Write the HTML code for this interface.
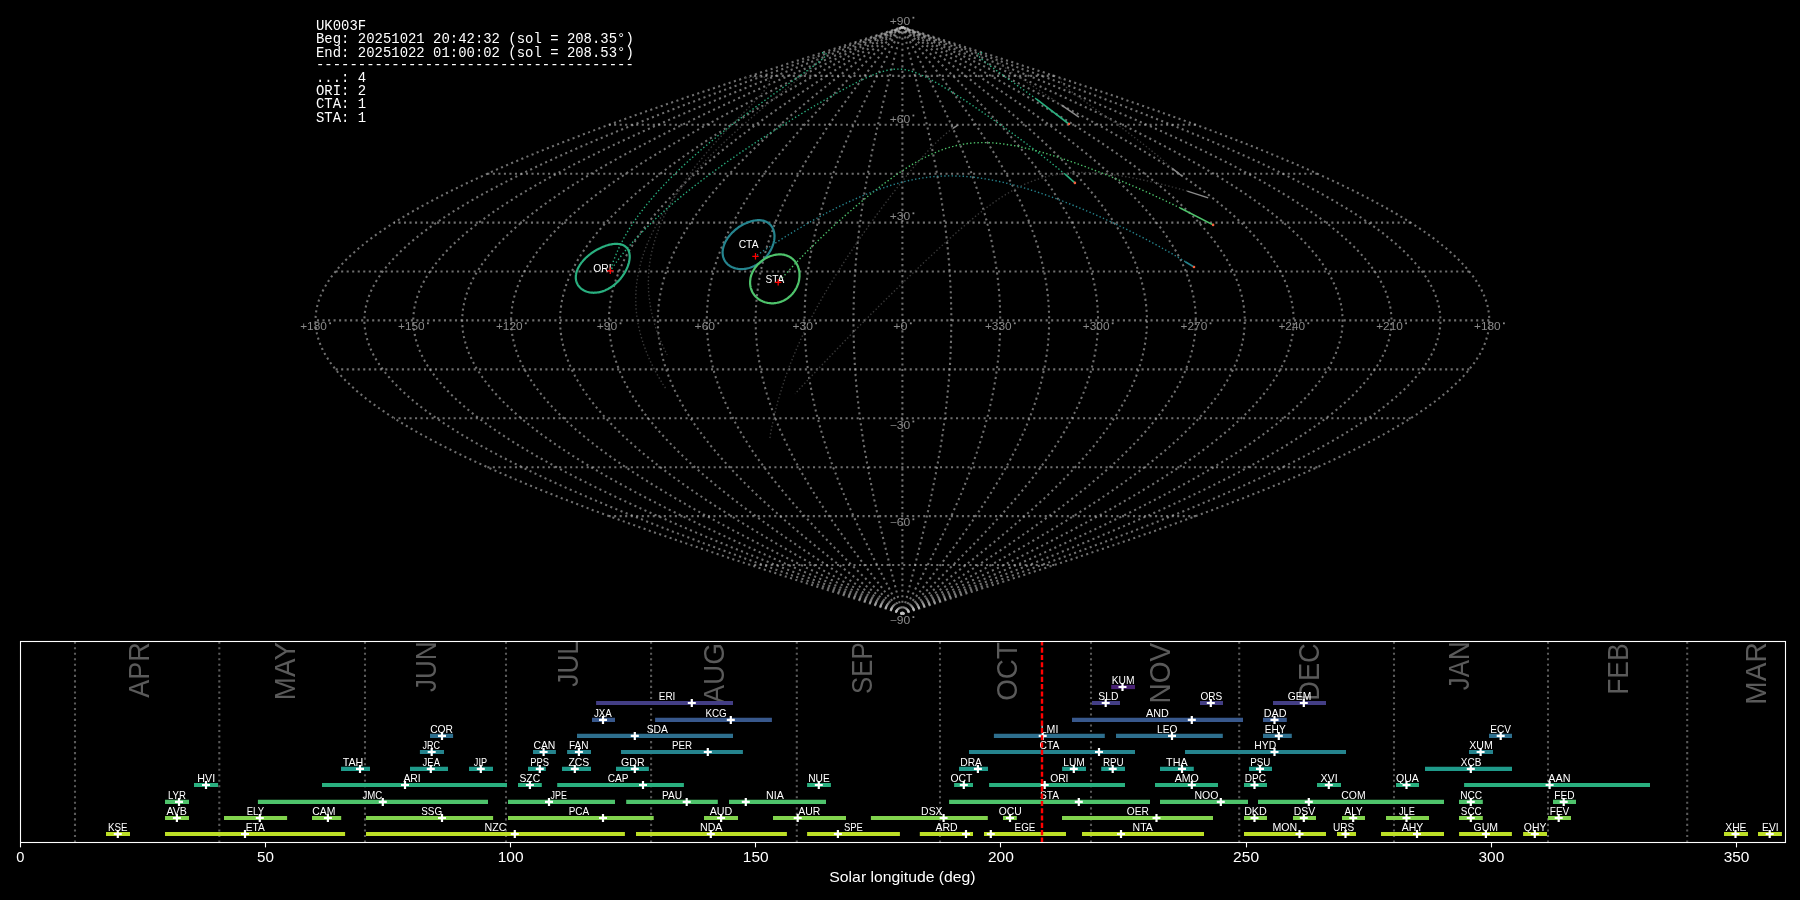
<!DOCTYPE html>
<html><head><meta charset="utf-8"><title>UK003F</title>
<style>html,body{margin:0;padding:0;background:#000;width:1800px;height:900px;overflow:hidden}svg{display:block;will-change:transform}</style>
</head><body>
<svg width="1800" height="900" viewBox="0 0 1800 900">
<rect width="1800" height="900" fill="#000"/>
<g fill="none" stroke="#c0c0c0" stroke-opacity="0.58" stroke-width="2.08" stroke-dasharray="2.08 3.44"><path d="M902.4 613.9 L907.5 612.3 L912.6 610.6 L917.8 609.0 L922.9 607.4 L928.0 605.7 L933.1 604.1 L938.2 602.5 L943.3 600.9 L948.4 599.2 L953.6 597.6 L958.7 596.0 L963.7 594.3 L968.8 592.7 L973.9 591.1 L979.0 589.4 L984.1 587.8 L989.1 586.2 L994.2 584.6 L999.3 582.9 L1004.3 581.3 L1009.4 579.7 L1014.4 578.0 L1019.4 576.4 L1024.4 574.8 L1029.4 573.1 L1034.4 571.5 L1039.4 569.9 L1044.4 568.3 L1049.3 566.6 L1054.3 565.0 L1059.2 563.4 L1064.2 561.7 L1069.1 560.1 L1074.0 558.5 L1078.9 556.8 L1083.8 555.2 L1088.6 553.6 L1093.5 551.9 L1098.3 550.3 L1103.1 548.7 L1107.9 547.1 L1112.7 545.4 L1117.5 543.8 L1122.3 542.2 L1127.0 540.5 L1131.7 538.9 L1136.4 537.3 L1141.1 535.6 L1145.8 534.0 L1150.4 532.4 L1155.1 530.8 L1159.7 529.1 L1164.3 527.5 L1168.8 525.9 L1173.4 524.2 L1177.9 522.6 L1182.4 521.0 L1186.9 519.3 L1191.4 517.7 L1195.8 516.1 L1200.3 514.5 L1204.7 512.8 L1209.1 511.2 L1213.4 509.6 L1217.7 507.9 L1222.0 506.3 L1226.3 504.7 L1230.6 503.0 L1234.8 501.4 L1239.0 499.8 L1243.2 498.2 L1247.4 496.5 L1251.5 494.9 L1255.6 493.3 L1259.7 491.6 L1263.7 490.0 L1267.8 488.4 L1271.7 486.7 L1275.7 485.1 L1279.7 483.5 L1283.6 481.8 L1287.4 480.2 L1291.3 478.6 L1295.1 477.0 L1298.9 475.3 L1302.7 473.7 L1306.4 472.1 L1310.1 470.4 L1313.8 468.8 L1317.4 467.2 L1321.0 465.5 L1324.6 463.9 L1328.1 462.3 L1331.6 460.7 L1335.1 459.0 L1338.6 457.4 L1342.0 455.8 L1345.3 454.1 L1348.7 452.5 L1352.0 450.9 L1355.3 449.2 L1358.5 447.6 L1361.7 446.0 L1364.9 444.4 L1368.0 442.7 L1371.1 441.1 L1374.2 439.5 L1377.2 437.8 L1380.2 436.2 L1383.2 434.6 L1386.1 432.9 L1389.0 431.3 L1391.8 429.7 L1394.6 428.0 L1397.4 426.4 L1400.1 424.8 L1402.8 423.2 L1405.5 421.5 L1408.1 419.9 L1410.7 418.3 L1413.2 416.6 L1415.7 415.0 L1418.2 413.4 L1420.6 411.7 L1423.0 410.1 L1425.3 408.5 L1427.6 406.9 L1429.9 405.2 L1432.1 403.6 L1434.3 402.0 L1436.5 400.3 L1438.6 398.7 L1440.6 397.1 L1442.6 395.4 L1444.6 393.8 L1446.6 392.2 L1448.5 390.6 L1450.3 388.9 L1452.1 387.3 L1453.9 385.7 L1455.6 384.0 L1457.3 382.4 L1459.0 380.8 L1460.6 379.1 L1462.1 377.5 L1463.7 375.9 L1465.1 374.2 L1466.6 372.6 L1468.0 371.0 L1469.3 369.4 L1470.6 367.7 L1471.9 366.1 L1473.1 364.5 L1474.3 362.8 L1475.4 361.2 L1476.5 359.6 L1477.5 357.9 L1478.5 356.3 L1479.5 354.7 L1480.4 353.1 L1481.3 351.4 L1482.1 349.8 L1482.9 348.2 L1483.6 346.5 L1484.3 344.9 L1484.9 343.3 L1485.5 341.6 L1486.1 340.0 L1486.6 338.4 L1487.1 336.8 L1487.5 335.1 L1487.9 333.5 L1488.2 331.9 L1488.5 330.2 L1488.7 328.6 L1488.9 327.0 L1489.1 325.3 L1489.2 323.7 L1489.3 322.1 L1489.3 320.4 L1489.3 318.8 L1489.2 317.2 L1489.1 315.6 L1488.9 313.9 L1488.7 312.3 L1488.5 310.7 L1488.2 309.0 L1487.9 307.4 L1487.5 305.8 L1487.1 304.1 L1486.6 302.5 L1486.1 300.9 L1485.5 299.3 L1484.9 297.6 L1484.3 296.0 L1483.6 294.4 L1482.9 292.7 L1482.1 291.1 L1481.3 289.5 L1480.4 287.8 L1479.5 286.2 L1478.5 284.6 L1477.5 283.0 L1476.5 281.3 L1475.4 279.7 L1474.3 278.1 L1473.1 276.4 L1471.9 274.8 L1470.6 273.2 L1469.3 271.5 L1468.0 269.9 L1466.6 268.3 L1465.1 266.7 L1463.7 265.0 L1462.1 263.4 L1460.6 261.8 L1459.0 260.1 L1457.3 258.5 L1455.6 256.9 L1453.9 255.2 L1452.1 253.6 L1450.3 252.0 L1448.5 250.3 L1446.6 248.7 L1444.6 247.1 L1442.6 245.5 L1440.6 243.8 L1438.6 242.2 L1436.5 240.6 L1434.3 238.9 L1432.1 237.3 L1429.9 235.7 L1427.6 234.0 L1425.3 232.4 L1423.0 230.8 L1420.6 229.2 L1418.2 227.5 L1415.7 225.9 L1413.2 224.3 L1410.7 222.6 L1408.1 221.0 L1405.5 219.4 L1402.8 217.7 L1400.1 216.1 L1397.4 214.5 L1394.6 212.9 L1391.8 211.2 L1389.0 209.6 L1386.1 208.0 L1383.2 206.3 L1380.2 204.7 L1377.2 203.1 L1374.2 201.4 L1371.1 199.8 L1368.0 198.2 L1364.9 196.5 L1361.7 194.9 L1358.5 193.3 L1355.3 191.7 L1352.0 190.0 L1348.7 188.4 L1345.3 186.8 L1342.0 185.1 L1338.6 183.5 L1335.1 181.9 L1331.6 180.2 L1328.1 178.6 L1324.6 177.0 L1321.0 175.4 L1317.4 173.7 L1313.8 172.1 L1310.1 170.5 L1306.4 168.8 L1302.7 167.2 L1298.9 165.6 L1295.1 163.9 L1291.3 162.3 L1287.4 160.7 L1283.6 159.1 L1279.7 157.4 L1275.7 155.8 L1271.7 154.2 L1267.8 152.5 L1263.7 150.9 L1259.7 149.3 L1255.6 147.6 L1251.5 146.0 L1247.4 144.4 L1243.2 142.7 L1239.0 141.1 L1234.8 139.5 L1230.6 137.9 L1226.3 136.2 L1222.0 134.6 L1217.7 133.0 L1213.4 131.3 L1209.1 129.7 L1204.7 128.1 L1200.3 126.4 L1195.8 124.8 L1191.4 123.2 L1186.9 121.6 L1182.4 119.9 L1177.9 118.3 L1173.4 116.7 L1168.8 115.0 L1164.3 113.4 L1159.7 111.8 L1155.1 110.1 L1150.4 108.5 L1145.8 106.9 L1141.1 105.3 L1136.4 103.6 L1131.7 102.0 L1127.0 100.4 L1122.3 98.7 L1117.5 97.1 L1112.7 95.5 L1107.9 93.8 L1103.1 92.2 L1098.3 90.6 L1093.5 89.0 L1088.6 87.3 L1083.8 85.7 L1078.9 84.1 L1074.0 82.4 L1069.1 80.8 L1064.2 79.2 L1059.2 77.5 L1054.3 75.9 L1049.3 74.3 L1044.4 72.6 L1039.4 71.0 L1034.4 69.4 L1029.4 67.8 L1024.4 66.1 L1019.4 64.5 L1014.4 62.9 L1009.4 61.2 L1004.3 59.6 L999.3 58.0 L994.2 56.3 L989.1 54.7 L984.1 53.1 L979.0 51.5 L973.9 49.8 L968.8 48.2 L963.7 46.6 L958.7 44.9 L953.6 43.3 L948.4 41.7 L943.3 40.0 L938.2 38.4 L933.1 36.8 L928.0 35.2 L922.9 33.5 L917.8 31.9 L912.6 30.3 L907.5 28.6 L902.4 27.0"/><path d="M902.4 613.9 L907.1 612.3 L911.8 610.6 L916.5 609.0 L921.2 607.4 L925.9 605.7 L930.6 604.1 L935.2 602.5 L939.9 600.9 L944.6 599.2 L949.3 597.6 L954.0 596.0 L958.6 594.3 L963.3 592.7 L968.0 591.1 L972.6 589.4 L977.3 587.8 L981.9 586.2 L986.6 584.6 L991.2 582.9 L995.8 581.3 L1000.4 579.7 L1005.1 578.0 L1009.7 576.4 L1014.3 574.8 L1018.8 573.1 L1023.4 571.5 L1028.0 569.9 L1032.6 568.3 L1037.1 566.6 L1041.6 565.0 L1046.2 563.4 L1050.7 561.7 L1055.2 560.1 L1059.7 558.5 L1064.2 556.8 L1068.6 555.2 L1073.1 553.6 L1077.6 551.9 L1082.0 550.3 L1086.4 548.7 L1090.8 547.1 L1095.2 545.4 L1099.6 543.8 L1103.9 542.2 L1108.3 540.5 L1112.6 538.9 L1116.9 537.3 L1121.2 535.6 L1125.5 534.0 L1129.8 532.4 L1134.0 530.8 L1138.2 529.1 L1142.5 527.5 L1146.6 525.9 L1150.8 524.2 L1155.0 522.6 L1159.1 521.0 L1163.2 519.3 L1167.3 517.7 L1171.4 516.1 L1175.5 514.5 L1179.5 512.8 L1183.5 511.2 L1187.5 509.6 L1191.5 507.9 L1195.4 506.3 L1199.3 504.7 L1203.2 503.0 L1207.1 501.4 L1211.0 499.8 L1214.8 498.2 L1218.6 496.5 L1222.4 494.9 L1226.2 493.3 L1229.9 491.6 L1233.6 490.0 L1237.3 488.4 L1241.0 486.7 L1244.6 485.1 L1248.2 483.5 L1251.8 481.8 L1255.4 480.2 L1258.9 478.6 L1262.4 477.0 L1265.9 475.3 L1269.3 473.7 L1272.7 472.1 L1276.1 470.4 L1279.5 468.8 L1282.8 467.2 L1286.1 465.5 L1289.4 463.9 L1292.6 462.3 L1295.9 460.7 L1299.0 459.0 L1302.2 457.4 L1305.3 455.8 L1308.4 454.1 L1311.5 452.5 L1314.5 450.9 L1317.5 449.2 L1320.5 447.6 L1323.4 446.0 L1326.3 444.4 L1329.2 442.7 L1332.1 441.1 L1334.9 439.5 L1337.6 437.8 L1340.4 436.2 L1343.1 434.6 L1345.8 432.9 L1348.4 431.3 L1351.0 429.7 L1353.6 428.0 L1356.1 426.4 L1358.6 424.8 L1361.1 423.2 L1363.5 421.5 L1365.9 419.9 L1368.3 418.3 L1370.6 416.6 L1372.9 415.0 L1375.2 413.4 L1377.4 411.7 L1379.6 410.1 L1381.8 408.5 L1383.9 406.9 L1385.9 405.2 L1388.0 403.6 L1390.0 402.0 L1392.0 400.3 L1393.9 398.7 L1395.8 397.1 L1397.6 395.4 L1399.4 393.8 L1401.2 392.2 L1403.0 390.6 L1404.7 388.9 L1406.3 387.3 L1407.9 385.7 L1409.5 384.0 L1411.1 382.4 L1412.6 380.8 L1414.1 379.1 L1415.5 377.5 L1416.9 375.9 L1418.2 374.2 L1419.6 372.6 L1420.8 371.0 L1422.1 369.4 L1423.3 367.7 L1424.4 366.1 L1425.5 364.5 L1426.6 362.8 L1427.6 361.2 L1428.6 359.6 L1429.6 357.9 L1430.5 356.3 L1431.4 354.7 L1432.2 353.1 L1433.0 351.4 L1433.8 349.8 L1434.5 348.2 L1435.2 346.5 L1435.8 344.9 L1436.4 343.3 L1436.9 341.6 L1437.4 340.0 L1437.9 338.4 L1438.3 336.8 L1438.7 335.1 L1439.1 333.5 L1439.4 331.9 L1439.7 330.2 L1439.9 328.6 L1440.1 327.0 L1440.2 325.3 L1440.3 323.7 L1440.4 322.1 L1440.4 320.4 L1440.4 318.8 L1440.3 317.2 L1440.2 315.6 L1440.1 313.9 L1439.9 312.3 L1439.7 310.7 L1439.4 309.0 L1439.1 307.4 L1438.7 305.8 L1438.3 304.1 L1437.9 302.5 L1437.4 300.9 L1436.9 299.3 L1436.4 297.6 L1435.8 296.0 L1435.2 294.4 L1434.5 292.7 L1433.8 291.1 L1433.0 289.5 L1432.2 287.8 L1431.4 286.2 L1430.5 284.6 L1429.6 283.0 L1428.6 281.3 L1427.6 279.7 L1426.6 278.1 L1425.5 276.4 L1424.4 274.8 L1423.3 273.2 L1422.1 271.5 L1420.8 269.9 L1419.6 268.3 L1418.2 266.7 L1416.9 265.0 L1415.5 263.4 L1414.1 261.8 L1412.6 260.1 L1411.1 258.5 L1409.5 256.9 L1407.9 255.2 L1406.3 253.6 L1404.7 252.0 L1403.0 250.3 L1401.2 248.7 L1399.4 247.1 L1397.6 245.5 L1395.8 243.8 L1393.9 242.2 L1392.0 240.6 L1390.0 238.9 L1388.0 237.3 L1385.9 235.7 L1383.9 234.0 L1381.8 232.4 L1379.6 230.8 L1377.4 229.2 L1375.2 227.5 L1372.9 225.9 L1370.6 224.3 L1368.3 222.6 L1365.9 221.0 L1363.5 219.4 L1361.1 217.7 L1358.6 216.1 L1356.1 214.5 L1353.6 212.9 L1351.0 211.2 L1348.4 209.6 L1345.8 208.0 L1343.1 206.3 L1340.4 204.7 L1337.6 203.1 L1334.9 201.4 L1332.1 199.8 L1329.2 198.2 L1326.3 196.5 L1323.4 194.9 L1320.5 193.3 L1317.5 191.7 L1314.5 190.0 L1311.5 188.4 L1308.4 186.8 L1305.3 185.1 L1302.2 183.5 L1299.0 181.9 L1295.9 180.2 L1292.6 178.6 L1289.4 177.0 L1286.1 175.4 L1282.8 173.7 L1279.5 172.1 L1276.1 170.5 L1272.7 168.8 L1269.3 167.2 L1265.9 165.6 L1262.4 163.9 L1258.9 162.3 L1255.4 160.7 L1251.8 159.1 L1248.2 157.4 L1244.6 155.8 L1241.0 154.2 L1237.3 152.5 L1233.6 150.9 L1229.9 149.3 L1226.2 147.6 L1222.4 146.0 L1218.6 144.4 L1214.8 142.7 L1211.0 141.1 L1207.1 139.5 L1203.2 137.9 L1199.3 136.2 L1195.4 134.6 L1191.5 133.0 L1187.5 131.3 L1183.5 129.7 L1179.5 128.1 L1175.5 126.4 L1171.4 124.8 L1167.3 123.2 L1163.2 121.6 L1159.1 119.9 L1155.0 118.3 L1150.8 116.7 L1146.6 115.0 L1142.5 113.4 L1138.2 111.8 L1134.0 110.1 L1129.8 108.5 L1125.5 106.9 L1121.2 105.3 L1116.9 103.6 L1112.6 102.0 L1108.3 100.4 L1103.9 98.7 L1099.6 97.1 L1095.2 95.5 L1090.8 93.8 L1086.4 92.2 L1082.0 90.6 L1077.6 89.0 L1073.1 87.3 L1068.6 85.7 L1064.2 84.1 L1059.7 82.4 L1055.2 80.8 L1050.7 79.2 L1046.2 77.5 L1041.6 75.9 L1037.1 74.3 L1032.6 72.6 L1028.0 71.0 L1023.4 69.4 L1018.8 67.8 L1014.3 66.1 L1009.7 64.5 L1005.1 62.9 L1000.4 61.2 L995.8 59.6 L991.2 58.0 L986.6 56.3 L981.9 54.7 L977.3 53.1 L972.6 51.5 L968.0 49.8 L963.3 48.2 L958.6 46.6 L954.0 44.9 L949.3 43.3 L944.6 41.7 L939.9 40.0 L935.2 38.4 L930.6 36.8 L925.9 35.2 L921.2 33.5 L916.5 31.9 L911.8 30.3 L907.1 28.6 L902.4 27.0"/><path d="M902.4 613.9 L906.7 612.3 L910.9 610.6 L915.2 609.0 L919.5 607.4 L923.7 605.7 L928.0 604.1 L932.3 602.5 L936.5 600.9 L940.8 599.2 L945.0 597.6 L949.3 596.0 L953.5 594.3 L957.8 592.7 L962.0 591.1 L966.2 589.4 L970.5 587.8 L974.7 586.2 L978.9 584.6 L983.1 582.9 L987.3 581.3 L991.5 579.7 L995.7 578.0 L999.9 576.4 L1004.1 574.8 L1008.3 573.1 L1012.4 571.5 L1016.6 569.9 L1020.7 568.3 L1024.9 566.6 L1029.0 565.0 L1033.1 563.4 L1037.2 561.7 L1041.3 560.1 L1045.4 558.5 L1049.5 556.8 L1053.5 555.2 L1057.6 553.6 L1061.6 551.9 L1065.7 550.3 L1069.7 548.7 L1073.7 547.1 L1077.7 545.4 L1081.6 543.8 L1085.6 542.2 L1089.6 540.5 L1093.5 538.9 L1097.4 537.3 L1101.3 535.6 L1105.2 534.0 L1109.1 532.4 L1113.0 530.8 L1116.8 529.1 L1120.6 527.5 L1124.4 525.9 L1128.2 524.2 L1132.0 522.6 L1135.8 521.0 L1139.5 519.3 L1143.2 517.7 L1146.9 516.1 L1150.6 514.5 L1154.3 512.8 L1157.9 511.2 L1161.6 509.6 L1165.2 507.9 L1168.8 506.3 L1172.3 504.7 L1175.9 503.0 L1179.4 501.4 L1182.9 499.8 L1186.4 498.2 L1189.9 496.5 L1193.3 494.9 L1196.7 493.3 L1200.1 491.6 L1203.5 490.0 L1206.9 488.4 L1210.2 486.7 L1213.5 485.1 L1216.8 483.5 L1220.0 481.8 L1223.3 480.2 L1226.5 478.6 L1229.7 477.0 L1232.8 475.3 L1236.0 473.7 L1239.1 472.1 L1242.1 470.4 L1245.2 468.8 L1248.2 467.2 L1251.2 465.5 L1254.2 463.9 L1257.2 462.3 L1260.1 460.7 L1263.0 459.0 L1265.9 457.4 L1268.7 455.8 L1271.5 454.1 L1274.3 452.5 L1277.1 450.9 L1279.8 449.2 L1282.5 447.6 L1285.2 446.0 L1287.8 444.4 L1290.4 442.7 L1293.0 441.1 L1295.6 439.5 L1298.1 437.8 L1300.6 436.2 L1303.0 434.6 L1305.5 432.9 L1307.9 431.3 L1310.2 429.7 L1312.6 428.0 L1314.9 426.4 L1317.2 424.8 L1319.4 423.2 L1321.6 421.5 L1323.8 419.9 L1326.0 418.3 L1328.1 416.6 L1330.2 415.0 L1332.2 413.4 L1334.2 411.7 L1336.2 410.1 L1338.2 408.5 L1340.1 406.9 L1342.0 405.2 L1343.8 403.6 L1345.7 402.0 L1347.4 400.3 L1349.2 398.7 L1350.9 397.1 L1352.6 395.4 L1354.3 393.8 L1355.9 392.2 L1357.5 390.6 L1359.0 388.9 L1360.5 387.3 L1362.0 385.7 L1363.4 384.0 L1364.8 382.4 L1366.2 380.8 L1367.5 379.1 L1368.8 377.5 L1370.1 375.9 L1371.3 374.2 L1372.5 372.6 L1373.7 371.0 L1374.8 369.4 L1375.9 367.7 L1377.0 366.1 L1378.0 364.5 L1378.9 362.8 L1379.9 361.2 L1380.8 359.6 L1381.7 357.9 L1382.5 356.3 L1383.3 354.7 L1384.1 353.1 L1384.8 351.4 L1385.5 349.8 L1386.1 348.2 L1386.7 346.5 L1387.3 344.9 L1387.8 343.3 L1388.3 341.6 L1388.8 340.0 L1389.2 338.4 L1389.6 336.8 L1390.0 335.1 L1390.3 333.5 L1390.6 331.9 L1390.8 330.2 L1391.0 328.6 L1391.2 327.0 L1391.3 325.3 L1391.4 323.7 L1391.5 322.1 L1391.5 320.4 L1391.5 318.8 L1391.4 317.2 L1391.3 315.6 L1391.2 313.9 L1391.0 312.3 L1390.8 310.7 L1390.6 309.0 L1390.3 307.4 L1390.0 305.8 L1389.6 304.1 L1389.2 302.5 L1388.8 300.9 L1388.3 299.3 L1387.8 297.6 L1387.3 296.0 L1386.7 294.4 L1386.1 292.7 L1385.5 291.1 L1384.8 289.5 L1384.1 287.8 L1383.3 286.2 L1382.5 284.6 L1381.7 283.0 L1380.8 281.3 L1379.9 279.7 L1378.9 278.1 L1378.0 276.4 L1377.0 274.8 L1375.9 273.2 L1374.8 271.5 L1373.7 269.9 L1372.5 268.3 L1371.3 266.7 L1370.1 265.0 L1368.8 263.4 L1367.5 261.8 L1366.2 260.1 L1364.8 258.5 L1363.4 256.9 L1362.0 255.2 L1360.5 253.6 L1359.0 252.0 L1357.5 250.3 L1355.9 248.7 L1354.3 247.1 L1352.6 245.5 L1350.9 243.8 L1349.2 242.2 L1347.4 240.6 L1345.7 238.9 L1343.8 237.3 L1342.0 235.7 L1340.1 234.0 L1338.2 232.4 L1336.2 230.8 L1334.2 229.2 L1332.2 227.5 L1330.2 225.9 L1328.1 224.3 L1326.0 222.6 L1323.8 221.0 L1321.6 219.4 L1319.4 217.7 L1317.2 216.1 L1314.9 214.5 L1312.6 212.9 L1310.2 211.2 L1307.9 209.6 L1305.5 208.0 L1303.0 206.3 L1300.6 204.7 L1298.1 203.1 L1295.6 201.4 L1293.0 199.8 L1290.4 198.2 L1287.8 196.5 L1285.2 194.9 L1282.5 193.3 L1279.8 191.7 L1277.1 190.0 L1274.3 188.4 L1271.5 186.8 L1268.7 185.1 L1265.9 183.5 L1263.0 181.9 L1260.1 180.2 L1257.2 178.6 L1254.2 177.0 L1251.2 175.4 L1248.2 173.7 L1245.2 172.1 L1242.1 170.5 L1239.1 168.8 L1236.0 167.2 L1232.8 165.6 L1229.7 163.9 L1226.5 162.3 L1223.3 160.7 L1220.0 159.1 L1216.8 157.4 L1213.5 155.8 L1210.2 154.2 L1206.9 152.5 L1203.5 150.9 L1200.1 149.3 L1196.7 147.6 L1193.3 146.0 L1189.9 144.4 L1186.4 142.7 L1182.9 141.1 L1179.4 139.5 L1175.9 137.9 L1172.3 136.2 L1168.8 134.6 L1165.2 133.0 L1161.6 131.3 L1157.9 129.7 L1154.3 128.1 L1150.6 126.4 L1146.9 124.8 L1143.2 123.2 L1139.5 121.6 L1135.8 119.9 L1132.0 118.3 L1128.2 116.7 L1124.4 115.0 L1120.6 113.4 L1116.8 111.8 L1113.0 110.1 L1109.1 108.5 L1105.2 106.9 L1101.3 105.3 L1097.4 103.6 L1093.5 102.0 L1089.6 100.4 L1085.6 98.7 L1081.6 97.1 L1077.7 95.5 L1073.7 93.8 L1069.7 92.2 L1065.7 90.6 L1061.6 89.0 L1057.6 87.3 L1053.5 85.7 L1049.5 84.1 L1045.4 82.4 L1041.3 80.8 L1037.2 79.2 L1033.1 77.5 L1029.0 75.9 L1024.9 74.3 L1020.7 72.6 L1016.6 71.0 L1012.4 69.4 L1008.3 67.8 L1004.1 66.1 L999.9 64.5 L995.7 62.9 L991.5 61.2 L987.3 59.6 L983.1 58.0 L978.9 56.3 L974.7 54.7 L970.5 53.1 L966.2 51.5 L962.0 49.8 L957.8 48.2 L953.5 46.6 L949.3 44.9 L945.0 43.3 L940.8 41.7 L936.5 40.0 L932.3 38.4 L928.0 36.8 L923.7 35.2 L919.5 33.5 L915.2 31.9 L910.9 30.3 L906.7 28.6 L902.4 27.0"/><path d="M902.4 613.9 L906.2 612.3 L910.1 610.6 L913.9 609.0 L917.8 607.4 L921.6 605.7 L925.4 604.1 L929.3 602.5 L933.1 600.9 L936.9 599.2 L940.8 597.6 L944.6 596.0 L948.4 594.3 L952.2 592.7 L956.0 591.1 L959.9 589.4 L963.7 587.8 L967.5 586.2 L971.3 584.6 L975.0 582.9 L978.8 581.3 L982.6 579.7 L986.4 578.0 L990.2 576.4 L993.9 574.8 L997.7 573.1 L1001.4 571.5 L1005.2 569.9 L1008.9 568.3 L1012.6 566.6 L1016.3 565.0 L1020.0 563.4 L1023.7 561.7 L1027.4 560.1 L1031.1 558.5 L1034.8 556.8 L1038.4 555.2 L1042.1 553.6 L1045.7 551.9 L1049.3 550.3 L1052.9 548.7 L1056.6 547.1 L1060.1 545.4 L1063.7 543.8 L1067.3 542.2 L1070.8 540.5 L1074.4 538.9 L1077.9 537.3 L1081.4 535.6 L1084.9 534.0 L1088.4 532.4 L1091.9 530.8 L1095.4 529.1 L1098.8 527.5 L1102.2 525.9 L1105.7 524.2 L1109.0 522.6 L1112.4 521.0 L1115.8 519.3 L1119.2 517.7 L1122.5 516.1 L1125.8 514.5 L1129.1 512.8 L1132.4 511.2 L1135.7 509.6 L1138.9 507.9 L1142.1 506.3 L1145.3 504.7 L1148.5 503.0 L1151.7 501.4 L1154.9 499.8 L1158.0 498.2 L1161.1 496.5 L1164.2 494.9 L1167.3 493.3 L1170.4 491.6 L1173.4 490.0 L1176.4 488.4 L1179.4 486.7 L1182.4 485.1 L1185.3 483.5 L1188.3 481.8 L1191.2 480.2 L1194.1 478.6 L1196.9 477.0 L1199.8 475.3 L1202.6 473.7 L1205.4 472.1 L1208.2 470.4 L1210.9 468.8 L1213.7 467.2 L1216.4 465.5 L1219.0 463.9 L1221.7 462.3 L1224.3 460.7 L1226.9 459.0 L1229.5 457.4 L1232.1 455.8 L1234.6 454.1 L1237.1 452.5 L1239.6 450.9 L1242.0 449.2 L1244.5 447.6 L1246.9 446.0 L1249.3 444.4 L1251.6 442.7 L1253.9 441.1 L1256.2 439.5 L1258.5 437.8 L1260.8 436.2 L1263.0 434.6 L1265.2 432.9 L1267.3 431.3 L1269.5 429.7 L1271.6 428.0 L1273.6 426.4 L1275.7 424.8 L1277.7 423.2 L1279.7 421.5 L1281.7 419.9 L1283.6 418.3 L1285.5 416.6 L1287.4 415.0 L1289.2 413.4 L1291.1 411.7 L1292.8 410.1 L1294.6 408.5 L1296.3 406.9 L1298.0 405.2 L1299.7 403.6 L1301.3 402.0 L1302.9 400.3 L1304.5 398.7 L1306.1 397.1 L1307.6 395.4 L1309.1 393.8 L1310.5 392.2 L1311.9 390.6 L1313.3 388.9 L1314.7 387.3 L1316.0 385.7 L1317.3 384.0 L1318.6 382.4 L1319.8 380.8 L1321.0 379.1 L1322.2 377.5 L1323.3 375.9 L1324.4 374.2 L1325.5 372.6 L1326.6 371.0 L1327.6 369.4 L1328.6 367.7 L1329.5 366.1 L1330.4 364.5 L1331.3 362.8 L1332.1 361.2 L1333.0 359.6 L1333.7 357.9 L1334.5 356.3 L1335.2 354.7 L1335.9 353.1 L1336.5 351.4 L1337.2 349.8 L1337.7 348.2 L1338.3 346.5 L1338.8 344.9 L1339.3 343.3 L1339.7 341.6 L1340.2 340.0 L1340.5 338.4 L1340.9 336.8 L1341.2 335.1 L1341.5 333.5 L1341.8 331.9 L1342.0 330.2 L1342.2 328.6 L1342.3 327.0 L1342.4 325.3 L1342.5 323.7 L1342.6 322.1 L1342.6 320.4 L1342.6 318.8 L1342.5 317.2 L1342.4 315.6 L1342.3 313.9 L1342.2 312.3 L1342.0 310.7 L1341.8 309.0 L1341.5 307.4 L1341.2 305.8 L1340.9 304.1 L1340.5 302.5 L1340.2 300.9 L1339.7 299.3 L1339.3 297.6 L1338.8 296.0 L1338.3 294.4 L1337.7 292.7 L1337.2 291.1 L1336.5 289.5 L1335.9 287.8 L1335.2 286.2 L1334.5 284.6 L1333.7 283.0 L1333.0 281.3 L1332.1 279.7 L1331.3 278.1 L1330.4 276.4 L1329.5 274.8 L1328.6 273.2 L1327.6 271.5 L1326.6 269.9 L1325.5 268.3 L1324.4 266.7 L1323.3 265.0 L1322.2 263.4 L1321.0 261.8 L1319.8 260.1 L1318.6 258.5 L1317.3 256.9 L1316.0 255.2 L1314.7 253.6 L1313.3 252.0 L1311.9 250.3 L1310.5 248.7 L1309.1 247.1 L1307.6 245.5 L1306.1 243.8 L1304.5 242.2 L1302.9 240.6 L1301.3 238.9 L1299.7 237.3 L1298.0 235.7 L1296.3 234.0 L1294.6 232.4 L1292.8 230.8 L1291.1 229.2 L1289.2 227.5 L1287.4 225.9 L1285.5 224.3 L1283.6 222.6 L1281.7 221.0 L1279.7 219.4 L1277.7 217.7 L1275.7 216.1 L1273.6 214.5 L1271.6 212.9 L1269.5 211.2 L1267.3 209.6 L1265.2 208.0 L1263.0 206.3 L1260.8 204.7 L1258.5 203.1 L1256.2 201.4 L1253.9 199.8 L1251.6 198.2 L1249.3 196.5 L1246.9 194.9 L1244.5 193.3 L1242.0 191.7 L1239.6 190.0 L1237.1 188.4 L1234.6 186.8 L1232.1 185.1 L1229.5 183.5 L1226.9 181.9 L1224.3 180.2 L1221.7 178.6 L1219.0 177.0 L1216.4 175.4 L1213.7 173.7 L1210.9 172.1 L1208.2 170.5 L1205.4 168.8 L1202.6 167.2 L1199.8 165.6 L1196.9 163.9 L1194.1 162.3 L1191.2 160.7 L1188.3 159.1 L1185.3 157.4 L1182.4 155.8 L1179.4 154.2 L1176.4 152.5 L1173.4 150.9 L1170.4 149.3 L1167.3 147.6 L1164.2 146.0 L1161.1 144.4 L1158.0 142.7 L1154.9 141.1 L1151.7 139.5 L1148.5 137.9 L1145.3 136.2 L1142.1 134.6 L1138.9 133.0 L1135.7 131.3 L1132.4 129.7 L1129.1 128.1 L1125.8 126.4 L1122.5 124.8 L1119.2 123.2 L1115.8 121.6 L1112.4 119.9 L1109.0 118.3 L1105.7 116.7 L1102.2 115.0 L1098.8 113.4 L1095.4 111.8 L1091.9 110.1 L1088.4 108.5 L1084.9 106.9 L1081.4 105.3 L1077.9 103.6 L1074.4 102.0 L1070.8 100.4 L1067.3 98.7 L1063.7 97.1 L1060.1 95.5 L1056.6 93.8 L1052.9 92.2 L1049.3 90.6 L1045.7 89.0 L1042.1 87.3 L1038.4 85.7 L1034.8 84.1 L1031.1 82.4 L1027.4 80.8 L1023.7 79.2 L1020.0 77.5 L1016.3 75.9 L1012.6 74.3 L1008.9 72.6 L1005.2 71.0 L1001.4 69.4 L997.7 67.8 L993.9 66.1 L990.2 64.5 L986.4 62.9 L982.6 61.2 L978.8 59.6 L975.0 58.0 L971.3 56.3 L967.5 54.7 L963.7 53.1 L959.9 51.5 L956.0 49.8 L952.2 48.2 L948.4 46.6 L944.6 44.9 L940.8 43.3 L936.9 41.7 L933.1 40.0 L929.3 38.4 L925.4 36.8 L921.6 35.2 L917.8 33.5 L913.9 31.9 L910.1 30.3 L906.2 28.6 L902.4 27.0"/><path d="M902.4 613.9 L905.8 612.3 L909.2 610.6 L912.6 609.0 L916.1 607.4 L919.5 605.7 L922.9 604.1 L926.3 602.5 L929.7 600.9 L933.1 599.2 L936.5 597.6 L939.9 596.0 L943.3 594.3 L946.7 592.7 L950.1 591.1 L953.5 589.4 L956.9 587.8 L960.2 586.2 L963.6 584.6 L967.0 582.9 L970.3 581.3 L973.7 579.7 L977.1 578.0 L980.4 576.4 L983.7 574.8 L987.1 573.1 L990.4 571.5 L993.7 569.9 L997.1 568.3 L1000.4 566.6 L1003.7 565.0 L1007.0 563.4 L1010.2 561.7 L1013.5 560.1 L1016.8 558.5 L1020.1 556.8 L1023.3 555.2 L1026.6 553.6 L1029.8 551.9 L1033.0 550.3 L1036.2 548.7 L1039.4 547.1 L1042.6 545.4 L1045.8 543.8 L1049.0 542.2 L1052.1 540.5 L1055.3 538.9 L1058.4 537.3 L1061.5 535.6 L1064.7 534.0 L1067.8 532.4 L1070.8 530.8 L1073.9 529.1 L1077.0 527.5 L1080.0 525.9 L1083.1 524.2 L1086.1 522.6 L1089.1 521.0 L1092.1 519.3 L1095.1 517.7 L1098.0 516.1 L1101.0 514.5 L1103.9 512.8 L1106.8 511.2 L1109.7 509.6 L1112.6 507.9 L1115.5 506.3 L1118.4 504.7 L1121.2 503.0 L1124.0 501.4 L1126.8 499.8 L1129.6 498.2 L1132.4 496.5 L1135.1 494.9 L1137.9 493.3 L1140.6 491.6 L1143.3 490.0 L1146.0 488.4 L1148.6 486.7 L1151.3 485.1 L1153.9 483.5 L1156.5 481.8 L1159.1 480.2 L1161.7 478.6 L1164.2 477.0 L1166.7 475.3 L1169.2 473.7 L1171.7 472.1 L1174.2 470.4 L1176.6 468.8 L1179.1 467.2 L1181.5 465.5 L1183.9 463.9 L1186.2 462.3 L1188.6 460.7 L1190.9 459.0 L1193.2 457.4 L1195.4 455.8 L1197.7 454.1 L1199.9 452.5 L1202.1 450.9 L1204.3 449.2 L1206.5 447.6 L1208.6 446.0 L1210.7 444.4 L1212.8 442.7 L1214.9 441.1 L1216.9 439.5 L1218.9 437.8 L1220.9 436.2 L1222.9 434.6 L1224.9 432.9 L1226.8 431.3 L1228.7 429.7 L1230.5 428.0 L1232.4 426.4 L1234.2 424.8 L1236.0 423.2 L1237.8 421.5 L1239.5 419.9 L1241.2 418.3 L1242.9 416.6 L1244.6 415.0 L1246.3 413.4 L1247.9 411.7 L1249.5 410.1 L1251.0 408.5 L1252.6 406.9 L1254.1 405.2 L1255.6 403.6 L1257.0 402.0 L1258.4 400.3 L1259.8 398.7 L1261.2 397.1 L1262.6 395.4 L1263.9 393.8 L1265.2 392.2 L1266.4 390.6 L1267.7 388.9 L1268.9 387.3 L1270.1 385.7 L1271.2 384.0 L1272.3 382.4 L1273.4 380.8 L1274.5 379.1 L1275.6 377.5 L1276.6 375.9 L1277.6 374.2 L1278.5 372.6 L1279.4 371.0 L1280.3 369.4 L1281.2 367.7 L1282.0 366.1 L1282.9 364.5 L1283.6 362.8 L1284.4 361.2 L1285.1 359.6 L1285.8 357.9 L1286.5 356.3 L1287.1 354.7 L1287.7 353.1 L1288.3 351.4 L1288.8 349.8 L1289.4 348.2 L1289.9 346.5 L1290.3 344.9 L1290.8 343.3 L1291.2 341.6 L1291.5 340.0 L1291.9 338.4 L1292.2 336.8 L1292.5 335.1 L1292.7 333.5 L1292.9 331.9 L1293.1 330.2 L1293.3 328.6 L1293.4 327.0 L1293.5 325.3 L1293.6 323.7 L1293.7 322.1 L1293.7 320.4 L1293.7 318.8 L1293.6 317.2 L1293.5 315.6 L1293.4 313.9 L1293.3 312.3 L1293.1 310.7 L1292.9 309.0 L1292.7 307.4 L1292.5 305.8 L1292.2 304.1 L1291.9 302.5 L1291.5 300.9 L1291.2 299.3 L1290.8 297.6 L1290.3 296.0 L1289.9 294.4 L1289.4 292.7 L1288.8 291.1 L1288.3 289.5 L1287.7 287.8 L1287.1 286.2 L1286.5 284.6 L1285.8 283.0 L1285.1 281.3 L1284.4 279.7 L1283.6 278.1 L1282.9 276.4 L1282.0 274.8 L1281.2 273.2 L1280.3 271.5 L1279.4 269.9 L1278.5 268.3 L1277.6 266.7 L1276.6 265.0 L1275.6 263.4 L1274.5 261.8 L1273.4 260.1 L1272.3 258.5 L1271.2 256.9 L1270.1 255.2 L1268.9 253.6 L1267.7 252.0 L1266.4 250.3 L1265.2 248.7 L1263.9 247.1 L1262.6 245.5 L1261.2 243.8 L1259.8 242.2 L1258.4 240.6 L1257.0 238.9 L1255.6 237.3 L1254.1 235.7 L1252.6 234.0 L1251.0 232.4 L1249.5 230.8 L1247.9 229.2 L1246.3 227.5 L1244.6 225.9 L1242.9 224.3 L1241.2 222.6 L1239.5 221.0 L1237.8 219.4 L1236.0 217.7 L1234.2 216.1 L1232.4 214.5 L1230.5 212.9 L1228.7 211.2 L1226.8 209.6 L1224.9 208.0 L1222.9 206.3 L1220.9 204.7 L1218.9 203.1 L1216.9 201.4 L1214.9 199.8 L1212.8 198.2 L1210.7 196.5 L1208.6 194.9 L1206.5 193.3 L1204.3 191.7 L1202.1 190.0 L1199.9 188.4 L1197.7 186.8 L1195.4 185.1 L1193.2 183.5 L1190.9 181.9 L1188.6 180.2 L1186.2 178.6 L1183.9 177.0 L1181.5 175.4 L1179.1 173.7 L1176.6 172.1 L1174.2 170.5 L1171.7 168.8 L1169.2 167.2 L1166.7 165.6 L1164.2 163.9 L1161.7 162.3 L1159.1 160.7 L1156.5 159.1 L1153.9 157.4 L1151.3 155.8 L1148.6 154.2 L1146.0 152.5 L1143.3 150.9 L1140.6 149.3 L1137.9 147.6 L1135.1 146.0 L1132.4 144.4 L1129.6 142.7 L1126.8 141.1 L1124.0 139.5 L1121.2 137.9 L1118.4 136.2 L1115.5 134.6 L1112.6 133.0 L1109.7 131.3 L1106.8 129.7 L1103.9 128.1 L1101.0 126.4 L1098.0 124.8 L1095.1 123.2 L1092.1 121.6 L1089.1 119.9 L1086.1 118.3 L1083.1 116.7 L1080.0 115.0 L1077.0 113.4 L1073.9 111.8 L1070.8 110.1 L1067.8 108.5 L1064.7 106.9 L1061.5 105.3 L1058.4 103.6 L1055.3 102.0 L1052.1 100.4 L1049.0 98.7 L1045.8 97.1 L1042.6 95.5 L1039.4 93.8 L1036.2 92.2 L1033.0 90.6 L1029.8 89.0 L1026.6 87.3 L1023.3 85.7 L1020.1 84.1 L1016.8 82.4 L1013.5 80.8 L1010.2 79.2 L1007.0 77.5 L1003.7 75.9 L1000.4 74.3 L997.1 72.6 L993.7 71.0 L990.4 69.4 L987.1 67.8 L983.7 66.1 L980.4 64.5 L977.1 62.9 L973.7 61.2 L970.3 59.6 L967.0 58.0 L963.6 56.3 L960.2 54.7 L956.9 53.1 L953.5 51.5 L950.1 49.8 L946.7 48.2 L943.3 46.6 L939.9 44.9 L936.5 43.3 L933.1 41.7 L929.7 40.0 L926.3 38.4 L922.9 36.8 L919.5 35.2 L916.1 33.5 L912.6 31.9 L909.2 30.3 L905.8 28.6 L902.4 27.0"/><path d="M902.4 613.9 L905.4 612.3 L908.4 610.6 L911.4 609.0 L914.3 607.4 L917.3 605.7 L920.3 604.1 L923.3 602.5 L926.3 600.9 L929.3 599.2 L932.2 597.6 L935.2 596.0 L938.2 594.3 L941.2 592.7 L944.1 591.1 L947.1 589.4 L950.0 587.8 L953.0 586.2 L956.0 584.6 L958.9 582.9 L961.8 581.3 L964.8 579.7 L967.7 578.0 L970.7 576.4 L973.6 574.8 L976.5 573.1 L979.4 571.5 L982.3 569.9 L985.2 568.3 L988.1 566.6 L991.0 565.0 L993.9 563.4 L996.8 561.7 L999.6 560.1 L1002.5 558.5 L1005.3 556.8 L1008.2 555.2 L1011.0 553.6 L1013.9 551.9 L1016.7 550.3 L1019.5 548.7 L1022.3 547.1 L1025.1 545.4 L1027.9 543.8 L1030.6 542.2 L1033.4 540.5 L1036.2 538.9 L1038.9 537.3 L1041.6 535.6 L1044.4 534.0 L1047.1 532.4 L1049.8 530.8 L1052.5 529.1 L1055.2 527.5 L1057.8 525.9 L1060.5 524.2 L1063.1 522.6 L1065.8 521.0 L1068.4 519.3 L1071.0 517.7 L1073.6 516.1 L1076.2 514.5 L1078.7 512.8 L1081.3 511.2 L1083.8 509.6 L1086.3 507.9 L1088.9 506.3 L1091.4 504.7 L1093.8 503.0 L1096.3 501.4 L1098.8 499.8 L1101.2 498.2 L1103.6 496.5 L1106.0 494.9 L1108.4 493.3 L1110.8 491.6 L1113.2 490.0 L1115.5 488.4 L1117.9 486.7 L1120.2 485.1 L1122.5 483.5 L1124.7 481.8 L1127.0 480.2 L1129.3 478.6 L1131.5 477.0 L1133.7 475.3 L1135.9 473.7 L1138.1 472.1 L1140.2 470.4 L1142.4 468.8 L1144.5 467.2 L1146.6 465.5 L1148.7 463.9 L1150.7 462.3 L1152.8 460.7 L1154.8 459.0 L1156.8 457.4 L1158.8 455.8 L1160.8 454.1 L1162.7 452.5 L1164.7 450.9 L1166.6 449.2 L1168.5 447.6 L1170.3 446.0 L1172.2 444.4 L1174.0 442.7 L1175.8 441.1 L1177.6 439.5 L1179.4 437.8 L1181.1 436.2 L1182.8 434.6 L1184.5 432.9 L1186.2 431.3 L1187.9 429.7 L1189.5 428.0 L1191.1 426.4 L1192.7 424.8 L1194.3 423.2 L1195.9 421.5 L1197.4 419.9 L1198.9 418.3 L1200.4 416.6 L1201.8 415.0 L1203.3 413.4 L1204.7 411.7 L1206.1 410.1 L1207.4 408.5 L1208.8 406.9 L1210.1 405.2 L1211.4 403.6 L1212.7 402.0 L1213.9 400.3 L1215.2 398.7 L1216.4 397.1 L1217.5 395.4 L1218.7 393.8 L1219.8 392.2 L1220.9 390.6 L1222.0 388.9 L1223.1 387.3 L1224.1 385.7 L1225.1 384.0 L1226.1 382.4 L1227.1 380.8 L1228.0 379.1 L1228.9 377.5 L1229.8 375.9 L1230.7 374.2 L1231.5 372.6 L1232.3 371.0 L1233.1 369.4 L1233.9 367.7 L1234.6 366.1 L1235.3 364.5 L1236.0 362.8 L1236.6 361.2 L1237.3 359.6 L1237.9 357.9 L1238.5 356.3 L1239.0 354.7 L1239.6 353.1 L1240.1 351.4 L1240.5 349.8 L1241.0 348.2 L1241.4 346.5 L1241.8 344.9 L1242.2 343.3 L1242.6 341.6 L1242.9 340.0 L1243.2 338.4 L1243.5 336.8 L1243.7 335.1 L1243.9 333.5 L1244.1 331.9 L1244.3 330.2 L1244.4 328.6 L1244.5 327.0 L1244.6 325.3 L1244.7 323.7 L1244.7 322.1 L1244.8 320.4 L1244.7 318.8 L1244.7 317.2 L1244.6 315.6 L1244.5 313.9 L1244.4 312.3 L1244.3 310.7 L1244.1 309.0 L1243.9 307.4 L1243.7 305.8 L1243.5 304.1 L1243.2 302.5 L1242.9 300.9 L1242.6 299.3 L1242.2 297.6 L1241.8 296.0 L1241.4 294.4 L1241.0 292.7 L1240.5 291.1 L1240.1 289.5 L1239.6 287.8 L1239.0 286.2 L1238.5 284.6 L1237.9 283.0 L1237.3 281.3 L1236.6 279.7 L1236.0 278.1 L1235.3 276.4 L1234.6 274.8 L1233.9 273.2 L1233.1 271.5 L1232.3 269.9 L1231.5 268.3 L1230.7 266.7 L1229.8 265.0 L1228.9 263.4 L1228.0 261.8 L1227.1 260.1 L1226.1 258.5 L1225.1 256.9 L1224.1 255.2 L1223.1 253.6 L1222.0 252.0 L1220.9 250.3 L1219.8 248.7 L1218.7 247.1 L1217.5 245.5 L1216.4 243.8 L1215.2 242.2 L1213.9 240.6 L1212.7 238.9 L1211.4 237.3 L1210.1 235.7 L1208.8 234.0 L1207.4 232.4 L1206.1 230.8 L1204.7 229.2 L1203.3 227.5 L1201.8 225.9 L1200.4 224.3 L1198.9 222.6 L1197.4 221.0 L1195.9 219.4 L1194.3 217.7 L1192.7 216.1 L1191.1 214.5 L1189.5 212.9 L1187.9 211.2 L1186.2 209.6 L1184.5 208.0 L1182.8 206.3 L1181.1 204.7 L1179.4 203.1 L1177.6 201.4 L1175.8 199.8 L1174.0 198.2 L1172.2 196.5 L1170.3 194.9 L1168.5 193.3 L1166.6 191.7 L1164.7 190.0 L1162.7 188.4 L1160.8 186.8 L1158.8 185.1 L1156.8 183.5 L1154.8 181.9 L1152.8 180.2 L1150.7 178.6 L1148.7 177.0 L1146.6 175.4 L1144.5 173.7 L1142.4 172.1 L1140.2 170.5 L1138.1 168.8 L1135.9 167.2 L1133.7 165.6 L1131.5 163.9 L1129.3 162.3 L1127.0 160.7 L1124.7 159.1 L1122.5 157.4 L1120.2 155.8 L1117.9 154.2 L1115.5 152.5 L1113.2 150.9 L1110.8 149.3 L1108.4 147.6 L1106.0 146.0 L1103.6 144.4 L1101.2 142.7 L1098.8 141.1 L1096.3 139.5 L1093.8 137.9 L1091.4 136.2 L1088.9 134.6 L1086.3 133.0 L1083.8 131.3 L1081.3 129.7 L1078.7 128.1 L1076.2 126.4 L1073.6 124.8 L1071.0 123.2 L1068.4 121.6 L1065.8 119.9 L1063.1 118.3 L1060.5 116.7 L1057.8 115.0 L1055.2 113.4 L1052.5 111.8 L1049.8 110.1 L1047.1 108.5 L1044.4 106.9 L1041.6 105.3 L1038.9 103.6 L1036.2 102.0 L1033.4 100.4 L1030.6 98.7 L1027.9 97.1 L1025.1 95.5 L1022.3 93.8 L1019.5 92.2 L1016.7 90.6 L1013.9 89.0 L1011.0 87.3 L1008.2 85.7 L1005.3 84.1 L1002.5 82.4 L999.6 80.8 L996.8 79.2 L993.9 77.5 L991.0 75.9 L988.1 74.3 L985.2 72.6 L982.3 71.0 L979.4 69.4 L976.5 67.8 L973.6 66.1 L970.7 64.5 L967.7 62.9 L964.8 61.2 L961.8 59.6 L958.9 58.0 L956.0 56.3 L953.0 54.7 L950.0 53.1 L947.1 51.5 L944.1 49.8 L941.2 48.2 L938.2 46.6 L935.2 44.9 L932.2 43.3 L929.3 41.7 L926.3 40.0 L923.3 38.4 L920.3 36.8 L917.3 35.2 L914.3 33.5 L911.4 31.9 L908.4 30.3 L905.4 28.6 L902.4 27.0"/><path d="M902.4 613.9 L905.0 612.3 L907.5 610.6 L910.1 609.0 L912.6 607.4 L915.2 605.7 L917.8 604.1 L920.3 602.5 L922.9 600.9 L925.4 599.2 L928.0 597.6 L930.5 596.0 L933.1 594.3 L935.6 592.7 L938.2 591.1 L940.7 589.4 L943.2 587.8 L945.8 586.2 L948.3 584.6 L950.8 582.9 L953.4 581.3 L955.9 579.7 L958.4 578.0 L960.9 576.4 L963.4 574.8 L965.9 573.1 L968.4 571.5 L970.9 569.9 L973.4 568.3 L975.9 566.6 L978.4 565.0 L980.8 563.4 L983.3 561.7 L985.7 560.1 L988.2 558.5 L990.6 556.8 L993.1 555.2 L995.5 553.6 L997.9 551.9 L1000.4 550.3 L1002.8 548.7 L1005.2 547.1 L1007.6 545.4 L1009.9 543.8 L1012.3 542.2 L1014.7 540.5 L1017.1 538.9 L1019.4 537.3 L1021.8 535.6 L1024.1 534.0 L1026.4 532.4 L1028.7 530.8 L1031.0 529.1 L1033.3 527.5 L1035.6 525.9 L1037.9 524.2 L1040.2 522.6 L1042.4 521.0 L1044.7 519.3 L1046.9 517.7 L1049.1 516.1 L1051.3 514.5 L1053.5 512.8 L1055.7 511.2 L1057.9 509.6 L1060.1 507.9 L1062.2 506.3 L1064.4 504.7 L1066.5 503.0 L1068.6 501.4 L1070.7 499.8 L1072.8 498.2 L1074.9 496.5 L1077.0 494.9 L1079.0 493.3 L1081.0 491.6 L1083.1 490.0 L1085.1 488.4 L1087.1 486.7 L1089.1 485.1 L1091.0 483.5 L1093.0 481.8 L1094.9 480.2 L1096.8 478.6 L1098.8 477.0 L1100.7 475.3 L1102.5 473.7 L1104.4 472.1 L1106.2 470.4 L1108.1 468.8 L1109.9 467.2 L1111.7 465.5 L1113.5 463.9 L1115.3 462.3 L1117.0 460.7 L1118.8 459.0 L1120.5 457.4 L1122.2 455.8 L1123.9 454.1 L1125.5 452.5 L1127.2 450.9 L1128.8 449.2 L1130.5 447.6 L1132.1 446.0 L1133.6 444.4 L1135.2 442.7 L1136.8 441.1 L1138.3 439.5 L1139.8 437.8 L1141.3 436.2 L1142.8 434.6 L1144.2 432.9 L1145.7 431.3 L1147.1 429.7 L1148.5 428.0 L1149.9 426.4 L1151.3 424.8 L1152.6 423.2 L1153.9 421.5 L1155.2 419.9 L1156.5 418.3 L1157.8 416.6 L1159.1 415.0 L1160.3 413.4 L1161.5 411.7 L1162.7 410.1 L1163.9 408.5 L1165.0 406.9 L1166.2 405.2 L1167.3 403.6 L1168.4 402.0 L1169.4 400.3 L1170.5 398.7 L1171.5 397.1 L1172.5 395.4 L1173.5 393.8 L1174.5 392.2 L1175.4 390.6 L1176.4 388.9 L1177.3 387.3 L1178.2 385.7 L1179.0 384.0 L1179.9 382.4 L1180.7 380.8 L1181.5 379.1 L1182.3 377.5 L1183.0 375.9 L1183.8 374.2 L1184.5 372.6 L1185.2 371.0 L1185.9 369.4 L1186.5 367.7 L1187.1 366.1 L1187.7 364.5 L1188.3 362.8 L1188.9 361.2 L1189.4 359.6 L1190.0 357.9 L1190.5 356.3 L1190.9 354.7 L1191.4 353.1 L1191.8 351.4 L1192.2 349.8 L1192.6 348.2 L1193.0 346.5 L1193.3 344.9 L1193.7 343.3 L1194.0 341.6 L1194.2 340.0 L1194.5 338.4 L1194.7 336.8 L1194.9 335.1 L1195.1 333.5 L1195.3 331.9 L1195.4 330.2 L1195.6 328.6 L1195.7 327.0 L1195.7 325.3 L1195.8 323.7 L1195.8 322.1 L1195.8 320.4 L1195.8 318.8 L1195.8 317.2 L1195.7 315.6 L1195.7 313.9 L1195.6 312.3 L1195.4 310.7 L1195.3 309.0 L1195.1 307.4 L1194.9 305.8 L1194.7 304.1 L1194.5 302.5 L1194.2 300.9 L1194.0 299.3 L1193.7 297.6 L1193.3 296.0 L1193.0 294.4 L1192.6 292.7 L1192.2 291.1 L1191.8 289.5 L1191.4 287.8 L1190.9 286.2 L1190.5 284.6 L1190.0 283.0 L1189.4 281.3 L1188.9 279.7 L1188.3 278.1 L1187.7 276.4 L1187.1 274.8 L1186.5 273.2 L1185.9 271.5 L1185.2 269.9 L1184.5 268.3 L1183.8 266.7 L1183.0 265.0 L1182.3 263.4 L1181.5 261.8 L1180.7 260.1 L1179.9 258.5 L1179.0 256.9 L1178.2 255.2 L1177.3 253.6 L1176.4 252.0 L1175.4 250.3 L1174.5 248.7 L1173.5 247.1 L1172.5 245.5 L1171.5 243.8 L1170.5 242.2 L1169.4 240.6 L1168.4 238.9 L1167.3 237.3 L1166.2 235.7 L1165.0 234.0 L1163.9 232.4 L1162.7 230.8 L1161.5 229.2 L1160.3 227.5 L1159.1 225.9 L1157.8 224.3 L1156.5 222.6 L1155.2 221.0 L1153.9 219.4 L1152.6 217.7 L1151.3 216.1 L1149.9 214.5 L1148.5 212.9 L1147.1 211.2 L1145.7 209.6 L1144.2 208.0 L1142.8 206.3 L1141.3 204.7 L1139.8 203.1 L1138.3 201.4 L1136.8 199.8 L1135.2 198.2 L1133.6 196.5 L1132.1 194.9 L1130.5 193.3 L1128.8 191.7 L1127.2 190.0 L1125.5 188.4 L1123.9 186.8 L1122.2 185.1 L1120.5 183.5 L1118.8 181.9 L1117.0 180.2 L1115.3 178.6 L1113.5 177.0 L1111.7 175.4 L1109.9 173.7 L1108.1 172.1 L1106.2 170.5 L1104.4 168.8 L1102.5 167.2 L1100.7 165.6 L1098.8 163.9 L1096.8 162.3 L1094.9 160.7 L1093.0 159.1 L1091.0 157.4 L1089.1 155.8 L1087.1 154.2 L1085.1 152.5 L1083.1 150.9 L1081.0 149.3 L1079.0 147.6 L1077.0 146.0 L1074.9 144.4 L1072.8 142.7 L1070.7 141.1 L1068.6 139.5 L1066.5 137.9 L1064.4 136.2 L1062.2 134.6 L1060.1 133.0 L1057.9 131.3 L1055.7 129.7 L1053.5 128.1 L1051.3 126.4 L1049.1 124.8 L1046.9 123.2 L1044.7 121.6 L1042.4 119.9 L1040.2 118.3 L1037.9 116.7 L1035.6 115.0 L1033.3 113.4 L1031.0 111.8 L1028.7 110.1 L1026.4 108.5 L1024.1 106.9 L1021.8 105.3 L1019.4 103.6 L1017.1 102.0 L1014.7 100.4 L1012.3 98.7 L1009.9 97.1 L1007.6 95.5 L1005.2 93.8 L1002.8 92.2 L1000.4 90.6 L997.9 89.0 L995.5 87.3 L993.1 85.7 L990.6 84.1 L988.2 82.4 L985.7 80.8 L983.3 79.2 L980.8 77.5 L978.4 75.9 L975.9 74.3 L973.4 72.6 L970.9 71.0 L968.4 69.4 L965.9 67.8 L963.4 66.1 L960.9 64.5 L958.4 62.9 L955.9 61.2 L953.4 59.6 L950.8 58.0 L948.3 56.3 L945.8 54.7 L943.2 53.1 L940.7 51.5 L938.2 49.8 L935.6 48.2 L933.1 46.6 L930.5 44.9 L928.0 43.3 L925.4 41.7 L922.9 40.0 L920.3 38.4 L917.8 36.8 L915.2 35.2 L912.6 33.5 L910.1 31.9 L907.5 30.3 L905.0 28.6 L902.4 27.0"/><path d="M902.4 613.9 L904.5 612.3 L906.7 610.6 L908.8 609.0 L910.9 607.4 L913.1 605.7 L915.2 604.1 L917.3 602.5 L919.5 600.9 L921.6 599.2 L923.7 597.6 L925.8 596.0 L928.0 594.3 L930.1 592.7 L932.2 591.1 L934.3 589.4 L936.4 587.8 L938.5 586.2 L940.7 584.6 L942.8 582.9 L944.9 581.3 L947.0 579.7 L949.1 578.0 L951.2 576.4 L953.2 574.8 L955.3 573.1 L957.4 571.5 L959.5 569.9 L961.6 568.3 L963.6 566.6 L965.7 565.0 L967.8 563.4 L969.8 561.7 L971.9 560.1 L973.9 558.5 L975.9 556.8 L978.0 555.2 L980.0 553.6 L982.0 551.9 L984.0 550.3 L986.0 548.7 L988.0 547.1 L990.0 545.4 L992.0 543.8 L994.0 542.2 L996.0 540.5 L998.0 538.9 L999.9 537.3 L1001.9 535.6 L1003.8 534.0 L1005.7 532.4 L1007.7 530.8 L1009.6 529.1 L1011.5 527.5 L1013.4 525.9 L1015.3 524.2 L1017.2 522.6 L1019.1 521.0 L1021.0 519.3 L1022.8 517.7 L1024.7 516.1 L1026.5 514.5 L1028.3 512.8 L1030.2 511.2 L1032.0 509.6 L1033.8 507.9 L1035.6 506.3 L1037.4 504.7 L1039.1 503.0 L1040.9 501.4 L1042.7 499.8 L1044.4 498.2 L1046.1 496.5 L1047.9 494.9 L1049.6 493.3 L1051.3 491.6 L1053.0 490.0 L1054.6 488.4 L1056.3 486.7 L1057.9 485.1 L1059.6 483.5 L1061.2 481.8 L1062.8 480.2 L1064.4 478.6 L1066.0 477.0 L1067.6 475.3 L1069.2 473.7 L1070.7 472.1 L1072.3 470.4 L1073.8 468.8 L1075.3 467.2 L1076.8 465.5 L1078.3 463.9 L1079.8 462.3 L1081.2 460.7 L1082.7 459.0 L1084.1 457.4 L1085.6 455.8 L1087.0 454.1 L1088.4 452.5 L1089.7 450.9 L1091.1 449.2 L1092.4 447.6 L1093.8 446.0 L1095.1 444.4 L1096.4 442.7 L1097.7 441.1 L1099.0 439.5 L1100.2 437.8 L1101.5 436.2 L1102.7 434.6 L1103.9 432.9 L1105.1 431.3 L1106.3 429.7 L1107.5 428.0 L1108.6 426.4 L1109.8 424.8 L1110.9 423.2 L1112.0 421.5 L1113.1 419.9 L1114.2 418.3 L1115.2 416.6 L1116.3 415.0 L1117.3 413.4 L1118.3 411.7 L1119.3 410.1 L1120.3 408.5 L1121.2 406.9 L1122.2 405.2 L1123.1 403.6 L1124.0 402.0 L1124.9 400.3 L1125.8 398.7 L1126.7 397.1 L1127.5 395.4 L1128.3 393.8 L1129.1 392.2 L1129.9 390.6 L1130.7 388.9 L1131.5 387.3 L1132.2 385.7 L1132.9 384.0 L1133.6 382.4 L1134.3 380.8 L1135.0 379.1 L1135.6 377.5 L1136.3 375.9 L1136.9 374.2 L1137.5 372.6 L1138.0 371.0 L1138.6 369.4 L1139.2 367.7 L1139.7 366.1 L1140.2 364.5 L1140.7 362.8 L1141.1 361.2 L1141.6 359.6 L1142.0 357.9 L1142.4 356.3 L1142.8 354.7 L1143.2 353.1 L1143.6 351.4 L1143.9 349.8 L1144.3 348.2 L1144.6 346.5 L1144.8 344.9 L1145.1 343.3 L1145.4 341.6 L1145.6 340.0 L1145.8 338.4 L1146.0 336.8 L1146.2 335.1 L1146.3 333.5 L1146.5 331.9 L1146.6 330.2 L1146.7 328.6 L1146.8 327.0 L1146.9 325.3 L1146.9 323.7 L1146.9 322.1 L1146.9 320.4 L1146.9 318.8 L1146.9 317.2 L1146.9 315.6 L1146.8 313.9 L1146.7 312.3 L1146.6 310.7 L1146.5 309.0 L1146.3 307.4 L1146.2 305.8 L1146.0 304.1 L1145.8 302.5 L1145.6 300.9 L1145.4 299.3 L1145.1 297.6 L1144.8 296.0 L1144.6 294.4 L1144.3 292.7 L1143.9 291.1 L1143.6 289.5 L1143.2 287.8 L1142.8 286.2 L1142.4 284.6 L1142.0 283.0 L1141.6 281.3 L1141.1 279.7 L1140.7 278.1 L1140.2 276.4 L1139.7 274.8 L1139.2 273.2 L1138.6 271.5 L1138.0 269.9 L1137.5 268.3 L1136.9 266.7 L1136.3 265.0 L1135.6 263.4 L1135.0 261.8 L1134.3 260.1 L1133.6 258.5 L1132.9 256.9 L1132.2 255.2 L1131.5 253.6 L1130.7 252.0 L1129.9 250.3 L1129.1 248.7 L1128.3 247.1 L1127.5 245.5 L1126.7 243.8 L1125.8 242.2 L1124.9 240.6 L1124.0 238.9 L1123.1 237.3 L1122.2 235.7 L1121.2 234.0 L1120.3 232.4 L1119.3 230.8 L1118.3 229.2 L1117.3 227.5 L1116.3 225.9 L1115.2 224.3 L1114.2 222.6 L1113.1 221.0 L1112.0 219.4 L1110.9 217.7 L1109.8 216.1 L1108.6 214.5 L1107.5 212.9 L1106.3 211.2 L1105.1 209.6 L1103.9 208.0 L1102.7 206.3 L1101.5 204.7 L1100.2 203.1 L1099.0 201.4 L1097.7 199.8 L1096.4 198.2 L1095.1 196.5 L1093.8 194.9 L1092.4 193.3 L1091.1 191.7 L1089.7 190.0 L1088.4 188.4 L1087.0 186.8 L1085.6 185.1 L1084.1 183.5 L1082.7 181.9 L1081.2 180.2 L1079.8 178.6 L1078.3 177.0 L1076.8 175.4 L1075.3 173.7 L1073.8 172.1 L1072.3 170.5 L1070.7 168.8 L1069.2 167.2 L1067.6 165.6 L1066.0 163.9 L1064.4 162.3 L1062.8 160.7 L1061.2 159.1 L1059.6 157.4 L1057.9 155.8 L1056.3 154.2 L1054.6 152.5 L1053.0 150.9 L1051.3 149.3 L1049.6 147.6 L1047.9 146.0 L1046.1 144.4 L1044.4 142.7 L1042.7 141.1 L1040.9 139.5 L1039.1 137.9 L1037.4 136.2 L1035.6 134.6 L1033.8 133.0 L1032.0 131.3 L1030.2 129.7 L1028.3 128.1 L1026.5 126.4 L1024.7 124.8 L1022.8 123.2 L1021.0 121.6 L1019.1 119.9 L1017.2 118.3 L1015.3 116.7 L1013.4 115.0 L1011.5 113.4 L1009.6 111.8 L1007.7 110.1 L1005.7 108.5 L1003.8 106.9 L1001.9 105.3 L999.9 103.6 L998.0 102.0 L996.0 100.4 L994.0 98.7 L992.0 97.1 L990.0 95.5 L988.0 93.8 L986.0 92.2 L984.0 90.6 L982.0 89.0 L980.0 87.3 L978.0 85.7 L975.9 84.1 L973.9 82.4 L971.9 80.8 L969.8 79.2 L967.8 77.5 L965.7 75.9 L963.6 74.3 L961.6 72.6 L959.5 71.0 L957.4 69.4 L955.3 67.8 L953.2 66.1 L951.2 64.5 L949.1 62.9 L947.0 61.2 L944.9 59.6 L942.8 58.0 L940.7 56.3 L938.5 54.7 L936.4 53.1 L934.3 51.5 L932.2 49.8 L930.1 48.2 L928.0 46.6 L925.8 44.9 L923.7 43.3 L921.6 41.7 L919.5 40.0 L917.3 38.4 L915.2 36.8 L913.1 35.2 L910.9 33.5 L908.8 31.9 L906.7 30.3 L904.5 28.6 L902.4 27.0"/><path d="M902.4 613.9 L904.1 612.3 L905.8 610.6 L907.5 609.0 L909.2 607.4 L910.9 605.7 L912.6 604.1 L914.3 602.5 L916.0 600.9 L917.7 599.2 L919.5 597.6 L921.2 596.0 L922.8 594.3 L924.5 592.7 L926.2 591.1 L927.9 589.4 L929.6 587.8 L931.3 586.2 L933.0 584.6 L934.7 582.9 L936.4 581.3 L938.1 579.7 L939.7 578.0 L941.4 576.4 L943.1 574.8 L944.7 573.1 L946.4 571.5 L948.1 569.9 L949.7 568.3 L951.4 566.6 L953.0 565.0 L954.7 563.4 L956.3 561.7 L958.0 560.1 L959.6 558.5 L961.2 556.8 L962.9 555.2 L964.5 553.6 L966.1 551.9 L967.7 550.3 L969.3 548.7 L970.9 547.1 L972.5 545.4 L974.1 543.8 L975.7 542.2 L977.3 540.5 L978.8 538.9 L980.4 537.3 L982.0 535.6 L983.5 534.0 L985.1 532.4 L986.6 530.8 L988.2 529.1 L989.7 527.5 L991.2 525.9 L992.7 524.2 L994.2 522.6 L995.7 521.0 L997.2 519.3 L998.7 517.7 L1000.2 516.1 L1001.7 514.5 L1003.2 512.8 L1004.6 511.2 L1006.1 509.6 L1007.5 507.9 L1008.9 506.3 L1010.4 504.7 L1011.8 503.0 L1013.2 501.4 L1014.6 499.8 L1016.0 498.2 L1017.4 496.5 L1018.8 494.9 L1020.1 493.3 L1021.5 491.6 L1022.8 490.0 L1024.2 488.4 L1025.5 486.7 L1026.8 485.1 L1028.2 483.5 L1029.5 481.8 L1030.7 480.2 L1032.0 478.6 L1033.3 477.0 L1034.6 475.3 L1035.8 473.7 L1037.1 472.1 L1038.3 470.4 L1039.5 468.8 L1040.7 467.2 L1041.9 465.5 L1043.1 463.9 L1044.3 462.3 L1045.5 460.7 L1046.6 459.0 L1047.8 457.4 L1048.9 455.8 L1050.0 454.1 L1051.2 452.5 L1052.3 450.9 L1053.4 449.2 L1054.4 447.6 L1055.5 446.0 L1056.6 444.4 L1057.6 442.7 L1058.6 441.1 L1059.7 439.5 L1060.7 437.8 L1061.7 436.2 L1062.7 434.6 L1063.6 432.9 L1064.6 431.3 L1065.5 429.7 L1066.5 428.0 L1067.4 426.4 L1068.3 424.8 L1069.2 423.2 L1070.1 421.5 L1071.0 419.9 L1071.8 418.3 L1072.7 416.6 L1073.5 415.0 L1074.3 413.4 L1075.1 411.7 L1075.9 410.1 L1076.7 408.5 L1077.5 406.9 L1078.2 405.2 L1079.0 403.6 L1079.7 402.0 L1080.4 400.3 L1081.1 398.7 L1081.8 397.1 L1082.5 395.4 L1083.1 393.8 L1083.8 392.2 L1084.4 390.6 L1085.0 388.9 L1085.6 387.3 L1086.2 385.7 L1086.8 384.0 L1087.4 382.4 L1087.9 380.8 L1088.5 379.1 L1089.0 377.5 L1089.5 375.9 L1090.0 374.2 L1090.5 372.6 L1090.9 371.0 L1091.4 369.4 L1091.8 367.7 L1092.2 366.1 L1092.6 364.5 L1093.0 362.8 L1093.4 361.2 L1093.8 359.6 L1094.1 357.9 L1094.4 356.3 L1094.8 354.7 L1095.1 353.1 L1095.4 351.4 L1095.6 349.8 L1095.9 348.2 L1096.1 346.5 L1096.4 344.9 L1096.6 343.3 L1096.8 341.6 L1097.0 340.0 L1097.1 338.4 L1097.3 336.8 L1097.4 335.1 L1097.6 333.5 L1097.7 331.9 L1097.8 330.2 L1097.8 328.6 L1097.9 327.0 L1098.0 325.3 L1098.0 323.7 L1098.0 322.1 L1098.0 320.4 L1098.0 318.8 L1098.0 317.2 L1098.0 315.6 L1097.9 313.9 L1097.8 312.3 L1097.8 310.7 L1097.7 309.0 L1097.6 307.4 L1097.4 305.8 L1097.3 304.1 L1097.1 302.5 L1097.0 300.9 L1096.8 299.3 L1096.6 297.6 L1096.4 296.0 L1096.1 294.4 L1095.9 292.7 L1095.6 291.1 L1095.4 289.5 L1095.1 287.8 L1094.8 286.2 L1094.4 284.6 L1094.1 283.0 L1093.8 281.3 L1093.4 279.7 L1093.0 278.1 L1092.6 276.4 L1092.2 274.8 L1091.8 273.2 L1091.4 271.5 L1090.9 269.9 L1090.5 268.3 L1090.0 266.7 L1089.5 265.0 L1089.0 263.4 L1088.5 261.8 L1087.9 260.1 L1087.4 258.5 L1086.8 256.9 L1086.2 255.2 L1085.6 253.6 L1085.0 252.0 L1084.4 250.3 L1083.8 248.7 L1083.1 247.1 L1082.5 245.5 L1081.8 243.8 L1081.1 242.2 L1080.4 240.6 L1079.7 238.9 L1079.0 237.3 L1078.2 235.7 L1077.5 234.0 L1076.7 232.4 L1075.9 230.8 L1075.1 229.2 L1074.3 227.5 L1073.5 225.9 L1072.7 224.3 L1071.8 222.6 L1071.0 221.0 L1070.1 219.4 L1069.2 217.7 L1068.3 216.1 L1067.4 214.5 L1066.5 212.9 L1065.5 211.2 L1064.6 209.6 L1063.6 208.0 L1062.7 206.3 L1061.7 204.7 L1060.7 203.1 L1059.7 201.4 L1058.6 199.8 L1057.6 198.2 L1056.6 196.5 L1055.5 194.9 L1054.4 193.3 L1053.4 191.7 L1052.3 190.0 L1051.2 188.4 L1050.0 186.8 L1048.9 185.1 L1047.8 183.5 L1046.6 181.9 L1045.5 180.2 L1044.3 178.6 L1043.1 177.0 L1041.9 175.4 L1040.7 173.7 L1039.5 172.1 L1038.3 170.5 L1037.1 168.8 L1035.8 167.2 L1034.6 165.6 L1033.3 163.9 L1032.0 162.3 L1030.7 160.7 L1029.5 159.1 L1028.2 157.4 L1026.8 155.8 L1025.5 154.2 L1024.2 152.5 L1022.8 150.9 L1021.5 149.3 L1020.1 147.6 L1018.8 146.0 L1017.4 144.4 L1016.0 142.7 L1014.6 141.1 L1013.2 139.5 L1011.8 137.9 L1010.4 136.2 L1008.9 134.6 L1007.5 133.0 L1006.1 131.3 L1004.6 129.7 L1003.2 128.1 L1001.7 126.4 L1000.2 124.8 L998.7 123.2 L997.2 121.6 L995.7 119.9 L994.2 118.3 L992.7 116.7 L991.2 115.0 L989.7 113.4 L988.2 111.8 L986.6 110.1 L985.1 108.5 L983.5 106.9 L982.0 105.3 L980.4 103.6 L978.8 102.0 L977.3 100.4 L975.7 98.7 L974.1 97.1 L972.5 95.5 L970.9 93.8 L969.3 92.2 L967.7 90.6 L966.1 89.0 L964.5 87.3 L962.9 85.7 L961.2 84.1 L959.6 82.4 L958.0 80.8 L956.3 79.2 L954.7 77.5 L953.0 75.9 L951.4 74.3 L949.7 72.6 L948.1 71.0 L946.4 69.4 L944.7 67.8 L943.1 66.1 L941.4 64.5 L939.7 62.9 L938.1 61.2 L936.4 59.6 L934.7 58.0 L933.0 56.3 L931.3 54.7 L929.6 53.1 L927.9 51.5 L926.2 49.8 L924.5 48.2 L922.8 46.6 L921.2 44.9 L919.5 43.3 L917.7 41.7 L916.0 40.0 L914.3 38.4 L912.6 36.8 L910.9 35.2 L909.2 33.5 L907.5 31.9 L905.8 30.3 L904.1 28.6 L902.4 27.0"/><path d="M902.4 613.9 L903.7 612.3 L905.0 610.6 L906.2 609.0 L907.5 607.4 L908.8 605.7 L910.1 604.1 L911.4 602.5 L912.6 600.9 L913.9 599.2 L915.2 597.6 L916.5 596.0 L917.7 594.3 L919.0 592.7 L920.3 591.1 L921.6 589.4 L922.8 587.8 L924.1 586.2 L925.4 584.6 L926.6 582.9 L927.9 581.3 L929.1 579.7 L930.4 578.0 L931.7 576.4 L932.9 574.8 L934.2 573.1 L935.4 571.5 L936.7 569.9 L937.9 568.3 L939.1 566.6 L940.4 565.0 L941.6 563.4 L942.8 561.7 L944.1 560.1 L945.3 558.5 L946.5 556.8 L947.7 555.2 L949.0 553.6 L950.2 551.9 L951.4 550.3 L952.6 548.7 L953.8 547.1 L955.0 545.4 L956.2 543.8 L957.4 542.2 L958.5 540.5 L959.7 538.9 L960.9 537.3 L962.1 535.6 L963.2 534.0 L964.4 532.4 L965.6 530.8 L966.7 529.1 L967.9 527.5 L969.0 525.9 L970.2 524.2 L971.3 522.6 L972.4 521.0 L973.5 519.3 L974.7 517.7 L975.8 516.1 L976.9 514.5 L978.0 512.8 L979.1 511.2 L980.2 509.6 L981.2 507.9 L982.3 506.3 L983.4 504.7 L984.4 503.0 L985.5 501.4 L986.6 499.8 L987.6 498.2 L988.6 496.5 L989.7 494.9 L990.7 493.3 L991.7 491.6 L992.7 490.0 L993.7 488.4 L994.7 486.7 L995.7 485.1 L996.7 483.5 L997.7 481.8 L998.7 480.2 L999.6 478.6 L1000.6 477.0 L1001.5 475.3 L1002.5 473.7 L1003.4 472.1 L1004.3 470.4 L1005.2 468.8 L1006.2 467.2 L1007.1 465.5 L1007.9 463.9 L1008.8 462.3 L1009.7 460.7 L1010.6 459.0 L1011.4 457.4 L1012.3 455.8 L1013.1 454.1 L1014.0 452.5 L1014.8 450.9 L1015.6 449.2 L1016.4 447.6 L1017.2 446.0 L1018.0 444.4 L1018.8 442.7 L1019.6 441.1 L1020.3 439.5 L1021.1 437.8 L1021.9 436.2 L1022.6 434.6 L1023.3 432.9 L1024.0 431.3 L1024.8 429.7 L1025.5 428.0 L1026.1 426.4 L1026.8 424.8 L1027.5 423.2 L1028.2 421.5 L1028.8 419.9 L1029.5 418.3 L1030.1 416.6 L1030.7 415.0 L1031.3 413.4 L1032.0 411.7 L1032.5 410.1 L1033.1 408.5 L1033.7 406.9 L1034.3 405.2 L1034.8 403.6 L1035.4 402.0 L1035.9 400.3 L1036.4 398.7 L1037.0 397.1 L1037.5 395.4 L1038.0 393.8 L1038.4 392.2 L1038.9 390.6 L1039.4 388.9 L1039.8 387.3 L1040.3 385.7 L1040.7 384.0 L1041.1 382.4 L1041.5 380.8 L1041.9 379.1 L1042.3 377.5 L1042.7 375.9 L1043.1 374.2 L1043.4 372.6 L1043.8 371.0 L1044.1 369.4 L1044.5 367.7 L1044.8 366.1 L1045.1 364.5 L1045.4 362.8 L1045.6 361.2 L1045.9 359.6 L1046.2 357.9 L1046.4 356.3 L1046.7 354.7 L1046.9 353.1 L1047.1 351.4 L1047.3 349.8 L1047.5 348.2 L1047.7 346.5 L1047.9 344.9 L1048.0 343.3 L1048.2 341.6 L1048.3 340.0 L1048.4 338.4 L1048.6 336.8 L1048.7 335.1 L1048.8 333.5 L1048.9 331.9 L1048.9 330.2 L1049.0 328.6 L1049.0 327.0 L1049.1 325.3 L1049.1 323.7 L1049.1 322.1 L1049.1 320.4 L1049.1 318.8 L1049.1 317.2 L1049.1 315.6 L1049.0 313.9 L1049.0 312.3 L1048.9 310.7 L1048.9 309.0 L1048.8 307.4 L1048.7 305.8 L1048.6 304.1 L1048.4 302.5 L1048.3 300.9 L1048.2 299.3 L1048.0 297.6 L1047.9 296.0 L1047.7 294.4 L1047.5 292.7 L1047.3 291.1 L1047.1 289.5 L1046.9 287.8 L1046.7 286.2 L1046.4 284.6 L1046.2 283.0 L1045.9 281.3 L1045.6 279.7 L1045.4 278.1 L1045.1 276.4 L1044.8 274.8 L1044.5 273.2 L1044.1 271.5 L1043.8 269.9 L1043.4 268.3 L1043.1 266.7 L1042.7 265.0 L1042.3 263.4 L1041.9 261.8 L1041.5 260.1 L1041.1 258.5 L1040.7 256.9 L1040.3 255.2 L1039.8 253.6 L1039.4 252.0 L1038.9 250.3 L1038.4 248.7 L1038.0 247.1 L1037.5 245.5 L1037.0 243.8 L1036.4 242.2 L1035.9 240.6 L1035.4 238.9 L1034.8 237.3 L1034.3 235.7 L1033.7 234.0 L1033.1 232.4 L1032.5 230.8 L1032.0 229.2 L1031.3 227.5 L1030.7 225.9 L1030.1 224.3 L1029.5 222.6 L1028.8 221.0 L1028.2 219.4 L1027.5 217.7 L1026.8 216.1 L1026.1 214.5 L1025.5 212.9 L1024.8 211.2 L1024.0 209.6 L1023.3 208.0 L1022.6 206.3 L1021.9 204.7 L1021.1 203.1 L1020.3 201.4 L1019.6 199.8 L1018.8 198.2 L1018.0 196.5 L1017.2 194.9 L1016.4 193.3 L1015.6 191.7 L1014.8 190.0 L1014.0 188.4 L1013.1 186.8 L1012.3 185.1 L1011.4 183.5 L1010.6 181.9 L1009.7 180.2 L1008.8 178.6 L1007.9 177.0 L1007.1 175.4 L1006.2 173.7 L1005.2 172.1 L1004.3 170.5 L1003.4 168.8 L1002.5 167.2 L1001.5 165.6 L1000.6 163.9 L999.6 162.3 L998.7 160.7 L997.7 159.1 L996.7 157.4 L995.7 155.8 L994.7 154.2 L993.7 152.5 L992.7 150.9 L991.7 149.3 L990.7 147.6 L989.7 146.0 L988.6 144.4 L987.6 142.7 L986.6 141.1 L985.5 139.5 L984.4 137.9 L983.4 136.2 L982.3 134.6 L981.2 133.0 L980.2 131.3 L979.1 129.7 L978.0 128.1 L976.9 126.4 L975.8 124.8 L974.7 123.2 L973.5 121.6 L972.4 119.9 L971.3 118.3 L970.2 116.7 L969.0 115.0 L967.9 113.4 L966.7 111.8 L965.6 110.1 L964.4 108.5 L963.2 106.9 L962.1 105.3 L960.9 103.6 L959.7 102.0 L958.5 100.4 L957.4 98.7 L956.2 97.1 L955.0 95.5 L953.8 93.8 L952.6 92.2 L951.4 90.6 L950.2 89.0 L949.0 87.3 L947.7 85.7 L946.5 84.1 L945.3 82.4 L944.1 80.8 L942.8 79.2 L941.6 77.5 L940.4 75.9 L939.1 74.3 L937.9 72.6 L936.7 71.0 L935.4 69.4 L934.2 67.8 L932.9 66.1 L931.7 64.5 L930.4 62.9 L929.1 61.2 L927.9 59.6 L926.6 58.0 L925.4 56.3 L924.1 54.7 L922.8 53.1 L921.6 51.5 L920.3 49.8 L919.0 48.2 L917.7 46.6 L916.5 44.9 L915.2 43.3 L913.9 41.7 L912.6 40.0 L911.4 38.4 L910.1 36.8 L908.8 35.2 L907.5 33.5 L906.2 31.9 L905.0 30.3 L903.7 28.6 L902.4 27.0"/><path d="M902.4 613.9 L903.3 612.3 L904.1 610.6 L905.0 609.0 L905.8 607.4 L906.7 605.7 L907.5 604.1 L908.4 602.5 L909.2 600.9 L910.1 599.2 L910.9 597.6 L911.8 596.0 L912.6 594.3 L913.5 592.7 L914.3 591.1 L915.2 589.4 L916.0 587.8 L916.9 586.2 L917.7 584.6 L918.5 582.9 L919.4 581.3 L920.2 579.7 L921.1 578.0 L921.9 576.4 L922.7 574.8 L923.6 573.1 L924.4 571.5 L925.2 569.9 L926.1 568.3 L926.9 566.6 L927.7 565.0 L928.5 563.4 L929.4 561.7 L930.2 560.1 L931.0 558.5 L931.8 556.8 L932.6 555.2 L933.4 553.6 L934.2 551.9 L935.1 550.3 L935.9 548.7 L936.7 547.1 L937.5 545.4 L938.2 543.8 L939.0 542.2 L939.8 540.5 L940.6 538.9 L941.4 537.3 L942.2 535.6 L943.0 534.0 L943.7 532.4 L944.5 530.8 L945.3 529.1 L946.0 527.5 L946.8 525.9 L947.6 524.2 L948.3 522.6 L949.1 521.0 L949.8 519.3 L950.6 517.7 L951.3 516.1 L952.0 514.5 L952.8 512.8 L953.5 511.2 L954.2 509.6 L955.0 507.9 L955.7 506.3 L956.4 504.7 L957.1 503.0 L957.8 501.4 L958.5 499.8 L959.2 498.2 L959.9 496.5 L960.6 494.9 L961.3 493.3 L961.9 491.6 L962.6 490.0 L963.3 488.4 L964.0 486.7 L964.6 485.1 L965.3 483.5 L965.9 481.8 L966.6 480.2 L967.2 478.6 L967.9 477.0 L968.5 475.3 L969.1 473.7 L969.7 472.1 L970.3 470.4 L971.0 468.8 L971.6 467.2 L972.2 465.5 L972.8 463.9 L973.4 462.3 L973.9 460.7 L974.5 459.0 L975.1 457.4 L975.7 455.8 L976.2 454.1 L976.8 452.5 L977.3 450.9 L977.9 449.2 L978.4 447.6 L979.0 446.0 L979.5 444.4 L980.0 442.7 L980.5 441.1 L981.0 439.5 L981.5 437.8 L982.0 436.2 L982.5 434.6 L983.0 432.9 L983.5 431.3 L984.0 429.7 L984.4 428.0 L984.9 426.4 L985.4 424.8 L985.8 423.2 L986.2 421.5 L986.7 419.9 L987.1 418.3 L987.5 416.6 L988.0 415.0 L988.4 413.4 L988.8 411.7 L989.2 410.1 L989.6 408.5 L989.9 406.9 L990.3 405.2 L990.7 403.6 L991.1 402.0 L991.4 400.3 L991.8 398.7 L992.1 397.1 L992.4 395.4 L992.8 393.8 L993.1 392.2 L993.4 390.6 L993.7 388.9 L994.0 387.3 L994.3 385.7 L994.6 384.0 L994.9 382.4 L995.2 380.8 L995.4 379.1 L995.7 377.5 L995.9 375.9 L996.2 374.2 L996.4 372.6 L996.7 371.0 L996.9 369.4 L997.1 367.7 L997.3 366.1 L997.5 364.5 L997.7 362.8 L997.9 361.2 L998.1 359.6 L998.3 357.9 L998.4 356.3 L998.6 354.7 L998.7 353.1 L998.9 351.4 L999.0 349.8 L999.1 348.2 L999.3 346.5 L999.4 344.9 L999.5 343.3 L999.6 341.6 L999.7 340.0 L999.8 338.4 L999.8 336.8 L999.9 335.1 L1000.0 333.5 L1000.0 331.9 L1000.1 330.2 L1000.1 328.6 L1000.2 327.0 L1000.2 325.3 L1000.2 323.7 L1000.2 322.1 L1000.2 320.4 L1000.2 318.8 L1000.2 317.2 L1000.2 315.6 L1000.2 313.9 L1000.1 312.3 L1000.1 310.7 L1000.0 309.0 L1000.0 307.4 L999.9 305.8 L999.8 304.1 L999.8 302.5 L999.7 300.9 L999.6 299.3 L999.5 297.6 L999.4 296.0 L999.3 294.4 L999.1 292.7 L999.0 291.1 L998.9 289.5 L998.7 287.8 L998.6 286.2 L998.4 284.6 L998.3 283.0 L998.1 281.3 L997.9 279.7 L997.7 278.1 L997.5 276.4 L997.3 274.8 L997.1 273.2 L996.9 271.5 L996.7 269.9 L996.4 268.3 L996.2 266.7 L995.9 265.0 L995.7 263.4 L995.4 261.8 L995.2 260.1 L994.9 258.5 L994.6 256.9 L994.3 255.2 L994.0 253.6 L993.7 252.0 L993.4 250.3 L993.1 248.7 L992.8 247.1 L992.4 245.5 L992.1 243.8 L991.8 242.2 L991.4 240.6 L991.1 238.9 L990.7 237.3 L990.3 235.7 L989.9 234.0 L989.6 232.4 L989.2 230.8 L988.8 229.2 L988.4 227.5 L988.0 225.9 L987.5 224.3 L987.1 222.6 L986.7 221.0 L986.2 219.4 L985.8 217.7 L985.4 216.1 L984.9 214.5 L984.4 212.9 L984.0 211.2 L983.5 209.6 L983.0 208.0 L982.5 206.3 L982.0 204.7 L981.5 203.1 L981.0 201.4 L980.5 199.8 L980.0 198.2 L979.5 196.5 L979.0 194.9 L978.4 193.3 L977.9 191.7 L977.3 190.0 L976.8 188.4 L976.2 186.8 L975.7 185.1 L975.1 183.5 L974.5 181.9 L973.9 180.2 L973.4 178.6 L972.8 177.0 L972.2 175.4 L971.6 173.7 L971.0 172.1 L970.3 170.5 L969.7 168.8 L969.1 167.2 L968.5 165.6 L967.9 163.9 L967.2 162.3 L966.6 160.7 L965.9 159.1 L965.3 157.4 L964.6 155.8 L964.0 154.2 L963.3 152.5 L962.6 150.9 L961.9 149.3 L961.3 147.6 L960.6 146.0 L959.9 144.4 L959.2 142.7 L958.5 141.1 L957.8 139.5 L957.1 137.9 L956.4 136.2 L955.7 134.6 L955.0 133.0 L954.2 131.3 L953.5 129.7 L952.8 128.1 L952.0 126.4 L951.3 124.8 L950.6 123.2 L949.8 121.6 L949.1 119.9 L948.3 118.3 L947.6 116.7 L946.8 115.0 L946.0 113.4 L945.3 111.8 L944.5 110.1 L943.7 108.5 L943.0 106.9 L942.2 105.3 L941.4 103.6 L940.6 102.0 L939.8 100.4 L939.0 98.7 L938.2 97.1 L937.5 95.5 L936.7 93.8 L935.9 92.2 L935.1 90.6 L934.2 89.0 L933.4 87.3 L932.6 85.7 L931.8 84.1 L931.0 82.4 L930.2 80.8 L929.4 79.2 L928.5 77.5 L927.7 75.9 L926.9 74.3 L926.1 72.6 L925.2 71.0 L924.4 69.4 L923.6 67.8 L922.7 66.1 L921.9 64.5 L921.1 62.9 L920.2 61.2 L919.4 59.6 L918.5 58.0 L917.7 56.3 L916.9 54.7 L916.0 53.1 L915.2 51.5 L914.3 49.8 L913.5 48.2 L912.6 46.6 L911.8 44.9 L910.9 43.3 L910.1 41.7 L909.2 40.0 L908.4 38.4 L907.5 36.8 L906.7 35.2 L905.8 33.5 L905.0 31.9 L904.1 30.3 L903.3 28.6 L902.4 27.0"/><path d="M902.4 613.9 L902.8 612.3 L903.3 610.6 L903.7 609.0 L904.1 607.4 L904.5 605.7 L905.0 604.1 L905.4 602.5 L905.8 600.9 L906.2 599.2 L906.7 597.6 L907.1 596.0 L907.5 594.3 L907.9 592.7 L908.4 591.1 L908.8 589.4 L909.2 587.8 L909.6 586.2 L910.1 584.6 L910.5 582.9 L910.9 581.3 L911.3 579.7 L911.7 578.0 L912.2 576.4 L912.6 574.8 L913.0 573.1 L913.4 571.5 L913.8 569.9 L914.2 568.3 L914.6 566.6 L915.1 565.0 L915.5 563.4 L915.9 561.7 L916.3 560.1 L916.7 558.5 L917.1 556.8 L917.5 555.2 L917.9 553.6 L918.3 551.9 L918.7 550.3 L919.1 548.7 L919.5 547.1 L919.9 545.4 L920.3 543.8 L920.7 542.2 L921.1 540.5 L921.5 538.9 L921.9 537.3 L922.3 535.6 L922.7 534.0 L923.1 532.4 L923.5 530.8 L923.8 529.1 L924.2 527.5 L924.6 525.9 L925.0 524.2 L925.4 522.6 L925.7 521.0 L926.1 519.3 L926.5 517.7 L926.9 516.1 L927.2 514.5 L927.6 512.8 L928.0 511.2 L928.3 509.6 L928.7 507.9 L929.0 506.3 L929.4 504.7 L929.7 503.0 L930.1 501.4 L930.5 499.8 L930.8 498.2 L931.1 496.5 L931.5 494.9 L931.8 493.3 L932.2 491.6 L932.5 490.0 L932.8 488.4 L933.2 486.7 L933.5 485.1 L933.8 483.5 L934.2 481.8 L934.5 480.2 L934.8 478.6 L935.1 477.0 L935.4 475.3 L935.8 473.7 L936.1 472.1 L936.4 470.4 L936.7 468.8 L937.0 467.2 L937.3 465.5 L937.6 463.9 L937.9 462.3 L938.2 460.7 L938.5 459.0 L938.7 457.4 L939.0 455.8 L939.3 454.1 L939.6 452.5 L939.9 450.9 L940.1 449.2 L940.4 447.6 L940.7 446.0 L940.9 444.4 L941.2 442.7 L941.5 441.1 L941.7 439.5 L942.0 437.8 L942.2 436.2 L942.5 434.6 L942.7 432.9 L942.9 431.3 L943.2 429.7 L943.4 428.0 L943.6 426.4 L943.9 424.8 L944.1 423.2 L944.3 421.5 L944.5 419.9 L944.8 418.3 L945.0 416.6 L945.2 415.0 L945.4 413.4 L945.6 411.7 L945.8 410.1 L946.0 408.5 L946.2 406.9 L946.4 405.2 L946.5 403.6 L946.7 402.0 L946.9 400.3 L947.1 398.7 L947.3 397.1 L947.4 395.4 L947.6 393.8 L947.7 392.2 L947.9 390.6 L948.1 388.9 L948.2 387.3 L948.4 385.7 L948.5 384.0 L948.6 382.4 L948.8 380.8 L948.9 379.1 L949.0 377.5 L949.2 375.9 L949.3 374.2 L949.4 372.6 L949.5 371.0 L949.6 369.4 L949.8 367.7 L949.9 366.1 L950.0 364.5 L950.1 362.8 L950.1 361.2 L950.2 359.6 L950.3 357.9 L950.4 356.3 L950.5 354.7 L950.6 353.1 L950.6 351.4 L950.7 349.8 L950.8 348.2 L950.8 346.5 L950.9 344.9 L950.9 343.3 L951.0 341.6 L951.0 340.0 L951.1 338.4 L951.1 336.8 L951.2 335.1 L951.2 333.5 L951.2 331.9 L951.2 330.2 L951.3 328.6 L951.3 327.0 L951.3 325.3 L951.3 323.7 L951.3 322.1 L951.3 320.4 L951.3 318.8 L951.3 317.2 L951.3 315.6 L951.3 313.9 L951.3 312.3 L951.2 310.7 L951.2 309.0 L951.2 307.4 L951.2 305.8 L951.1 304.1 L951.1 302.5 L951.0 300.9 L951.0 299.3 L950.9 297.6 L950.9 296.0 L950.8 294.4 L950.8 292.7 L950.7 291.1 L950.6 289.5 L950.6 287.8 L950.5 286.2 L950.4 284.6 L950.3 283.0 L950.2 281.3 L950.1 279.7 L950.1 278.1 L950.0 276.4 L949.9 274.8 L949.8 273.2 L949.6 271.5 L949.5 269.9 L949.4 268.3 L949.3 266.7 L949.2 265.0 L949.0 263.4 L948.9 261.8 L948.8 260.1 L948.6 258.5 L948.5 256.9 L948.4 255.2 L948.2 253.6 L948.1 252.0 L947.9 250.3 L947.7 248.7 L947.6 247.1 L947.4 245.5 L947.3 243.8 L947.1 242.2 L946.9 240.6 L946.7 238.9 L946.5 237.3 L946.4 235.7 L946.2 234.0 L946.0 232.4 L945.8 230.8 L945.6 229.2 L945.4 227.5 L945.2 225.9 L945.0 224.3 L944.8 222.6 L944.5 221.0 L944.3 219.4 L944.1 217.7 L943.9 216.1 L943.6 214.5 L943.4 212.9 L943.2 211.2 L942.9 209.6 L942.7 208.0 L942.5 206.3 L942.2 204.7 L942.0 203.1 L941.7 201.4 L941.5 199.8 L941.2 198.2 L940.9 196.5 L940.7 194.9 L940.4 193.3 L940.1 191.7 L939.9 190.0 L939.6 188.4 L939.3 186.8 L939.0 185.1 L938.7 183.5 L938.5 181.9 L938.2 180.2 L937.9 178.6 L937.6 177.0 L937.3 175.4 L937.0 173.7 L936.7 172.1 L936.4 170.5 L936.1 168.8 L935.8 167.2 L935.4 165.6 L935.1 163.9 L934.8 162.3 L934.5 160.7 L934.2 159.1 L933.8 157.4 L933.5 155.8 L933.2 154.2 L932.8 152.5 L932.5 150.9 L932.2 149.3 L931.8 147.6 L931.5 146.0 L931.1 144.4 L930.8 142.7 L930.5 141.1 L930.1 139.5 L929.7 137.9 L929.4 136.2 L929.0 134.6 L928.7 133.0 L928.3 131.3 L928.0 129.7 L927.6 128.1 L927.2 126.4 L926.9 124.8 L926.5 123.2 L926.1 121.6 L925.7 119.9 L925.4 118.3 L925.0 116.7 L924.6 115.0 L924.2 113.4 L923.8 111.8 L923.5 110.1 L923.1 108.5 L922.7 106.9 L922.3 105.3 L921.9 103.6 L921.5 102.0 L921.1 100.4 L920.7 98.7 L920.3 97.1 L919.9 95.5 L919.5 93.8 L919.1 92.2 L918.7 90.6 L918.3 89.0 L917.9 87.3 L917.5 85.7 L917.1 84.1 L916.7 82.4 L916.3 80.8 L915.9 79.2 L915.5 77.5 L915.1 75.9 L914.6 74.3 L914.2 72.6 L913.8 71.0 L913.4 69.4 L913.0 67.8 L912.6 66.1 L912.2 64.5 L911.7 62.9 L911.3 61.2 L910.9 59.6 L910.5 58.0 L910.1 56.3 L909.6 54.7 L909.2 53.1 L908.8 51.5 L908.4 49.8 L907.9 48.2 L907.5 46.6 L907.1 44.9 L906.7 43.3 L906.2 41.7 L905.8 40.0 L905.4 38.4 L905.0 36.8 L904.5 35.2 L904.1 33.5 L903.7 31.9 L903.3 30.3 L902.8 28.6 L902.4 27.0"/><path d="M902.4 613.9 L902.4 612.3 L902.4 610.6 L902.4 609.0 L902.4 607.4 L902.4 605.7 L902.4 604.1 L902.4 602.5 L902.4 600.9 L902.4 599.2 L902.4 597.6 L902.4 596.0 L902.4 594.3 L902.4 592.7 L902.4 591.1 L902.4 589.4 L902.4 587.8 L902.4 586.2 L902.4 584.6 L902.4 582.9 L902.4 581.3 L902.4 579.7 L902.4 578.0 L902.4 576.4 L902.4 574.8 L902.4 573.1 L902.4 571.5 L902.4 569.9 L902.4 568.3 L902.4 566.6 L902.4 565.0 L902.4 563.4 L902.4 561.7 L902.4 560.1 L902.4 558.5 L902.4 556.8 L902.4 555.2 L902.4 553.6 L902.4 551.9 L902.4 550.3 L902.4 548.7 L902.4 547.1 L902.4 545.4 L902.4 543.8 L902.4 542.2 L902.4 540.5 L902.4 538.9 L902.4 537.3 L902.4 535.6 L902.4 534.0 L902.4 532.4 L902.4 530.8 L902.4 529.1 L902.4 527.5 L902.4 525.9 L902.4 524.2 L902.4 522.6 L902.4 521.0 L902.4 519.3 L902.4 517.7 L902.4 516.1 L902.4 514.5 L902.4 512.8 L902.4 511.2 L902.4 509.6 L902.4 507.9 L902.4 506.3 L902.4 504.7 L902.4 503.0 L902.4 501.4 L902.4 499.8 L902.4 498.2 L902.4 496.5 L902.4 494.9 L902.4 493.3 L902.4 491.6 L902.4 490.0 L902.4 488.4 L902.4 486.7 L902.4 485.1 L902.4 483.5 L902.4 481.8 L902.4 480.2 L902.4 478.6 L902.4 477.0 L902.4 475.3 L902.4 473.7 L902.4 472.1 L902.4 470.4 L902.4 468.8 L902.4 467.2 L902.4 465.5 L902.4 463.9 L902.4 462.3 L902.4 460.7 L902.4 459.0 L902.4 457.4 L902.4 455.8 L902.4 454.1 L902.4 452.5 L902.4 450.9 L902.4 449.2 L902.4 447.6 L902.4 446.0 L902.4 444.4 L902.4 442.7 L902.4 441.1 L902.4 439.5 L902.4 437.8 L902.4 436.2 L902.4 434.6 L902.4 432.9 L902.4 431.3 L902.4 429.7 L902.4 428.0 L902.4 426.4 L902.4 424.8 L902.4 423.2 L902.4 421.5 L902.4 419.9 L902.4 418.3 L902.4 416.6 L902.4 415.0 L902.4 413.4 L902.4 411.7 L902.4 410.1 L902.4 408.5 L902.4 406.9 L902.4 405.2 L902.4 403.6 L902.4 402.0 L902.4 400.3 L902.4 398.7 L902.4 397.1 L902.4 395.4 L902.4 393.8 L902.4 392.2 L902.4 390.6 L902.4 388.9 L902.4 387.3 L902.4 385.7 L902.4 384.0 L902.4 382.4 L902.4 380.8 L902.4 379.1 L902.4 377.5 L902.4 375.9 L902.4 374.2 L902.4 372.6 L902.4 371.0 L902.4 369.4 L902.4 367.7 L902.4 366.1 L902.4 364.5 L902.4 362.8 L902.4 361.2 L902.4 359.6 L902.4 357.9 L902.4 356.3 L902.4 354.7 L902.4 353.1 L902.4 351.4 L902.4 349.8 L902.4 348.2 L902.4 346.5 L902.4 344.9 L902.4 343.3 L902.4 341.6 L902.4 340.0 L902.4 338.4 L902.4 336.8 L902.4 335.1 L902.4 333.5 L902.4 331.9 L902.4 330.2 L902.4 328.6 L902.4 327.0 L902.4 325.3 L902.4 323.7 L902.4 322.1 L902.4 320.4 L902.4 318.8 L902.4 317.2 L902.4 315.6 L902.4 313.9 L902.4 312.3 L902.4 310.7 L902.4 309.0 L902.4 307.4 L902.4 305.8 L902.4 304.1 L902.4 302.5 L902.4 300.9 L902.4 299.3 L902.4 297.6 L902.4 296.0 L902.4 294.4 L902.4 292.7 L902.4 291.1 L902.4 289.5 L902.4 287.8 L902.4 286.2 L902.4 284.6 L902.4 283.0 L902.4 281.3 L902.4 279.7 L902.4 278.1 L902.4 276.4 L902.4 274.8 L902.4 273.2 L902.4 271.5 L902.4 269.9 L902.4 268.3 L902.4 266.7 L902.4 265.0 L902.4 263.4 L902.4 261.8 L902.4 260.1 L902.4 258.5 L902.4 256.9 L902.4 255.2 L902.4 253.6 L902.4 252.0 L902.4 250.3 L902.4 248.7 L902.4 247.1 L902.4 245.5 L902.4 243.8 L902.4 242.2 L902.4 240.6 L902.4 238.9 L902.4 237.3 L902.4 235.7 L902.4 234.0 L902.4 232.4 L902.4 230.8 L902.4 229.2 L902.4 227.5 L902.4 225.9 L902.4 224.3 L902.4 222.6 L902.4 221.0 L902.4 219.4 L902.4 217.7 L902.4 216.1 L902.4 214.5 L902.4 212.9 L902.4 211.2 L902.4 209.6 L902.4 208.0 L902.4 206.3 L902.4 204.7 L902.4 203.1 L902.4 201.4 L902.4 199.8 L902.4 198.2 L902.4 196.5 L902.4 194.9 L902.4 193.3 L902.4 191.7 L902.4 190.0 L902.4 188.4 L902.4 186.8 L902.4 185.1 L902.4 183.5 L902.4 181.9 L902.4 180.2 L902.4 178.6 L902.4 177.0 L902.4 175.4 L902.4 173.7 L902.4 172.1 L902.4 170.5 L902.4 168.8 L902.4 167.2 L902.4 165.6 L902.4 163.9 L902.4 162.3 L902.4 160.7 L902.4 159.1 L902.4 157.4 L902.4 155.8 L902.4 154.2 L902.4 152.5 L902.4 150.9 L902.4 149.3 L902.4 147.6 L902.4 146.0 L902.4 144.4 L902.4 142.7 L902.4 141.1 L902.4 139.5 L902.4 137.9 L902.4 136.2 L902.4 134.6 L902.4 133.0 L902.4 131.3 L902.4 129.7 L902.4 128.1 L902.4 126.4 L902.4 124.8 L902.4 123.2 L902.4 121.6 L902.4 119.9 L902.4 118.3 L902.4 116.7 L902.4 115.0 L902.4 113.4 L902.4 111.8 L902.4 110.1 L902.4 108.5 L902.4 106.9 L902.4 105.3 L902.4 103.6 L902.4 102.0 L902.4 100.4 L902.4 98.7 L902.4 97.1 L902.4 95.5 L902.4 93.8 L902.4 92.2 L902.4 90.6 L902.4 89.0 L902.4 87.3 L902.4 85.7 L902.4 84.1 L902.4 82.4 L902.4 80.8 L902.4 79.2 L902.4 77.5 L902.4 75.9 L902.4 74.3 L902.4 72.6 L902.4 71.0 L902.4 69.4 L902.4 67.8 L902.4 66.1 L902.4 64.5 L902.4 62.9 L902.4 61.2 L902.4 59.6 L902.4 58.0 L902.4 56.3 L902.4 54.7 L902.4 53.1 L902.4 51.5 L902.4 49.8 L902.4 48.2 L902.4 46.6 L902.4 44.9 L902.4 43.3 L902.4 41.7 L902.4 40.0 L902.4 38.4 L902.4 36.8 L902.4 35.2 L902.4 33.5 L902.4 31.9 L902.4 30.3 L902.4 28.6 L902.4 27.0"/><path d="M902.4 613.9 L902.0 612.3 L901.5 610.6 L901.1 609.0 L900.7 607.4 L900.3 605.7 L899.8 604.1 L899.4 602.5 L899.0 600.9 L898.6 599.2 L898.1 597.6 L897.7 596.0 L897.3 594.3 L896.9 592.7 L896.4 591.1 L896.0 589.4 L895.6 587.8 L895.2 586.2 L894.7 584.6 L894.3 582.9 L893.9 581.3 L893.5 579.7 L893.1 578.0 L892.6 576.4 L892.2 574.8 L891.8 573.1 L891.4 571.5 L891.0 569.9 L890.6 568.3 L890.2 566.6 L889.7 565.0 L889.3 563.4 L888.9 561.7 L888.5 560.1 L888.1 558.5 L887.7 556.8 L887.3 555.2 L886.9 553.6 L886.5 551.9 L886.1 550.3 L885.7 548.7 L885.3 547.1 L884.9 545.4 L884.5 543.8 L884.1 542.2 L883.7 540.5 L883.3 538.9 L882.9 537.3 L882.5 535.6 L882.1 534.0 L881.7 532.4 L881.3 530.8 L881.0 529.1 L880.6 527.5 L880.2 525.9 L879.8 524.2 L879.4 522.6 L879.1 521.0 L878.7 519.3 L878.3 517.7 L877.9 516.1 L877.6 514.5 L877.2 512.8 L876.8 511.2 L876.5 509.6 L876.1 507.9 L875.8 506.3 L875.4 504.7 L875.1 503.0 L874.7 501.4 L874.3 499.8 L874.0 498.2 L873.7 496.5 L873.3 494.9 L873.0 493.3 L872.6 491.6 L872.3 490.0 L872.0 488.4 L871.6 486.7 L871.3 485.1 L871.0 483.5 L870.6 481.8 L870.3 480.2 L870.0 478.6 L869.7 477.0 L869.4 475.3 L869.0 473.7 L868.7 472.1 L868.4 470.4 L868.1 468.8 L867.8 467.2 L867.5 465.5 L867.2 463.9 L866.9 462.3 L866.6 460.7 L866.3 459.0 L866.1 457.4 L865.8 455.8 L865.5 454.1 L865.2 452.5 L864.9 450.9 L864.7 449.2 L864.4 447.6 L864.1 446.0 L863.9 444.4 L863.6 442.7 L863.3 441.1 L863.1 439.5 L862.8 437.8 L862.6 436.2 L862.3 434.6 L862.1 432.9 L861.9 431.3 L861.6 429.7 L861.4 428.0 L861.2 426.4 L860.9 424.8 L860.7 423.2 L860.5 421.5 L860.3 419.9 L860.0 418.3 L859.8 416.6 L859.6 415.0 L859.4 413.4 L859.2 411.7 L859.0 410.1 L858.8 408.5 L858.6 406.9 L858.4 405.2 L858.3 403.6 L858.1 402.0 L857.9 400.3 L857.7 398.7 L857.5 397.1 L857.4 395.4 L857.2 393.8 L857.1 392.2 L856.9 390.6 L856.7 388.9 L856.6 387.3 L856.4 385.7 L856.3 384.0 L856.2 382.4 L856.0 380.8 L855.9 379.1 L855.8 377.5 L855.6 375.9 L855.5 374.2 L855.4 372.6 L855.3 371.0 L855.2 369.4 L855.0 367.7 L854.9 366.1 L854.8 364.5 L854.7 362.8 L854.7 361.2 L854.6 359.6 L854.5 357.9 L854.4 356.3 L854.3 354.7 L854.2 353.1 L854.2 351.4 L854.1 349.8 L854.0 348.2 L854.0 346.5 L853.9 344.9 L853.9 343.3 L853.8 341.6 L853.8 340.0 L853.7 338.4 L853.7 336.8 L853.6 335.1 L853.6 333.5 L853.6 331.9 L853.6 330.2 L853.5 328.6 L853.5 327.0 L853.5 325.3 L853.5 323.7 L853.5 322.1 L853.5 320.4 L853.5 318.8 L853.5 317.2 L853.5 315.6 L853.5 313.9 L853.5 312.3 L853.6 310.7 L853.6 309.0 L853.6 307.4 L853.6 305.8 L853.7 304.1 L853.7 302.5 L853.8 300.9 L853.8 299.3 L853.9 297.6 L853.9 296.0 L854.0 294.4 L854.0 292.7 L854.1 291.1 L854.2 289.5 L854.2 287.8 L854.3 286.2 L854.4 284.6 L854.5 283.0 L854.6 281.3 L854.7 279.7 L854.7 278.1 L854.8 276.4 L854.9 274.8 L855.0 273.2 L855.2 271.5 L855.3 269.9 L855.4 268.3 L855.5 266.7 L855.6 265.0 L855.8 263.4 L855.9 261.8 L856.0 260.1 L856.2 258.5 L856.3 256.9 L856.4 255.2 L856.6 253.6 L856.7 252.0 L856.9 250.3 L857.1 248.7 L857.2 247.1 L857.4 245.5 L857.5 243.8 L857.7 242.2 L857.9 240.6 L858.1 238.9 L858.3 237.3 L858.4 235.7 L858.6 234.0 L858.8 232.4 L859.0 230.8 L859.2 229.2 L859.4 227.5 L859.6 225.9 L859.8 224.3 L860.0 222.6 L860.3 221.0 L860.5 219.4 L860.7 217.7 L860.9 216.1 L861.2 214.5 L861.4 212.9 L861.6 211.2 L861.9 209.6 L862.1 208.0 L862.3 206.3 L862.6 204.7 L862.8 203.1 L863.1 201.4 L863.3 199.8 L863.6 198.2 L863.9 196.5 L864.1 194.9 L864.4 193.3 L864.7 191.7 L864.9 190.0 L865.2 188.4 L865.5 186.8 L865.8 185.1 L866.1 183.5 L866.3 181.9 L866.6 180.2 L866.9 178.6 L867.2 177.0 L867.5 175.4 L867.8 173.7 L868.1 172.1 L868.4 170.5 L868.7 168.8 L869.0 167.2 L869.4 165.6 L869.7 163.9 L870.0 162.3 L870.3 160.7 L870.6 159.1 L871.0 157.4 L871.3 155.8 L871.6 154.2 L872.0 152.5 L872.3 150.9 L872.6 149.3 L873.0 147.6 L873.3 146.0 L873.7 144.4 L874.0 142.7 L874.3 141.1 L874.7 139.5 L875.1 137.9 L875.4 136.2 L875.8 134.6 L876.1 133.0 L876.5 131.3 L876.8 129.7 L877.2 128.1 L877.6 126.4 L877.9 124.8 L878.3 123.2 L878.7 121.6 L879.1 119.9 L879.4 118.3 L879.8 116.7 L880.2 115.0 L880.6 113.4 L881.0 111.8 L881.3 110.1 L881.7 108.5 L882.1 106.9 L882.5 105.3 L882.9 103.6 L883.3 102.0 L883.7 100.4 L884.1 98.7 L884.5 97.1 L884.9 95.5 L885.3 93.8 L885.7 92.2 L886.1 90.6 L886.5 89.0 L886.9 87.3 L887.3 85.7 L887.7 84.1 L888.1 82.4 L888.5 80.8 L888.9 79.2 L889.3 77.5 L889.7 75.9 L890.2 74.3 L890.6 72.6 L891.0 71.0 L891.4 69.4 L891.8 67.8 L892.2 66.1 L892.6 64.5 L893.1 62.9 L893.5 61.2 L893.9 59.6 L894.3 58.0 L894.7 56.3 L895.2 54.7 L895.6 53.1 L896.0 51.5 L896.4 49.8 L896.9 48.2 L897.3 46.6 L897.7 44.9 L898.1 43.3 L898.6 41.7 L899.0 40.0 L899.4 38.4 L899.8 36.8 L900.3 35.2 L900.7 33.5 L901.1 31.9 L901.5 30.3 L902.0 28.6 L902.4 27.0"/><path d="M902.4 613.9 L901.5 612.3 L900.7 610.6 L899.8 609.0 L899.0 607.4 L898.1 605.7 L897.3 604.1 L896.4 602.5 L895.6 600.9 L894.7 599.2 L893.9 597.6 L893.0 596.0 L892.2 594.3 L891.3 592.7 L890.5 591.1 L889.6 589.4 L888.8 587.8 L887.9 586.2 L887.1 584.6 L886.3 582.9 L885.4 581.3 L884.6 579.7 L883.7 578.0 L882.9 576.4 L882.1 574.8 L881.2 573.1 L880.4 571.5 L879.6 569.9 L878.7 568.3 L877.9 566.6 L877.1 565.0 L876.3 563.4 L875.4 561.7 L874.6 560.1 L873.8 558.5 L873.0 556.8 L872.2 555.2 L871.4 553.6 L870.6 551.9 L869.7 550.3 L868.9 548.7 L868.1 547.1 L867.3 545.4 L866.6 543.8 L865.8 542.2 L865.0 540.5 L864.2 538.9 L863.4 537.3 L862.6 535.6 L861.8 534.0 L861.1 532.4 L860.3 530.8 L859.5 529.1 L858.8 527.5 L858.0 525.9 L857.2 524.2 L856.5 522.6 L855.7 521.0 L855.0 519.3 L854.2 517.7 L853.5 516.1 L852.8 514.5 L852.0 512.8 L851.3 511.2 L850.6 509.6 L849.8 507.9 L849.1 506.3 L848.4 504.7 L847.7 503.0 L847.0 501.4 L846.3 499.8 L845.6 498.2 L844.9 496.5 L844.2 494.9 L843.5 493.3 L842.9 491.6 L842.2 490.0 L841.5 488.4 L840.8 486.7 L840.2 485.1 L839.5 483.5 L838.9 481.8 L838.2 480.2 L837.6 478.6 L836.9 477.0 L836.3 475.3 L835.7 473.7 L835.1 472.1 L834.5 470.4 L833.8 468.8 L833.2 467.2 L832.6 465.5 L832.0 463.9 L831.4 462.3 L830.9 460.7 L830.3 459.0 L829.7 457.4 L829.1 455.8 L828.6 454.1 L828.0 452.5 L827.5 450.9 L826.9 449.2 L826.4 447.6 L825.8 446.0 L825.3 444.4 L824.8 442.7 L824.3 441.1 L823.8 439.5 L823.3 437.8 L822.8 436.2 L822.3 434.6 L821.8 432.9 L821.3 431.3 L820.8 429.7 L820.4 428.0 L819.9 426.4 L819.4 424.8 L819.0 423.2 L818.6 421.5 L818.1 419.9 L817.7 418.3 L817.3 416.6 L816.8 415.0 L816.4 413.4 L816.0 411.7 L815.6 410.1 L815.2 408.5 L814.9 406.9 L814.5 405.2 L814.1 403.6 L813.7 402.0 L813.4 400.3 L813.0 398.7 L812.7 397.1 L812.4 395.4 L812.0 393.8 L811.7 392.2 L811.4 390.6 L811.1 388.9 L810.8 387.3 L810.5 385.7 L810.2 384.0 L809.9 382.4 L809.6 380.8 L809.4 379.1 L809.1 377.5 L808.9 375.9 L808.6 374.2 L808.4 372.6 L808.1 371.0 L807.9 369.4 L807.7 367.7 L807.5 366.1 L807.3 364.5 L807.1 362.8 L806.9 361.2 L806.7 359.6 L806.5 357.9 L806.4 356.3 L806.2 354.7 L806.1 353.1 L805.9 351.4 L805.8 349.8 L805.7 348.2 L805.5 346.5 L805.4 344.9 L805.3 343.3 L805.2 341.6 L805.1 340.0 L805.0 338.4 L805.0 336.8 L804.9 335.1 L804.8 333.5 L804.8 331.9 L804.7 330.2 L804.7 328.6 L804.6 327.0 L804.6 325.3 L804.6 323.7 L804.6 322.1 L804.6 320.4 L804.6 318.8 L804.6 317.2 L804.6 315.6 L804.6 313.9 L804.7 312.3 L804.7 310.7 L804.8 309.0 L804.8 307.4 L804.9 305.8 L805.0 304.1 L805.0 302.5 L805.1 300.9 L805.2 299.3 L805.3 297.6 L805.4 296.0 L805.5 294.4 L805.7 292.7 L805.8 291.1 L805.9 289.5 L806.1 287.8 L806.2 286.2 L806.4 284.6 L806.5 283.0 L806.7 281.3 L806.9 279.7 L807.1 278.1 L807.3 276.4 L807.5 274.8 L807.7 273.2 L807.9 271.5 L808.1 269.9 L808.4 268.3 L808.6 266.7 L808.9 265.0 L809.1 263.4 L809.4 261.8 L809.6 260.1 L809.9 258.5 L810.2 256.9 L810.5 255.2 L810.8 253.6 L811.1 252.0 L811.4 250.3 L811.7 248.7 L812.0 247.1 L812.4 245.5 L812.7 243.8 L813.0 242.2 L813.4 240.6 L813.7 238.9 L814.1 237.3 L814.5 235.7 L814.9 234.0 L815.2 232.4 L815.6 230.8 L816.0 229.2 L816.4 227.5 L816.8 225.9 L817.3 224.3 L817.7 222.6 L818.1 221.0 L818.6 219.4 L819.0 217.7 L819.4 216.1 L819.9 214.5 L820.4 212.9 L820.8 211.2 L821.3 209.6 L821.8 208.0 L822.3 206.3 L822.8 204.7 L823.3 203.1 L823.8 201.4 L824.3 199.8 L824.8 198.2 L825.3 196.5 L825.8 194.9 L826.4 193.3 L826.9 191.7 L827.5 190.0 L828.0 188.4 L828.6 186.8 L829.1 185.1 L829.7 183.5 L830.3 181.9 L830.9 180.2 L831.4 178.6 L832.0 177.0 L832.6 175.4 L833.2 173.7 L833.8 172.1 L834.5 170.5 L835.1 168.8 L835.7 167.2 L836.3 165.6 L836.9 163.9 L837.6 162.3 L838.2 160.7 L838.9 159.1 L839.5 157.4 L840.2 155.8 L840.8 154.2 L841.5 152.5 L842.2 150.9 L842.9 149.3 L843.5 147.6 L844.2 146.0 L844.9 144.4 L845.6 142.7 L846.3 141.1 L847.0 139.5 L847.7 137.9 L848.4 136.2 L849.1 134.6 L849.8 133.0 L850.6 131.3 L851.3 129.7 L852.0 128.1 L852.8 126.4 L853.5 124.8 L854.2 123.2 L855.0 121.6 L855.7 119.9 L856.5 118.3 L857.2 116.7 L858.0 115.0 L858.8 113.4 L859.5 111.8 L860.3 110.1 L861.1 108.5 L861.8 106.9 L862.6 105.3 L863.4 103.6 L864.2 102.0 L865.0 100.4 L865.8 98.7 L866.6 97.1 L867.3 95.5 L868.1 93.8 L868.9 92.2 L869.7 90.6 L870.6 89.0 L871.4 87.3 L872.2 85.7 L873.0 84.1 L873.8 82.4 L874.6 80.8 L875.4 79.2 L876.3 77.5 L877.1 75.9 L877.9 74.3 L878.7 72.6 L879.6 71.0 L880.4 69.4 L881.2 67.8 L882.1 66.1 L882.9 64.5 L883.7 62.9 L884.6 61.2 L885.4 59.6 L886.3 58.0 L887.1 56.3 L887.9 54.7 L888.8 53.1 L889.6 51.5 L890.5 49.8 L891.3 48.2 L892.2 46.6 L893.0 44.9 L893.9 43.3 L894.7 41.7 L895.6 40.0 L896.4 38.4 L897.3 36.8 L898.1 35.2 L899.0 33.5 L899.8 31.9 L900.7 30.3 L901.5 28.6 L902.4 27.0"/><path d="M902.4 613.9 L901.1 612.3 L899.8 610.6 L898.6 609.0 L897.3 607.4 L896.0 605.7 L894.7 604.1 L893.4 602.5 L892.2 600.9 L890.9 599.2 L889.6 597.6 L888.3 596.0 L887.1 594.3 L885.8 592.7 L884.5 591.1 L883.2 589.4 L882.0 587.8 L880.7 586.2 L879.4 584.6 L878.2 582.9 L876.9 581.3 L875.7 579.7 L874.4 578.0 L873.1 576.4 L871.9 574.8 L870.6 573.1 L869.4 571.5 L868.1 569.9 L866.9 568.3 L865.7 566.6 L864.4 565.0 L863.2 563.4 L862.0 561.7 L860.7 560.1 L859.5 558.5 L858.3 556.8 L857.1 555.2 L855.8 553.6 L854.6 551.9 L853.4 550.3 L852.2 548.7 L851.0 547.1 L849.8 545.4 L848.6 543.8 L847.4 542.2 L846.3 540.5 L845.1 538.9 L843.9 537.3 L842.7 535.6 L841.6 534.0 L840.4 532.4 L839.2 530.8 L838.1 529.1 L836.9 527.5 L835.8 525.9 L834.6 524.2 L833.5 522.6 L832.4 521.0 L831.3 519.3 L830.1 517.7 L829.0 516.1 L827.9 514.5 L826.8 512.8 L825.7 511.2 L824.6 509.6 L823.6 507.9 L822.5 506.3 L821.4 504.7 L820.4 503.0 L819.3 501.4 L818.2 499.8 L817.2 498.2 L816.2 496.5 L815.1 494.9 L814.1 493.3 L813.1 491.6 L812.1 490.0 L811.1 488.4 L810.1 486.7 L809.1 485.1 L808.1 483.5 L807.1 481.8 L806.1 480.2 L805.2 478.6 L804.2 477.0 L803.3 475.3 L802.3 473.7 L801.4 472.1 L800.5 470.4 L799.6 468.8 L798.6 467.2 L797.7 465.5 L796.9 463.9 L796.0 462.3 L795.1 460.7 L794.2 459.0 L793.4 457.4 L792.5 455.8 L791.7 454.1 L790.8 452.5 L790.0 450.9 L789.2 449.2 L788.4 447.6 L787.6 446.0 L786.8 444.4 L786.0 442.7 L785.2 441.1 L784.5 439.5 L783.7 437.8 L782.9 436.2 L782.2 434.6 L781.5 432.9 L780.8 431.3 L780.0 429.7 L779.3 428.0 L778.7 426.4 L778.0 424.8 L777.3 423.2 L776.6 421.5 L776.0 419.9 L775.3 418.3 L774.7 416.6 L774.1 415.0 L773.5 413.4 L772.8 411.7 L772.3 410.1 L771.7 408.5 L771.1 406.9 L770.5 405.2 L770.0 403.6 L769.4 402.0 L768.9 400.3 L768.4 398.7 L767.8 397.1 L767.3 395.4 L766.8 393.8 L766.4 392.2 L765.9 390.6 L765.4 388.9 L765.0 387.3 L764.5 385.7 L764.1 384.0 L763.7 382.4 L763.3 380.8 L762.9 379.1 L762.5 377.5 L762.1 375.9 L761.7 374.2 L761.4 372.6 L761.0 371.0 L760.7 369.4 L760.3 367.7 L760.0 366.1 L759.7 364.5 L759.4 362.8 L759.2 361.2 L758.9 359.6 L758.6 357.9 L758.4 356.3 L758.1 354.7 L757.9 353.1 L757.7 351.4 L757.5 349.8 L757.3 348.2 L757.1 346.5 L756.9 344.9 L756.8 343.3 L756.6 341.6 L756.5 340.0 L756.4 338.4 L756.2 336.8 L756.1 335.1 L756.0 333.5 L755.9 331.9 L755.9 330.2 L755.8 328.6 L755.8 327.0 L755.7 325.3 L755.7 323.7 L755.7 322.1 L755.7 320.4 L755.7 318.8 L755.7 317.2 L755.7 315.6 L755.8 313.9 L755.8 312.3 L755.9 310.7 L755.9 309.0 L756.0 307.4 L756.1 305.8 L756.2 304.1 L756.4 302.5 L756.5 300.9 L756.6 299.3 L756.8 297.6 L756.9 296.0 L757.1 294.4 L757.3 292.7 L757.5 291.1 L757.7 289.5 L757.9 287.8 L758.1 286.2 L758.4 284.6 L758.6 283.0 L758.9 281.3 L759.2 279.7 L759.4 278.1 L759.7 276.4 L760.0 274.8 L760.3 273.2 L760.7 271.5 L761.0 269.9 L761.4 268.3 L761.7 266.7 L762.1 265.0 L762.5 263.4 L762.9 261.8 L763.3 260.1 L763.7 258.5 L764.1 256.9 L764.5 255.2 L765.0 253.6 L765.4 252.0 L765.9 250.3 L766.4 248.7 L766.8 247.1 L767.3 245.5 L767.8 243.8 L768.4 242.2 L768.9 240.6 L769.4 238.9 L770.0 237.3 L770.5 235.7 L771.1 234.0 L771.7 232.4 L772.3 230.8 L772.8 229.2 L773.5 227.5 L774.1 225.9 L774.7 224.3 L775.3 222.6 L776.0 221.0 L776.6 219.4 L777.3 217.7 L778.0 216.1 L778.7 214.5 L779.3 212.9 L780.0 211.2 L780.8 209.6 L781.5 208.0 L782.2 206.3 L782.9 204.7 L783.7 203.1 L784.5 201.4 L785.2 199.8 L786.0 198.2 L786.8 196.5 L787.6 194.9 L788.4 193.3 L789.2 191.7 L790.0 190.0 L790.8 188.4 L791.7 186.8 L792.5 185.1 L793.4 183.5 L794.2 181.9 L795.1 180.2 L796.0 178.6 L796.9 177.0 L797.7 175.4 L798.6 173.7 L799.6 172.1 L800.5 170.5 L801.4 168.8 L802.3 167.2 L803.3 165.6 L804.2 163.9 L805.2 162.3 L806.1 160.7 L807.1 159.1 L808.1 157.4 L809.1 155.8 L810.1 154.2 L811.1 152.5 L812.1 150.9 L813.1 149.3 L814.1 147.6 L815.1 146.0 L816.2 144.4 L817.2 142.7 L818.2 141.1 L819.3 139.5 L820.4 137.9 L821.4 136.2 L822.5 134.6 L823.6 133.0 L824.6 131.3 L825.7 129.7 L826.8 128.1 L827.9 126.4 L829.0 124.8 L830.1 123.2 L831.3 121.6 L832.4 119.9 L833.5 118.3 L834.6 116.7 L835.8 115.0 L836.9 113.4 L838.1 111.8 L839.2 110.1 L840.4 108.5 L841.6 106.9 L842.7 105.3 L843.9 103.6 L845.1 102.0 L846.3 100.4 L847.4 98.7 L848.6 97.1 L849.8 95.5 L851.0 93.8 L852.2 92.2 L853.4 90.6 L854.6 89.0 L855.8 87.3 L857.1 85.7 L858.3 84.1 L859.5 82.4 L860.7 80.8 L862.0 79.2 L863.2 77.5 L864.4 75.9 L865.7 74.3 L866.9 72.6 L868.1 71.0 L869.4 69.4 L870.6 67.8 L871.9 66.1 L873.1 64.5 L874.4 62.9 L875.7 61.2 L876.9 59.6 L878.2 58.0 L879.4 56.3 L880.7 54.7 L882.0 53.1 L883.2 51.5 L884.5 49.8 L885.8 48.2 L887.1 46.6 L888.3 44.9 L889.6 43.3 L890.9 41.7 L892.2 40.0 L893.4 38.4 L894.7 36.8 L896.0 35.2 L897.3 33.5 L898.6 31.9 L899.8 30.3 L901.1 28.6 L902.4 27.0"/><path d="M902.4 613.9 L900.7 612.3 L899.0 610.6 L897.3 609.0 L895.6 607.4 L893.9 605.7 L892.2 604.1 L890.5 602.5 L888.8 600.9 L887.1 599.2 L885.3 597.6 L883.6 596.0 L882.0 594.3 L880.3 592.7 L878.6 591.1 L876.9 589.4 L875.2 587.8 L873.5 586.2 L871.8 584.6 L870.1 582.9 L868.4 581.3 L866.7 579.7 L865.1 578.0 L863.4 576.4 L861.7 574.8 L860.1 573.1 L858.4 571.5 L856.7 569.9 L855.1 568.3 L853.4 566.6 L851.8 565.0 L850.1 563.4 L848.5 561.7 L846.8 560.1 L845.2 558.5 L843.6 556.8 L841.9 555.2 L840.3 553.6 L838.7 551.9 L837.1 550.3 L835.5 548.7 L833.9 547.1 L832.3 545.4 L830.7 543.8 L829.1 542.2 L827.5 540.5 L826.0 538.9 L824.4 537.3 L822.8 535.6 L821.3 534.0 L819.7 532.4 L818.2 530.8 L816.6 529.1 L815.1 527.5 L813.6 525.9 L812.1 524.2 L810.6 522.6 L809.1 521.0 L807.6 519.3 L806.1 517.7 L804.6 516.1 L803.1 514.5 L801.6 512.8 L800.2 511.2 L798.7 509.6 L797.3 507.9 L795.9 506.3 L794.4 504.7 L793.0 503.0 L791.6 501.4 L790.2 499.8 L788.8 498.2 L787.4 496.5 L786.0 494.9 L784.7 493.3 L783.3 491.6 L782.0 490.0 L780.6 488.4 L779.3 486.7 L778.0 485.1 L776.6 483.5 L775.3 481.8 L774.1 480.2 L772.8 478.6 L771.5 477.0 L770.2 475.3 L769.0 473.7 L767.7 472.1 L766.5 470.4 L765.3 468.8 L764.1 467.2 L762.9 465.5 L761.7 463.9 L760.5 462.3 L759.3 460.7 L758.2 459.0 L757.0 457.4 L755.9 455.8 L754.8 454.1 L753.6 452.5 L752.5 450.9 L751.4 449.2 L750.4 447.6 L749.3 446.0 L748.2 444.4 L747.2 442.7 L746.2 441.1 L745.1 439.5 L744.1 437.8 L743.1 436.2 L742.1 434.6 L741.2 432.9 L740.2 431.3 L739.3 429.7 L738.3 428.0 L737.4 426.4 L736.5 424.8 L735.6 423.2 L734.7 421.5 L733.8 419.9 L733.0 418.3 L732.1 416.6 L731.3 415.0 L730.5 413.4 L729.7 411.7 L728.9 410.1 L728.1 408.5 L727.3 406.9 L726.6 405.2 L725.8 403.6 L725.1 402.0 L724.4 400.3 L723.7 398.7 L723.0 397.1 L722.3 395.4 L721.7 393.8 L721.0 392.2 L720.4 390.6 L719.8 388.9 L719.2 387.3 L718.6 385.7 L718.0 384.0 L717.4 382.4 L716.9 380.8 L716.3 379.1 L715.8 377.5 L715.3 375.9 L714.8 374.2 L714.3 372.6 L713.9 371.0 L713.4 369.4 L713.0 367.7 L712.6 366.1 L712.2 364.5 L711.8 362.8 L711.4 361.2 L711.0 359.6 L710.7 357.9 L710.4 356.3 L710.0 354.7 L709.7 353.1 L709.4 351.4 L709.2 349.8 L708.9 348.2 L708.7 346.5 L708.4 344.9 L708.2 343.3 L708.0 341.6 L707.8 340.0 L707.7 338.4 L707.5 336.8 L707.4 335.1 L707.2 333.5 L707.1 331.9 L707.0 330.2 L707.0 328.6 L706.9 327.0 L706.8 325.3 L706.8 323.7 L706.8 322.1 L706.8 320.4 L706.8 318.8 L706.8 317.2 L706.8 315.6 L706.9 313.9 L707.0 312.3 L707.0 310.7 L707.1 309.0 L707.2 307.4 L707.4 305.8 L707.5 304.1 L707.7 302.5 L707.8 300.9 L708.0 299.3 L708.2 297.6 L708.4 296.0 L708.7 294.4 L708.9 292.7 L709.2 291.1 L709.4 289.5 L709.7 287.8 L710.0 286.2 L710.4 284.6 L710.7 283.0 L711.0 281.3 L711.4 279.7 L711.8 278.1 L712.2 276.4 L712.6 274.8 L713.0 273.2 L713.4 271.5 L713.9 269.9 L714.3 268.3 L714.8 266.7 L715.3 265.0 L715.8 263.4 L716.3 261.8 L716.9 260.1 L717.4 258.5 L718.0 256.9 L718.6 255.2 L719.2 253.6 L719.8 252.0 L720.4 250.3 L721.0 248.7 L721.7 247.1 L722.3 245.5 L723.0 243.8 L723.7 242.2 L724.4 240.6 L725.1 238.9 L725.8 237.3 L726.6 235.7 L727.3 234.0 L728.1 232.4 L728.9 230.8 L729.7 229.2 L730.5 227.5 L731.3 225.9 L732.1 224.3 L733.0 222.6 L733.8 221.0 L734.7 219.4 L735.6 217.7 L736.5 216.1 L737.4 214.5 L738.3 212.9 L739.3 211.2 L740.2 209.6 L741.2 208.0 L742.1 206.3 L743.1 204.7 L744.1 203.1 L745.1 201.4 L746.2 199.8 L747.2 198.2 L748.2 196.5 L749.3 194.9 L750.4 193.3 L751.4 191.7 L752.5 190.0 L753.6 188.4 L754.8 186.8 L755.9 185.1 L757.0 183.5 L758.2 181.9 L759.3 180.2 L760.5 178.6 L761.7 177.0 L762.9 175.4 L764.1 173.7 L765.3 172.1 L766.5 170.5 L767.7 168.8 L769.0 167.2 L770.2 165.6 L771.5 163.9 L772.8 162.3 L774.1 160.7 L775.3 159.1 L776.6 157.4 L778.0 155.8 L779.3 154.2 L780.6 152.5 L782.0 150.9 L783.3 149.3 L784.7 147.6 L786.0 146.0 L787.4 144.4 L788.8 142.7 L790.2 141.1 L791.6 139.5 L793.0 137.9 L794.4 136.2 L795.9 134.6 L797.3 133.0 L798.7 131.3 L800.2 129.7 L801.6 128.1 L803.1 126.4 L804.6 124.8 L806.1 123.2 L807.6 121.6 L809.1 119.9 L810.6 118.3 L812.1 116.7 L813.6 115.0 L815.1 113.4 L816.6 111.8 L818.2 110.1 L819.7 108.5 L821.3 106.9 L822.8 105.3 L824.4 103.6 L826.0 102.0 L827.5 100.4 L829.1 98.7 L830.7 97.1 L832.3 95.5 L833.9 93.8 L835.5 92.2 L837.1 90.6 L838.7 89.0 L840.3 87.3 L841.9 85.7 L843.6 84.1 L845.2 82.4 L846.8 80.8 L848.5 79.2 L850.1 77.5 L851.8 75.9 L853.4 74.3 L855.1 72.6 L856.7 71.0 L858.4 69.4 L860.1 67.8 L861.7 66.1 L863.4 64.5 L865.1 62.9 L866.7 61.2 L868.4 59.6 L870.1 58.0 L871.8 56.3 L873.5 54.7 L875.2 53.1 L876.9 51.5 L878.6 49.8 L880.3 48.2 L882.0 46.6 L883.6 44.9 L885.3 43.3 L887.1 41.7 L888.8 40.0 L890.5 38.4 L892.2 36.8 L893.9 35.2 L895.6 33.5 L897.3 31.9 L899.0 30.3 L900.7 28.6 L902.4 27.0"/><path d="M902.4 613.9 L900.3 612.3 L898.1 610.6 L896.0 609.0 L893.9 607.4 L891.7 605.7 L889.6 604.1 L887.5 602.5 L885.3 600.9 L883.2 599.2 L881.1 597.6 L879.0 596.0 L876.8 594.3 L874.7 592.7 L872.6 591.1 L870.5 589.4 L868.4 587.8 L866.3 586.2 L864.1 584.6 L862.0 582.9 L859.9 581.3 L857.8 579.7 L855.7 578.0 L853.6 576.4 L851.6 574.8 L849.5 573.1 L847.4 571.5 L845.3 569.9 L843.2 568.3 L841.2 566.6 L839.1 565.0 L837.0 563.4 L835.0 561.7 L832.9 560.1 L830.9 558.5 L828.9 556.8 L826.8 555.2 L824.8 553.6 L822.8 551.9 L820.8 550.3 L818.8 548.7 L816.8 547.1 L814.8 545.4 L812.8 543.8 L810.8 542.2 L808.8 540.5 L806.8 538.9 L804.9 537.3 L802.9 535.6 L801.0 534.0 L799.1 532.4 L797.1 530.8 L795.2 529.1 L793.3 527.5 L791.4 525.9 L789.5 524.2 L787.6 522.6 L785.7 521.0 L783.8 519.3 L782.0 517.7 L780.1 516.1 L778.3 514.5 L776.5 512.8 L774.6 511.2 L772.8 509.6 L771.0 507.9 L769.2 506.3 L767.4 504.7 L765.7 503.0 L763.9 501.4 L762.1 499.8 L760.4 498.2 L758.7 496.5 L756.9 494.9 L755.2 493.3 L753.5 491.6 L751.8 490.0 L750.2 488.4 L748.5 486.7 L746.9 485.1 L745.2 483.5 L743.6 481.8 L742.0 480.2 L740.4 478.6 L738.8 477.0 L737.2 475.3 L735.6 473.7 L734.1 472.1 L732.5 470.4 L731.0 468.8 L729.5 467.2 L728.0 465.5 L726.5 463.9 L725.0 462.3 L723.6 460.7 L722.1 459.0 L720.7 457.4 L719.2 455.8 L717.8 454.1 L716.4 452.5 L715.1 450.9 L713.7 449.2 L712.4 447.6 L711.0 446.0 L709.7 444.4 L708.4 442.7 L707.1 441.1 L705.8 439.5 L704.6 437.8 L703.3 436.2 L702.1 434.6 L700.9 432.9 L699.7 431.3 L698.5 429.7 L697.3 428.0 L696.2 426.4 L695.0 424.8 L693.9 423.2 L692.8 421.5 L691.7 419.9 L690.6 418.3 L689.6 416.6 L688.5 415.0 L687.5 413.4 L686.5 411.7 L685.5 410.1 L684.5 408.5 L683.6 406.9 L682.6 405.2 L681.7 403.6 L680.8 402.0 L679.9 400.3 L679.0 398.7 L678.1 397.1 L677.3 395.4 L676.5 393.8 L675.7 392.2 L674.9 390.6 L674.1 388.9 L673.3 387.3 L672.6 385.7 L671.9 384.0 L671.2 382.4 L670.5 380.8 L669.8 379.1 L669.2 377.5 L668.5 375.9 L667.9 374.2 L667.3 372.6 L666.8 371.0 L666.2 369.4 L665.6 367.7 L665.1 366.1 L664.6 364.5 L664.1 362.8 L663.7 361.2 L663.2 359.6 L662.8 357.9 L662.4 356.3 L662.0 354.7 L661.6 353.1 L661.2 351.4 L660.9 349.8 L660.5 348.2 L660.2 346.5 L660.0 344.9 L659.7 343.3 L659.4 341.6 L659.2 340.0 L659.0 338.4 L658.8 336.8 L658.6 335.1 L658.5 333.5 L658.3 331.9 L658.2 330.2 L658.1 328.6 L658.0 327.0 L657.9 325.3 L657.9 323.7 L657.9 322.1 L657.9 320.4 L657.9 318.8 L657.9 317.2 L657.9 315.6 L658.0 313.9 L658.1 312.3 L658.2 310.7 L658.3 309.0 L658.5 307.4 L658.6 305.8 L658.8 304.1 L659.0 302.5 L659.2 300.9 L659.4 299.3 L659.7 297.6 L660.0 296.0 L660.2 294.4 L660.5 292.7 L660.9 291.1 L661.2 289.5 L661.6 287.8 L662.0 286.2 L662.4 284.6 L662.8 283.0 L663.2 281.3 L663.7 279.7 L664.1 278.1 L664.6 276.4 L665.1 274.8 L665.6 273.2 L666.2 271.5 L666.8 269.9 L667.3 268.3 L667.9 266.7 L668.5 265.0 L669.2 263.4 L669.8 261.8 L670.5 260.1 L671.2 258.5 L671.9 256.9 L672.6 255.2 L673.3 253.6 L674.1 252.0 L674.9 250.3 L675.7 248.7 L676.5 247.1 L677.3 245.5 L678.1 243.8 L679.0 242.2 L679.9 240.6 L680.8 238.9 L681.7 237.3 L682.6 235.7 L683.6 234.0 L684.5 232.4 L685.5 230.8 L686.5 229.2 L687.5 227.5 L688.5 225.9 L689.6 224.3 L690.6 222.6 L691.7 221.0 L692.8 219.4 L693.9 217.7 L695.0 216.1 L696.2 214.5 L697.3 212.9 L698.5 211.2 L699.7 209.6 L700.9 208.0 L702.1 206.3 L703.3 204.7 L704.6 203.1 L705.8 201.4 L707.1 199.8 L708.4 198.2 L709.7 196.5 L711.0 194.9 L712.4 193.3 L713.7 191.7 L715.1 190.0 L716.4 188.4 L717.8 186.8 L719.2 185.1 L720.7 183.5 L722.1 181.9 L723.6 180.2 L725.0 178.6 L726.5 177.0 L728.0 175.4 L729.5 173.7 L731.0 172.1 L732.5 170.5 L734.1 168.8 L735.6 167.2 L737.2 165.6 L738.8 163.9 L740.4 162.3 L742.0 160.7 L743.6 159.1 L745.2 157.4 L746.9 155.8 L748.5 154.2 L750.2 152.5 L751.8 150.9 L753.5 149.3 L755.2 147.6 L756.9 146.0 L758.7 144.4 L760.4 142.7 L762.1 141.1 L763.9 139.5 L765.7 137.9 L767.4 136.2 L769.2 134.6 L771.0 133.0 L772.8 131.3 L774.6 129.7 L776.5 128.1 L778.3 126.4 L780.1 124.8 L782.0 123.2 L783.8 121.6 L785.7 119.9 L787.6 118.3 L789.5 116.7 L791.4 115.0 L793.3 113.4 L795.2 111.8 L797.1 110.1 L799.1 108.5 L801.0 106.9 L802.9 105.3 L804.9 103.6 L806.8 102.0 L808.8 100.4 L810.8 98.7 L812.8 97.1 L814.8 95.5 L816.8 93.8 L818.8 92.2 L820.8 90.6 L822.8 89.0 L824.8 87.3 L826.8 85.7 L828.9 84.1 L830.9 82.4 L832.9 80.8 L835.0 79.2 L837.0 77.5 L839.1 75.9 L841.2 74.3 L843.2 72.6 L845.3 71.0 L847.4 69.4 L849.5 67.8 L851.6 66.1 L853.6 64.5 L855.7 62.9 L857.8 61.2 L859.9 59.6 L862.0 58.0 L864.1 56.3 L866.3 54.7 L868.4 53.1 L870.5 51.5 L872.6 49.8 L874.7 48.2 L876.8 46.6 L879.0 44.9 L881.1 43.3 L883.2 41.7 L885.3 40.0 L887.5 38.4 L889.6 36.8 L891.7 35.2 L893.9 33.5 L896.0 31.9 L898.1 30.3 L900.3 28.6 L902.4 27.0"/><path d="M902.4 613.9 L899.8 612.3 L897.3 610.6 L894.7 609.0 L892.2 607.4 L889.6 605.7 L887.0 604.1 L884.5 602.5 L881.9 600.9 L879.4 599.2 L876.8 597.6 L874.3 596.0 L871.7 594.3 L869.2 592.7 L866.6 591.1 L864.1 589.4 L861.6 587.8 L859.0 586.2 L856.5 584.6 L854.0 582.9 L851.4 581.3 L848.9 579.7 L846.4 578.0 L843.9 576.4 L841.4 574.8 L838.9 573.1 L836.4 571.5 L833.9 569.9 L831.4 568.3 L828.9 566.6 L826.4 565.0 L824.0 563.4 L821.5 561.7 L819.1 560.1 L816.6 558.5 L814.2 556.8 L811.7 555.2 L809.3 553.6 L806.9 551.9 L804.4 550.3 L802.0 548.7 L799.6 547.1 L797.2 545.4 L794.9 543.8 L792.5 542.2 L790.1 540.5 L787.7 538.9 L785.4 537.3 L783.0 535.6 L780.7 534.0 L778.4 532.4 L776.1 530.8 L773.8 529.1 L771.5 527.5 L769.2 525.9 L766.9 524.2 L764.6 522.6 L762.4 521.0 L760.1 519.3 L757.9 517.7 L755.7 516.1 L753.5 514.5 L751.3 512.8 L749.1 511.2 L746.9 509.6 L744.7 507.9 L742.6 506.3 L740.4 504.7 L738.3 503.0 L736.2 501.4 L734.1 499.8 L732.0 498.2 L729.9 496.5 L727.8 494.9 L725.8 493.3 L723.8 491.6 L721.7 490.0 L719.7 488.4 L717.7 486.7 L715.7 485.1 L713.8 483.5 L711.8 481.8 L709.9 480.2 L708.0 478.6 L706.0 477.0 L704.1 475.3 L702.3 473.7 L700.4 472.1 L698.6 470.4 L696.7 468.8 L694.9 467.2 L693.1 465.5 L691.3 463.9 L689.5 462.3 L687.8 460.7 L686.0 459.0 L684.3 457.4 L682.6 455.8 L680.9 454.1 L679.3 452.5 L677.6 450.9 L676.0 449.2 L674.3 447.6 L672.7 446.0 L671.2 444.4 L669.6 442.7 L668.0 441.1 L666.5 439.5 L665.0 437.8 L663.5 436.2 L662.0 434.6 L660.6 432.9 L659.1 431.3 L657.7 429.7 L656.3 428.0 L654.9 426.4 L653.5 424.8 L652.2 423.2 L650.9 421.5 L649.6 419.9 L648.3 418.3 L647.0 416.6 L645.7 415.0 L644.5 413.4 L643.3 411.7 L642.1 410.1 L640.9 408.5 L639.8 406.9 L638.6 405.2 L637.5 403.6 L636.4 402.0 L635.4 400.3 L634.3 398.7 L633.3 397.1 L632.3 395.4 L631.3 393.8 L630.3 392.2 L629.4 390.6 L628.4 388.9 L627.5 387.3 L626.6 385.7 L625.8 384.0 L624.9 382.4 L624.1 380.8 L623.3 379.1 L622.5 377.5 L621.8 375.9 L621.0 374.2 L620.3 372.6 L619.6 371.0 L618.9 369.4 L618.3 367.7 L617.7 366.1 L617.1 364.5 L616.5 362.8 L615.9 361.2 L615.4 359.6 L614.8 357.9 L614.3 356.3 L613.9 354.7 L613.4 353.1 L613.0 351.4 L612.6 349.8 L612.2 348.2 L611.8 346.5 L611.5 344.9 L611.1 343.3 L610.8 341.6 L610.6 340.0 L610.3 338.4 L610.1 336.8 L609.9 335.1 L609.7 333.5 L609.5 331.9 L609.4 330.2 L609.2 328.6 L609.1 327.0 L609.1 325.3 L609.0 323.7 L609.0 322.1 L609.0 320.4 L609.0 318.8 L609.0 317.2 L609.1 315.6 L609.1 313.9 L609.2 312.3 L609.4 310.7 L609.5 309.0 L609.7 307.4 L609.9 305.8 L610.1 304.1 L610.3 302.5 L610.6 300.9 L610.8 299.3 L611.1 297.6 L611.5 296.0 L611.8 294.4 L612.2 292.7 L612.6 291.1 L613.0 289.5 L613.4 287.8 L613.9 286.2 L614.3 284.6 L614.8 283.0 L615.4 281.3 L615.9 279.7 L616.5 278.1 L617.1 276.4 L617.7 274.8 L618.3 273.2 L618.9 271.5 L619.6 269.9 L620.3 268.3 L621.0 266.7 L621.8 265.0 L622.5 263.4 L623.3 261.8 L624.1 260.1 L624.9 258.5 L625.8 256.9 L626.6 255.2 L627.5 253.6 L628.4 252.0 L629.4 250.3 L630.3 248.7 L631.3 247.1 L632.3 245.5 L633.3 243.8 L634.3 242.2 L635.4 240.6 L636.4 238.9 L637.5 237.3 L638.6 235.7 L639.8 234.0 L640.9 232.4 L642.1 230.8 L643.3 229.2 L644.5 227.5 L645.7 225.9 L647.0 224.3 L648.3 222.6 L649.6 221.0 L650.9 219.4 L652.2 217.7 L653.5 216.1 L654.9 214.5 L656.3 212.9 L657.7 211.2 L659.1 209.6 L660.6 208.0 L662.0 206.3 L663.5 204.7 L665.0 203.1 L666.5 201.4 L668.0 199.8 L669.6 198.2 L671.2 196.5 L672.7 194.9 L674.3 193.3 L676.0 191.7 L677.6 190.0 L679.3 188.4 L680.9 186.8 L682.6 185.1 L684.3 183.5 L686.0 181.9 L687.8 180.2 L689.5 178.6 L691.3 177.0 L693.1 175.4 L694.9 173.7 L696.7 172.1 L698.6 170.5 L700.4 168.8 L702.3 167.2 L704.1 165.6 L706.0 163.9 L708.0 162.3 L709.9 160.7 L711.8 159.1 L713.8 157.4 L715.7 155.8 L717.7 154.2 L719.7 152.5 L721.7 150.9 L723.8 149.3 L725.8 147.6 L727.8 146.0 L729.9 144.4 L732.0 142.7 L734.1 141.1 L736.2 139.5 L738.3 137.9 L740.4 136.2 L742.6 134.6 L744.7 133.0 L746.9 131.3 L749.1 129.7 L751.3 128.1 L753.5 126.4 L755.7 124.8 L757.9 123.2 L760.1 121.6 L762.4 119.9 L764.6 118.3 L766.9 116.7 L769.2 115.0 L771.5 113.4 L773.8 111.8 L776.1 110.1 L778.4 108.5 L780.7 106.9 L783.0 105.3 L785.4 103.6 L787.7 102.0 L790.1 100.4 L792.5 98.7 L794.9 97.1 L797.2 95.5 L799.6 93.8 L802.0 92.2 L804.4 90.6 L806.9 89.0 L809.3 87.3 L811.7 85.7 L814.2 84.1 L816.6 82.4 L819.1 80.8 L821.5 79.2 L824.0 77.5 L826.4 75.9 L828.9 74.3 L831.4 72.6 L833.9 71.0 L836.4 69.4 L838.9 67.8 L841.4 66.1 L843.9 64.5 L846.4 62.9 L848.9 61.2 L851.4 59.6 L854.0 58.0 L856.5 56.3 L859.0 54.7 L861.6 53.1 L864.1 51.5 L866.6 49.8 L869.2 48.2 L871.7 46.6 L874.3 44.9 L876.8 43.3 L879.4 41.7 L881.9 40.0 L884.5 38.4 L887.0 36.8 L889.6 35.2 L892.2 33.5 L894.7 31.9 L897.3 30.3 L899.8 28.6 L902.4 27.0"/><path d="M902.4 613.9 L899.4 612.3 L896.4 610.6 L893.4 609.0 L890.5 607.4 L887.5 605.7 L884.5 604.1 L881.5 602.5 L878.5 600.9 L875.5 599.2 L872.6 597.6 L869.6 596.0 L866.6 594.3 L863.6 592.7 L860.7 591.1 L857.7 589.4 L854.8 587.8 L851.8 586.2 L848.8 584.6 L845.9 582.9 L843.0 581.3 L840.0 579.7 L837.1 578.0 L834.1 576.4 L831.2 574.8 L828.3 573.1 L825.4 571.5 L822.5 569.9 L819.6 568.3 L816.7 566.6 L813.8 565.0 L810.9 563.4 L808.0 561.7 L805.2 560.1 L802.3 558.5 L799.5 556.8 L796.6 555.2 L793.8 553.6 L790.9 551.9 L788.1 550.3 L785.3 548.7 L782.5 547.1 L779.7 545.4 L776.9 543.8 L774.2 542.2 L771.4 540.5 L768.6 538.9 L765.9 537.3 L763.2 535.6 L760.4 534.0 L757.7 532.4 L755.0 530.8 L752.3 529.1 L749.6 527.5 L747.0 525.9 L744.3 524.2 L741.7 522.6 L739.0 521.0 L736.4 519.3 L733.8 517.7 L731.2 516.1 L728.6 514.5 L726.1 512.8 L723.5 511.2 L721.0 509.6 L718.5 507.9 L715.9 506.3 L713.4 504.7 L711.0 503.0 L708.5 501.4 L706.0 499.8 L703.6 498.2 L701.2 496.5 L698.8 494.9 L696.4 493.3 L694.0 491.6 L691.6 490.0 L689.3 488.4 L686.9 486.7 L684.6 485.1 L682.3 483.5 L680.1 481.8 L677.8 480.2 L675.5 478.6 L673.3 477.0 L671.1 475.3 L668.9 473.7 L666.7 472.1 L664.6 470.4 L662.4 468.8 L660.3 467.2 L658.2 465.5 L656.1 463.9 L654.1 462.3 L652.0 460.7 L650.0 459.0 L648.0 457.4 L646.0 455.8 L644.0 454.1 L642.1 452.5 L640.1 450.9 L638.2 449.2 L636.3 447.6 L634.5 446.0 L632.6 444.4 L630.8 442.7 L629.0 441.1 L627.2 439.5 L625.4 437.8 L623.7 436.2 L622.0 434.6 L620.3 432.9 L618.6 431.3 L616.9 429.7 L615.3 428.0 L613.7 426.4 L612.1 424.8 L610.5 423.2 L608.9 421.5 L607.4 419.9 L605.9 418.3 L604.4 416.6 L603.0 415.0 L601.5 413.4 L600.1 411.7 L598.7 410.1 L597.4 408.5 L596.0 406.9 L594.7 405.2 L593.4 403.6 L592.1 402.0 L590.9 400.3 L589.6 398.7 L588.4 397.1 L587.3 395.4 L586.1 393.8 L585.0 392.2 L583.9 390.6 L582.8 388.9 L581.7 387.3 L580.7 385.7 L579.7 384.0 L578.7 382.4 L577.7 380.8 L576.8 379.1 L575.9 377.5 L575.0 375.9 L574.1 374.2 L573.3 372.6 L572.5 371.0 L571.7 369.4 L570.9 367.7 L570.2 366.1 L569.5 364.5 L568.8 362.8 L568.2 361.2 L567.5 359.6 L566.9 357.9 L566.3 356.3 L565.8 354.7 L565.2 353.1 L564.7 351.4 L564.3 349.8 L563.8 348.2 L563.4 346.5 L563.0 344.9 L562.6 343.3 L562.2 341.6 L561.9 340.0 L561.6 338.4 L561.3 336.8 L561.1 335.1 L560.9 333.5 L560.7 331.9 L560.5 330.2 L560.4 328.6 L560.3 327.0 L560.2 325.3 L560.1 323.7 L560.1 322.1 L560.0 320.4 L560.1 318.8 L560.1 317.2 L560.2 315.6 L560.3 313.9 L560.4 312.3 L560.5 310.7 L560.7 309.0 L560.9 307.4 L561.1 305.8 L561.3 304.1 L561.6 302.5 L561.9 300.9 L562.2 299.3 L562.6 297.6 L563.0 296.0 L563.4 294.4 L563.8 292.7 L564.3 291.1 L564.7 289.5 L565.2 287.8 L565.8 286.2 L566.3 284.6 L566.9 283.0 L567.5 281.3 L568.2 279.7 L568.8 278.1 L569.5 276.4 L570.2 274.8 L570.9 273.2 L571.7 271.5 L572.5 269.9 L573.3 268.3 L574.1 266.7 L575.0 265.0 L575.9 263.4 L576.8 261.8 L577.7 260.1 L578.7 258.5 L579.7 256.9 L580.7 255.2 L581.7 253.6 L582.8 252.0 L583.9 250.3 L585.0 248.7 L586.1 247.1 L587.3 245.5 L588.4 243.8 L589.6 242.2 L590.9 240.6 L592.1 238.9 L593.4 237.3 L594.7 235.7 L596.0 234.0 L597.4 232.4 L598.7 230.8 L600.1 229.2 L601.5 227.5 L603.0 225.9 L604.4 224.3 L605.9 222.6 L607.4 221.0 L608.9 219.4 L610.5 217.7 L612.1 216.1 L613.7 214.5 L615.3 212.9 L616.9 211.2 L618.6 209.6 L620.3 208.0 L622.0 206.3 L623.7 204.7 L625.4 203.1 L627.2 201.4 L629.0 199.8 L630.8 198.2 L632.6 196.5 L634.5 194.9 L636.3 193.3 L638.2 191.7 L640.1 190.0 L642.1 188.4 L644.0 186.8 L646.0 185.1 L648.0 183.5 L650.0 181.9 L652.0 180.2 L654.1 178.6 L656.1 177.0 L658.2 175.4 L660.3 173.7 L662.4 172.1 L664.6 170.5 L666.7 168.8 L668.9 167.2 L671.1 165.6 L673.3 163.9 L675.5 162.3 L677.8 160.7 L680.1 159.1 L682.3 157.4 L684.6 155.8 L686.9 154.2 L689.3 152.5 L691.6 150.9 L694.0 149.3 L696.4 147.6 L698.8 146.0 L701.2 144.4 L703.6 142.7 L706.0 141.1 L708.5 139.5 L711.0 137.9 L713.4 136.2 L715.9 134.6 L718.5 133.0 L721.0 131.3 L723.5 129.7 L726.1 128.1 L728.6 126.4 L731.2 124.8 L733.8 123.2 L736.4 121.6 L739.0 119.9 L741.7 118.3 L744.3 116.7 L747.0 115.0 L749.6 113.4 L752.3 111.8 L755.0 110.1 L757.7 108.5 L760.4 106.9 L763.2 105.3 L765.9 103.6 L768.6 102.0 L771.4 100.4 L774.2 98.7 L776.9 97.1 L779.7 95.5 L782.5 93.8 L785.3 92.2 L788.1 90.6 L790.9 89.0 L793.8 87.3 L796.6 85.7 L799.5 84.1 L802.3 82.4 L805.2 80.8 L808.0 79.2 L810.9 77.5 L813.8 75.9 L816.7 74.3 L819.6 72.6 L822.5 71.0 L825.4 69.4 L828.3 67.8 L831.2 66.1 L834.1 64.5 L837.1 62.9 L840.0 61.2 L843.0 59.6 L845.9 58.0 L848.8 56.3 L851.8 54.7 L854.8 53.1 L857.7 51.5 L860.7 49.8 L863.6 48.2 L866.6 46.6 L869.6 44.9 L872.6 43.3 L875.5 41.7 L878.5 40.0 L881.5 38.4 L884.5 36.8 L887.5 35.2 L890.5 33.5 L893.4 31.9 L896.4 30.3 L899.4 28.6 L902.4 27.0"/><path d="M902.4 613.9 L899.0 612.3 L895.6 610.6 L892.2 609.0 L888.7 607.4 L885.3 605.7 L881.9 604.1 L878.5 602.5 L875.1 600.9 L871.7 599.2 L868.3 597.6 L864.9 596.0 L861.5 594.3 L858.1 592.7 L854.7 591.1 L851.3 589.4 L847.9 587.8 L844.6 586.2 L841.2 584.6 L837.8 582.9 L834.5 581.3 L831.1 579.7 L827.7 578.0 L824.4 576.4 L821.1 574.8 L817.7 573.1 L814.4 571.5 L811.1 569.9 L807.7 568.3 L804.4 566.6 L801.1 565.0 L797.8 563.4 L794.6 561.7 L791.3 560.1 L788.0 558.5 L784.7 556.8 L781.5 555.2 L778.2 553.6 L775.0 551.9 L771.8 550.3 L768.6 548.7 L765.4 547.1 L762.2 545.4 L759.0 543.8 L755.8 542.2 L752.7 540.5 L749.5 538.9 L746.4 537.3 L743.3 535.6 L740.1 534.0 L737.0 532.4 L734.0 530.8 L730.9 529.1 L727.8 527.5 L724.8 525.9 L721.7 524.2 L718.7 522.6 L715.7 521.0 L712.7 519.3 L709.7 517.7 L706.8 516.1 L703.8 514.5 L700.9 512.8 L698.0 511.2 L695.1 509.6 L692.2 507.9 L689.3 506.3 L686.4 504.7 L683.6 503.0 L680.8 501.4 L678.0 499.8 L675.2 498.2 L672.4 496.5 L669.7 494.9 L666.9 493.3 L664.2 491.6 L661.5 490.0 L658.8 488.4 L656.2 486.7 L653.5 485.1 L650.9 483.5 L648.3 481.8 L645.7 480.2 L643.1 478.6 L640.6 477.0 L638.1 475.3 L635.6 473.7 L633.1 472.1 L630.6 470.4 L628.2 468.8 L625.7 467.2 L623.3 465.5 L620.9 463.9 L618.6 462.3 L616.2 460.7 L613.9 459.0 L611.6 457.4 L609.4 455.8 L607.1 454.1 L604.9 452.5 L602.7 450.9 L600.5 449.2 L598.3 447.6 L596.2 446.0 L594.1 444.4 L592.0 442.7 L589.9 441.1 L587.9 439.5 L585.9 437.8 L583.9 436.2 L581.9 434.6 L579.9 432.9 L578.0 431.3 L576.1 429.7 L574.3 428.0 L572.4 426.4 L570.6 424.8 L568.8 423.2 L567.0 421.5 L565.3 419.9 L563.6 418.3 L561.9 416.6 L560.2 415.0 L558.5 413.4 L556.9 411.7 L555.3 410.1 L553.8 408.5 L552.2 406.9 L550.7 405.2 L549.2 403.6 L547.8 402.0 L546.4 400.3 L545.0 398.7 L543.6 397.1 L542.2 395.4 L540.9 393.8 L539.6 392.2 L538.4 390.6 L537.1 388.9 L535.9 387.3 L534.7 385.7 L533.6 384.0 L532.5 382.4 L531.4 380.8 L530.3 379.1 L529.2 377.5 L528.2 375.9 L527.2 374.2 L526.3 372.6 L525.4 371.0 L524.5 369.4 L523.6 367.7 L522.8 366.1 L521.9 364.5 L521.2 362.8 L520.4 361.2 L519.7 359.6 L519.0 357.9 L518.3 356.3 L517.7 354.7 L517.1 353.1 L516.5 351.4 L516.0 349.8 L515.4 348.2 L514.9 346.5 L514.5 344.9 L514.0 343.3 L513.6 341.6 L513.3 340.0 L512.9 338.4 L512.6 336.8 L512.3 335.1 L512.1 333.5 L511.9 331.9 L511.7 330.2 L511.5 328.6 L511.4 327.0 L511.3 325.3 L511.2 323.7 L511.1 322.1 L511.1 320.4 L511.1 318.8 L511.2 317.2 L511.3 315.6 L511.4 313.9 L511.5 312.3 L511.7 310.7 L511.9 309.0 L512.1 307.4 L512.3 305.8 L512.6 304.1 L512.9 302.5 L513.3 300.9 L513.6 299.3 L514.0 297.6 L514.5 296.0 L514.9 294.4 L515.4 292.7 L516.0 291.1 L516.5 289.5 L517.1 287.8 L517.7 286.2 L518.3 284.6 L519.0 283.0 L519.7 281.3 L520.4 279.7 L521.2 278.1 L521.9 276.4 L522.8 274.8 L523.6 273.2 L524.5 271.5 L525.4 269.9 L526.3 268.3 L527.2 266.7 L528.2 265.0 L529.2 263.4 L530.3 261.8 L531.4 260.1 L532.5 258.5 L533.6 256.9 L534.7 255.2 L535.9 253.6 L537.1 252.0 L538.4 250.3 L539.6 248.7 L540.9 247.1 L542.2 245.5 L543.6 243.8 L545.0 242.2 L546.4 240.6 L547.8 238.9 L549.2 237.3 L550.7 235.7 L552.2 234.0 L553.8 232.4 L555.3 230.8 L556.9 229.2 L558.5 227.5 L560.2 225.9 L561.9 224.3 L563.6 222.6 L565.3 221.0 L567.0 219.4 L568.8 217.7 L570.6 216.1 L572.4 214.5 L574.3 212.9 L576.1 211.2 L578.0 209.6 L579.9 208.0 L581.9 206.3 L583.9 204.7 L585.9 203.1 L587.9 201.4 L589.9 199.8 L592.0 198.2 L594.1 196.5 L596.2 194.9 L598.3 193.3 L600.5 191.7 L602.7 190.0 L604.9 188.4 L607.1 186.8 L609.4 185.1 L611.6 183.5 L613.9 181.9 L616.2 180.2 L618.6 178.6 L620.9 177.0 L623.3 175.4 L625.7 173.7 L628.2 172.1 L630.6 170.5 L633.1 168.8 L635.6 167.2 L638.1 165.6 L640.6 163.9 L643.1 162.3 L645.7 160.7 L648.3 159.1 L650.9 157.4 L653.5 155.8 L656.2 154.2 L658.8 152.5 L661.5 150.9 L664.2 149.3 L666.9 147.6 L669.7 146.0 L672.4 144.4 L675.2 142.7 L678.0 141.1 L680.8 139.5 L683.6 137.9 L686.4 136.2 L689.3 134.6 L692.2 133.0 L695.1 131.3 L698.0 129.7 L700.9 128.1 L703.8 126.4 L706.8 124.8 L709.7 123.2 L712.7 121.6 L715.7 119.9 L718.7 118.3 L721.7 116.7 L724.8 115.0 L727.8 113.4 L730.9 111.8 L734.0 110.1 L737.0 108.5 L740.1 106.9 L743.3 105.3 L746.4 103.6 L749.5 102.0 L752.7 100.4 L755.8 98.7 L759.0 97.1 L762.2 95.5 L765.4 93.8 L768.6 92.2 L771.8 90.6 L775.0 89.0 L778.2 87.3 L781.5 85.7 L784.7 84.1 L788.0 82.4 L791.3 80.8 L794.6 79.2 L797.8 77.5 L801.1 75.9 L804.4 74.3 L807.7 72.6 L811.1 71.0 L814.4 69.4 L817.7 67.8 L821.1 66.1 L824.4 64.5 L827.7 62.9 L831.1 61.2 L834.5 59.6 L837.8 58.0 L841.2 56.3 L844.6 54.7 L847.9 53.1 L851.3 51.5 L854.7 49.8 L858.1 48.2 L861.5 46.6 L864.9 44.9 L868.3 43.3 L871.7 41.7 L875.1 40.0 L878.5 38.4 L881.9 36.8 L885.3 35.2 L888.7 33.5 L892.2 31.9 L895.6 30.3 L899.0 28.6 L902.4 27.0"/><path d="M902.4 613.9 L898.6 612.3 L894.7 610.6 L890.9 609.0 L887.0 607.4 L883.2 605.7 L879.4 604.1 L875.5 602.5 L871.7 600.9 L867.9 599.2 L864.0 597.6 L860.2 596.0 L856.4 594.3 L852.6 592.7 L848.8 591.1 L844.9 589.4 L841.1 587.8 L837.3 586.2 L833.5 584.6 L829.8 582.9 L826.0 581.3 L822.2 579.7 L818.4 578.0 L814.6 576.4 L810.9 574.8 L807.1 573.1 L803.4 571.5 L799.6 569.9 L795.9 568.3 L792.2 566.6 L788.5 565.0 L784.8 563.4 L781.1 561.7 L777.4 560.1 L773.7 558.5 L770.0 556.8 L766.4 555.2 L762.7 553.6 L759.1 551.9 L755.5 550.3 L751.9 548.7 L748.2 547.1 L744.7 545.4 L741.1 543.8 L737.5 542.2 L734.0 540.5 L730.4 538.9 L726.9 537.3 L723.4 535.6 L719.9 534.0 L716.4 532.4 L712.9 530.8 L709.4 529.1 L706.0 527.5 L702.6 525.9 L699.1 524.2 L695.8 522.6 L692.4 521.0 L689.0 519.3 L685.6 517.7 L682.3 516.1 L679.0 514.5 L675.7 512.8 L672.4 511.2 L669.1 509.6 L665.9 507.9 L662.7 506.3 L659.5 504.7 L656.3 503.0 L653.1 501.4 L649.9 499.8 L646.8 498.2 L643.7 496.5 L640.6 494.9 L637.5 493.3 L634.4 491.6 L631.4 490.0 L628.4 488.4 L625.4 486.7 L622.4 485.1 L619.5 483.5 L616.5 481.8 L613.6 480.2 L610.7 478.6 L607.9 477.0 L605.0 475.3 L602.2 473.7 L599.4 472.1 L596.6 470.4 L593.9 468.8 L591.1 467.2 L588.4 465.5 L585.8 463.9 L583.1 462.3 L580.5 460.7 L577.9 459.0 L575.3 457.4 L572.7 455.8 L570.2 454.1 L567.7 452.5 L565.2 450.9 L562.8 449.2 L560.3 447.6 L557.9 446.0 L555.5 444.4 L553.2 442.7 L550.9 441.1 L548.6 439.5 L546.3 437.8 L544.0 436.2 L541.8 434.6 L539.6 432.9 L537.5 431.3 L535.3 429.7 L533.2 428.0 L531.2 426.4 L529.1 424.8 L527.1 423.2 L525.1 421.5 L523.1 419.9 L521.2 418.3 L519.3 416.6 L517.4 415.0 L515.6 413.4 L513.7 411.7 L512.0 410.1 L510.2 408.5 L508.5 406.9 L506.8 405.2 L505.1 403.6 L503.5 402.0 L501.9 400.3 L500.3 398.7 L498.7 397.1 L497.2 395.4 L495.7 393.8 L494.3 392.2 L492.9 390.6 L491.5 388.9 L490.1 387.3 L488.8 385.7 L487.5 384.0 L486.2 382.4 L485.0 380.8 L483.8 379.1 L482.6 377.5 L481.5 375.9 L480.4 374.2 L479.3 372.6 L478.2 371.0 L477.2 369.4 L476.2 367.7 L475.3 366.1 L474.4 364.5 L473.5 362.8 L472.7 361.2 L471.8 359.6 L471.1 357.9 L470.3 356.3 L469.6 354.7 L468.9 353.1 L468.3 351.4 L467.6 349.8 L467.1 348.2 L466.5 346.5 L466.0 344.9 L465.5 343.3 L465.1 341.6 L464.6 340.0 L464.3 338.4 L463.9 336.8 L463.6 335.1 L463.3 333.5 L463.0 331.9 L462.8 330.2 L462.6 328.6 L462.5 327.0 L462.4 325.3 L462.3 323.7 L462.2 322.1 L462.2 320.4 L462.2 318.8 L462.3 317.2 L462.4 315.6 L462.5 313.9 L462.6 312.3 L462.8 310.7 L463.0 309.0 L463.3 307.4 L463.6 305.8 L463.9 304.1 L464.3 302.5 L464.6 300.9 L465.1 299.3 L465.5 297.6 L466.0 296.0 L466.5 294.4 L467.1 292.7 L467.6 291.1 L468.3 289.5 L468.9 287.8 L469.6 286.2 L470.3 284.6 L471.1 283.0 L471.8 281.3 L472.7 279.7 L473.5 278.1 L474.4 276.4 L475.3 274.8 L476.2 273.2 L477.2 271.5 L478.2 269.9 L479.3 268.3 L480.4 266.7 L481.5 265.0 L482.6 263.4 L483.8 261.8 L485.0 260.1 L486.2 258.5 L487.5 256.9 L488.8 255.2 L490.1 253.6 L491.5 252.0 L492.9 250.3 L494.3 248.7 L495.7 247.1 L497.2 245.5 L498.7 243.8 L500.3 242.2 L501.9 240.6 L503.5 238.9 L505.1 237.3 L506.8 235.7 L508.5 234.0 L510.2 232.4 L512.0 230.8 L513.7 229.2 L515.6 227.5 L517.4 225.9 L519.3 224.3 L521.2 222.6 L523.1 221.0 L525.1 219.4 L527.1 217.7 L529.1 216.1 L531.2 214.5 L533.2 212.9 L535.3 211.2 L537.5 209.6 L539.6 208.0 L541.8 206.3 L544.0 204.7 L546.3 203.1 L548.6 201.4 L550.9 199.8 L553.2 198.2 L555.5 196.5 L557.9 194.9 L560.3 193.3 L562.8 191.7 L565.2 190.0 L567.7 188.4 L570.2 186.8 L572.7 185.1 L575.3 183.5 L577.9 181.9 L580.5 180.2 L583.1 178.6 L585.8 177.0 L588.4 175.4 L591.1 173.7 L593.9 172.1 L596.6 170.5 L599.4 168.8 L602.2 167.2 L605.0 165.6 L607.9 163.9 L610.7 162.3 L613.6 160.7 L616.5 159.1 L619.5 157.4 L622.4 155.8 L625.4 154.2 L628.4 152.5 L631.4 150.9 L634.4 149.3 L637.5 147.6 L640.6 146.0 L643.7 144.4 L646.8 142.7 L649.9 141.1 L653.1 139.5 L656.3 137.9 L659.5 136.2 L662.7 134.6 L665.9 133.0 L669.1 131.3 L672.4 129.7 L675.7 128.1 L679.0 126.4 L682.3 124.8 L685.6 123.2 L689.0 121.6 L692.4 119.9 L695.8 118.3 L699.1 116.7 L702.6 115.0 L706.0 113.4 L709.4 111.8 L712.9 110.1 L716.4 108.5 L719.9 106.9 L723.4 105.3 L726.9 103.6 L730.4 102.0 L734.0 100.4 L737.5 98.7 L741.1 97.1 L744.7 95.5 L748.2 93.8 L751.9 92.2 L755.5 90.6 L759.1 89.0 L762.7 87.3 L766.4 85.7 L770.0 84.1 L773.7 82.4 L777.4 80.8 L781.1 79.2 L784.8 77.5 L788.5 75.9 L792.2 74.3 L795.9 72.6 L799.6 71.0 L803.4 69.4 L807.1 67.8 L810.9 66.1 L814.6 64.5 L818.4 62.9 L822.2 61.2 L826.0 59.6 L829.8 58.0 L833.5 56.3 L837.3 54.7 L841.1 53.1 L844.9 51.5 L848.8 49.8 L852.6 48.2 L856.4 46.6 L860.2 44.9 L864.0 43.3 L867.9 41.7 L871.7 40.0 L875.5 38.4 L879.4 36.8 L883.2 35.2 L887.0 33.5 L890.9 31.9 L894.7 30.3 L898.6 28.6 L902.4 27.0"/><path d="M902.4 613.9 L898.1 612.3 L893.9 610.6 L889.6 609.0 L885.3 607.4 L881.1 605.7 L876.8 604.1 L872.5 602.5 L868.3 600.9 L864.0 599.2 L859.8 597.6 L855.5 596.0 L851.3 594.3 L847.0 592.7 L842.8 591.1 L838.6 589.4 L834.3 587.8 L830.1 586.2 L825.9 584.6 L821.7 582.9 L817.5 581.3 L813.3 579.7 L809.1 578.0 L804.9 576.4 L800.7 574.8 L796.5 573.1 L792.4 571.5 L788.2 569.9 L784.1 568.3 L779.9 566.6 L775.8 565.0 L771.7 563.4 L767.6 561.7 L763.5 560.1 L759.4 558.5 L755.3 556.8 L751.3 555.2 L747.2 553.6 L743.2 551.9 L739.1 550.3 L735.1 548.7 L731.1 547.1 L727.1 545.4 L723.2 543.8 L719.2 542.2 L715.2 540.5 L711.3 538.9 L707.4 537.3 L703.5 535.6 L699.6 534.0 L695.7 532.4 L691.8 530.8 L688.0 529.1 L684.2 527.5 L680.4 525.9 L676.6 524.2 L672.8 522.6 L669.0 521.0 L665.3 519.3 L661.6 517.7 L657.9 516.1 L654.2 514.5 L650.5 512.8 L646.9 511.2 L643.2 509.6 L639.6 507.9 L636.0 506.3 L632.5 504.7 L628.9 503.0 L625.4 501.4 L621.9 499.8 L618.4 498.2 L614.9 496.5 L611.5 494.9 L608.1 493.3 L604.7 491.6 L601.3 490.0 L597.9 488.4 L594.6 486.7 L591.3 485.1 L588.0 483.5 L584.8 481.8 L581.5 480.2 L578.3 478.6 L575.1 477.0 L572.0 475.3 L568.8 473.7 L565.7 472.1 L562.7 470.4 L559.6 468.8 L556.6 467.2 L553.6 465.5 L550.6 463.9 L547.6 462.3 L544.7 460.7 L541.8 459.0 L538.9 457.4 L536.1 455.8 L533.3 454.1 L530.5 452.5 L527.7 450.9 L525.0 449.2 L522.3 447.6 L519.6 446.0 L517.0 444.4 L514.4 442.7 L511.8 441.1 L509.2 439.5 L506.7 437.8 L504.2 436.2 L501.8 434.6 L499.3 432.9 L496.9 431.3 L494.6 429.7 L492.2 428.0 L489.9 426.4 L487.6 424.8 L485.4 423.2 L483.2 421.5 L481.0 419.9 L478.8 418.3 L476.7 416.6 L474.6 415.0 L472.6 413.4 L470.6 411.7 L468.6 410.1 L466.6 408.5 L464.7 406.9 L462.8 405.2 L461.0 403.6 L459.1 402.0 L457.4 400.3 L455.6 398.7 L453.9 397.1 L452.2 395.4 L450.5 393.8 L448.9 392.2 L447.3 390.6 L445.8 388.9 L444.3 387.3 L442.8 385.7 L441.4 384.0 L440.0 382.4 L438.6 380.8 L437.3 379.1 L436.0 377.5 L434.7 375.9 L433.5 374.2 L432.3 372.6 L431.1 371.0 L430.0 369.4 L428.9 367.7 L427.8 366.1 L426.8 364.5 L425.9 362.8 L424.9 361.2 L424.0 359.6 L423.1 357.9 L422.3 356.3 L421.5 354.7 L420.7 353.1 L420.0 351.4 L419.3 349.8 L418.7 348.2 L418.1 346.5 L417.5 344.9 L417.0 343.3 L416.5 341.6 L416.0 340.0 L415.6 338.4 L415.2 336.8 L414.8 335.1 L414.5 333.5 L414.2 331.9 L414.0 330.2 L413.8 328.6 L413.6 327.0 L413.5 325.3 L413.4 323.7 L413.3 322.1 L413.3 320.4 L413.3 318.8 L413.4 317.2 L413.5 315.6 L413.6 313.9 L413.8 312.3 L414.0 310.7 L414.2 309.0 L414.5 307.4 L414.8 305.8 L415.2 304.1 L415.6 302.5 L416.0 300.9 L416.5 299.3 L417.0 297.6 L417.5 296.0 L418.1 294.4 L418.7 292.7 L419.3 291.1 L420.0 289.5 L420.7 287.8 L421.5 286.2 L422.3 284.6 L423.1 283.0 L424.0 281.3 L424.9 279.7 L425.9 278.1 L426.8 276.4 L427.8 274.8 L428.9 273.2 L430.0 271.5 L431.1 269.9 L432.3 268.3 L433.5 266.7 L434.7 265.0 L436.0 263.4 L437.3 261.8 L438.6 260.1 L440.0 258.5 L441.4 256.9 L442.8 255.2 L444.3 253.6 L445.8 252.0 L447.3 250.3 L448.9 248.7 L450.5 247.1 L452.2 245.5 L453.9 243.8 L455.6 242.2 L457.4 240.6 L459.1 238.9 L461.0 237.3 L462.8 235.7 L464.7 234.0 L466.6 232.4 L468.6 230.8 L470.6 229.2 L472.6 227.5 L474.6 225.9 L476.7 224.3 L478.8 222.6 L481.0 221.0 L483.2 219.4 L485.4 217.7 L487.6 216.1 L489.9 214.5 L492.2 212.9 L494.6 211.2 L496.9 209.6 L499.3 208.0 L501.8 206.3 L504.2 204.7 L506.7 203.1 L509.2 201.4 L511.8 199.8 L514.4 198.2 L517.0 196.5 L519.6 194.9 L522.3 193.3 L525.0 191.7 L527.7 190.0 L530.5 188.4 L533.3 186.8 L536.1 185.1 L538.9 183.5 L541.8 181.9 L544.7 180.2 L547.6 178.6 L550.6 177.0 L553.6 175.4 L556.6 173.7 L559.6 172.1 L562.7 170.5 L565.7 168.8 L568.8 167.2 L572.0 165.6 L575.1 163.9 L578.3 162.3 L581.5 160.7 L584.8 159.1 L588.0 157.4 L591.3 155.8 L594.6 154.2 L597.9 152.5 L601.3 150.9 L604.7 149.3 L608.1 147.6 L611.5 146.0 L614.9 144.4 L618.4 142.7 L621.9 141.1 L625.4 139.5 L628.9 137.9 L632.5 136.2 L636.0 134.6 L639.6 133.0 L643.2 131.3 L646.9 129.7 L650.5 128.1 L654.2 126.4 L657.9 124.8 L661.6 123.2 L665.3 121.6 L669.0 119.9 L672.8 118.3 L676.6 116.7 L680.4 115.0 L684.2 113.4 L688.0 111.8 L691.8 110.1 L695.7 108.5 L699.6 106.9 L703.5 105.3 L707.4 103.6 L711.3 102.0 L715.2 100.4 L719.2 98.7 L723.2 97.1 L727.1 95.5 L731.1 93.8 L735.1 92.2 L739.1 90.6 L743.2 89.0 L747.2 87.3 L751.3 85.7 L755.3 84.1 L759.4 82.4 L763.5 80.8 L767.6 79.2 L771.7 77.5 L775.8 75.9 L779.9 74.3 L784.1 72.6 L788.2 71.0 L792.4 69.4 L796.5 67.8 L800.7 66.1 L804.9 64.5 L809.1 62.9 L813.3 61.2 L817.5 59.6 L821.7 58.0 L825.9 56.3 L830.1 54.7 L834.3 53.1 L838.6 51.5 L842.8 49.8 L847.0 48.2 L851.3 46.6 L855.5 44.9 L859.8 43.3 L864.0 41.7 L868.3 40.0 L872.5 38.4 L876.8 36.8 L881.1 35.2 L885.3 33.5 L889.6 31.9 L893.9 30.3 L898.1 28.6 L902.4 27.0"/><path d="M902.4 613.9 L897.7 612.3 L893.0 610.6 L888.3 609.0 L883.6 607.4 L878.9 605.7 L874.2 604.1 L869.6 602.5 L864.9 600.9 L860.2 599.2 L855.5 597.6 L850.8 596.0 L846.2 594.3 L841.5 592.7 L836.8 591.1 L832.2 589.4 L827.5 587.8 L822.9 586.2 L818.2 584.6 L813.6 582.9 L809.0 581.3 L804.4 579.7 L799.7 578.0 L795.1 576.4 L790.5 574.8 L786.0 573.1 L781.4 571.5 L776.8 569.9 L772.2 568.3 L767.7 566.6 L763.2 565.0 L758.6 563.4 L754.1 561.7 L749.6 560.1 L745.1 558.5 L740.6 556.8 L736.2 555.2 L731.7 553.6 L727.2 551.9 L722.8 550.3 L718.4 548.7 L714.0 547.1 L709.6 545.4 L705.2 543.8 L700.9 542.2 L696.5 540.5 L692.2 538.9 L687.9 537.3 L683.6 535.6 L679.3 534.0 L675.0 532.4 L670.8 530.8 L666.6 529.1 L662.3 527.5 L658.2 525.9 L654.0 524.2 L649.8 522.6 L645.7 521.0 L641.6 519.3 L637.5 517.7 L633.4 516.1 L629.3 514.5 L625.3 512.8 L621.3 511.2 L617.3 509.6 L613.3 507.9 L609.4 506.3 L605.5 504.7 L601.6 503.0 L597.7 501.4 L593.8 499.8 L590.0 498.2 L586.2 496.5 L582.4 494.9 L578.6 493.3 L574.9 491.6 L571.2 490.0 L567.5 488.4 L563.8 486.7 L560.2 485.1 L556.6 483.5 L553.0 481.8 L549.4 480.2 L545.9 478.6 L542.4 477.0 L538.9 475.3 L535.5 473.7 L532.1 472.1 L528.7 470.4 L525.3 468.8 L522.0 467.2 L518.7 465.5 L515.4 463.9 L512.2 462.3 L508.9 460.7 L505.8 459.0 L502.6 457.4 L499.5 455.8 L496.4 454.1 L493.3 452.5 L490.3 450.9 L487.3 449.2 L484.3 447.6 L481.4 446.0 L478.5 444.4 L475.6 442.7 L472.7 441.1 L469.9 439.5 L467.2 437.8 L464.4 436.2 L461.7 434.6 L459.0 432.9 L456.4 431.3 L453.8 429.7 L451.2 428.0 L448.7 426.4 L446.2 424.8 L443.7 423.2 L441.3 421.5 L438.9 419.9 L436.5 418.3 L434.2 416.6 L431.9 415.0 L429.6 413.4 L427.4 411.7 L425.2 410.1 L423.0 408.5 L420.9 406.9 L418.9 405.2 L416.8 403.6 L414.8 402.0 L412.8 400.3 L410.9 398.7 L409.0 397.1 L407.2 395.4 L405.4 393.8 L403.6 392.2 L401.8 390.6 L400.1 388.9 L398.5 387.3 L396.9 385.7 L395.3 384.0 L393.7 382.4 L392.2 380.8 L390.7 379.1 L389.3 377.5 L387.9 375.9 L386.6 374.2 L385.2 372.6 L384.0 371.0 L382.7 369.4 L381.5 367.7 L380.4 366.1 L379.3 364.5 L378.2 362.8 L377.2 361.2 L376.2 359.6 L375.2 357.9 L374.3 356.3 L373.4 354.7 L372.6 353.1 L371.8 351.4 L371.0 349.8 L370.3 348.2 L369.6 346.5 L369.0 344.9 L368.4 343.3 L367.9 341.6 L367.4 340.0 L366.9 338.4 L366.5 336.8 L366.1 335.1 L365.7 333.5 L365.4 331.9 L365.1 330.2 L364.9 328.6 L364.7 327.0 L364.6 325.3 L364.5 323.7 L364.4 322.1 L364.4 320.4 L364.4 318.8 L364.5 317.2 L364.6 315.6 L364.7 313.9 L364.9 312.3 L365.1 310.7 L365.4 309.0 L365.7 307.4 L366.1 305.8 L366.5 304.1 L366.9 302.5 L367.4 300.9 L367.9 299.3 L368.4 297.6 L369.0 296.0 L369.6 294.4 L370.3 292.7 L371.0 291.1 L371.8 289.5 L372.6 287.8 L373.4 286.2 L374.3 284.6 L375.2 283.0 L376.2 281.3 L377.2 279.7 L378.2 278.1 L379.3 276.4 L380.4 274.8 L381.5 273.2 L382.7 271.5 L384.0 269.9 L385.2 268.3 L386.6 266.7 L387.9 265.0 L389.3 263.4 L390.7 261.8 L392.2 260.1 L393.7 258.5 L395.3 256.9 L396.9 255.2 L398.5 253.6 L400.1 252.0 L401.8 250.3 L403.6 248.7 L405.4 247.1 L407.2 245.5 L409.0 243.8 L410.9 242.2 L412.8 240.6 L414.8 238.9 L416.8 237.3 L418.9 235.7 L420.9 234.0 L423.0 232.4 L425.2 230.8 L427.4 229.2 L429.6 227.5 L431.9 225.9 L434.2 224.3 L436.5 222.6 L438.9 221.0 L441.3 219.4 L443.7 217.7 L446.2 216.1 L448.7 214.5 L451.2 212.9 L453.8 211.2 L456.4 209.6 L459.0 208.0 L461.7 206.3 L464.4 204.7 L467.2 203.1 L469.9 201.4 L472.7 199.8 L475.6 198.2 L478.5 196.5 L481.4 194.9 L484.3 193.3 L487.3 191.7 L490.3 190.0 L493.3 188.4 L496.4 186.8 L499.5 185.1 L502.6 183.5 L505.8 181.9 L508.9 180.2 L512.2 178.6 L515.4 177.0 L518.7 175.4 L522.0 173.7 L525.3 172.1 L528.7 170.5 L532.1 168.8 L535.5 167.2 L538.9 165.6 L542.4 163.9 L545.9 162.3 L549.4 160.7 L553.0 159.1 L556.6 157.4 L560.2 155.8 L563.8 154.2 L567.5 152.5 L571.2 150.9 L574.9 149.3 L578.6 147.6 L582.4 146.0 L586.2 144.4 L590.0 142.7 L593.8 141.1 L597.7 139.5 L601.6 137.9 L605.5 136.2 L609.4 134.6 L613.3 133.0 L617.3 131.3 L621.3 129.7 L625.3 128.1 L629.3 126.4 L633.4 124.8 L637.5 123.2 L641.6 121.6 L645.7 119.9 L649.8 118.3 L654.0 116.7 L658.2 115.0 L662.3 113.4 L666.6 111.8 L670.8 110.1 L675.0 108.5 L679.3 106.9 L683.6 105.3 L687.9 103.6 L692.2 102.0 L696.5 100.4 L700.9 98.7 L705.2 97.1 L709.6 95.5 L714.0 93.8 L718.4 92.2 L722.8 90.6 L727.2 89.0 L731.7 87.3 L736.2 85.7 L740.6 84.1 L745.1 82.4 L749.6 80.8 L754.1 79.2 L758.6 77.5 L763.2 75.9 L767.7 74.3 L772.2 72.6 L776.8 71.0 L781.4 69.4 L786.0 67.8 L790.5 66.1 L795.1 64.5 L799.7 62.9 L804.4 61.2 L809.0 59.6 L813.6 58.0 L818.2 56.3 L822.9 54.7 L827.5 53.1 L832.2 51.5 L836.8 49.8 L841.5 48.2 L846.2 46.6 L850.8 44.9 L855.5 43.3 L860.2 41.7 L864.9 40.0 L869.6 38.4 L874.2 36.8 L878.9 35.2 L883.6 33.5 L888.3 31.9 L893.0 30.3 L897.7 28.6 L902.4 27.0"/><path d="M902.4 613.9 L897.3 612.3 L892.2 610.6 L887.0 609.0 L881.9 607.4 L876.8 605.7 L871.7 604.1 L866.6 602.5 L861.5 600.9 L856.4 599.2 L851.2 597.6 L846.1 596.0 L841.1 594.3 L836.0 592.7 L830.9 591.1 L825.8 589.4 L820.7 587.8 L815.7 586.2 L810.6 584.6 L805.5 582.9 L800.5 581.3 L795.4 579.7 L790.4 578.0 L785.4 576.4 L780.4 574.8 L775.4 573.1 L770.4 571.5 L765.4 569.9 L760.4 568.3 L755.5 566.6 L750.5 565.0 L745.6 563.4 L740.6 561.7 L735.7 560.1 L730.8 558.5 L725.9 556.8 L721.0 555.2 L716.2 553.6 L711.3 551.9 L706.5 550.3 L701.7 548.7 L696.9 547.1 L692.1 545.4 L687.3 543.8 L682.5 542.2 L677.8 540.5 L673.1 538.9 L668.4 537.3 L663.7 535.6 L659.0 534.0 L654.4 532.4 L649.7 530.8 L645.1 529.1 L640.5 527.5 L636.0 525.9 L631.4 524.2 L626.9 522.6 L622.4 521.0 L617.9 519.3 L613.4 517.7 L608.9 516.1 L604.5 514.5 L600.1 512.8 L595.7 511.2 L591.4 509.6 L587.1 507.9 L582.8 506.3 L578.5 504.7 L574.2 503.0 L570.0 501.4 L565.8 499.8 L561.6 498.2 L557.4 496.5 L553.3 494.9 L549.2 493.3 L545.1 491.6 L541.1 490.0 L537.0 488.4 L533.1 486.7 L529.1 485.1 L525.1 483.5 L521.2 481.8 L517.4 480.2 L513.5 478.6 L509.7 477.0 L505.9 475.3 L502.1 473.7 L498.4 472.1 L494.7 470.4 L491.0 468.8 L487.4 467.2 L483.8 465.5 L480.2 463.9 L476.7 462.3 L473.2 460.7 L469.7 459.0 L466.2 457.4 L462.8 455.8 L459.5 454.1 L456.1 452.5 L452.8 450.9 L449.5 449.2 L446.3 447.6 L443.1 446.0 L439.9 444.4 L436.8 442.7 L433.7 441.1 L430.6 439.5 L427.6 437.8 L424.6 436.2 L421.6 434.6 L418.7 432.9 L415.8 431.3 L413.0 429.7 L410.2 428.0 L407.4 426.4 L404.7 424.8 L402.0 423.2 L399.3 421.5 L396.7 419.9 L394.1 418.3 L391.6 416.6 L389.1 415.0 L386.6 413.4 L384.2 411.7 L381.8 410.1 L379.5 408.5 L377.2 406.9 L374.9 405.2 L372.7 403.6 L370.5 402.0 L368.3 400.3 L366.2 398.7 L364.2 397.1 L362.2 395.4 L360.2 393.8 L358.2 392.2 L356.3 390.6 L354.5 388.9 L352.7 387.3 L350.9 385.7 L349.2 384.0 L347.5 382.4 L345.8 380.8 L344.2 379.1 L342.7 377.5 L341.1 375.9 L339.7 374.2 L338.2 372.6 L336.8 371.0 L335.5 369.4 L334.2 367.7 L332.9 366.1 L331.7 364.5 L330.5 362.8 L329.4 361.2 L328.3 359.6 L327.3 357.9 L326.3 356.3 L325.3 354.7 L324.4 353.1 L323.5 351.4 L322.7 349.8 L321.9 348.2 L321.2 346.5 L320.5 344.9 L319.9 343.3 L319.3 341.6 L318.7 340.0 L318.2 338.4 L317.7 336.8 L317.3 335.1 L316.9 333.5 L316.6 331.9 L316.3 330.2 L316.1 328.6 L315.9 327.0 L315.7 325.3 L315.6 323.7 L315.5 322.1 L315.5 320.4 L315.5 318.8 L315.6 317.2 L315.7 315.6 L315.9 313.9 L316.1 312.3 L316.3 310.7 L316.6 309.0 L316.9 307.4 L317.3 305.8 L317.7 304.1 L318.2 302.5 L318.7 300.9 L319.3 299.3 L319.9 297.6 L320.5 296.0 L321.2 294.4 L321.9 292.7 L322.7 291.1 L323.5 289.5 L324.4 287.8 L325.3 286.2 L326.3 284.6 L327.3 283.0 L328.3 281.3 L329.4 279.7 L330.5 278.1 L331.7 276.4 L332.9 274.8 L334.2 273.2 L335.5 271.5 L336.8 269.9 L338.2 268.3 L339.7 266.7 L341.1 265.0 L342.7 263.4 L344.2 261.8 L345.8 260.1 L347.5 258.5 L349.2 256.9 L350.9 255.2 L352.7 253.6 L354.5 252.0 L356.3 250.3 L358.2 248.7 L360.2 247.1 L362.2 245.5 L364.2 243.8 L366.2 242.2 L368.3 240.6 L370.5 238.9 L372.7 237.3 L374.9 235.7 L377.2 234.0 L379.5 232.4 L381.8 230.8 L384.2 229.2 L386.6 227.5 L389.1 225.9 L391.6 224.3 L394.1 222.6 L396.7 221.0 L399.3 219.4 L402.0 217.7 L404.7 216.1 L407.4 214.5 L410.2 212.9 L413.0 211.2 L415.8 209.6 L418.7 208.0 L421.6 206.3 L424.6 204.7 L427.6 203.1 L430.6 201.4 L433.7 199.8 L436.8 198.2 L439.9 196.5 L443.1 194.9 L446.3 193.3 L449.5 191.7 L452.8 190.0 L456.1 188.4 L459.5 186.8 L462.8 185.1 L466.2 183.5 L469.7 181.9 L473.2 180.2 L476.7 178.6 L480.2 177.0 L483.8 175.4 L487.4 173.7 L491.0 172.1 L494.7 170.5 L498.4 168.8 L502.1 167.2 L505.9 165.6 L509.7 163.9 L513.5 162.3 L517.4 160.7 L521.2 159.1 L525.1 157.4 L529.1 155.8 L533.1 154.2 L537.0 152.5 L541.1 150.9 L545.1 149.3 L549.2 147.6 L553.3 146.0 L557.4 144.4 L561.6 142.7 L565.8 141.1 L570.0 139.5 L574.2 137.9 L578.5 136.2 L582.8 134.6 L587.1 133.0 L591.4 131.3 L595.7 129.7 L600.1 128.1 L604.5 126.4 L608.9 124.8 L613.4 123.2 L617.9 121.6 L622.4 119.9 L626.9 118.3 L631.4 116.7 L636.0 115.0 L640.5 113.4 L645.1 111.8 L649.7 110.1 L654.4 108.5 L659.0 106.9 L663.7 105.3 L668.4 103.6 L673.1 102.0 L677.8 100.4 L682.5 98.7 L687.3 97.1 L692.1 95.5 L696.9 93.8 L701.7 92.2 L706.5 90.6 L711.3 89.0 L716.2 87.3 L721.0 85.7 L725.9 84.1 L730.8 82.4 L735.7 80.8 L740.6 79.2 L745.6 77.5 L750.5 75.9 L755.5 74.3 L760.4 72.6 L765.4 71.0 L770.4 69.4 L775.4 67.8 L780.4 66.1 L785.4 64.5 L790.4 62.9 L795.4 61.2 L800.5 59.6 L805.5 58.0 L810.6 56.3 L815.7 54.7 L820.7 53.1 L825.8 51.5 L830.9 49.8 L836.0 48.2 L841.1 46.6 L846.1 44.9 L851.2 43.3 L856.4 41.7 L861.5 40.0 L866.6 38.4 L871.7 36.8 L876.8 35.2 L881.9 33.5 L887.0 31.9 L892.2 30.3 L897.3 28.6 L902.4 27.0"/><path d="M1054.3 565.0 L1053.5 565.0 L1052.6 565.0 L1051.8 565.0 L1050.9 565.0 L1050.1 565.0 L1049.2 565.0 L1048.4 565.0 L1047.5 565.0 L1046.7 565.0 L1045.9 565.0 L1045.0 565.0 L1044.2 565.0 L1043.3 565.0 L1042.5 565.0 L1041.6 565.0 L1040.8 565.0 L1040.0 565.0 L1039.1 565.0 L1038.3 565.0 L1037.4 565.0 L1036.6 565.0 L1035.7 565.0 L1034.9 565.0 L1034.0 565.0 L1033.2 565.0 L1032.4 565.0 L1031.5 565.0 L1030.7 565.0 L1029.8 565.0 L1029.0 565.0 L1028.1 565.0 L1027.3 565.0 L1026.5 565.0 L1025.6 565.0 L1024.8 565.0 L1023.9 565.0 L1023.1 565.0 L1022.2 565.0 L1021.4 565.0 L1020.5 565.0 L1019.7 565.0 L1018.9 565.0 L1018.0 565.0 L1017.2 565.0 L1016.3 565.0 L1015.5 565.0 L1014.6 565.0 L1013.8 565.0 L1013.0 565.0 L1012.1 565.0 L1011.3 565.0 L1010.4 565.0 L1009.6 565.0 L1008.7 565.0 L1007.9 565.0 L1007.0 565.0 L1006.2 565.0 L1005.4 565.0 L1004.5 565.0 L1003.7 565.0 L1002.8 565.0 L1002.0 565.0 L1001.1 565.0 L1000.3 565.0 L999.4 565.0 L998.6 565.0 L997.8 565.0 L996.9 565.0 L996.1 565.0 L995.2 565.0 L994.4 565.0 L993.5 565.0 L992.7 565.0 L991.9 565.0 L991.0 565.0 L990.2 565.0 L989.3 565.0 L988.5 565.0 L987.6 565.0 L986.8 565.0 L985.9 565.0 L985.1 565.0 L984.3 565.0 L983.4 565.0 L982.6 565.0 L981.7 565.0 L980.9 565.0 L980.0 565.0 L979.2 565.0 L978.4 565.0 L977.5 565.0 L976.7 565.0 L975.8 565.0 L975.0 565.0 L974.1 565.0 L973.3 565.0 L972.4 565.0 L971.6 565.0 L970.8 565.0 L969.9 565.0 L969.1 565.0 L968.2 565.0 L967.4 565.0 L966.5 565.0 L965.7 565.0 L964.8 565.0 L964.0 565.0 L963.2 565.0 L962.3 565.0 L961.5 565.0 L960.6 565.0 L959.8 565.0 L958.9 565.0 L958.1 565.0 L957.3 565.0 L956.4 565.0 L955.6 565.0 L954.7 565.0 L953.9 565.0 L953.0 565.0 L952.2 565.0 L951.3 565.0 L950.5 565.0 L949.7 565.0 L948.8 565.0 L948.0 565.0 L947.1 565.0 L946.3 565.0 L945.4 565.0 L944.6 565.0 L943.8 565.0 L942.9 565.0 L942.1 565.0 L941.2 565.0 L940.4 565.0 L939.5 565.0 L938.7 565.0 L937.8 565.0 L937.0 565.0 L936.2 565.0 L935.3 565.0 L934.5 565.0 L933.6 565.0 L932.8 565.0 L931.9 565.0 L931.1 565.0 L930.2 565.0 L929.4 565.0 L928.6 565.0 L927.7 565.0 L926.9 565.0 L926.0 565.0 L925.2 565.0 L924.3 565.0 L923.5 565.0 L922.7 565.0 L921.8 565.0 L921.0 565.0 L920.1 565.0 L919.3 565.0 L918.4 565.0 L917.6 565.0 L916.7 565.0 L915.9 565.0 L915.1 565.0 L914.2 565.0 L913.4 565.0 L912.5 565.0 L911.7 565.0 L910.8 565.0 L910.0 565.0 L909.2 565.0 L908.3 565.0 L907.5 565.0 L906.6 565.0 L905.8 565.0 L904.9 565.0 L904.1 565.0 L903.2 565.0 L902.4 565.0 L901.6 565.0 L900.7 565.0 L899.9 565.0 L899.0 565.0 L898.2 565.0 L897.3 565.0 L896.5 565.0 L895.6 565.0 L894.8 565.0 L894.0 565.0 L893.1 565.0 L892.3 565.0 L891.4 565.0 L890.6 565.0 L889.7 565.0 L888.9 565.0 L888.1 565.0 L887.2 565.0 L886.4 565.0 L885.5 565.0 L884.7 565.0 L883.8 565.0 L883.0 565.0 L882.1 565.0 L881.3 565.0 L880.5 565.0 L879.6 565.0 L878.8 565.0 L877.9 565.0 L877.1 565.0 L876.2 565.0 L875.4 565.0 L874.6 565.0 L873.7 565.0 L872.9 565.0 L872.0 565.0 L871.2 565.0 L870.3 565.0 L869.5 565.0 L868.6 565.0 L867.8 565.0 L867.0 565.0 L866.1 565.0 L865.3 565.0 L864.4 565.0 L863.6 565.0 L862.7 565.0 L861.9 565.0 L861.0 565.0 L860.2 565.0 L859.4 565.0 L858.5 565.0 L857.7 565.0 L856.8 565.0 L856.0 565.0 L855.1 565.0 L854.3 565.0 L853.5 565.0 L852.6 565.0 L851.8 565.0 L850.9 565.0 L850.1 565.0 L849.2 565.0 L848.4 565.0 L847.5 565.0 L846.7 565.0 L845.9 565.0 L845.0 565.0 L844.2 565.0 L843.3 565.0 L842.5 565.0 L841.6 565.0 L840.8 565.0 L840.0 565.0 L839.1 565.0 L838.3 565.0 L837.4 565.0 L836.6 565.0 L835.7 565.0 L834.9 565.0 L834.0 565.0 L833.2 565.0 L832.4 565.0 L831.5 565.0 L830.7 565.0 L829.8 565.0 L829.0 565.0 L828.1 565.0 L827.3 565.0 L826.4 565.0 L825.6 565.0 L824.8 565.0 L823.9 565.0 L823.1 565.0 L822.2 565.0 L821.4 565.0 L820.5 565.0 L819.7 565.0 L818.9 565.0 L818.0 565.0 L817.2 565.0 L816.3 565.0 L815.5 565.0 L814.6 565.0 L813.8 565.0 L812.9 565.0 L812.1 565.0 L811.3 565.0 L810.4 565.0 L809.6 565.0 L808.7 565.0 L807.9 565.0 L807.0 565.0 L806.2 565.0 L805.4 565.0 L804.5 565.0 L803.7 565.0 L802.8 565.0 L802.0 565.0 L801.1 565.0 L800.3 565.0 L799.4 565.0 L798.6 565.0 L797.8 565.0 L796.9 565.0 L796.1 565.0 L795.2 565.0 L794.4 565.0 L793.5 565.0 L792.7 565.0 L791.8 565.0 L791.0 565.0 L790.2 565.0 L789.3 565.0 L788.5 565.0 L787.6 565.0 L786.8 565.0 L785.9 565.0 L785.1 565.0 L784.3 565.0 L783.4 565.0 L782.6 565.0 L781.7 565.0 L780.9 565.0 L780.0 565.0 L779.2 565.0 L778.3 565.0 L777.5 565.0 L776.7 565.0 L775.8 565.0 L775.0 565.0 L774.1 565.0 L773.3 565.0 L772.4 565.0 L771.6 565.0 L770.8 565.0 L769.9 565.0 L769.1 565.0 L768.2 565.0 L767.4 565.0 L766.5 565.0 L765.7 565.0 L764.8 565.0 L764.0 565.0 L763.2 565.0 L762.3 565.0 L761.5 565.0 L760.6 565.0 L759.8 565.0 L758.9 565.0 L758.1 565.0 L757.3 565.0 L756.4 565.0 L755.6 565.0 L754.7 565.0 L753.9 565.0 L753.0 565.0 L752.2 565.0 L751.3 565.0 L750.5 565.0"/><path d="M1195.8 516.1 L1194.2 516.1 L1192.6 516.1 L1191.0 516.1 L1189.3 516.1 L1187.7 516.1 L1186.1 516.1 L1184.4 516.1 L1182.8 516.1 L1181.2 516.1 L1179.5 516.1 L1177.9 516.1 L1176.3 516.1 L1174.7 516.1 L1173.0 516.1 L1171.4 516.1 L1169.8 516.1 L1168.1 516.1 L1166.5 516.1 L1164.9 516.1 L1163.2 516.1 L1161.6 516.1 L1160.0 516.1 L1158.4 516.1 L1156.7 516.1 L1155.1 516.1 L1153.5 516.1 L1151.8 516.1 L1150.2 516.1 L1148.6 516.1 L1146.9 516.1 L1145.3 516.1 L1143.7 516.1 L1142.1 516.1 L1140.4 516.1 L1138.8 516.1 L1137.2 516.1 L1135.5 516.1 L1133.9 516.1 L1132.3 516.1 L1130.6 516.1 L1129.0 516.1 L1127.4 516.1 L1125.7 516.1 L1124.1 516.1 L1122.5 516.1 L1120.9 516.1 L1119.2 516.1 L1117.6 516.1 L1116.0 516.1 L1114.3 516.1 L1112.7 516.1 L1111.1 516.1 L1109.4 516.1 L1107.8 516.1 L1106.2 516.1 L1104.6 516.1 L1102.9 516.1 L1101.3 516.1 L1099.7 516.1 L1098.0 516.1 L1096.4 516.1 L1094.8 516.1 L1093.1 516.1 L1091.5 516.1 L1089.9 516.1 L1088.3 516.1 L1086.6 516.1 L1085.0 516.1 L1083.4 516.1 L1081.7 516.1 L1080.1 516.1 L1078.5 516.1 L1076.8 516.1 L1075.2 516.1 L1073.6 516.1 L1071.9 516.1 L1070.3 516.1 L1068.7 516.1 L1067.1 516.1 L1065.4 516.1 L1063.8 516.1 L1062.2 516.1 L1060.5 516.1 L1058.9 516.1 L1057.3 516.1 L1055.6 516.1 L1054.0 516.1 L1052.4 516.1 L1050.8 516.1 L1049.1 516.1 L1047.5 516.1 L1045.9 516.1 L1044.2 516.1 L1042.6 516.1 L1041.0 516.1 L1039.3 516.1 L1037.7 516.1 L1036.1 516.1 L1034.5 516.1 L1032.8 516.1 L1031.2 516.1 L1029.6 516.1 L1027.9 516.1 L1026.3 516.1 L1024.7 516.1 L1023.0 516.1 L1021.4 516.1 L1019.8 516.1 L1018.1 516.1 L1016.5 516.1 L1014.9 516.1 L1013.3 516.1 L1011.6 516.1 L1010.0 516.1 L1008.4 516.1 L1006.7 516.1 L1005.1 516.1 L1003.5 516.1 L1001.8 516.1 L1000.2 516.1 L998.6 516.1 L997.0 516.1 L995.3 516.1 L993.7 516.1 L992.1 516.1 L990.4 516.1 L988.8 516.1 L987.2 516.1 L985.5 516.1 L983.9 516.1 L982.3 516.1 L980.7 516.1 L979.0 516.1 L977.4 516.1 L975.8 516.1 L974.1 516.1 L972.5 516.1 L970.9 516.1 L969.2 516.1 L967.6 516.1 L966.0 516.1 L964.4 516.1 L962.7 516.1 L961.1 516.1 L959.5 516.1 L957.8 516.1 L956.2 516.1 L954.6 516.1 L952.9 516.1 L951.3 516.1 L949.7 516.1 L948.0 516.1 L946.4 516.1 L944.8 516.1 L943.2 516.1 L941.5 516.1 L939.9 516.1 L938.3 516.1 L936.6 516.1 L935.0 516.1 L933.4 516.1 L931.7 516.1 L930.1 516.1 L928.5 516.1 L926.9 516.1 L925.2 516.1 L923.6 516.1 L922.0 516.1 L920.3 516.1 L918.7 516.1 L917.1 516.1 L915.4 516.1 L913.8 516.1 L912.2 516.1 L910.6 516.1 L908.9 516.1 L907.3 516.1 L905.7 516.1 L904.0 516.1 L902.4 516.1 L900.8 516.1 L899.1 516.1 L897.5 516.1 L895.9 516.1 L894.2 516.1 L892.6 516.1 L891.0 516.1 L889.4 516.1 L887.7 516.1 L886.1 516.1 L884.5 516.1 L882.8 516.1 L881.2 516.1 L879.6 516.1 L877.9 516.1 L876.3 516.1 L874.7 516.1 L873.1 516.1 L871.4 516.1 L869.8 516.1 L868.2 516.1 L866.5 516.1 L864.9 516.1 L863.3 516.1 L861.6 516.1 L860.0 516.1 L858.4 516.1 L856.8 516.1 L855.1 516.1 L853.5 516.1 L851.9 516.1 L850.2 516.1 L848.6 516.1 L847.0 516.1 L845.3 516.1 L843.7 516.1 L842.1 516.1 L840.4 516.1 L838.8 516.1 L837.2 516.1 L835.6 516.1 L833.9 516.1 L832.3 516.1 L830.7 516.1 L829.0 516.1 L827.4 516.1 L825.8 516.1 L824.1 516.1 L822.5 516.1 L820.9 516.1 L819.3 516.1 L817.6 516.1 L816.0 516.1 L814.4 516.1 L812.7 516.1 L811.1 516.1 L809.5 516.1 L807.8 516.1 L806.2 516.1 L804.6 516.1 L803.0 516.1 L801.3 516.1 L799.7 516.1 L798.1 516.1 L796.4 516.1 L794.8 516.1 L793.2 516.1 L791.5 516.1 L789.9 516.1 L788.3 516.1 L786.7 516.1 L785.0 516.1 L783.4 516.1 L781.8 516.1 L780.1 516.1 L778.5 516.1 L776.9 516.1 L775.2 516.1 L773.6 516.1 L772.0 516.1 L770.3 516.1 L768.7 516.1 L767.1 516.1 L765.5 516.1 L763.8 516.1 L762.2 516.1 L760.6 516.1 L758.9 516.1 L757.3 516.1 L755.7 516.1 L754.0 516.1 L752.4 516.1 L750.8 516.1 L749.2 516.1 L747.5 516.1 L745.9 516.1 L744.3 516.1 L742.6 516.1 L741.0 516.1 L739.4 516.1 L737.7 516.1 L736.1 516.1 L734.5 516.1 L732.9 516.1 L731.2 516.1 L729.6 516.1 L728.0 516.1 L726.3 516.1 L724.7 516.1 L723.1 516.1 L721.4 516.1 L719.8 516.1 L718.2 516.1 L716.5 516.1 L714.9 516.1 L713.3 516.1 L711.7 516.1 L710.0 516.1 L708.4 516.1 L706.8 516.1 L705.1 516.1 L703.5 516.1 L701.9 516.1 L700.2 516.1 L698.6 516.1 L697.0 516.1 L695.4 516.1 L693.7 516.1 L692.1 516.1 L690.5 516.1 L688.8 516.1 L687.2 516.1 L685.6 516.1 L683.9 516.1 L682.3 516.1 L680.7 516.1 L679.1 516.1 L677.4 516.1 L675.8 516.1 L674.2 516.1 L672.5 516.1 L670.9 516.1 L669.3 516.1 L667.6 516.1 L666.0 516.1 L664.4 516.1 L662.7 516.1 L661.1 516.1 L659.5 516.1 L657.9 516.1 L656.2 516.1 L654.6 516.1 L653.0 516.1 L651.3 516.1 L649.7 516.1 L648.1 516.1 L646.4 516.1 L644.8 516.1 L643.2 516.1 L641.6 516.1 L639.9 516.1 L638.3 516.1 L636.7 516.1 L635.0 516.1 L633.4 516.1 L631.8 516.1 L630.1 516.1 L628.5 516.1 L626.9 516.1 L625.3 516.1 L623.6 516.1 L622.0 516.1 L620.4 516.1 L618.7 516.1 L617.1 516.1 L615.5 516.1 L613.8 516.1 L612.2 516.1 L610.6 516.1 L608.9 516.1"/><path d="M1317.4 467.2 L1315.1 467.2 L1312.8 467.2 L1310.5 467.2 L1308.2 467.2 L1305.9 467.2 L1303.6 467.2 L1301.3 467.2 L1299.0 467.2 L1296.7 467.2 L1294.3 467.2 L1292.0 467.2 L1289.7 467.2 L1287.4 467.2 L1285.1 467.2 L1282.8 467.2 L1280.5 467.2 L1278.2 467.2 L1275.9 467.2 L1273.6 467.2 L1271.3 467.2 L1269.0 467.2 L1266.7 467.2 L1264.4 467.2 L1262.1 467.2 L1259.8 467.2 L1257.5 467.2 L1255.2 467.2 L1252.8 467.2 L1250.5 467.2 L1248.2 467.2 L1245.9 467.2 L1243.6 467.2 L1241.3 467.2 L1239.0 467.2 L1236.7 467.2 L1234.4 467.2 L1232.1 467.2 L1229.8 467.2 L1227.5 467.2 L1225.2 467.2 L1222.9 467.2 L1220.6 467.2 L1218.3 467.2 L1216.0 467.2 L1213.7 467.2 L1211.3 467.2 L1209.0 467.2 L1206.7 467.2 L1204.4 467.2 L1202.1 467.2 L1199.8 467.2 L1197.5 467.2 L1195.2 467.2 L1192.9 467.2 L1190.6 467.2 L1188.3 467.2 L1186.0 467.2 L1183.7 467.2 L1181.4 467.2 L1179.1 467.2 L1176.8 467.2 L1174.5 467.2 L1172.2 467.2 L1169.8 467.2 L1167.5 467.2 L1165.2 467.2 L1162.9 467.2 L1160.6 467.2 L1158.3 467.2 L1156.0 467.2 L1153.7 467.2 L1151.4 467.2 L1149.1 467.2 L1146.8 467.2 L1144.5 467.2 L1142.2 467.2 L1139.9 467.2 L1137.6 467.2 L1135.3 467.2 L1133.0 467.2 L1130.7 467.2 L1128.3 467.2 L1126.0 467.2 L1123.7 467.2 L1121.4 467.2 L1119.1 467.2 L1116.8 467.2 L1114.5 467.2 L1112.2 467.2 L1109.9 467.2 L1107.6 467.2 L1105.3 467.2 L1103.0 467.2 L1100.7 467.2 L1098.4 467.2 L1096.1 467.2 L1093.8 467.2 L1091.5 467.2 L1089.2 467.2 L1086.8 467.2 L1084.5 467.2 L1082.2 467.2 L1079.9 467.2 L1077.6 467.2 L1075.3 467.2 L1073.0 467.2 L1070.7 467.2 L1068.4 467.2 L1066.1 467.2 L1063.8 467.2 L1061.5 467.2 L1059.2 467.2 L1056.9 467.2 L1054.6 467.2 L1052.3 467.2 L1050.0 467.2 L1047.7 467.2 L1045.3 467.2 L1043.0 467.2 L1040.7 467.2 L1038.4 467.2 L1036.1 467.2 L1033.8 467.2 L1031.5 467.2 L1029.2 467.2 L1026.9 467.2 L1024.6 467.2 L1022.3 467.2 L1020.0 467.2 L1017.7 467.2 L1015.4 467.2 L1013.1 467.2 L1010.8 467.2 L1008.5 467.2 L1006.2 467.2 L1003.8 467.2 L1001.5 467.2 L999.2 467.2 L996.9 467.2 L994.6 467.2 L992.3 467.2 L990.0 467.2 L987.7 467.2 L985.4 467.2 L983.1 467.2 L980.8 467.2 L978.5 467.2 L976.2 467.2 L973.9 467.2 L971.6 467.2 L969.3 467.2 L967.0 467.2 L964.7 467.2 L962.3 467.2 L960.0 467.2 L957.7 467.2 L955.4 467.2 L953.1 467.2 L950.8 467.2 L948.5 467.2 L946.2 467.2 L943.9 467.2 L941.6 467.2 L939.3 467.2 L937.0 467.2 L934.7 467.2 L932.4 467.2 L930.1 467.2 L927.8 467.2 L925.5 467.2 L923.2 467.2 L920.8 467.2 L918.5 467.2 L916.2 467.2 L913.9 467.2 L911.6 467.2 L909.3 467.2 L907.0 467.2 L904.7 467.2 L902.4 467.2 L900.1 467.2 L897.8 467.2 L895.5 467.2 L893.2 467.2 L890.9 467.2 L888.6 467.2 L886.3 467.2 L884.0 467.2 L881.6 467.2 L879.3 467.2 L877.0 467.2 L874.7 467.2 L872.4 467.2 L870.1 467.2 L867.8 467.2 L865.5 467.2 L863.2 467.2 L860.9 467.2 L858.6 467.2 L856.3 467.2 L854.0 467.2 L851.7 467.2 L849.4 467.2 L847.1 467.2 L844.8 467.2 L842.5 467.2 L840.1 467.2 L837.8 467.2 L835.5 467.2 L833.2 467.2 L830.9 467.2 L828.6 467.2 L826.3 467.2 L824.0 467.2 L821.7 467.2 L819.4 467.2 L817.1 467.2 L814.8 467.2 L812.5 467.2 L810.2 467.2 L807.9 467.2 L805.6 467.2 L803.3 467.2 L801.0 467.2 L798.6 467.2 L796.3 467.2 L794.0 467.2 L791.7 467.2 L789.4 467.2 L787.1 467.2 L784.8 467.2 L782.5 467.2 L780.2 467.2 L777.9 467.2 L775.6 467.2 L773.3 467.2 L771.0 467.2 L768.7 467.2 L766.4 467.2 L764.1 467.2 L761.8 467.2 L759.5 467.2 L757.1 467.2 L754.8 467.2 L752.5 467.2 L750.2 467.2 L747.9 467.2 L745.6 467.2 L743.3 467.2 L741.0 467.2 L738.7 467.2 L736.4 467.2 L734.1 467.2 L731.8 467.2 L729.5 467.2 L727.2 467.2 L724.9 467.2 L722.6 467.2 L720.3 467.2 L718.0 467.2 L715.6 467.2 L713.3 467.2 L711.0 467.2 L708.7 467.2 L706.4 467.2 L704.1 467.2 L701.8 467.2 L699.5 467.2 L697.2 467.2 L694.9 467.2 L692.6 467.2 L690.3 467.2 L688.0 467.2 L685.7 467.2 L683.4 467.2 L681.1 467.2 L678.8 467.2 L676.5 467.2 L674.1 467.2 L671.8 467.2 L669.5 467.2 L667.2 467.2 L664.9 467.2 L662.6 467.2 L660.3 467.2 L658.0 467.2 L655.7 467.2 L653.4 467.2 L651.1 467.2 L648.8 467.2 L646.5 467.2 L644.2 467.2 L641.9 467.2 L639.6 467.2 L637.3 467.2 L635.0 467.2 L632.6 467.2 L630.3 467.2 L628.0 467.2 L625.7 467.2 L623.4 467.2 L621.1 467.2 L618.8 467.2 L616.5 467.2 L614.2 467.2 L611.9 467.2 L609.6 467.2 L607.3 467.2 L605.0 467.2 L602.7 467.2 L600.4 467.2 L598.1 467.2 L595.8 467.2 L593.5 467.2 L591.1 467.2 L588.8 467.2 L586.5 467.2 L584.2 467.2 L581.9 467.2 L579.6 467.2 L577.3 467.2 L575.0 467.2 L572.7 467.2 L570.4 467.2 L568.1 467.2 L565.8 467.2 L563.5 467.2 L561.2 467.2 L558.9 467.2 L556.6 467.2 L554.3 467.2 L552.0 467.2 L549.6 467.2 L547.3 467.2 L545.0 467.2 L542.7 467.2 L540.4 467.2 L538.1 467.2 L535.8 467.2 L533.5 467.2 L531.2 467.2 L528.9 467.2 L526.6 467.2 L524.3 467.2 L522.0 467.2 L519.7 467.2 L517.4 467.2 L515.1 467.2 L512.8 467.2 L510.5 467.2 L508.1 467.2 L505.8 467.2 L503.5 467.2 L501.2 467.2 L498.9 467.2 L496.6 467.2 L494.3 467.2 L492.0 467.2 L489.7 467.2 L487.4 467.2"/><path d="M1410.7 418.3 L1407.8 418.3 L1405.0 418.3 L1402.2 418.3 L1399.4 418.3 L1396.6 418.3 L1393.7 418.3 L1390.9 418.3 L1388.1 418.3 L1385.3 418.3 L1382.4 418.3 L1379.6 418.3 L1376.8 418.3 L1374.0 418.3 L1371.1 418.3 L1368.3 418.3 L1365.5 418.3 L1362.7 418.3 L1359.8 418.3 L1357.0 418.3 L1354.2 418.3 L1351.4 418.3 L1348.5 418.3 L1345.7 418.3 L1342.9 418.3 L1340.1 418.3 L1337.3 418.3 L1334.4 418.3 L1331.6 418.3 L1328.8 418.3 L1326.0 418.3 L1323.1 418.3 L1320.3 418.3 L1317.5 418.3 L1314.7 418.3 L1311.8 418.3 L1309.0 418.3 L1306.2 418.3 L1303.4 418.3 L1300.5 418.3 L1297.7 418.3 L1294.9 418.3 L1292.1 418.3 L1289.3 418.3 L1286.4 418.3 L1283.6 418.3 L1280.8 418.3 L1278.0 418.3 L1275.1 418.3 L1272.3 418.3 L1269.5 418.3 L1266.7 418.3 L1263.8 418.3 L1261.0 418.3 L1258.2 418.3 L1255.4 418.3 L1252.5 418.3 L1249.7 418.3 L1246.9 418.3 L1244.1 418.3 L1241.2 418.3 L1238.4 418.3 L1235.6 418.3 L1232.8 418.3 L1230.0 418.3 L1227.1 418.3 L1224.3 418.3 L1221.5 418.3 L1218.7 418.3 L1215.8 418.3 L1213.0 418.3 L1210.2 418.3 L1207.4 418.3 L1204.5 418.3 L1201.7 418.3 L1198.9 418.3 L1196.1 418.3 L1193.2 418.3 L1190.4 418.3 L1187.6 418.3 L1184.8 418.3 L1181.9 418.3 L1179.1 418.3 L1176.3 418.3 L1173.5 418.3 L1170.7 418.3 L1167.8 418.3 L1165.0 418.3 L1162.2 418.3 L1159.4 418.3 L1156.5 418.3 L1153.7 418.3 L1150.9 418.3 L1148.1 418.3 L1145.2 418.3 L1142.4 418.3 L1139.6 418.3 L1136.8 418.3 L1133.9 418.3 L1131.1 418.3 L1128.3 418.3 L1125.5 418.3 L1122.7 418.3 L1119.8 418.3 L1117.0 418.3 L1114.2 418.3 L1111.4 418.3 L1108.5 418.3 L1105.7 418.3 L1102.9 418.3 L1100.1 418.3 L1097.2 418.3 L1094.4 418.3 L1091.6 418.3 L1088.8 418.3 L1085.9 418.3 L1083.1 418.3 L1080.3 418.3 L1077.5 418.3 L1074.6 418.3 L1071.8 418.3 L1069.0 418.3 L1066.2 418.3 L1063.4 418.3 L1060.5 418.3 L1057.7 418.3 L1054.9 418.3 L1052.1 418.3 L1049.2 418.3 L1046.4 418.3 L1043.6 418.3 L1040.8 418.3 L1037.9 418.3 L1035.1 418.3 L1032.3 418.3 L1029.5 418.3 L1026.6 418.3 L1023.8 418.3 L1021.0 418.3 L1018.2 418.3 L1015.3 418.3 L1012.5 418.3 L1009.7 418.3 L1006.9 418.3 L1004.1 418.3 L1001.2 418.3 L998.4 418.3 L995.6 418.3 L992.8 418.3 L989.9 418.3 L987.1 418.3 L984.3 418.3 L981.5 418.3 L978.6 418.3 L975.8 418.3 L973.0 418.3 L970.2 418.3 L967.3 418.3 L964.5 418.3 L961.7 418.3 L958.9 418.3 L956.1 418.3 L953.2 418.3 L950.4 418.3 L947.6 418.3 L944.8 418.3 L941.9 418.3 L939.1 418.3 L936.3 418.3 L933.5 418.3 L930.6 418.3 L927.8 418.3 L925.0 418.3 L922.2 418.3 L919.3 418.3 L916.5 418.3 L913.7 418.3 L910.9 418.3 L908.0 418.3 L905.2 418.3 L902.4 418.3 L899.6 418.3 L896.8 418.3 L893.9 418.3 L891.1 418.3 L888.3 418.3 L885.5 418.3 L882.6 418.3 L879.8 418.3 L877.0 418.3 L874.2 418.3 L871.3 418.3 L868.5 418.3 L865.7 418.3 L862.9 418.3 L860.0 418.3 L857.2 418.3 L854.4 418.3 L851.6 418.3 L848.7 418.3 L845.9 418.3 L843.1 418.3 L840.3 418.3 L837.5 418.3 L834.6 418.3 L831.8 418.3 L829.0 418.3 L826.2 418.3 L823.3 418.3 L820.5 418.3 L817.7 418.3 L814.9 418.3 L812.0 418.3 L809.2 418.3 L806.4 418.3 L803.6 418.3 L800.7 418.3 L797.9 418.3 L795.1 418.3 L792.3 418.3 L789.5 418.3 L786.6 418.3 L783.8 418.3 L781.0 418.3 L778.2 418.3 L775.3 418.3 L772.5 418.3 L769.7 418.3 L766.9 418.3 L764.0 418.3 L761.2 418.3 L758.4 418.3 L755.6 418.3 L752.7 418.3 L749.9 418.3 L747.1 418.3 L744.3 418.3 L741.4 418.3 L738.6 418.3 L735.8 418.3 L733.0 418.3 L730.2 418.3 L727.3 418.3 L724.5 418.3 L721.7 418.3 L718.9 418.3 L716.0 418.3 L713.2 418.3 L710.4 418.3 L707.6 418.3 L704.7 418.3 L701.9 418.3 L699.1 418.3 L696.3 418.3 L693.4 418.3 L690.6 418.3 L687.8 418.3 L685.0 418.3 L682.1 418.3 L679.3 418.3 L676.5 418.3 L673.7 418.3 L670.9 418.3 L668.0 418.3 L665.2 418.3 L662.4 418.3 L659.6 418.3 L656.7 418.3 L653.9 418.3 L651.1 418.3 L648.3 418.3 L645.4 418.3 L642.6 418.3 L639.8 418.3 L637.0 418.3 L634.1 418.3 L631.3 418.3 L628.5 418.3 L625.7 418.3 L622.9 418.3 L620.0 418.3 L617.2 418.3 L614.4 418.3 L611.6 418.3 L608.7 418.3 L605.9 418.3 L603.1 418.3 L600.3 418.3 L597.4 418.3 L594.6 418.3 L591.8 418.3 L589.0 418.3 L586.1 418.3 L583.3 418.3 L580.5 418.3 L577.7 418.3 L574.8 418.3 L572.0 418.3 L569.2 418.3 L566.4 418.3 L563.6 418.3 L560.7 418.3 L557.9 418.3 L555.1 418.3 L552.3 418.3 L549.4 418.3 L546.6 418.3 L543.8 418.3 L541.0 418.3 L538.1 418.3 L535.3 418.3 L532.5 418.3 L529.7 418.3 L526.8 418.3 L524.0 418.3 L521.2 418.3 L518.4 418.3 L515.5 418.3 L512.7 418.3 L509.9 418.3 L507.1 418.3 L504.3 418.3 L501.4 418.3 L498.6 418.3 L495.8 418.3 L493.0 418.3 L490.1 418.3 L487.3 418.3 L484.5 418.3 L481.7 418.3 L478.8 418.3 L476.0 418.3 L473.2 418.3 L470.4 418.3 L467.5 418.3 L464.7 418.3 L461.9 418.3 L459.1 418.3 L456.3 418.3 L453.4 418.3 L450.6 418.3 L447.8 418.3 L445.0 418.3 L442.1 418.3 L439.3 418.3 L436.5 418.3 L433.7 418.3 L430.8 418.3 L428.0 418.3 L425.2 418.3 L422.4 418.3 L419.5 418.3 L416.7 418.3 L413.9 418.3 L411.1 418.3 L408.2 418.3 L405.4 418.3 L402.6 418.3 L399.8 418.3 L397.0 418.3 L394.1 418.3"/><path d="M1469.3 369.4 L1466.2 369.4 L1463.0 369.4 L1459.9 369.4 L1456.7 369.4 L1453.6 369.4 L1450.4 369.4 L1447.3 369.4 L1444.1 369.4 L1441.0 369.4 L1437.8 369.4 L1434.7 369.4 L1431.5 369.4 L1428.4 369.4 L1425.2 369.4 L1422.1 369.4 L1418.9 369.4 L1415.8 369.4 L1412.6 369.4 L1409.5 369.4 L1406.3 369.4 L1403.2 369.4 L1400.0 369.4 L1396.9 369.4 L1393.7 369.4 L1390.6 369.4 L1387.4 369.4 L1384.3 369.4 L1381.1 369.4 L1378.0 369.4 L1374.8 369.4 L1371.7 369.4 L1368.5 369.4 L1365.4 369.4 L1362.2 369.4 L1359.1 369.4 L1355.9 369.4 L1352.8 369.4 L1349.6 369.4 L1346.5 369.4 L1343.3 369.4 L1340.2 369.4 L1337.0 369.4 L1333.9 369.4 L1330.7 369.4 L1327.6 369.4 L1324.4 369.4 L1321.3 369.4 L1318.1 369.4 L1315.0 369.4 L1311.8 369.4 L1308.7 369.4 L1305.5 369.4 L1302.4 369.4 L1299.2 369.4 L1296.1 369.4 L1292.9 369.4 L1289.8 369.4 L1286.6 369.4 L1283.5 369.4 L1280.3 369.4 L1277.2 369.4 L1274.0 369.4 L1270.9 369.4 L1267.7 369.4 L1264.6 369.4 L1261.4 369.4 L1258.3 369.4 L1255.1 369.4 L1252.0 369.4 L1248.8 369.4 L1245.7 369.4 L1242.5 369.4 L1239.4 369.4 L1236.2 369.4 L1233.1 369.4 L1229.9 369.4 L1226.8 369.4 L1223.6 369.4 L1220.5 369.4 L1217.3 369.4 L1214.2 369.4 L1211.0 369.4 L1207.9 369.4 L1204.7 369.4 L1201.6 369.4 L1198.4 369.4 L1195.3 369.4 L1192.1 369.4 L1189.0 369.4 L1185.9 369.4 L1182.7 369.4 L1179.6 369.4 L1176.4 369.4 L1173.3 369.4 L1170.1 369.4 L1167.0 369.4 L1163.8 369.4 L1160.7 369.4 L1157.5 369.4 L1154.4 369.4 L1151.2 369.4 L1148.1 369.4 L1144.9 369.4 L1141.8 369.4 L1138.6 369.4 L1135.5 369.4 L1132.3 369.4 L1129.2 369.4 L1126.0 369.4 L1122.9 369.4 L1119.7 369.4 L1116.6 369.4 L1113.4 369.4 L1110.3 369.4 L1107.1 369.4 L1104.0 369.4 L1100.8 369.4 L1097.7 369.4 L1094.5 369.4 L1091.4 369.4 L1088.2 369.4 L1085.1 369.4 L1081.9 369.4 L1078.8 369.4 L1075.6 369.4 L1072.5 369.4 L1069.3 369.4 L1066.2 369.4 L1063.0 369.4 L1059.9 369.4 L1056.7 369.4 L1053.6 369.4 L1050.4 369.4 L1047.3 369.4 L1044.1 369.4 L1041.0 369.4 L1037.8 369.4 L1034.7 369.4 L1031.5 369.4 L1028.4 369.4 L1025.2 369.4 L1022.1 369.4 L1018.9 369.4 L1015.8 369.4 L1012.6 369.4 L1009.5 369.4 L1006.3 369.4 L1003.2 369.4 L1000.0 369.4 L996.9 369.4 L993.7 369.4 L990.6 369.4 L987.4 369.4 L984.3 369.4 L981.1 369.4 L978.0 369.4 L974.8 369.4 L971.7 369.4 L968.5 369.4 L965.4 369.4 L962.2 369.4 L959.1 369.4 L955.9 369.4 L952.8 369.4 L949.6 369.4 L946.5 369.4 L943.3 369.4 L940.2 369.4 L937.0 369.4 L933.9 369.4 L930.7 369.4 L927.6 369.4 L924.4 369.4 L921.3 369.4 L918.1 369.4 L915.0 369.4 L911.8 369.4 L908.7 369.4 L905.5 369.4 L902.4 369.4 L899.3 369.4 L896.1 369.4 L893.0 369.4 L889.8 369.4 L886.7 369.4 L883.5 369.4 L880.4 369.4 L877.2 369.4 L874.1 369.4 L870.9 369.4 L867.8 369.4 L864.6 369.4 L861.5 369.4 L858.3 369.4 L855.2 369.4 L852.0 369.4 L848.9 369.4 L845.7 369.4 L842.6 369.4 L839.4 369.4 L836.3 369.4 L833.1 369.4 L830.0 369.4 L826.8 369.4 L823.7 369.4 L820.5 369.4 L817.4 369.4 L814.2 369.4 L811.1 369.4 L807.9 369.4 L804.8 369.4 L801.6 369.4 L798.5 369.4 L795.3 369.4 L792.2 369.4 L789.0 369.4 L785.9 369.4 L782.7 369.4 L779.6 369.4 L776.4 369.4 L773.3 369.4 L770.1 369.4 L767.0 369.4 L763.8 369.4 L760.7 369.4 L757.5 369.4 L754.4 369.4 L751.2 369.4 L748.1 369.4 L744.9 369.4 L741.8 369.4 L738.6 369.4 L735.5 369.4 L732.3 369.4 L729.2 369.4 L726.0 369.4 L722.9 369.4 L719.7 369.4 L716.6 369.4 L713.4 369.4 L710.3 369.4 L707.1 369.4 L704.0 369.4 L700.8 369.4 L697.7 369.4 L694.5 369.4 L691.4 369.4 L688.2 369.4 L685.1 369.4 L681.9 369.4 L678.8 369.4 L675.6 369.4 L672.5 369.4 L669.3 369.4 L666.2 369.4 L663.0 369.4 L659.9 369.4 L656.7 369.4 L653.6 369.4 L650.4 369.4 L647.3 369.4 L644.1 369.4 L641.0 369.4 L637.8 369.4 L634.7 369.4 L631.5 369.4 L628.4 369.4 L625.2 369.4 L622.1 369.4 L618.9 369.4 L615.8 369.4 L612.7 369.4 L609.5 369.4 L606.4 369.4 L603.2 369.4 L600.1 369.4 L596.9 369.4 L593.8 369.4 L590.6 369.4 L587.5 369.4 L584.3 369.4 L581.2 369.4 L578.0 369.4 L574.9 369.4 L571.7 369.4 L568.6 369.4 L565.4 369.4 L562.3 369.4 L559.1 369.4 L556.0 369.4 L552.8 369.4 L549.7 369.4 L546.5 369.4 L543.4 369.4 L540.2 369.4 L537.1 369.4 L533.9 369.4 L530.8 369.4 L527.6 369.4 L524.5 369.4 L521.3 369.4 L518.2 369.4 L515.0 369.4 L511.9 369.4 L508.7 369.4 L505.6 369.4 L502.4 369.4 L499.3 369.4 L496.1 369.4 L493.0 369.4 L489.8 369.4 L486.7 369.4 L483.5 369.4 L480.4 369.4 L477.2 369.4 L474.1 369.4 L470.9 369.4 L467.8 369.4 L464.6 369.4 L461.5 369.4 L458.3 369.4 L455.2 369.4 L452.0 369.4 L448.9 369.4 L445.7 369.4 L442.6 369.4 L439.4 369.4 L436.3 369.4 L433.1 369.4 L430.0 369.4 L426.8 369.4 L423.7 369.4 L420.5 369.4 L417.4 369.4 L414.2 369.4 L411.1 369.4 L407.9 369.4 L404.8 369.4 L401.6 369.4 L398.5 369.4 L395.3 369.4 L392.2 369.4 L389.0 369.4 L385.9 369.4 L382.7 369.4 L379.6 369.4 L376.4 369.4 L373.3 369.4 L370.1 369.4 L367.0 369.4 L363.8 369.4 L360.7 369.4 L357.5 369.4 L354.4 369.4 L351.2 369.4 L348.1 369.4 L344.9 369.4 L341.8 369.4 L338.6 369.4 L335.5 369.4"/><path d="M1489.3 320.4 L1486.0 320.4 L1482.8 320.4 L1479.5 320.4 L1476.3 320.4 L1473.0 320.4 L1469.7 320.4 L1466.5 320.4 L1463.2 320.4 L1460.0 320.4 L1456.7 320.4 L1453.4 320.4 L1450.2 320.4 L1446.9 320.4 L1443.7 320.4 L1440.4 320.4 L1437.1 320.4 L1433.9 320.4 L1430.6 320.4 L1427.3 320.4 L1424.1 320.4 L1420.8 320.4 L1417.6 320.4 L1414.3 320.4 L1411.0 320.4 L1407.8 320.4 L1404.5 320.4 L1401.3 320.4 L1398.0 320.4 L1394.7 320.4 L1391.5 320.4 L1388.2 320.4 L1385.0 320.4 L1381.7 320.4 L1378.4 320.4 L1375.2 320.4 L1371.9 320.4 L1368.7 320.4 L1365.4 320.4 L1362.1 320.4 L1358.9 320.4 L1355.6 320.4 L1352.4 320.4 L1349.1 320.4 L1345.8 320.4 L1342.6 320.4 L1339.3 320.4 L1336.1 320.4 L1332.8 320.4 L1329.5 320.4 L1326.3 320.4 L1323.0 320.4 L1319.8 320.4 L1316.5 320.4 L1313.2 320.4 L1310.0 320.4 L1306.7 320.4 L1303.4 320.4 L1300.2 320.4 L1296.9 320.4 L1293.7 320.4 L1290.4 320.4 L1287.1 320.4 L1283.9 320.4 L1280.6 320.4 L1277.4 320.4 L1274.1 320.4 L1270.8 320.4 L1267.6 320.4 L1264.3 320.4 L1261.1 320.4 L1257.8 320.4 L1254.5 320.4 L1251.3 320.4 L1248.0 320.4 L1244.8 320.4 L1241.5 320.4 L1238.2 320.4 L1235.0 320.4 L1231.7 320.4 L1228.5 320.4 L1225.2 320.4 L1221.9 320.4 L1218.7 320.4 L1215.4 320.4 L1212.2 320.4 L1208.9 320.4 L1205.6 320.4 L1202.4 320.4 L1199.1 320.4 L1195.8 320.4 L1192.6 320.4 L1189.3 320.4 L1186.1 320.4 L1182.8 320.4 L1179.5 320.4 L1176.3 320.4 L1173.0 320.4 L1169.8 320.4 L1166.5 320.4 L1163.2 320.4 L1160.0 320.4 L1156.7 320.4 L1153.5 320.4 L1150.2 320.4 L1146.9 320.4 L1143.7 320.4 L1140.4 320.4 L1137.2 320.4 L1133.9 320.4 L1130.6 320.4 L1127.4 320.4 L1124.1 320.4 L1120.9 320.4 L1117.6 320.4 L1114.3 320.4 L1111.1 320.4 L1107.8 320.4 L1104.6 320.4 L1101.3 320.4 L1098.0 320.4 L1094.8 320.4 L1091.5 320.4 L1088.3 320.4 L1085.0 320.4 L1081.7 320.4 L1078.5 320.4 L1075.2 320.4 L1071.9 320.4 L1068.7 320.4 L1065.4 320.4 L1062.2 320.4 L1058.9 320.4 L1055.6 320.4 L1052.4 320.4 L1049.1 320.4 L1045.9 320.4 L1042.6 320.4 L1039.3 320.4 L1036.1 320.4 L1032.8 320.4 L1029.6 320.4 L1026.3 320.4 L1023.0 320.4 L1019.8 320.4 L1016.5 320.4 L1013.3 320.4 L1010.0 320.4 L1006.7 320.4 L1003.5 320.4 L1000.2 320.4 L997.0 320.4 L993.7 320.4 L990.4 320.4 L987.2 320.4 L983.9 320.4 L980.7 320.4 L977.4 320.4 L974.1 320.4 L970.9 320.4 L967.6 320.4 L964.4 320.4 L961.1 320.4 L957.8 320.4 L954.6 320.4 L951.3 320.4 L948.0 320.4 L944.8 320.4 L941.5 320.4 L938.3 320.4 L935.0 320.4 L931.7 320.4 L928.5 320.4 L925.2 320.4 L922.0 320.4 L918.7 320.4 L915.4 320.4 L912.2 320.4 L908.9 320.4 L905.7 320.4 L902.4 320.4 L899.1 320.4 L895.9 320.4 L892.6 320.4 L889.4 320.4 L886.1 320.4 L882.8 320.4 L879.6 320.4 L876.3 320.4 L873.1 320.4 L869.8 320.4 L866.5 320.4 L863.3 320.4 L860.0 320.4 L856.8 320.4 L853.5 320.4 L850.2 320.4 L847.0 320.4 L843.7 320.4 L840.4 320.4 L837.2 320.4 L833.9 320.4 L830.7 320.4 L827.4 320.4 L824.1 320.4 L820.9 320.4 L817.6 320.4 L814.4 320.4 L811.1 320.4 L807.8 320.4 L804.6 320.4 L801.3 320.4 L798.1 320.4 L794.8 320.4 L791.5 320.4 L788.3 320.4 L785.0 320.4 L781.8 320.4 L778.5 320.4 L775.2 320.4 L772.0 320.4 L768.7 320.4 L765.5 320.4 L762.2 320.4 L758.9 320.4 L755.7 320.4 L752.4 320.4 L749.2 320.4 L745.9 320.4 L742.6 320.4 L739.4 320.4 L736.1 320.4 L732.9 320.4 L729.6 320.4 L726.3 320.4 L723.1 320.4 L719.8 320.4 L716.5 320.4 L713.3 320.4 L710.0 320.4 L706.8 320.4 L703.5 320.4 L700.2 320.4 L697.0 320.4 L693.7 320.4 L690.5 320.4 L687.2 320.4 L683.9 320.4 L680.7 320.4 L677.4 320.4 L674.2 320.4 L670.9 320.4 L667.6 320.4 L664.4 320.4 L661.1 320.4 L657.9 320.4 L654.6 320.4 L651.3 320.4 L648.1 320.4 L644.8 320.4 L641.6 320.4 L638.3 320.4 L635.0 320.4 L631.8 320.4 L628.5 320.4 L625.3 320.4 L622.0 320.4 L618.7 320.4 L615.5 320.4 L612.2 320.4 L609.0 320.4 L605.7 320.4 L602.4 320.4 L599.2 320.4 L595.9 320.4 L592.6 320.4 L589.4 320.4 L586.1 320.4 L582.9 320.4 L579.6 320.4 L576.3 320.4 L573.1 320.4 L569.8 320.4 L566.6 320.4 L563.3 320.4 L560.0 320.4 L556.8 320.4 L553.5 320.4 L550.3 320.4 L547.0 320.4 L543.7 320.4 L540.5 320.4 L537.2 320.4 L534.0 320.4 L530.7 320.4 L527.4 320.4 L524.2 320.4 L520.9 320.4 L517.7 320.4 L514.4 320.4 L511.1 320.4 L507.9 320.4 L504.6 320.4 L501.4 320.4 L498.1 320.4 L494.8 320.4 L491.6 320.4 L488.3 320.4 L485.0 320.4 L481.8 320.4 L478.5 320.4 L475.3 320.4 L472.0 320.4 L468.7 320.4 L465.5 320.4 L462.2 320.4 L459.0 320.4 L455.7 320.4 L452.4 320.4 L449.2 320.4 L445.9 320.4 L442.7 320.4 L439.4 320.4 L436.1 320.4 L432.9 320.4 L429.6 320.4 L426.4 320.4 L423.1 320.4 L419.8 320.4 L416.6 320.4 L413.3 320.4 L410.1 320.4 L406.8 320.4 L403.5 320.4 L400.3 320.4 L397.0 320.4 L393.8 320.4 L390.5 320.4 L387.2 320.4 L384.0 320.4 L380.7 320.4 L377.5 320.4 L374.2 320.4 L370.9 320.4 L367.7 320.4 L364.4 320.4 L361.1 320.4 L357.9 320.4 L354.6 320.4 L351.4 320.4 L348.1 320.4 L344.8 320.4 L341.6 320.4 L338.3 320.4 L335.1 320.4 L331.8 320.4 L328.5 320.4 L325.3 320.4 L322.0 320.4 L318.8 320.4 L315.5 320.4"/><path d="M1469.3 271.5 L1466.2 271.5 L1463.0 271.5 L1459.9 271.5 L1456.7 271.5 L1453.6 271.5 L1450.4 271.5 L1447.3 271.5 L1444.1 271.5 L1441.0 271.5 L1437.8 271.5 L1434.7 271.5 L1431.5 271.5 L1428.4 271.5 L1425.2 271.5 L1422.1 271.5 L1418.9 271.5 L1415.8 271.5 L1412.6 271.5 L1409.5 271.5 L1406.3 271.5 L1403.2 271.5 L1400.0 271.5 L1396.9 271.5 L1393.7 271.5 L1390.6 271.5 L1387.4 271.5 L1384.3 271.5 L1381.1 271.5 L1378.0 271.5 L1374.8 271.5 L1371.7 271.5 L1368.5 271.5 L1365.4 271.5 L1362.2 271.5 L1359.1 271.5 L1355.9 271.5 L1352.8 271.5 L1349.6 271.5 L1346.5 271.5 L1343.3 271.5 L1340.2 271.5 L1337.0 271.5 L1333.9 271.5 L1330.7 271.5 L1327.6 271.5 L1324.4 271.5 L1321.3 271.5 L1318.1 271.5 L1315.0 271.5 L1311.8 271.5 L1308.7 271.5 L1305.5 271.5 L1302.4 271.5 L1299.2 271.5 L1296.1 271.5 L1292.9 271.5 L1289.8 271.5 L1286.6 271.5 L1283.5 271.5 L1280.3 271.5 L1277.2 271.5 L1274.0 271.5 L1270.9 271.5 L1267.7 271.5 L1264.6 271.5 L1261.4 271.5 L1258.3 271.5 L1255.1 271.5 L1252.0 271.5 L1248.8 271.5 L1245.7 271.5 L1242.5 271.5 L1239.4 271.5 L1236.2 271.5 L1233.1 271.5 L1229.9 271.5 L1226.8 271.5 L1223.6 271.5 L1220.5 271.5 L1217.3 271.5 L1214.2 271.5 L1211.0 271.5 L1207.9 271.5 L1204.7 271.5 L1201.6 271.5 L1198.4 271.5 L1195.3 271.5 L1192.1 271.5 L1189.0 271.5 L1185.9 271.5 L1182.7 271.5 L1179.6 271.5 L1176.4 271.5 L1173.3 271.5 L1170.1 271.5 L1167.0 271.5 L1163.8 271.5 L1160.7 271.5 L1157.5 271.5 L1154.4 271.5 L1151.2 271.5 L1148.1 271.5 L1144.9 271.5 L1141.8 271.5 L1138.6 271.5 L1135.5 271.5 L1132.3 271.5 L1129.2 271.5 L1126.0 271.5 L1122.9 271.5 L1119.7 271.5 L1116.6 271.5 L1113.4 271.5 L1110.3 271.5 L1107.1 271.5 L1104.0 271.5 L1100.8 271.5 L1097.7 271.5 L1094.5 271.5 L1091.4 271.5 L1088.2 271.5 L1085.1 271.5 L1081.9 271.5 L1078.8 271.5 L1075.6 271.5 L1072.5 271.5 L1069.3 271.5 L1066.2 271.5 L1063.0 271.5 L1059.9 271.5 L1056.7 271.5 L1053.6 271.5 L1050.4 271.5 L1047.3 271.5 L1044.1 271.5 L1041.0 271.5 L1037.8 271.5 L1034.7 271.5 L1031.5 271.5 L1028.4 271.5 L1025.2 271.5 L1022.1 271.5 L1018.9 271.5 L1015.8 271.5 L1012.6 271.5 L1009.5 271.5 L1006.3 271.5 L1003.2 271.5 L1000.0 271.5 L996.9 271.5 L993.7 271.5 L990.6 271.5 L987.4 271.5 L984.3 271.5 L981.1 271.5 L978.0 271.5 L974.8 271.5 L971.7 271.5 L968.5 271.5 L965.4 271.5 L962.2 271.5 L959.1 271.5 L955.9 271.5 L952.8 271.5 L949.6 271.5 L946.5 271.5 L943.3 271.5 L940.2 271.5 L937.0 271.5 L933.9 271.5 L930.7 271.5 L927.6 271.5 L924.4 271.5 L921.3 271.5 L918.1 271.5 L915.0 271.5 L911.8 271.5 L908.7 271.5 L905.5 271.5 L902.4 271.5 L899.3 271.5 L896.1 271.5 L893.0 271.5 L889.8 271.5 L886.7 271.5 L883.5 271.5 L880.4 271.5 L877.2 271.5 L874.1 271.5 L870.9 271.5 L867.8 271.5 L864.6 271.5 L861.5 271.5 L858.3 271.5 L855.2 271.5 L852.0 271.5 L848.9 271.5 L845.7 271.5 L842.6 271.5 L839.4 271.5 L836.3 271.5 L833.1 271.5 L830.0 271.5 L826.8 271.5 L823.7 271.5 L820.5 271.5 L817.4 271.5 L814.2 271.5 L811.1 271.5 L807.9 271.5 L804.8 271.5 L801.6 271.5 L798.5 271.5 L795.3 271.5 L792.2 271.5 L789.0 271.5 L785.9 271.5 L782.7 271.5 L779.6 271.5 L776.4 271.5 L773.3 271.5 L770.1 271.5 L767.0 271.5 L763.8 271.5 L760.7 271.5 L757.5 271.5 L754.4 271.5 L751.2 271.5 L748.1 271.5 L744.9 271.5 L741.8 271.5 L738.6 271.5 L735.5 271.5 L732.3 271.5 L729.2 271.5 L726.0 271.5 L722.9 271.5 L719.7 271.5 L716.6 271.5 L713.4 271.5 L710.3 271.5 L707.1 271.5 L704.0 271.5 L700.8 271.5 L697.7 271.5 L694.5 271.5 L691.4 271.5 L688.2 271.5 L685.1 271.5 L681.9 271.5 L678.8 271.5 L675.6 271.5 L672.5 271.5 L669.3 271.5 L666.2 271.5 L663.0 271.5 L659.9 271.5 L656.7 271.5 L653.6 271.5 L650.4 271.5 L647.3 271.5 L644.1 271.5 L641.0 271.5 L637.8 271.5 L634.7 271.5 L631.5 271.5 L628.4 271.5 L625.2 271.5 L622.1 271.5 L618.9 271.5 L615.8 271.5 L612.7 271.5 L609.5 271.5 L606.4 271.5 L603.2 271.5 L600.1 271.5 L596.9 271.5 L593.8 271.5 L590.6 271.5 L587.5 271.5 L584.3 271.5 L581.2 271.5 L578.0 271.5 L574.9 271.5 L571.7 271.5 L568.6 271.5 L565.4 271.5 L562.3 271.5 L559.1 271.5 L556.0 271.5 L552.8 271.5 L549.7 271.5 L546.5 271.5 L543.4 271.5 L540.2 271.5 L537.1 271.5 L533.9 271.5 L530.8 271.5 L527.6 271.5 L524.5 271.5 L521.3 271.5 L518.2 271.5 L515.0 271.5 L511.9 271.5 L508.7 271.5 L505.6 271.5 L502.4 271.5 L499.3 271.5 L496.1 271.5 L493.0 271.5 L489.8 271.5 L486.7 271.5 L483.5 271.5 L480.4 271.5 L477.2 271.5 L474.1 271.5 L470.9 271.5 L467.8 271.5 L464.6 271.5 L461.5 271.5 L458.3 271.5 L455.2 271.5 L452.0 271.5 L448.9 271.5 L445.7 271.5 L442.6 271.5 L439.4 271.5 L436.3 271.5 L433.1 271.5 L430.0 271.5 L426.8 271.5 L423.7 271.5 L420.5 271.5 L417.4 271.5 L414.2 271.5 L411.1 271.5 L407.9 271.5 L404.8 271.5 L401.6 271.5 L398.5 271.5 L395.3 271.5 L392.2 271.5 L389.0 271.5 L385.9 271.5 L382.7 271.5 L379.6 271.5 L376.4 271.5 L373.3 271.5 L370.1 271.5 L367.0 271.5 L363.8 271.5 L360.7 271.5 L357.5 271.5 L354.4 271.5 L351.2 271.5 L348.1 271.5 L344.9 271.5 L341.8 271.5 L338.6 271.5 L335.5 271.5"/><path d="M1410.7 222.6 L1407.8 222.6 L1405.0 222.6 L1402.2 222.6 L1399.4 222.6 L1396.6 222.6 L1393.7 222.6 L1390.9 222.6 L1388.1 222.6 L1385.3 222.6 L1382.4 222.6 L1379.6 222.6 L1376.8 222.6 L1374.0 222.6 L1371.1 222.6 L1368.3 222.6 L1365.5 222.6 L1362.7 222.6 L1359.8 222.6 L1357.0 222.6 L1354.2 222.6 L1351.4 222.6 L1348.5 222.6 L1345.7 222.6 L1342.9 222.6 L1340.1 222.6 L1337.3 222.6 L1334.4 222.6 L1331.6 222.6 L1328.8 222.6 L1326.0 222.6 L1323.1 222.6 L1320.3 222.6 L1317.5 222.6 L1314.7 222.6 L1311.8 222.6 L1309.0 222.6 L1306.2 222.6 L1303.4 222.6 L1300.5 222.6 L1297.7 222.6 L1294.9 222.6 L1292.1 222.6 L1289.3 222.6 L1286.4 222.6 L1283.6 222.6 L1280.8 222.6 L1278.0 222.6 L1275.1 222.6 L1272.3 222.6 L1269.5 222.6 L1266.7 222.6 L1263.8 222.6 L1261.0 222.6 L1258.2 222.6 L1255.4 222.6 L1252.5 222.6 L1249.7 222.6 L1246.9 222.6 L1244.1 222.6 L1241.2 222.6 L1238.4 222.6 L1235.6 222.6 L1232.8 222.6 L1230.0 222.6 L1227.1 222.6 L1224.3 222.6 L1221.5 222.6 L1218.7 222.6 L1215.8 222.6 L1213.0 222.6 L1210.2 222.6 L1207.4 222.6 L1204.5 222.6 L1201.7 222.6 L1198.9 222.6 L1196.1 222.6 L1193.2 222.6 L1190.4 222.6 L1187.6 222.6 L1184.8 222.6 L1181.9 222.6 L1179.1 222.6 L1176.3 222.6 L1173.5 222.6 L1170.7 222.6 L1167.8 222.6 L1165.0 222.6 L1162.2 222.6 L1159.4 222.6 L1156.5 222.6 L1153.7 222.6 L1150.9 222.6 L1148.1 222.6 L1145.2 222.6 L1142.4 222.6 L1139.6 222.6 L1136.8 222.6 L1133.9 222.6 L1131.1 222.6 L1128.3 222.6 L1125.5 222.6 L1122.7 222.6 L1119.8 222.6 L1117.0 222.6 L1114.2 222.6 L1111.4 222.6 L1108.5 222.6 L1105.7 222.6 L1102.9 222.6 L1100.1 222.6 L1097.2 222.6 L1094.4 222.6 L1091.6 222.6 L1088.8 222.6 L1085.9 222.6 L1083.1 222.6 L1080.3 222.6 L1077.5 222.6 L1074.6 222.6 L1071.8 222.6 L1069.0 222.6 L1066.2 222.6 L1063.4 222.6 L1060.5 222.6 L1057.7 222.6 L1054.9 222.6 L1052.1 222.6 L1049.2 222.6 L1046.4 222.6 L1043.6 222.6 L1040.8 222.6 L1037.9 222.6 L1035.1 222.6 L1032.3 222.6 L1029.5 222.6 L1026.6 222.6 L1023.8 222.6 L1021.0 222.6 L1018.2 222.6 L1015.3 222.6 L1012.5 222.6 L1009.7 222.6 L1006.9 222.6 L1004.1 222.6 L1001.2 222.6 L998.4 222.6 L995.6 222.6 L992.8 222.6 L989.9 222.6 L987.1 222.6 L984.3 222.6 L981.5 222.6 L978.6 222.6 L975.8 222.6 L973.0 222.6 L970.2 222.6 L967.3 222.6 L964.5 222.6 L961.7 222.6 L958.9 222.6 L956.1 222.6 L953.2 222.6 L950.4 222.6 L947.6 222.6 L944.8 222.6 L941.9 222.6 L939.1 222.6 L936.3 222.6 L933.5 222.6 L930.6 222.6 L927.8 222.6 L925.0 222.6 L922.2 222.6 L919.3 222.6 L916.5 222.6 L913.7 222.6 L910.9 222.6 L908.0 222.6 L905.2 222.6 L902.4 222.6 L899.6 222.6 L896.8 222.6 L893.9 222.6 L891.1 222.6 L888.3 222.6 L885.5 222.6 L882.6 222.6 L879.8 222.6 L877.0 222.6 L874.2 222.6 L871.3 222.6 L868.5 222.6 L865.7 222.6 L862.9 222.6 L860.0 222.6 L857.2 222.6 L854.4 222.6 L851.6 222.6 L848.7 222.6 L845.9 222.6 L843.1 222.6 L840.3 222.6 L837.5 222.6 L834.6 222.6 L831.8 222.6 L829.0 222.6 L826.2 222.6 L823.3 222.6 L820.5 222.6 L817.7 222.6 L814.9 222.6 L812.0 222.6 L809.2 222.6 L806.4 222.6 L803.6 222.6 L800.7 222.6 L797.9 222.6 L795.1 222.6 L792.3 222.6 L789.5 222.6 L786.6 222.6 L783.8 222.6 L781.0 222.6 L778.2 222.6 L775.3 222.6 L772.5 222.6 L769.7 222.6 L766.9 222.6 L764.0 222.6 L761.2 222.6 L758.4 222.6 L755.6 222.6 L752.7 222.6 L749.9 222.6 L747.1 222.6 L744.3 222.6 L741.4 222.6 L738.6 222.6 L735.8 222.6 L733.0 222.6 L730.2 222.6 L727.3 222.6 L724.5 222.6 L721.7 222.6 L718.9 222.6 L716.0 222.6 L713.2 222.6 L710.4 222.6 L707.6 222.6 L704.7 222.6 L701.9 222.6 L699.1 222.6 L696.3 222.6 L693.4 222.6 L690.6 222.6 L687.8 222.6 L685.0 222.6 L682.1 222.6 L679.3 222.6 L676.5 222.6 L673.7 222.6 L670.9 222.6 L668.0 222.6 L665.2 222.6 L662.4 222.6 L659.6 222.6 L656.7 222.6 L653.9 222.6 L651.1 222.6 L648.3 222.6 L645.4 222.6 L642.6 222.6 L639.8 222.6 L637.0 222.6 L634.1 222.6 L631.3 222.6 L628.5 222.6 L625.7 222.6 L622.9 222.6 L620.0 222.6 L617.2 222.6 L614.4 222.6 L611.6 222.6 L608.7 222.6 L605.9 222.6 L603.1 222.6 L600.3 222.6 L597.4 222.6 L594.6 222.6 L591.8 222.6 L589.0 222.6 L586.1 222.6 L583.3 222.6 L580.5 222.6 L577.7 222.6 L574.8 222.6 L572.0 222.6 L569.2 222.6 L566.4 222.6 L563.6 222.6 L560.7 222.6 L557.9 222.6 L555.1 222.6 L552.3 222.6 L549.4 222.6 L546.6 222.6 L543.8 222.6 L541.0 222.6 L538.1 222.6 L535.3 222.6 L532.5 222.6 L529.7 222.6 L526.8 222.6 L524.0 222.6 L521.2 222.6 L518.4 222.6 L515.5 222.6 L512.7 222.6 L509.9 222.6 L507.1 222.6 L504.3 222.6 L501.4 222.6 L498.6 222.6 L495.8 222.6 L493.0 222.6 L490.1 222.6 L487.3 222.6 L484.5 222.6 L481.7 222.6 L478.8 222.6 L476.0 222.6 L473.2 222.6 L470.4 222.6 L467.5 222.6 L464.7 222.6 L461.9 222.6 L459.1 222.6 L456.3 222.6 L453.4 222.6 L450.6 222.6 L447.8 222.6 L445.0 222.6 L442.1 222.6 L439.3 222.6 L436.5 222.6 L433.7 222.6 L430.8 222.6 L428.0 222.6 L425.2 222.6 L422.4 222.6 L419.5 222.6 L416.7 222.6 L413.9 222.6 L411.1 222.6 L408.2 222.6 L405.4 222.6 L402.6 222.6 L399.8 222.6 L397.0 222.6 L394.1 222.6"/><path d="M1317.4 173.7 L1315.1 173.7 L1312.8 173.7 L1310.5 173.7 L1308.2 173.7 L1305.9 173.7 L1303.6 173.7 L1301.3 173.7 L1299.0 173.7 L1296.7 173.7 L1294.3 173.7 L1292.0 173.7 L1289.7 173.7 L1287.4 173.7 L1285.1 173.7 L1282.8 173.7 L1280.5 173.7 L1278.2 173.7 L1275.9 173.7 L1273.6 173.7 L1271.3 173.7 L1269.0 173.7 L1266.7 173.7 L1264.4 173.7 L1262.1 173.7 L1259.8 173.7 L1257.5 173.7 L1255.2 173.7 L1252.8 173.7 L1250.5 173.7 L1248.2 173.7 L1245.9 173.7 L1243.6 173.7 L1241.3 173.7 L1239.0 173.7 L1236.7 173.7 L1234.4 173.7 L1232.1 173.7 L1229.8 173.7 L1227.5 173.7 L1225.2 173.7 L1222.9 173.7 L1220.6 173.7 L1218.3 173.7 L1216.0 173.7 L1213.7 173.7 L1211.3 173.7 L1209.0 173.7 L1206.7 173.7 L1204.4 173.7 L1202.1 173.7 L1199.8 173.7 L1197.5 173.7 L1195.2 173.7 L1192.9 173.7 L1190.6 173.7 L1188.3 173.7 L1186.0 173.7 L1183.7 173.7 L1181.4 173.7 L1179.1 173.7 L1176.8 173.7 L1174.5 173.7 L1172.2 173.7 L1169.8 173.7 L1167.5 173.7 L1165.2 173.7 L1162.9 173.7 L1160.6 173.7 L1158.3 173.7 L1156.0 173.7 L1153.7 173.7 L1151.4 173.7 L1149.1 173.7 L1146.8 173.7 L1144.5 173.7 L1142.2 173.7 L1139.9 173.7 L1137.6 173.7 L1135.3 173.7 L1133.0 173.7 L1130.7 173.7 L1128.3 173.7 L1126.0 173.7 L1123.7 173.7 L1121.4 173.7 L1119.1 173.7 L1116.8 173.7 L1114.5 173.7 L1112.2 173.7 L1109.9 173.7 L1107.6 173.7 L1105.3 173.7 L1103.0 173.7 L1100.7 173.7 L1098.4 173.7 L1096.1 173.7 L1093.8 173.7 L1091.5 173.7 L1089.2 173.7 L1086.8 173.7 L1084.5 173.7 L1082.2 173.7 L1079.9 173.7 L1077.6 173.7 L1075.3 173.7 L1073.0 173.7 L1070.7 173.7 L1068.4 173.7 L1066.1 173.7 L1063.8 173.7 L1061.5 173.7 L1059.2 173.7 L1056.9 173.7 L1054.6 173.7 L1052.3 173.7 L1050.0 173.7 L1047.7 173.7 L1045.3 173.7 L1043.0 173.7 L1040.7 173.7 L1038.4 173.7 L1036.1 173.7 L1033.8 173.7 L1031.5 173.7 L1029.2 173.7 L1026.9 173.7 L1024.6 173.7 L1022.3 173.7 L1020.0 173.7 L1017.7 173.7 L1015.4 173.7 L1013.1 173.7 L1010.8 173.7 L1008.5 173.7 L1006.2 173.7 L1003.8 173.7 L1001.5 173.7 L999.2 173.7 L996.9 173.7 L994.6 173.7 L992.3 173.7 L990.0 173.7 L987.7 173.7 L985.4 173.7 L983.1 173.7 L980.8 173.7 L978.5 173.7 L976.2 173.7 L973.9 173.7 L971.6 173.7 L969.3 173.7 L967.0 173.7 L964.7 173.7 L962.3 173.7 L960.0 173.7 L957.7 173.7 L955.4 173.7 L953.1 173.7 L950.8 173.7 L948.5 173.7 L946.2 173.7 L943.9 173.7 L941.6 173.7 L939.3 173.7 L937.0 173.7 L934.7 173.7 L932.4 173.7 L930.1 173.7 L927.8 173.7 L925.5 173.7 L923.2 173.7 L920.8 173.7 L918.5 173.7 L916.2 173.7 L913.9 173.7 L911.6 173.7 L909.3 173.7 L907.0 173.7 L904.7 173.7 L902.4 173.7 L900.1 173.7 L897.8 173.7 L895.5 173.7 L893.2 173.7 L890.9 173.7 L888.6 173.7 L886.3 173.7 L884.0 173.7 L881.6 173.7 L879.3 173.7 L877.0 173.7 L874.7 173.7 L872.4 173.7 L870.1 173.7 L867.8 173.7 L865.5 173.7 L863.2 173.7 L860.9 173.7 L858.6 173.7 L856.3 173.7 L854.0 173.7 L851.7 173.7 L849.4 173.7 L847.1 173.7 L844.8 173.7 L842.5 173.7 L840.1 173.7 L837.8 173.7 L835.5 173.7 L833.2 173.7 L830.9 173.7 L828.6 173.7 L826.3 173.7 L824.0 173.7 L821.7 173.7 L819.4 173.7 L817.1 173.7 L814.8 173.7 L812.5 173.7 L810.2 173.7 L807.9 173.7 L805.6 173.7 L803.3 173.7 L801.0 173.7 L798.6 173.7 L796.3 173.7 L794.0 173.7 L791.7 173.7 L789.4 173.7 L787.1 173.7 L784.8 173.7 L782.5 173.7 L780.2 173.7 L777.9 173.7 L775.6 173.7 L773.3 173.7 L771.0 173.7 L768.7 173.7 L766.4 173.7 L764.1 173.7 L761.8 173.7 L759.5 173.7 L757.1 173.7 L754.8 173.7 L752.5 173.7 L750.2 173.7 L747.9 173.7 L745.6 173.7 L743.3 173.7 L741.0 173.7 L738.7 173.7 L736.4 173.7 L734.1 173.7 L731.8 173.7 L729.5 173.7 L727.2 173.7 L724.9 173.7 L722.6 173.7 L720.3 173.7 L718.0 173.7 L715.6 173.7 L713.3 173.7 L711.0 173.7 L708.7 173.7 L706.4 173.7 L704.1 173.7 L701.8 173.7 L699.5 173.7 L697.2 173.7 L694.9 173.7 L692.6 173.7 L690.3 173.7 L688.0 173.7 L685.7 173.7 L683.4 173.7 L681.1 173.7 L678.8 173.7 L676.5 173.7 L674.1 173.7 L671.8 173.7 L669.5 173.7 L667.2 173.7 L664.9 173.7 L662.6 173.7 L660.3 173.7 L658.0 173.7 L655.7 173.7 L653.4 173.7 L651.1 173.7 L648.8 173.7 L646.5 173.7 L644.2 173.7 L641.9 173.7 L639.6 173.7 L637.3 173.7 L635.0 173.7 L632.6 173.7 L630.3 173.7 L628.0 173.7 L625.7 173.7 L623.4 173.7 L621.1 173.7 L618.8 173.7 L616.5 173.7 L614.2 173.7 L611.9 173.7 L609.6 173.7 L607.3 173.7 L605.0 173.7 L602.7 173.7 L600.4 173.7 L598.1 173.7 L595.8 173.7 L593.5 173.7 L591.1 173.7 L588.8 173.7 L586.5 173.7 L584.2 173.7 L581.9 173.7 L579.6 173.7 L577.3 173.7 L575.0 173.7 L572.7 173.7 L570.4 173.7 L568.1 173.7 L565.8 173.7 L563.5 173.7 L561.2 173.7 L558.9 173.7 L556.6 173.7 L554.3 173.7 L552.0 173.7 L549.6 173.7 L547.3 173.7 L545.0 173.7 L542.7 173.7 L540.4 173.7 L538.1 173.7 L535.8 173.7 L533.5 173.7 L531.2 173.7 L528.9 173.7 L526.6 173.7 L524.3 173.7 L522.0 173.7 L519.7 173.7 L517.4 173.7 L515.1 173.7 L512.8 173.7 L510.5 173.7 L508.1 173.7 L505.8 173.7 L503.5 173.7 L501.2 173.7 L498.9 173.7 L496.6 173.7 L494.3 173.7 L492.0 173.7 L489.7 173.7 L487.4 173.7"/><path d="M1195.8 124.8 L1194.2 124.8 L1192.6 124.8 L1191.0 124.8 L1189.3 124.8 L1187.7 124.8 L1186.1 124.8 L1184.4 124.8 L1182.8 124.8 L1181.2 124.8 L1179.5 124.8 L1177.9 124.8 L1176.3 124.8 L1174.7 124.8 L1173.0 124.8 L1171.4 124.8 L1169.8 124.8 L1168.1 124.8 L1166.5 124.8 L1164.9 124.8 L1163.2 124.8 L1161.6 124.8 L1160.0 124.8 L1158.4 124.8 L1156.7 124.8 L1155.1 124.8 L1153.5 124.8 L1151.8 124.8 L1150.2 124.8 L1148.6 124.8 L1146.9 124.8 L1145.3 124.8 L1143.7 124.8 L1142.1 124.8 L1140.4 124.8 L1138.8 124.8 L1137.2 124.8 L1135.5 124.8 L1133.9 124.8 L1132.3 124.8 L1130.6 124.8 L1129.0 124.8 L1127.4 124.8 L1125.7 124.8 L1124.1 124.8 L1122.5 124.8 L1120.9 124.8 L1119.2 124.8 L1117.6 124.8 L1116.0 124.8 L1114.3 124.8 L1112.7 124.8 L1111.1 124.8 L1109.4 124.8 L1107.8 124.8 L1106.2 124.8 L1104.6 124.8 L1102.9 124.8 L1101.3 124.8 L1099.7 124.8 L1098.0 124.8 L1096.4 124.8 L1094.8 124.8 L1093.1 124.8 L1091.5 124.8 L1089.9 124.8 L1088.3 124.8 L1086.6 124.8 L1085.0 124.8 L1083.4 124.8 L1081.7 124.8 L1080.1 124.8 L1078.5 124.8 L1076.8 124.8 L1075.2 124.8 L1073.6 124.8 L1071.9 124.8 L1070.3 124.8 L1068.7 124.8 L1067.1 124.8 L1065.4 124.8 L1063.8 124.8 L1062.2 124.8 L1060.5 124.8 L1058.9 124.8 L1057.3 124.8 L1055.6 124.8 L1054.0 124.8 L1052.4 124.8 L1050.8 124.8 L1049.1 124.8 L1047.5 124.8 L1045.9 124.8 L1044.2 124.8 L1042.6 124.8 L1041.0 124.8 L1039.3 124.8 L1037.7 124.8 L1036.1 124.8 L1034.5 124.8 L1032.8 124.8 L1031.2 124.8 L1029.6 124.8 L1027.9 124.8 L1026.3 124.8 L1024.7 124.8 L1023.0 124.8 L1021.4 124.8 L1019.8 124.8 L1018.1 124.8 L1016.5 124.8 L1014.9 124.8 L1013.3 124.8 L1011.6 124.8 L1010.0 124.8 L1008.4 124.8 L1006.7 124.8 L1005.1 124.8 L1003.5 124.8 L1001.8 124.8 L1000.2 124.8 L998.6 124.8 L997.0 124.8 L995.3 124.8 L993.7 124.8 L992.1 124.8 L990.4 124.8 L988.8 124.8 L987.2 124.8 L985.5 124.8 L983.9 124.8 L982.3 124.8 L980.7 124.8 L979.0 124.8 L977.4 124.8 L975.8 124.8 L974.1 124.8 L972.5 124.8 L970.9 124.8 L969.2 124.8 L967.6 124.8 L966.0 124.8 L964.4 124.8 L962.7 124.8 L961.1 124.8 L959.5 124.8 L957.8 124.8 L956.2 124.8 L954.6 124.8 L952.9 124.8 L951.3 124.8 L949.7 124.8 L948.0 124.8 L946.4 124.8 L944.8 124.8 L943.2 124.8 L941.5 124.8 L939.9 124.8 L938.3 124.8 L936.6 124.8 L935.0 124.8 L933.4 124.8 L931.7 124.8 L930.1 124.8 L928.5 124.8 L926.9 124.8 L925.2 124.8 L923.6 124.8 L922.0 124.8 L920.3 124.8 L918.7 124.8 L917.1 124.8 L915.4 124.8 L913.8 124.8 L912.2 124.8 L910.6 124.8 L908.9 124.8 L907.3 124.8 L905.7 124.8 L904.0 124.8 L902.4 124.8 L900.8 124.8 L899.1 124.8 L897.5 124.8 L895.9 124.8 L894.2 124.8 L892.6 124.8 L891.0 124.8 L889.4 124.8 L887.7 124.8 L886.1 124.8 L884.5 124.8 L882.8 124.8 L881.2 124.8 L879.6 124.8 L877.9 124.8 L876.3 124.8 L874.7 124.8 L873.1 124.8 L871.4 124.8 L869.8 124.8 L868.2 124.8 L866.5 124.8 L864.9 124.8 L863.3 124.8 L861.6 124.8 L860.0 124.8 L858.4 124.8 L856.8 124.8 L855.1 124.8 L853.5 124.8 L851.9 124.8 L850.2 124.8 L848.6 124.8 L847.0 124.8 L845.3 124.8 L843.7 124.8 L842.1 124.8 L840.4 124.8 L838.8 124.8 L837.2 124.8 L835.6 124.8 L833.9 124.8 L832.3 124.8 L830.7 124.8 L829.0 124.8 L827.4 124.8 L825.8 124.8 L824.1 124.8 L822.5 124.8 L820.9 124.8 L819.3 124.8 L817.6 124.8 L816.0 124.8 L814.4 124.8 L812.7 124.8 L811.1 124.8 L809.5 124.8 L807.8 124.8 L806.2 124.8 L804.6 124.8 L803.0 124.8 L801.3 124.8 L799.7 124.8 L798.1 124.8 L796.4 124.8 L794.8 124.8 L793.2 124.8 L791.5 124.8 L789.9 124.8 L788.3 124.8 L786.7 124.8 L785.0 124.8 L783.4 124.8 L781.8 124.8 L780.1 124.8 L778.5 124.8 L776.9 124.8 L775.2 124.8 L773.6 124.8 L772.0 124.8 L770.3 124.8 L768.7 124.8 L767.1 124.8 L765.5 124.8 L763.8 124.8 L762.2 124.8 L760.6 124.8 L758.9 124.8 L757.3 124.8 L755.7 124.8 L754.0 124.8 L752.4 124.8 L750.8 124.8 L749.2 124.8 L747.5 124.8 L745.9 124.8 L744.3 124.8 L742.6 124.8 L741.0 124.8 L739.4 124.8 L737.7 124.8 L736.1 124.8 L734.5 124.8 L732.9 124.8 L731.2 124.8 L729.6 124.8 L728.0 124.8 L726.3 124.8 L724.7 124.8 L723.1 124.8 L721.4 124.8 L719.8 124.8 L718.2 124.8 L716.5 124.8 L714.9 124.8 L713.3 124.8 L711.7 124.8 L710.0 124.8 L708.4 124.8 L706.8 124.8 L705.1 124.8 L703.5 124.8 L701.9 124.8 L700.2 124.8 L698.6 124.8 L697.0 124.8 L695.4 124.8 L693.7 124.8 L692.1 124.8 L690.5 124.8 L688.8 124.8 L687.2 124.8 L685.6 124.8 L683.9 124.8 L682.3 124.8 L680.7 124.8 L679.1 124.8 L677.4 124.8 L675.8 124.8 L674.2 124.8 L672.5 124.8 L670.9 124.8 L669.3 124.8 L667.6 124.8 L666.0 124.8 L664.4 124.8 L662.7 124.8 L661.1 124.8 L659.5 124.8 L657.9 124.8 L656.2 124.8 L654.6 124.8 L653.0 124.8 L651.3 124.8 L649.7 124.8 L648.1 124.8 L646.4 124.8 L644.8 124.8 L643.2 124.8 L641.6 124.8 L639.9 124.8 L638.3 124.8 L636.7 124.8 L635.0 124.8 L633.4 124.8 L631.8 124.8 L630.1 124.8 L628.5 124.8 L626.9 124.8 L625.3 124.8 L623.6 124.8 L622.0 124.8 L620.4 124.8 L618.7 124.8 L617.1 124.8 L615.5 124.8 L613.8 124.8 L612.2 124.8 L610.6 124.8 L608.9 124.8"/><path d="M1054.3 75.9 L1053.5 75.9 L1052.6 75.9 L1051.8 75.9 L1050.9 75.9 L1050.1 75.9 L1049.2 75.9 L1048.4 75.9 L1047.5 75.9 L1046.7 75.9 L1045.9 75.9 L1045.0 75.9 L1044.2 75.9 L1043.3 75.9 L1042.5 75.9 L1041.6 75.9 L1040.8 75.9 L1040.0 75.9 L1039.1 75.9 L1038.3 75.9 L1037.4 75.9 L1036.6 75.9 L1035.7 75.9 L1034.9 75.9 L1034.0 75.9 L1033.2 75.9 L1032.4 75.9 L1031.5 75.9 L1030.7 75.9 L1029.8 75.9 L1029.0 75.9 L1028.1 75.9 L1027.3 75.9 L1026.5 75.9 L1025.6 75.9 L1024.8 75.9 L1023.9 75.9 L1023.1 75.9 L1022.2 75.9 L1021.4 75.9 L1020.5 75.9 L1019.7 75.9 L1018.9 75.9 L1018.0 75.9 L1017.2 75.9 L1016.3 75.9 L1015.5 75.9 L1014.6 75.9 L1013.8 75.9 L1013.0 75.9 L1012.1 75.9 L1011.3 75.9 L1010.4 75.9 L1009.6 75.9 L1008.7 75.9 L1007.9 75.9 L1007.0 75.9 L1006.2 75.9 L1005.4 75.9 L1004.5 75.9 L1003.7 75.9 L1002.8 75.9 L1002.0 75.9 L1001.1 75.9 L1000.3 75.9 L999.4 75.9 L998.6 75.9 L997.8 75.9 L996.9 75.9 L996.1 75.9 L995.2 75.9 L994.4 75.9 L993.5 75.9 L992.7 75.9 L991.9 75.9 L991.0 75.9 L990.2 75.9 L989.3 75.9 L988.5 75.9 L987.6 75.9 L986.8 75.9 L985.9 75.9 L985.1 75.9 L984.3 75.9 L983.4 75.9 L982.6 75.9 L981.7 75.9 L980.9 75.9 L980.0 75.9 L979.2 75.9 L978.4 75.9 L977.5 75.9 L976.7 75.9 L975.8 75.9 L975.0 75.9 L974.1 75.9 L973.3 75.9 L972.4 75.9 L971.6 75.9 L970.8 75.9 L969.9 75.9 L969.1 75.9 L968.2 75.9 L967.4 75.9 L966.5 75.9 L965.7 75.9 L964.8 75.9 L964.0 75.9 L963.2 75.9 L962.3 75.9 L961.5 75.9 L960.6 75.9 L959.8 75.9 L958.9 75.9 L958.1 75.9 L957.3 75.9 L956.4 75.9 L955.6 75.9 L954.7 75.9 L953.9 75.9 L953.0 75.9 L952.2 75.9 L951.3 75.9 L950.5 75.9 L949.7 75.9 L948.8 75.9 L948.0 75.9 L947.1 75.9 L946.3 75.9 L945.4 75.9 L944.6 75.9 L943.8 75.9 L942.9 75.9 L942.1 75.9 L941.2 75.9 L940.4 75.9 L939.5 75.9 L938.7 75.9 L937.8 75.9 L937.0 75.9 L936.2 75.9 L935.3 75.9 L934.5 75.9 L933.6 75.9 L932.8 75.9 L931.9 75.9 L931.1 75.9 L930.2 75.9 L929.4 75.9 L928.6 75.9 L927.7 75.9 L926.9 75.9 L926.0 75.9 L925.2 75.9 L924.3 75.9 L923.5 75.9 L922.7 75.9 L921.8 75.9 L921.0 75.9 L920.1 75.9 L919.3 75.9 L918.4 75.9 L917.6 75.9 L916.7 75.9 L915.9 75.9 L915.1 75.9 L914.2 75.9 L913.4 75.9 L912.5 75.9 L911.7 75.9 L910.8 75.9 L910.0 75.9 L909.2 75.9 L908.3 75.9 L907.5 75.9 L906.6 75.9 L905.8 75.9 L904.9 75.9 L904.1 75.9 L903.2 75.9 L902.4 75.9 L901.6 75.9 L900.7 75.9 L899.9 75.9 L899.0 75.9 L898.2 75.9 L897.3 75.9 L896.5 75.9 L895.6 75.9 L894.8 75.9 L894.0 75.9 L893.1 75.9 L892.3 75.9 L891.4 75.9 L890.6 75.9 L889.7 75.9 L888.9 75.9 L888.1 75.9 L887.2 75.9 L886.4 75.9 L885.5 75.9 L884.7 75.9 L883.8 75.9 L883.0 75.9 L882.1 75.9 L881.3 75.9 L880.5 75.9 L879.6 75.9 L878.8 75.9 L877.9 75.9 L877.1 75.9 L876.2 75.9 L875.4 75.9 L874.6 75.9 L873.7 75.9 L872.9 75.9 L872.0 75.9 L871.2 75.9 L870.3 75.9 L869.5 75.9 L868.6 75.9 L867.8 75.9 L867.0 75.9 L866.1 75.9 L865.3 75.9 L864.4 75.9 L863.6 75.9 L862.7 75.9 L861.9 75.9 L861.0 75.9 L860.2 75.9 L859.4 75.9 L858.5 75.9 L857.7 75.9 L856.8 75.9 L856.0 75.9 L855.1 75.9 L854.3 75.9 L853.5 75.9 L852.6 75.9 L851.8 75.9 L850.9 75.9 L850.1 75.9 L849.2 75.9 L848.4 75.9 L847.5 75.9 L846.7 75.9 L845.9 75.9 L845.0 75.9 L844.2 75.9 L843.3 75.9 L842.5 75.9 L841.6 75.9 L840.8 75.9 L840.0 75.9 L839.1 75.9 L838.3 75.9 L837.4 75.9 L836.6 75.9 L835.7 75.9 L834.9 75.9 L834.0 75.9 L833.2 75.9 L832.4 75.9 L831.5 75.9 L830.7 75.9 L829.8 75.9 L829.0 75.9 L828.1 75.9 L827.3 75.9 L826.4 75.9 L825.6 75.9 L824.8 75.9 L823.9 75.9 L823.1 75.9 L822.2 75.9 L821.4 75.9 L820.5 75.9 L819.7 75.9 L818.9 75.9 L818.0 75.9 L817.2 75.9 L816.3 75.9 L815.5 75.9 L814.6 75.9 L813.8 75.9 L812.9 75.9 L812.1 75.9 L811.3 75.9 L810.4 75.9 L809.6 75.9 L808.7 75.9 L807.9 75.9 L807.0 75.9 L806.2 75.9 L805.4 75.9 L804.5 75.9 L803.7 75.9 L802.8 75.9 L802.0 75.9 L801.1 75.9 L800.3 75.9 L799.4 75.9 L798.6 75.9 L797.8 75.9 L796.9 75.9 L796.1 75.9 L795.2 75.9 L794.4 75.9 L793.5 75.9 L792.7 75.9 L791.8 75.9 L791.0 75.9 L790.2 75.9 L789.3 75.9 L788.5 75.9 L787.6 75.9 L786.8 75.9 L785.9 75.9 L785.1 75.9 L784.3 75.9 L783.4 75.9 L782.6 75.9 L781.7 75.9 L780.9 75.9 L780.0 75.9 L779.2 75.9 L778.3 75.9 L777.5 75.9 L776.7 75.9 L775.8 75.9 L775.0 75.9 L774.1 75.9 L773.3 75.9 L772.4 75.9 L771.6 75.9 L770.8 75.9 L769.9 75.9 L769.1 75.9 L768.2 75.9 L767.4 75.9 L766.5 75.9 L765.7 75.9 L764.8 75.9 L764.0 75.9 L763.2 75.9 L762.3 75.9 L761.5 75.9 L760.6 75.9 L759.8 75.9 L758.9 75.9 L758.1 75.9 L757.3 75.9 L756.4 75.9 L755.6 75.9 L754.7 75.9 L753.9 75.9 L753.0 75.9 L752.2 75.9 L751.3 75.9 L750.5 75.9"/></g>
<text x="889.7" y="24.7" font-family='"Liberation Sans", sans-serif' font-size="10.3" fill="#8a8a8a" text-anchor="start" textLength="20.5" lengthAdjust="spacingAndGlyphs">+90</text>
<rect x="912.5" y="16.8" width="1.8" height="1.8" fill="#8a8a8a"/>
<text x="889.7" y="122.5" font-family='"Liberation Sans", sans-serif' font-size="10.3" fill="#8a8a8a" text-anchor="start" textLength="20.5" lengthAdjust="spacingAndGlyphs">+60</text>
<rect x="912.5" y="114.6" width="1.8" height="1.8" fill="#8a8a8a"/>
<text x="889.7" y="220.3" font-family='"Liberation Sans", sans-serif' font-size="10.3" fill="#8a8a8a" text-anchor="start" textLength="20.5" lengthAdjust="spacingAndGlyphs">+30</text>
<rect x="912.5" y="212.4" width="1.8" height="1.8" fill="#8a8a8a"/>
<text x="889.7" y="428.5" font-family='"Liberation Sans", sans-serif' font-size="10.3" fill="#8a8a8a" text-anchor="start" textLength="20.5" lengthAdjust="spacingAndGlyphs">−30</text>
<rect x="912.5" y="420.6" width="1.8" height="1.8" fill="#8a8a8a"/>
<text x="889.7" y="526.3" font-family='"Liberation Sans", sans-serif' font-size="10.3" fill="#8a8a8a" text-anchor="start" textLength="20.5" lengthAdjust="spacingAndGlyphs">−60</text>
<rect x="912.5" y="518.4" width="1.8" height="1.8" fill="#8a8a8a"/>
<text x="889.7" y="624.1" font-family='"Liberation Sans", sans-serif' font-size="10.3" fill="#8a8a8a" text-anchor="start" textLength="20.5" lengthAdjust="spacingAndGlyphs">−90</text>
<rect x="912.5" y="616.2" width="1.8" height="1.8" fill="#8a8a8a"/>
<text x="1474.0" y="330.2" font-family='"Liberation Sans", sans-serif' font-size="10.3" fill="#8a8a8a" text-anchor="start" textLength="26.7" lengthAdjust="spacingAndGlyphs">+180</text>
<rect x="1503.0" y="322.4" width="1.8" height="1.8" fill="#8a8a8a"/>
<text x="1376.2" y="330.2" font-family='"Liberation Sans", sans-serif' font-size="10.3" fill="#8a8a8a" text-anchor="start" textLength="26.7" lengthAdjust="spacingAndGlyphs">+210</text>
<rect x="1405.2" y="322.4" width="1.8" height="1.8" fill="#8a8a8a"/>
<text x="1278.4" y="330.2" font-family='"Liberation Sans", sans-serif' font-size="10.3" fill="#8a8a8a" text-anchor="start" textLength="26.7" lengthAdjust="spacingAndGlyphs">+240</text>
<rect x="1307.4" y="322.4" width="1.8" height="1.8" fill="#8a8a8a"/>
<text x="1180.6" y="330.2" font-family='"Liberation Sans", sans-serif' font-size="10.3" fill="#8a8a8a" text-anchor="start" textLength="26.7" lengthAdjust="spacingAndGlyphs">+270</text>
<rect x="1209.6" y="322.4" width="1.8" height="1.8" fill="#8a8a8a"/>
<text x="1082.8" y="330.2" font-family='"Liberation Sans", sans-serif' font-size="10.3" fill="#8a8a8a" text-anchor="start" textLength="26.7" lengthAdjust="spacingAndGlyphs">+300</text>
<rect x="1111.8" y="322.4" width="1.8" height="1.8" fill="#8a8a8a"/>
<text x="984.9" y="330.2" font-family='"Liberation Sans", sans-serif' font-size="10.3" fill="#8a8a8a" text-anchor="start" textLength="26.7" lengthAdjust="spacingAndGlyphs">+330</text>
<rect x="1013.9" y="322.4" width="1.8" height="1.8" fill="#8a8a8a"/>
<text x="893.3" y="330.2" font-family='"Liberation Sans", sans-serif' font-size="10.3" fill="#8a8a8a" text-anchor="start" textLength="14.3" lengthAdjust="spacingAndGlyphs">+0</text>
<rect x="909.9" y="322.4" width="1.8" height="1.8" fill="#8a8a8a"/>
<text x="792.4" y="330.2" font-family='"Liberation Sans", sans-serif' font-size="10.3" fill="#8a8a8a" text-anchor="start" textLength="20.5" lengthAdjust="spacingAndGlyphs">+30</text>
<rect x="815.2" y="322.4" width="1.8" height="1.8" fill="#8a8a8a"/>
<text x="694.6" y="330.2" font-family='"Liberation Sans", sans-serif' font-size="10.3" fill="#8a8a8a" text-anchor="start" textLength="20.5" lengthAdjust="spacingAndGlyphs">+60</text>
<rect x="717.4" y="322.4" width="1.8" height="1.8" fill="#8a8a8a"/>
<text x="596.8" y="330.2" font-family='"Liberation Sans", sans-serif' font-size="10.3" fill="#8a8a8a" text-anchor="start" textLength="20.5" lengthAdjust="spacingAndGlyphs">+90</text>
<rect x="619.6" y="322.4" width="1.8" height="1.8" fill="#8a8a8a"/>
<text x="495.9" y="330.2" font-family='"Liberation Sans", sans-serif' font-size="10.3" fill="#8a8a8a" text-anchor="start" textLength="26.7" lengthAdjust="spacingAndGlyphs">+120</text>
<rect x="524.9" y="322.4" width="1.8" height="1.8" fill="#8a8a8a"/>
<text x="398.0" y="330.2" font-family='"Liberation Sans", sans-serif' font-size="10.3" fill="#8a8a8a" text-anchor="start" textLength="26.7" lengthAdjust="spacingAndGlyphs">+150</text>
<rect x="427.0" y="322.4" width="1.8" height="1.8" fill="#8a8a8a"/>
<text x="300.2" y="330.2" font-family='"Liberation Sans", sans-serif' font-size="10.3" fill="#8a8a8a" text-anchor="start" textLength="26.7" lengthAdjust="spacingAndGlyphs">+180</text>
<rect x="329.2" y="322.4" width="1.8" height="1.8" fill="#8a8a8a"/>
<path d="M1061.6 105.1 L1060.1 104.1 L1058.6 103.1 L1057.1 102.1 L1055.7 101.1 L1054.2 100.1 L1052.7 99.1 L1051.2 98.2 L1049.7 97.2 L1048.2 96.2 L1046.8 95.2 L1045.3 94.3 L1043.8 93.3 L1042.3 92.3 L1040.9 91.4 L1039.4 90.4 L1038.0 89.5 L1036.5 88.5 L1035.1 87.6 L1033.7 86.6 L1032.2 85.7 L1030.8 84.8 L1029.4 83.8 L1028.0 82.9 L1026.6 82.0 L1025.2 81.1 L1023.9 80.2 L1022.5 79.3 L1021.2 78.4 L1019.8 77.6 L1018.5 76.7 L1017.2 75.8 L1016.0 75.0 L1014.7 74.2 L1013.5 73.3 L1012.3 72.5 L1011.1 71.7 L1009.9 70.9 L1008.8 70.1 L1007.7 69.4 L1006.6 68.6 L1005.6 67.9 L1004.6 67.1 L1003.7 66.4 L1002.8 65.8 L1001.9 65.1 L1001.1 64.4 L1000.3 63.8 L999.6 63.2 L999.0 62.6 L998.4 62.0 L997.9 61.5 L997.4 61.0 L997.0 60.5 L996.7 60.0 L996.5 59.6 L996.4 59.2 L996.4 58.8 L996.4 58.5 L996.6 58.2 L996.9 58.0 L997.2 57.7 L997.7 57.5 M808.2 57.4 L809.7 57.3 L811.0 57.2 L812.2 57.2 L813.2 57.2 L814.2 57.2 L815.1 57.3 L815.8 57.4 L816.4 57.6 L817.0 57.8 L817.4 58.0 L817.7 58.3 L818.0 58.6 L818.1 58.9 L818.2 59.3 L818.2 59.7 L818.1 60.1 L817.9 60.6 L817.7 61.0 L817.4 61.6 L817.0 62.1 L816.6 62.7 L816.1 63.3 L815.6 63.9 L815.0 64.5 L814.4 65.2 L813.7 65.8 L813.0 66.5 L812.3 67.2 L811.5 68.0 L810.7 68.7 L809.8 69.5 L808.9 70.2 L808.0 71.0 L807.1 71.8 L806.2 72.6 L805.2 73.4 L804.2 74.3 L803.2 75.1 L802.2 76.0 L801.1 76.8 L800.1 77.7 L799.0 78.6 L797.9 79.4 L796.8 80.3 L795.7 81.2 L794.6 82.1 L793.5 83.1 L792.4 84.0 L791.2 84.9 L790.1 85.8 L788.9 86.8 L787.7 87.7 L786.6 88.6 L785.4 89.6 L784.2 90.5 L783.0 91.5 L781.9 92.5 L780.7 93.4 L779.5 94.4 L778.3 95.4 L777.1 96.3 L775.9 97.3 L774.7 98.3 L773.5 99.3 L772.3 100.3 L771.1 101.3 L769.8 102.2 L768.6 103.2 L767.4 104.2 L766.2 105.2 L765.0 106.2 L763.8 107.2 L762.6 108.2 L761.4 109.3 L760.2 110.3 L759.0 111.3 L757.8 112.3 L756.6 113.3 L755.4 114.3 L754.2 115.3 L753.0 116.4 L751.8 117.4 L750.6 118.4 L749.4 119.4 L748.2 120.5 L747.1 121.5 L745.9 122.5 L744.7 123.5 L743.5 124.6 L742.4 125.6 L741.2 126.6 L740.0 127.7 L738.9 128.7 L737.7 129.7 L736.5 130.8 L735.4 131.8 L734.3 132.8 L733.1 133.9 L732.0 134.9 L730.8 136.0 L729.7 137.0 L728.6 138.1 L727.5 139.1 L726.3 140.1 L725.2 141.2 L724.1 142.2 L723.0 143.3 L721.9 144.3 L720.8 145.4 L719.7 146.4 L718.7 147.5 L717.6 148.5 L716.5 149.6 L715.4 150.6 L714.4 151.7 L713.3 152.7 L712.3 153.8 L711.2 154.8 L710.2 155.9 L709.1 156.9 L708.1 158.0 L707.1 159.1 L706.1 160.1 L705.0 161.2 L704.0 162.2 L703.0 163.3 L702.0 164.3 L701.1 165.4 L700.1 166.5 L699.1 167.5 L698.1 168.6 L697.2 169.6 L696.2 170.7 L695.2 171.7 L694.3 172.8 L693.4 173.9 L692.4 174.9 L691.5 176.0 L690.6 177.1 L689.7 178.1 L688.7 179.2 L687.8 180.2 L686.9 181.3 L686.1 182.4 L685.2 183.4 L684.3 184.5 L683.4 185.6 L682.6 186.6 L681.7 187.7 L680.9 188.7 L680.0 189.8 L679.2 190.9 L678.4 191.9 L677.5 193.0 L676.7 194.1 L675.9 195.1 L675.1 196.2 L674.3 197.3 L673.6 198.3 L672.8 199.4 L672.0 200.5 L671.2 201.5 L670.5 202.6 L669.7 203.7 L669.0 204.7 L668.3 205.8 L667.5 206.9 L666.8 207.9 L666.1 209.0 L665.4 210.1 L664.7 211.2 L664.0 212.2 L663.4 213.3 L662.7 214.4 L662.0 215.4 L661.4 216.5 L660.7 217.6 L660.1 218.6 L659.4 219.7 L658.8 220.8 L658.2 221.8 L657.6 222.9 L657.0 224.0 L656.4 225.1 L655.8 226.1 L655.2 227.2 L654.7 228.3 L654.1 229.3 L653.6 230.4 L653.0 231.5 L652.5 232.6 L651.9 233.6 L651.4 234.7 L650.9 235.8 L650.4 236.8 L649.9 237.9 L649.4 239.0 L648.9 240.1 L648.5 241.1 L648.0 242.2 L647.6 243.3 L647.1 244.3 L646.7 245.4 L646.3 246.5 L645.8 247.6 L645.4 248.6 L645.0 249.7 L644.6 250.8 L644.2 251.9 L643.9 252.9 L643.5 254.0 L643.1 255.1 L642.8 256.1 L642.4 257.2 L642.1 258.3 L641.8 259.4 L641.4 260.4 L641.1 261.5 L640.8 262.6 L640.5 263.7 L640.3 264.7 L640.0 265.8 L639.7 266.9 L639.5 268.0 L639.2 269.0 L639.0 270.1 L638.7 271.2 L638.5 272.3 L638.3 273.3 L638.1 274.4 L637.9 275.5 L637.7 276.5 L637.5 277.6 L637.3 278.7 L637.2 279.8 L637.0 280.8 L636.9 281.9 L636.7 283.0 L636.6 284.1 L636.5 285.1 L636.4 286.2 L636.3 287.3 L636.2 288.4 L636.1 289.4 L636.0 290.5 L636.0 291.6 L635.9 292.7 L635.9 293.7 L635.8 294.8 L635.8 295.9 L635.8 297.0 L635.8 298.0 L635.8 299.1 L635.8 300.2 L635.8 301.3 L635.8 302.3 L635.8 303.4 L635.9 304.5 L635.9 305.6 L636.0 306.6 L636.0 307.7 L636.1 308.8 L636.2 309.9 L636.3 310.9 L636.4 312.0 L636.5 313.1 L636.6 314.2 L636.8 315.2 L636.9 316.3 L637.0 317.4 L637.2 318.5 L637.4 319.5 L637.5 320.6 L637.7 321.7 L637.9 322.8 L638.1 323.8 L638.3 324.9 L638.5 326.0 L638.7 327.1 L639.0 328.1 L639.2 329.2 L639.5 330.3 L639.7 331.4 L640.0 332.4 L640.3 333.5 L640.6 334.6 L640.9 335.7 L641.2 336.7 L641.5 337.8 L641.8 338.9 L642.1 340.0 L642.5 341.0 L642.8 342.1 L643.2 343.2 L643.5 344.3 L643.9 345.3 L644.3 346.4 L644.7 347.5 L645.1 348.6 L645.5 349.6 L645.9 350.7 L646.3 351.8 L646.7 352.9 L647.2 353.9 L647.6 355.0 L648.1 356.1 L648.5 357.2 L649.0 358.2 L649.5 359.3 L650.0 360.4 L650.5 361.5 L651.0 362.5 L651.5 363.6 L652.0 364.7 L652.6 365.8 L653.1 366.8 L653.7 367.9 L654.2 369.0 L654.8 370.1 L655.3 371.1 L655.9 372.2 L656.5 373.3 L657.1 374.3 L657.7 375.4 L658.3 376.5 L659.0 377.6 L659.6 378.6 L660.2 379.7 L660.9 380.8 L661.5 381.9 L662.2 382.9 L662.8 384.0 L663.5 385.1 L664.2 386.2 L664.9 387.2 L665.6 388.3" fill="none" stroke="#3a3a3a" stroke-width="1.39" stroke-dasharray="1.39 2.29"/>
<path d="M1172.2 168.4 L1171.0 167.3 L1169.8 166.3 L1168.6 165.2 L1167.4 164.1 L1166.1 163.1 L1164.9 162.0 L1163.7 160.9 L1162.4 159.9 L1161.2 158.8 L1159.9 157.7 L1158.7 156.7 L1157.4 155.6 L1156.1 154.6 L1154.8 153.5 L1153.6 152.5 L1152.3 151.4 L1151.0 150.4 L1149.7 149.3 L1148.4 148.3 L1147.1 147.2 L1145.8 146.2 L1144.4 145.1 L1143.1 144.1 L1141.8 143.1 L1140.5 142.0 L1139.1 141.0 L1137.8 140.0 L1136.5 138.9 L1135.1 137.9 L1133.8 136.9 L1132.4 135.9 L1131.1 134.9 L1129.7 133.8 L1128.4 132.8 L1127.0 131.8 L1125.7 130.8 L1124.3 129.8 L1123.0 128.8 L1121.6 127.8 L1120.2 126.8 L1118.9 125.8 L1117.5 124.8 L1116.2 123.9 L1114.8 122.9 L1113.5 121.9 L1112.1 120.9 L1110.8 119.9 L1109.4 119.0 L1108.1 118.0 L1106.8 117.1 L1105.4 116.1 L1104.1 115.2 L1102.8 114.2 L1101.4 113.3 L1100.1 112.3 L1098.8 111.4 L1097.5 110.5 L1096.2 109.6 L1094.9 108.7 L1093.7 107.8 L1092.4 106.9 L1091.1 106.0 L1089.9 105.1 L1088.7 104.2 L1087.4 103.3 L1086.2 102.5 L1085.0 101.6 L1083.9 100.8 L1082.7 99.9 L1081.5 99.1 L1080.4 98.3 L1079.3 97.5 L1078.2 96.6 L1077.1 95.8 L1076.1 95.1 L1075.0 94.3 L1074.0 93.5 L1073.0 92.8 L1072.1 92.0 L1071.1 91.3 L1070.2 90.6 L1069.4 89.9 L1068.5 89.2 L1067.7 88.5 L1066.9 87.8 L1066.2 87.2 L1065.5 86.6 L1064.8 85.9 L1064.2 85.3 L1063.6 84.7 L1063.1 84.2 L1062.6 83.6 L1062.2 83.1 L1061.8 82.6 L1061.4 82.1 L1061.1 81.6 L1060.9 81.1 L1060.7 80.7 L1060.6 80.3 L1060.6 79.9 L1060.6 79.5 L1060.7 79.2 L1060.8 78.8 L1061.0 78.5 L1061.3 78.3 M745.2 78.0 L747.0 77.8 L748.8 77.6 L750.4 77.4 L752.0 77.2 L753.6 77.1 L755.0 77.0 L756.4 76.9 L757.7 76.9 L758.9 76.9 L760.1 76.9 L761.2 76.9 L762.2 76.9 L763.1 77.0 L764.0 77.1 L764.8 77.3 L765.5 77.4 L766.2 77.6 L766.7 77.8 L767.3 78.1 L767.7 78.3 L768.1 78.6 L768.5 78.9 L768.8 79.2 L769.0 79.6 L769.2 80.0 L769.3 80.4 L769.4 80.8 L769.4 81.2 L769.3 81.7 L769.3 82.2 L769.1 82.7 L769.0 83.2 L768.8 83.7 L768.5 84.3 L768.2 84.9 L767.9 85.4 L767.6 86.1 L767.2 86.7 L766.8 87.3 L766.3 88.0 L765.8 88.6 L765.3 89.3 L764.8 90.0 L764.2 90.7 L763.6 91.4 L763.0 92.2 L762.4 92.9 L761.8 93.7 L761.1 94.4 L760.4 95.2 L759.7 96.0 L759.0 96.8 L758.2 97.6 L757.5 98.4 L756.7 99.3 L755.9 100.1 L755.1 100.9 L754.3 101.8 L753.5 102.6 L752.6 103.5 L751.8 104.4 L750.9 105.3 L750.1 106.2 L749.2 107.0 L748.3 107.9 L747.4 108.9 L746.6 109.8 L745.7 110.7 L744.8 111.6 L743.8 112.5 L742.9 113.5 L742.0 114.4 L741.1 115.4 L740.2 116.3 L739.2 117.3 L738.3 118.2 L737.4 119.2 L736.4 120.1 L735.5 121.1 L734.5 122.1 L733.6 123.1 L732.6 124.1 L731.7 125.0 L730.7 126.0 L729.8 127.0 L728.9 128.0 L727.9 129.0 L727.0 130.0 L726.0 131.0 L725.1 132.0 L724.1 133.0 L723.2 134.1 L722.2 135.1 L721.3 136.1 L720.3 137.1 L719.4 138.1 L718.5 139.2 L717.5 140.2 L716.6 141.2 L715.7 142.2 L714.8 143.3 L713.8 144.3 L712.9 145.4 L712.0 146.4 L711.1 147.4 L710.2 148.5 L709.3 149.5 L708.4 150.6 L707.5 151.6 L706.6 152.7 L705.7 153.7 L704.8 154.8 L703.9 155.8 L703.0 156.9 L702.2 158.0 L701.3 159.0 L700.4 160.1 L699.6 161.1 L698.7 162.2 L697.9 163.3 L697.0 164.3 L696.2 165.4 L695.3 166.5 L694.5 167.5 L693.7 168.6 L692.9 169.7 L692.1 170.8 L691.3 171.8 L690.5 172.9 L689.7 174.0 L688.9 175.1 L688.1 176.2 L687.3 177.2 L686.6 178.3 L685.8 179.4 L685.0 180.5 L684.3 181.6 L683.5 182.6 L682.8 183.7 L682.1 184.8 L681.3 185.9 L680.6 187.0 L679.9 188.1 L679.2 189.2 L678.5 190.3 L677.8 191.3 L677.1 192.4 L676.5 193.5 L675.8 194.6 L675.1 195.7 L674.5 196.8 L673.8 197.9 L673.2 199.0 L672.5 200.1 L671.9 201.2 L671.3 202.3 L670.7 203.4 L670.1 204.5 L669.5 205.6 L668.9 206.7 L668.3 207.8 L667.7 208.9 L667.2 210.0 L666.6 211.1 L666.1 212.2 L665.5 213.3 L665.0 214.4 L664.5 215.5 L663.9 216.6 L663.4 217.7 L662.9 218.8 L662.4 219.9 L662.0 221.0 L661.5 222.1 L661.0 223.2 L660.5 224.3 L660.1 225.4 L659.6 226.5 L659.2 227.7 L658.8 228.8 L658.4 229.9 L657.9 231.0 L657.5 232.1 L657.1 233.2 L656.8 234.3 L656.4 235.4 L656.0 236.5 L655.6 237.6 L655.3 238.7 L654.9 239.9 L654.6 241.0 L654.3 242.1 L654.0 243.2 L653.7 244.3 L653.4 245.4 L653.1 246.5 L652.8 247.6 L652.5 248.8 L652.2 249.9 L652.0 251.0 L651.7 252.1 L651.5 253.2 L651.3 254.3 L651.0 255.4 L650.8 256.6 L650.6 257.7 L650.4 258.8 L650.2 259.9 L650.1 261.0 L649.9 262.1 L649.7 263.2 L649.6 264.4 L649.4 265.5 L649.3 266.6 L649.2 267.7 L649.1 268.8 L648.9 269.9 L648.9 271.1 L648.8 272.2 L648.7 273.3 L648.6 274.4 L648.5 275.5 L648.5 276.6 L648.5 277.8 L648.4 278.9 L648.4 280.0 L648.4 281.1 L648.4 282.2 L648.4 283.4 L648.4 284.5 L648.4 285.6 L648.4 286.7 L648.5 287.8 L648.5 288.9 L648.6 290.1 L648.6 291.2 L648.7 292.3 L648.8 293.4 L648.9 294.5 L649.0 295.7 L649.1 296.8 L649.2 297.9 L649.4 299.0 L649.5 300.1 L649.6 301.3 L649.8 302.4 L650.0 303.5 L650.1 304.6 L650.3 305.7 L650.5 306.9 L650.7 308.0 L650.9 309.1 L651.1 310.2 L651.4 311.3 L651.6 312.5 L651.9 313.6 L652.1 314.7 L652.4 315.8 L652.6 316.9 L652.9 318.1 L653.2 319.2 L653.5 320.3 L653.8 321.4 L654.1 322.5 L654.5 323.7 L654.8 324.8 L655.2 325.9 L655.5 327.0 L655.9 328.1 L656.2 329.3 L656.6 330.4 L657.0 331.5 L657.4 332.6 L657.8 333.7 L658.2 334.9 L658.7 336.0 L659.1 337.1 L659.5 338.2 L660.0 339.3 L660.4 340.5 L660.9 341.6 L661.4 342.7 L661.9 343.8 L662.4 344.9 L662.9 346.0 L663.4 347.2 L663.9 348.3 L664.4 349.4 L665.0 350.5 L665.5 351.6 L666.1 352.8 L666.6 353.9 L667.2 355.0" fill="none" stroke="#3a3a3a" stroke-width="1.39" stroke-dasharray="1.39 2.29"/>
<path d="M1187.3 191.1 L1185.6 190.6 L1183.8 190.1 L1182.1 189.6 L1180.4 189.2 L1178.7 188.7 L1177.0 188.2 L1175.3 187.8 L1173.6 187.3 L1171.9 186.9 L1170.2 186.4 L1168.5 186.0 L1166.8 185.5 L1165.2 185.1 L1163.5 184.7 L1161.9 184.3 L1160.2 183.9 L1158.6 183.5 L1156.9 183.1 L1155.3 182.7 L1153.7 182.3 L1152.1 182.0 L1150.5 181.6 L1148.9 181.2 L1147.3 180.9 L1145.7 180.5 L1144.1 180.2 L1142.5 179.9 L1141.0 179.5 L1139.4 179.2 L1137.9 178.9 L1136.3 178.6 L1134.8 178.3 L1133.3 178.0 L1131.7 177.7 L1130.2 177.4 L1128.7 177.2 L1127.2 176.9 L1125.8 176.7 L1124.3 176.4 L1122.8 176.2 L1121.4 175.9 L1119.9 175.7 L1118.5 175.5 L1117.0 175.3 L1115.6 175.1 L1114.2 174.9 L1112.8 174.7 L1111.4 174.5 L1110.0 174.3 L1108.6 174.2 L1107.2 174.0 L1105.8 173.9 L1104.5 173.7 L1103.1 173.6 L1101.8 173.5 L1100.4 173.3 L1099.1 173.2 L1097.8 173.1 L1096.5 173.0 L1095.2 173.0 L1093.9 172.9 L1092.6 172.8 L1091.3 172.7 L1090.0 172.7 L1088.8 172.6 L1087.5 172.6 L1086.3 172.6 L1085.0 172.5 L1083.8 172.5 L1082.6 172.5 L1081.4 172.5 L1080.2 172.5 L1079.0 172.6 L1077.8 172.6 L1076.6 172.6 L1075.4 172.7 L1074.3 172.7 L1073.1 172.8 L1071.9 172.8 L1070.8 172.9 L1069.7 173.0 L1068.5 173.1 L1067.4 173.2 L1066.3 173.3 L1065.2 173.4 L1064.1 173.5 L1063.0 173.6 L1061.9 173.8 L1060.8 173.9 L1059.7 174.1 L1058.6 174.2 L1057.6 174.4 L1056.5 174.6 L1055.5 174.7 L1054.4 174.9 L1053.4 175.1 L1052.3 175.3 L1051.3 175.6 L1050.3 175.8 L1049.3 176.0 L1048.3 176.2 L1047.2 176.5 L1046.2 176.7 L1045.2 177.0 L1044.3 177.3 L1043.3 177.5 L1042.3 177.8 L1041.3 178.1 L1040.3 178.4 L1039.4 178.7 L1038.4 179.0 L1037.5 179.3 L1036.5 179.6 L1035.5 180.0 L1034.6 180.3 L1033.7 180.6 L1032.7 181.0 L1031.8 181.3 L1030.9 181.7 L1029.9 182.1 L1029.0 182.4 L1028.1 182.8 L1027.2 183.2 L1026.3 183.6 L1025.3 184.0 L1024.4 184.4 L1023.5 184.8 L1022.6 185.3 L1021.7 185.7 L1020.8 186.1 L1020.0 186.5 L1019.1 187.0 L1018.2 187.4 L1017.3 187.9 L1016.4 188.4 L1015.5 188.8 L1014.7 189.3 L1013.8 189.8 L1012.9 190.3 L1012.0 190.8 L1011.2 191.3 L1010.3 191.8 L1009.4 192.3 L1008.6 192.8 L1007.7 193.3 L1006.8 193.8 L1006.0 194.3 L1005.1 194.9 L1004.3 195.4 L1003.4 195.9 L1002.6 196.5 L1001.7 197.1 L1000.9 197.6 L1000.0 198.2 L999.2 198.7 L998.3 199.3 L997.5 199.9 L996.6 200.5 L995.8 201.1 L994.9 201.6 L994.1 202.2 L993.2 202.8 L992.4 203.4 L991.5 204.0 L990.7 204.7 L989.9 205.3 L989.0 205.9 L988.2 206.5 L987.3 207.1 L986.5 207.8 L985.7 208.4 L984.8 209.1 L984.0 209.7 L983.1 210.3 L982.3 211.0 L981.5 211.7 L980.6 212.3 L979.8 213.0 L978.9 213.6 L978.1 214.3 L977.3 215.0 L976.4 215.7 L975.6 216.3 L974.7 217.0 L973.9 217.7 L973.1 218.4 L972.2 219.1 L971.4 219.8 L970.5 220.5 L969.7 221.2 L968.9 221.9 L968.0 222.6 L967.2 223.3 L966.3 224.0 L965.5 224.8 L964.6 225.5 L963.8 226.2 L963.0 226.9 L962.1 227.7 L961.3 228.4 L960.4 229.1 L959.6 229.9 L958.7 230.6 L957.9 231.3 L957.0 232.1 L956.2 232.8 L955.3 233.6 L954.5 234.3 L953.6 235.1 L952.8 235.9 L951.9 236.6 L951.1 237.4 L950.2 238.1 L949.4 238.9 L948.5 239.7 L947.7 240.4 L946.8 241.2 L946.0 242.0 L945.1 242.8 L944.3 243.6 L943.4 244.3 L942.6 245.1 L941.7 245.9 L940.8 246.7 L940.0 247.5 L939.1 248.3 L938.3 249.1 L937.4 249.9 L936.5 250.7 L935.7 251.5 L934.8 252.3 L934.0 253.1 L933.1 253.9 L932.2 254.7 L931.4 255.5 L930.5 256.3 L929.6 257.1 L928.8 257.9 L927.9 258.7 L927.1 259.5 L926.2 260.3 L925.3 261.2 L924.5 262.0 L923.6 262.8 L922.7 263.6 L921.9 264.5 L921.0 265.3 L920.1 266.1 L919.3 266.9 L918.4 267.8 L917.5 268.6 L916.6 269.4 L915.8 270.2 L914.9 271.1 L914.0 271.9 L913.2 272.8 L912.3 273.6 L911.4 274.4 L910.6 275.3 L909.7 276.1 L908.8 276.9 L907.9 277.8 L907.1 278.6 L906.2 279.5 L905.3 280.3 L904.5 281.2 L903.6 282.0 L902.7 282.9 L901.8 283.7 L901.0 284.5 L900.1 285.4 L899.2 286.2 L898.4 287.1 L897.5 288.0 L896.6 288.8 L895.7 289.7 L894.9 290.5 L894.0 291.4 L893.1 292.2 L892.3 293.1 L891.4 293.9 L890.5 294.8 L889.7 295.6 L888.8 296.5 L887.9 297.4 L887.0 298.2 L886.2 299.1 L885.3 299.9 L884.4 300.8 L883.6 301.7 L882.7 302.5 L881.8 303.4 L881.0 304.2 L880.1 305.1 L879.2 306.0 L878.4 306.8 L877.5 307.7 L876.7 308.6 L875.8 309.4 L874.9 310.3 L874.1 311.1 L873.2 312.0 L872.3 312.9 L871.5 313.7 L870.6 314.6 L869.8 315.5 L868.9 316.3 L868.1 317.2 L867.2 318.1 L866.3 318.9 L865.5 319.8 L864.6 320.7 L863.8 321.5 L862.9 322.4 L862.1 323.3 L861.2 324.1 L860.4 325.0 L859.5 325.8 L858.7 326.7 L857.8 327.6 L857.0 328.4 L856.1 329.3 L855.3 330.2 L854.4 331.0 L853.6 331.9 L852.8 332.8 L851.9 333.6 L851.1 334.5 L850.2 335.3 L849.4 336.2 L848.6 337.1 L847.7 337.9 L846.9 338.8 L846.1 339.7 L845.2 340.5 L844.4 341.4 L843.6 342.2 L842.8 343.1 L841.9 344.0 L841.1 344.8 L840.3 345.7 L839.5 346.5 L838.6 347.4 L837.8 348.2 L837.0 349.1 L836.2 349.9 L835.4 350.8 L834.6 351.7 L833.7 352.5 L832.9 353.4 L832.1 354.2 L831.3 355.1 L830.5 355.9 L829.7 356.8 L828.9 357.6 L828.1 358.5 L827.3 359.3 L826.5 360.1 L825.7 361.0 L824.9 361.8 L824.1 362.7 L823.3 363.5 L822.5 364.4 L821.7 365.2 L820.9 366.0 L820.1 366.9 L819.4 367.7 L818.6 368.6 L817.8 369.4 L817.0 370.2 L816.2 371.1 L815.4 371.9 L814.7 372.7 L813.9 373.5 L813.1 374.4 L812.3 375.2 L811.6 376.0 L810.8 376.8 L810.0 377.7 L809.3 378.5 L808.5 379.3 L807.7 380.1 L807.0 380.9 L806.2 381.8 L805.5 382.6 L804.7 383.4 L803.9 384.2 L803.2 385.0 L802.4 385.8 L801.7 386.6 L800.9 387.4 L800.2 388.2 L799.4 389.0 L798.7 389.8 L798.0 390.6 L797.2 391.4 L796.5 392.2 L795.7 393.0 L795.0 393.8" fill="none" stroke="#3a3a3a" stroke-width="1.39" stroke-dasharray="1.39 2.29"/>
<path d="M952.9 128.4 L952.3 128.8 L951.6 129.3 L951.0 129.8 L950.4 130.2 L949.7 130.7 L949.1 131.2 L948.5 131.6 L947.9 132.1 L947.2 132.6 L946.6 133.1 L946.0 133.6 L945.4 134.1 L944.8 134.7 L944.2 135.2 L943.5 135.7 L942.9 136.2 L942.3 136.8 L941.7 137.3 L941.1 137.8 L940.5 138.4 L939.9 139.0 L939.3 139.5 L938.7 140.1 L938.1 140.6 L937.5 141.2 L936.9 141.8 L936.3 142.4 L935.7 143.0 L935.1 143.5 L934.5 144.1 L933.9 144.7 L933.3 145.3 L932.7 145.9 L932.1 146.5 L931.5 147.2 L930.9 147.8 L930.3 148.4 L929.7 149.0 L929.1 149.6 L928.5 150.3 L928.0 150.9 L927.4 151.6 L926.8 152.2 L926.2 152.8 L925.6 153.5 L925.0 154.1 L924.4 154.8 L923.8 155.4 L923.2 156.1 L922.6 156.8 L922.0 157.4 L921.5 158.1 L920.9 158.8 L920.3 159.4 L919.7 160.1 L919.1 160.8 L918.5 161.5 L917.9 162.2 L917.3 162.9 L916.7 163.6 L916.2 164.2 L915.6 164.9 L915.0 165.6 L914.4 166.3 L913.8 167.0 L913.2 167.7 L912.6 168.5 L912.0 169.2 L911.4 169.9 L910.8 170.6 L910.3 171.3 L909.7 172.0 L909.1 172.7 L908.5 173.5 L907.9 174.2 L907.3 174.9 L906.7 175.6 L906.1 176.4 L905.5 177.1 L905.0 177.8 L904.4 178.6 L903.8 179.3 L903.2 180.0 L902.6 180.8 L902.0 181.5 L901.4 182.3 L900.8 183.0 L900.2 183.8 L899.6 184.5 L899.1 185.3 L898.5 186.0 L897.9 186.8 L897.3 187.5 L896.7 188.3 L896.1 189.0 L895.5 189.8 L894.9 190.6 L894.3 191.3 L893.8 192.1 L893.2 192.9 L892.6 193.6 L892.0 194.4 L891.4 195.2 L890.8 195.9 L890.2 196.7 L889.6 197.5 L889.0 198.3 L888.5 199.0 L887.9 199.8 L887.3 200.6 L886.7 201.4 L886.1 202.1 L885.5 202.9 L884.9 203.7 L884.3 204.5 L883.8 205.3 L883.2 206.1 L882.6 206.9 L882.0 207.6 L881.4 208.4 L880.8 209.2 L880.2 210.0 L879.7 210.8 L879.1 211.6 L878.5 212.4 L877.9 213.2 L877.3 214.0 L876.7 214.8 L876.2 215.6 L875.6 216.4 L875.0 217.2 L874.4 218.0 L873.8 218.8 L873.3 219.6 L872.7 220.4 L872.1 221.2 L871.5 222.0 L870.9 222.8 L870.4 223.6 L869.8 224.4 L869.2 225.2 L868.6 226.0 L868.1 226.8 L867.5 227.6 L866.9 228.5 L866.3 229.3 L865.8 230.1 L865.2 230.9 L864.6 231.7 L864.0 232.5 L863.5 233.3 L862.9 234.1 L862.3 235.0 L861.8 235.8 L861.2 236.6 L860.6 237.4 L860.1 238.2 L859.5 239.1 L858.9 239.9 L858.4 240.7 L857.8 241.5 L857.3 242.3 L856.7 243.2 L856.1 244.0 L855.6 244.8 L855.0 245.6 L854.5 246.4 L853.9 247.3 L853.3 248.1 L852.8 248.9 L852.2 249.7 L851.7 250.6 L851.1 251.4 L850.6 252.2 L850.0 253.0 L849.5 253.9 L848.9 254.7 L848.4 255.5 L847.8 256.4 L847.3 257.2 L846.7 258.0 L846.2 258.9 L845.6 259.7 L845.1 260.5 L844.6 261.3 L844.0 262.2 L843.5 263.0 L843.0 263.8 L842.4 264.7 L841.9 265.5 L841.3 266.3 L840.8 267.2 L840.3 268.0 L839.8 268.8 L839.2 269.7 L838.7 270.5 L838.2 271.3 L837.6 272.2 L837.1 273.0 L836.6 273.9 L836.1 274.7 L835.6 275.5 L835.0 276.4 L834.5 277.2 L834.0 278.0 L833.5 278.9 L833.0 279.7 L832.5 280.5 L832.0 281.4 L831.4 282.2 L830.9 283.1 L830.4 283.9 L829.9 284.7 L829.4 285.6 L828.9 286.4 L828.4 287.3 L827.9 288.1 L827.4 288.9 L826.9 289.8 L826.4 290.6 L825.9 291.5 L825.5 292.3 L825.0 293.1 L824.5 294.0 L824.0 294.8 L823.5 295.7 L823.0 296.5 L822.5 297.4 L822.1 298.2 L821.6 299.0 L821.1 299.9 L820.6 300.7 L820.2 301.6 L819.7 302.4 L819.2 303.2 L818.7 304.1 L818.3 304.9 L817.8 305.8 L817.3 306.6 L816.9 307.5 L816.4 308.3 L816.0 309.1 L815.5 310.0 L815.1 310.8 L814.6 311.7 L814.2 312.5 L813.7 313.4 L813.3 314.2 L812.8 315.0 L812.4 315.9 L811.9 316.7 L811.5 317.6 L811.0 318.4 L810.6 319.3 L810.2 320.1 L809.7 321.0 L809.3 321.8 L808.9 322.6 L808.5 323.5 L808.0 324.3 L807.6 325.2 L807.2 326.0 L806.8 326.9 L806.3 327.7 L805.9 328.5 L805.5 329.4 L805.1 330.2 L804.7 331.1 L804.3 331.9 L803.9 332.8 L803.5 333.6 L803.1 334.4 L802.7 335.3 L802.3 336.1 L801.9 337.0 L801.5 337.8 L801.1 338.7 L800.7 339.5 L800.3 340.3 L799.9 341.2 L799.6 342.0 L799.2 342.9 L798.8 343.7 L798.4 344.5 L798.0 345.4 L797.7 346.2 L797.3 347.1 L796.9 347.9 L796.6 348.8 L796.2 349.6 L795.8 350.4 L795.5 351.3 L795.1 352.1 L794.8 353.0 L794.4 353.8 L794.1 354.6 L793.7 355.5 L793.4 356.3 L793.0 357.2 L792.7 358.0 L792.3 358.8 L792.0 359.7 L791.7 360.5 L791.3 361.3 L791.0 362.2 L790.7 363.0 L790.3 363.9 L790.0 364.7 L789.7 365.5 L789.4 366.4 L789.1 367.2 L788.7 368.0 L788.4 368.9 L788.1 369.7 L787.8 370.5 L787.5 371.4 L787.2 372.2 L786.9 373.1 L786.6 373.9 L786.3 374.7 L786.0 375.6 L785.7 376.4 L785.4 377.2 L785.1 378.1 L784.8 378.9 L784.6 379.7 L784.3 380.5 L784.0 381.4 L783.7 382.2 L783.4 383.0 L783.2 383.9 L782.9 384.7 L782.6 385.5 L782.4 386.4 L782.1 387.2 L781.8 388.0 L781.6 388.8 L781.3 389.7 L781.1 390.5 L780.8 391.3 L780.6 392.1 L780.3 393.0 L780.1 393.8 L779.8 394.6 L779.6 395.4 L779.3 396.3 L779.1 397.1 L778.9 397.9 L778.6 398.7 L778.4 399.5 L778.2 400.4 L777.9 401.2 L777.7 402.0 L777.5 402.8 L777.3 403.6 L777.1 404.5 L776.8 405.3 L776.6 406.1 L776.4 406.9 L776.2 407.7 L776.0 408.5 L775.8 409.3 L775.6 410.2 L775.4 411.0 L775.2 411.8 L775.0 412.6 L774.8 413.4 L774.6 414.2 L774.4 415.0 L774.2 415.8 L774.1 416.6 L773.9 417.4 L773.7 418.3 L773.5 419.1 L773.3 419.9 L773.2 420.7 L773.0 421.5 L772.8 422.3 L772.7 423.1 L772.5 423.9 L772.3 424.7 L772.2 425.5 L772.0 426.3 L771.8 427.1 L771.7 427.9 L771.5 428.7 L771.4 429.5 L771.2 430.2 L771.1 431.0 L770.9 431.8 L770.8 432.6 L770.6 433.4 L770.5 434.2 L770.4 435.0 L770.2 435.8 L770.1 436.6 L770.0 437.3 L769.8 438.1 L769.7 438.9" fill="none" stroke="#3a3a3a" stroke-width="1.39" stroke-dasharray="1.39 2.29"/>
<path d="M1036.2 98.9 L1035.2 98.2 L1034.2 97.5 L1033.2 96.7 L1032.2 96.0 L1031.2 95.3 L1030.2 94.6 L1029.2 93.9 L1028.2 93.1 L1027.2 92.4 L1026.2 91.7 L1025.2 91.0 L1024.3 90.3 L1023.3 89.6 L1022.3 88.9 L1021.3 88.2 L1020.3 87.5 L1019.3 86.8 L1018.3 86.1 L1017.3 85.4 L1016.4 84.7 L1015.4 84.0 L1014.4 83.3 L1013.4 82.6 L1012.5 81.9 L1011.5 81.2 L1010.6 80.5 L1009.6 79.9 L1008.6 79.2 L1007.7 78.5 L1006.7 77.8 L1005.8 77.2 L1004.9 76.5 L1003.9 75.8 L1003.0 75.2 L1002.1 74.5 L1001.2 73.9 L1000.3 73.2 L999.4 72.6 L998.5 72.0 L997.6 71.3 L996.7 70.7 L995.9 70.1 L995.0 69.4 L994.2 68.8 L993.3 68.2 L992.5 67.6 L991.7 67.0 L990.9 66.4 L990.1 65.8 L989.3 65.3 L988.6 64.7 L987.9 64.1 L987.1 63.6 L986.4 63.0 L985.7 62.5 L985.1 62.0 L984.4 61.4 L983.8 60.9 L983.2 60.4 L982.6 59.9 L982.1 59.4 L981.6 59.0 L981.1 58.5 L980.6 58.1 L980.2 57.7 L979.8 57.2 L979.4 56.8 L979.1 56.4 L978.8 56.1 L978.6 55.7 L978.4 55.4 L978.3 55.1 L978.2 54.8 L978.1 54.5 L978.1 54.2 L978.2 54.0 L978.3 53.7 L978.5 53.5 L978.7 53.4 L979.0 53.2 L979.4 53.1 L979.8 52.9 L980.3 52.8 L980.9 52.8 L981.5 52.7 L982.2 52.7 M822.0 52.7 L822.7 52.7 L823.3 52.8 L823.9 52.8 L824.4 52.9 L824.8 53.1 L825.2 53.2 L825.5 53.4 L825.7 53.5 L825.9 53.7 L826.0 54.0 L826.0 54.2 L826.0 54.5 L826.0 54.8 L825.9 55.1 L825.7 55.4 L825.5 55.7 L825.3 56.1 L825.0 56.4 L824.7 56.8 L824.3 57.2 L823.9 57.6 L823.5 58.1 L823.0 58.5 L822.5 59.0 L822.0 59.4 L821.4 59.9 L820.8 60.4 L820.2 60.9 L819.6 61.4 L818.9 61.9 L818.2 62.5 L817.5 63.0 L816.8 63.6 L816.1 64.1 L815.3 64.7 L814.6 65.2 L813.8 65.8 L813.0 66.4 L812.2 67.0 L811.3 67.6 L810.5 68.2 L809.7 68.8 L808.8 69.4 L807.9 70.0 L807.1 70.7 L806.2 71.3 L805.3 71.9 L804.4 72.6 L803.5 73.2 L802.5 73.9 L801.6 74.5 L800.7 75.2 L799.7 75.8 L798.8 76.5 L797.8 77.2 L796.9 77.8 L795.9 78.5 L795.0 79.2 L794.0 79.8 L793.0 80.5 L792.0 81.2 L791.1 81.9 L790.1 82.6 L789.1 83.3 L788.1 84.0 L787.1 84.7 L786.1 85.3 L785.1 86.0 L784.1 86.7 L783.1 87.4 L782.1 88.1 L781.1 88.9 L780.1 89.6 L779.1 90.3 L778.1 91.0 L777.1 91.7 L776.1 92.4 L775.1 93.1 L774.0 93.8 L773.0 94.6 L772.0 95.3 L771.0 96.0 L770.0 96.7 L769.0 97.4 L768.0 98.2 L767.0 98.9 L765.9 99.6 L764.9 100.3 L763.9 101.1 L762.9 101.8 L761.9 102.5 L760.9 103.2 L759.9 104.0 L758.9 104.7 L757.8 105.4 L756.8 106.2 L755.8 106.9 L754.8 107.6 L753.8 108.4 L752.8 109.1 L751.8 109.9 L750.8 110.6 L749.8 111.3 L748.8 112.1 L747.8 112.8 L746.8 113.6 L745.8 114.3 L744.8 115.0 L743.8 115.8 L742.8 116.5 L741.8 117.3 L740.9 118.0 L739.9 118.8 L738.9 119.5 L737.9 120.2 L736.9 121.0 L735.9 121.7 L735.0 122.5 L734.0 123.2 L733.0 124.0 L732.0 124.7 L731.1 125.5 L730.1 126.2 L729.1 127.0 L728.2 127.7 L727.2 128.5 L726.3 129.2 L725.3 130.0 L724.4 130.7 L723.4 131.5 L722.5 132.2 L721.5 133.0 L720.6 133.7 L719.6 134.5 L718.7 135.2 L717.7 136.0 L716.8 136.8 L715.9 137.5 L715.0 138.3 L714.0 139.0 L713.1 139.8 L712.2 140.5 L711.3 141.3 L710.4 142.0 L709.4 142.8 L708.5 143.6 L707.6 144.3 L706.7 145.1 L705.8 145.8 L704.9 146.6 L704.0 147.3 L703.1 148.1 L702.2 148.9 L701.4 149.6 L700.5 150.4 L699.6 151.1 L698.7 151.9 L697.8 152.7 L697.0 153.4 L696.1 154.2 L695.2 154.9 L694.4 155.7 L693.5 156.5 L692.7 157.2 L691.8 158.0 L691.0 158.7 L690.1 159.5 L689.3 160.3 L688.4 161.0 L687.6 161.8 L686.8 162.5 L685.9 163.3 L685.1 164.1 L684.3 164.8 L683.5 165.6 L682.7 166.4 L681.8 167.1 L681.0 167.9 L680.2 168.6 L679.4 169.4 L678.6 170.2 L677.8 170.9 L677.0 171.7 L676.3 172.5 L675.5 173.2 L674.7 174.0 L673.9 174.8 L673.2 175.5 L672.4 176.3 L671.6 177.0 L670.9 177.8 L670.1 178.6 L669.3 179.3 L668.6 180.1 L667.8 180.9 L667.1 181.6 L666.4 182.4 L665.6 183.2 L664.9 183.9 L664.2 184.7 L663.5 185.5 L662.7 186.2 L662.0 187.0 L661.3 187.8 L660.6 188.5 L659.9 189.3 L659.2 190.1 L658.5 190.8 L657.8 191.6 L657.1 192.4 L656.4 193.1 L655.8 193.9 L655.1 194.7 L654.4 195.4 L653.8 196.2 L653.1 197.0 L652.4 197.7 L651.8 198.5 L651.1 199.3 L650.5 200.0 L649.8 200.8 L649.2 201.6 L648.6 202.3 L647.9 203.1 L647.3 203.9 L646.7 204.6 L646.1 205.4 L645.5 206.2 L644.9 206.9 L644.3 207.7 L643.7 208.5 L643.1 209.2 L642.5 210.0 L641.9 210.8 L641.3 211.5 L640.7 212.3 L640.1 213.1 L639.6 213.8 L639.0 214.6 L638.5 215.4 L637.9 216.1 L637.3 216.9 L636.8 217.7 L636.3 218.5 L635.7 219.2 L635.2 220.0 L634.7 220.8 L634.1 221.5 L633.6 222.3 L633.1 223.1 L632.6 223.8 L632.1 224.6 L631.6 225.4 L631.1 226.1 L630.6 226.9 L630.1 227.7 L629.6 228.4 L629.1 229.2 L628.7 230.0 L628.2 230.8 L627.7 231.5 L627.3 232.3 L626.8 233.1 L626.4 233.8 L625.9 234.6 L625.5 235.4 L625.0 236.1 L624.6 236.9 L624.2 237.7 L623.7 238.4 L623.3 239.2 L622.9 240.0 L622.5 240.8 L622.1 241.5 L621.7 242.3 L621.3 243.1 L620.9 243.8 L620.5 244.6 L620.1 245.4 L619.8 246.1 L619.4 246.9 L619.0 247.7 L618.7 248.5 L618.3 249.2 L618.0 250.0 L617.6 250.8 L617.3 251.5 L616.9 252.3 L616.6 253.1 L616.3 253.8 L616.0 254.6 L615.6 255.4 L615.3 256.2 L615.0 256.9 L614.7 257.7 L614.4 258.5 L614.1 259.2 L613.8 260.0 L613.5 260.8 L613.3 261.6 L613.0 262.3 L612.7 263.1 L612.5 263.9 L612.2 264.6 L611.9 265.4 L611.7 266.2 L611.4 266.9 L611.2 267.7 L611.0 268.5 L610.7 269.3 L610.5 270.0 L610.3 270.8" fill="none" stroke="#29af7f" stroke-width="1.39" stroke-dasharray="1.39 2.29"/>
<path d="M1065.1 174.2 L1064.0 173.3 L1062.9 172.4 L1061.8 171.5 L1060.7 170.5 L1059.6 169.6 L1058.5 168.7 L1057.3 167.8 L1056.2 166.9 L1055.1 166.0 L1054.0 165.1 L1052.8 164.2 L1051.7 163.3 L1050.6 162.3 L1049.4 161.4 L1048.3 160.5 L1047.1 159.6 L1046.0 158.7 L1044.8 157.8 L1043.7 156.9 L1042.5 156.0 L1041.4 155.1 L1040.2 154.2 L1039.0 153.3 L1037.9 152.4 L1036.7 151.5 L1035.5 150.6 L1034.4 149.7 L1033.2 148.8 L1032.0 147.9 L1030.8 147.0 L1029.6 146.1 L1028.4 145.2 L1027.3 144.3 L1026.1 143.4 L1024.9 142.6 L1023.7 141.7 L1022.5 140.8 L1021.3 139.9 L1020.1 139.0 L1018.9 138.1 L1017.7 137.2 L1016.5 136.4 L1015.3 135.5 L1014.1 134.6 L1012.9 133.7 L1011.7 132.8 L1010.5 132.0 L1009.3 131.1 L1008.1 130.2 L1006.8 129.3 L1005.6 128.5 L1004.4 127.6 L1003.2 126.7 L1002.0 125.9 L1000.8 125.0 L999.6 124.1 L998.3 123.3 L997.1 122.4 L995.9 121.6 L994.7 120.7 L993.5 119.9 L992.3 119.0 L991.0 118.2 L989.8 117.3 L988.6 116.5 L987.4 115.6 L986.2 114.8 L984.9 113.9 L983.7 113.1 L982.5 112.3 L981.3 111.4 L980.1 110.6 L978.9 109.8 L977.7 109.0 L976.5 108.2 L975.2 107.3 L974.0 106.5 L972.8 105.7 L971.6 104.9 L970.4 104.1 L969.2 103.3 L968.0 102.5 L966.8 101.7 L965.6 100.9 L964.4 100.2 L963.2 99.4 L962.0 98.6 L960.9 97.8 L959.7 97.1 L958.5 96.3 L957.3 95.5 L956.1 94.8 L955.0 94.0 L953.8 93.3 L952.6 92.6 L951.5 91.8 L950.3 91.1 L949.1 90.4 L948.0 89.7 L946.8 89.0 L945.7 88.3 L944.6 87.6 L943.4 86.9 L942.3 86.2 L941.2 85.6 L940.0 84.9 L938.9 84.2 L937.8 83.6 L936.7 83.0 L935.6 82.3 L934.5 81.7 L933.4 81.1 L932.3 80.5 L931.3 79.9 L930.2 79.4 L929.1 78.8 L928.0 78.3 L927.0 77.7 L925.9 77.2 L924.9 76.7 L923.8 76.2 L922.8 75.7 L921.8 75.2 L920.8 74.8 L919.7 74.3 L918.7 73.9 L917.7 73.5 L916.7 73.1 L915.7 72.7 L914.7 72.3 L913.7 72.0 L912.7 71.7 L911.8 71.3 L910.8 71.1 L909.8 70.8 L908.8 70.5 L907.9 70.3 L906.9 70.1 L905.9 69.9 L905.0 69.7 L904.0 69.6 L903.1 69.4 L902.1 69.3 L901.1 69.2 L900.2 69.2 L899.2 69.1 L898.3 69.1 L897.3 69.1 L896.3 69.1 L895.4 69.2 L894.4 69.2 L893.4 69.3 L892.4 69.4 L891.4 69.6 L890.5 69.7 L889.5 69.9 L888.5 70.1 L887.4 70.3 L886.4 70.5 L885.4 70.8 L884.4 71.0 L883.3 71.3 L882.3 71.6 L881.2 71.9 L880.2 72.3 L879.1 72.6 L878.0 73.0 L876.9 73.4 L875.8 73.8 L874.7 74.3 L873.6 74.7 L872.5 75.2 L871.4 75.6 L870.2 76.1 L869.1 76.6 L867.9 77.1 L866.7 77.6 L865.6 78.2 L864.4 78.7 L863.2 79.3 L862.0 79.9 L860.8 80.4 L859.6 81.0 L858.4 81.6 L857.1 82.3 L855.9 82.9 L854.7 83.5 L853.4 84.2 L852.1 84.8 L850.9 85.5 L849.6 86.1 L848.3 86.8 L847.1 87.5 L845.8 88.2 L844.5 88.9 L843.2 89.6 L841.9 90.3 L840.6 91.0 L839.3 91.7 L838.0 92.5 L836.6 93.2 L835.3 93.9 L834.0 94.7 L832.6 95.4 L831.3 96.2 L830.0 97.0 L828.6 97.7 L827.3 98.5 L825.9 99.3 L824.6 100.0 L823.2 100.8 L821.9 101.6 L820.5 102.4 L819.1 103.2 L817.8 104.0 L816.4 104.8 L815.0 105.6 L813.6 106.4 L812.3 107.2 L810.9 108.0 L809.5 108.9 L808.1 109.7 L806.8 110.5 L805.4 111.3 L804.0 112.2 L802.6 113.0 L801.2 113.8 L799.9 114.7 L798.5 115.5 L797.1 116.4 L795.7 117.2 L794.3 118.0 L792.9 118.9 L791.5 119.7 L790.2 120.6 L788.8 121.5 L787.4 122.3 L786.0 123.2 L784.6 124.0 L783.2 124.9 L781.9 125.8 L780.5 126.6 L779.1 127.5 L777.7 128.4 L776.3 129.2 L775.0 130.1 L773.6 131.0 L772.2 131.8 L770.8 132.7 L769.4 133.6 L768.1 134.5 L766.7 135.4 L765.3 136.2 L764.0 137.1 L762.6 138.0 L761.2 138.9 L759.9 139.8 L758.5 140.7 L757.2 141.5 L755.8 142.4 L754.5 143.3 L753.1 144.2 L751.8 145.1 L750.4 146.0 L749.1 146.9 L747.7 147.8 L746.4 148.7 L745.0 149.6 L743.7 150.5 L742.4 151.4 L741.1 152.3 L739.7 153.2 L738.4 154.1 L737.1 155.0 L735.8 155.9 L734.5 156.8 L733.2 157.7 L731.8 158.6 L730.5 159.5 L729.2 160.4 L727.9 161.3 L726.7 162.2 L725.4 163.1 L724.1 164.0 L722.8 165.0 L721.5 165.9 L720.2 166.8 L719.0 167.7 L717.7 168.6 L716.4 169.5 L715.2 170.4 L713.9 171.3 L712.7 172.2 L711.4 173.2 L710.2 174.1 L708.9 175.0 L707.7 175.9 L706.5 176.8 L705.2 177.7 L704.0 178.7 L702.8 179.6 L701.6 180.5 L700.4 181.4 L699.2 182.3 L698.0 183.3 L696.8 184.2 L695.6 185.1 L694.4 186.0 L693.2 186.9 L692.0 187.9 L690.8 188.8 L689.7 189.7 L688.5 190.6 L687.4 191.5 L686.2 192.5 L685.1 193.4 L683.9 194.3 L682.8 195.2 L681.6 196.2 L680.5 197.1 L679.4 198.0 L678.3 198.9 L677.2 199.9 L676.0 200.8 L674.9 201.7 L673.8 202.6 L672.8 203.6 L671.7 204.5 L670.6 205.4 L669.5 206.4 L668.4 207.3 L667.4 208.2 L666.3 209.1 L665.3 210.1 L664.2 211.0 L663.2 211.9 L662.1 212.9 L661.1 213.8 L660.1 214.7 L659.1 215.6 L658.1 216.6 L657.0 217.5 L656.0 218.4 L655.1 219.4 L654.1 220.3 L653.1 221.2 L652.1 222.2 L651.1 223.1 L650.2 224.0 L649.2 225.0 L648.3 225.9 L647.3 226.8 L646.4 227.8 L645.4 228.7 L644.5 229.6 L643.6 230.6 L642.7 231.5 L641.8 232.4 L640.9 233.4 L640.0 234.3 L639.1 235.2 L638.2 236.2 L637.3 237.1 L636.4 238.0 L635.6 239.0 L634.7 239.9 L633.9 240.8 L633.0 241.8 L632.2 242.7 L631.4 243.6 L630.5 244.6 L629.7 245.5 L628.9 246.4 L628.1 247.4 L627.3 248.3 L626.5 249.2 L625.7 250.2 L625.0 251.1 L624.2 252.1 L623.4 253.0 L622.7 253.9 L621.9 254.9 L621.2 255.8 L620.5 256.7 L619.7 257.7 L619.0 258.6 L618.3 259.5 L617.6 260.5 L616.9 261.4 L616.2 262.4 L615.5 263.3 L614.8 264.2 L614.2 265.2 L613.5 266.1 L612.8 267.0 L612.2 268.0 L611.6 268.9 L610.9 269.9 L610.3 270.8" fill="none" stroke="#29af7f" stroke-width="1.39" stroke-dasharray="1.39 2.29"/>
<path d="M1180.2 208.0 L1178.8 207.3 L1177.4 206.6 L1175.9 205.9 L1174.5 205.2 L1173.1 204.5 L1171.6 203.8 L1170.2 203.1 L1168.8 202.4 L1167.3 201.7 L1165.9 201.0 L1164.5 200.3 L1163.0 199.7 L1161.6 199.0 L1160.1 198.3 L1158.7 197.6 L1157.3 197.0 L1155.8 196.3 L1154.4 195.6 L1152.9 194.9 L1151.5 194.3 L1150.0 193.6 L1148.6 192.9 L1147.1 192.3 L1145.7 191.6 L1144.2 191.0 L1142.8 190.3 L1141.3 189.7 L1139.9 189.0 L1138.4 188.4 L1137.0 187.7 L1135.5 187.1 L1134.1 186.5 L1132.6 185.8 L1131.2 185.2 L1129.7 184.6 L1128.3 184.0 L1126.8 183.3 L1125.4 182.7 L1123.9 182.1 L1122.5 181.5 L1121.0 180.9 L1119.6 180.3 L1118.1 179.7 L1116.7 179.1 L1115.2 178.5 L1113.8 177.9 L1112.4 177.3 L1110.9 176.7 L1109.5 176.1 L1108.1 175.5 L1106.6 175.0 L1105.2 174.4 L1103.8 173.8 L1102.3 173.2 L1100.9 172.7 L1099.5 172.1 L1098.1 171.6 L1096.7 171.0 L1095.2 170.5 L1093.8 169.9 L1092.4 169.4 L1091.0 168.8 L1089.6 168.3 L1088.2 167.8 L1086.8 167.2 L1085.4 166.7 L1084.0 166.2 L1082.6 165.7 L1081.2 165.2 L1079.9 164.7 L1078.5 164.2 L1077.1 163.7 L1075.7 163.2 L1074.4 162.7 L1073.0 162.2 L1071.6 161.8 L1070.3 161.3 L1068.9 160.8 L1067.6 160.3 L1066.2 159.9 L1064.9 159.4 L1063.5 159.0 L1062.2 158.5 L1060.8 158.1 L1059.5 157.7 L1058.2 157.2 L1056.9 156.8 L1055.6 156.4 L1054.2 156.0 L1052.9 155.6 L1051.6 155.2 L1050.3 154.8 L1049.0 154.4 L1047.8 154.0 L1046.5 153.6 L1045.2 153.2 L1043.9 152.9 L1042.7 152.5 L1041.4 152.2 L1040.1 151.8 L1038.9 151.5 L1037.6 151.1 L1036.4 150.8 L1035.1 150.5 L1033.9 150.1 L1032.7 149.8 L1031.5 149.5 L1030.2 149.2 L1029.0 148.9 L1027.8 148.6 L1026.6 148.3 L1025.4 148.1 L1024.2 147.8 L1023.1 147.5 L1021.9 147.3 L1020.7 147.0 L1019.5 146.8 L1018.4 146.5 L1017.2 146.3 L1016.0 146.1 L1014.9 145.8 L1013.8 145.6 L1012.6 145.4 L1011.5 145.2 L1010.4 145.0 L1009.2 144.9 L1008.1 144.7 L1007.0 144.5 L1005.9 144.3 L1004.8 144.2 L1003.7 144.0 L1002.6 143.9 L1001.5 143.8 L1000.5 143.6 L999.4 143.5 L998.3 143.4 L997.3 143.3 L996.2 143.2 L995.1 143.1 L994.1 143.0 L993.1 142.9 L992.0 142.9 L991.0 142.8 L990.0 142.8 L988.9 142.7 L987.9 142.7 L986.9 142.6 L985.9 142.6 L984.9 142.6 L983.9 142.6 L982.9 142.6 L981.9 142.6 L980.9 142.6 L979.9 142.6 L979.0 142.6 L978.0 142.7 L977.0 142.7 L976.0 142.8 L975.1 142.8 L974.1 142.9 L973.2 143.0 L972.2 143.0 L971.3 143.1 L970.3 143.2 L969.4 143.3 L968.5 143.4 L967.5 143.5 L966.6 143.7 L965.7 143.8 L964.8 143.9 L963.9 144.1 L962.9 144.2 L962.0 144.4 L961.1 144.6 L960.2 144.7 L959.3 144.9 L958.4 145.1 L957.5 145.3 L956.6 145.5 L955.7 145.7 L954.8 145.9 L954.0 146.1 L953.1 146.4 L952.2 146.6 L951.3 146.8 L950.4 147.1 L949.6 147.3 L948.7 147.6 L947.8 147.9 L947.0 148.1 L946.1 148.4 L945.2 148.7 L944.4 149.0 L943.5 149.3 L942.6 149.6 L941.8 149.9 L940.9 150.2 L940.1 150.6 L939.2 150.9 L938.4 151.2 L937.5 151.6 L936.7 151.9 L935.8 152.3 L935.0 152.6 L934.1 153.0 L933.3 153.4 L932.4 153.7 L931.6 154.1 L930.8 154.5 L929.9 154.9 L929.1 155.3 L928.2 155.7 L927.4 156.1 L926.6 156.5 L925.7 157.0 L924.9 157.4 L924.1 157.8 L923.2 158.2 L922.4 158.7 L921.6 159.1 L920.7 159.6 L919.9 160.0 L919.1 160.5 L918.2 161.0 L917.4 161.4 L916.6 161.9 L915.7 162.4 L914.9 162.9 L914.1 163.4 L913.3 163.8 L912.4 164.3 L911.6 164.8 L910.8 165.4 L909.9 165.9 L909.1 166.4 L908.3 166.9 L907.4 167.4 L906.6 167.9 L905.8 168.5 L905.0 169.0 L904.1 169.5 L903.3 170.1 L902.5 170.6 L901.6 171.2 L900.8 171.7 L900.0 172.3 L899.2 172.9 L898.3 173.4 L897.5 174.0 L896.7 174.6 L895.8 175.1 L895.0 175.7 L894.2 176.3 L893.4 176.9 L892.5 177.5 L891.7 178.1 L890.9 178.7 L890.0 179.3 L889.2 179.9 L888.4 180.5 L887.6 181.1 L886.7 181.7 L885.9 182.3 L885.1 182.9 L884.2 183.5 L883.4 184.2 L882.6 184.8 L881.7 185.4 L880.9 186.0 L880.1 186.7 L879.3 187.3 L878.4 188.0 L877.6 188.6 L876.8 189.2 L875.9 189.9 L875.1 190.5 L874.3 191.2 L873.4 191.8 L872.6 192.5 L871.8 193.2 L871.0 193.8 L870.1 194.5 L869.3 195.2 L868.5 195.8 L867.6 196.5 L866.8 197.2 L866.0 197.8 L865.2 198.5 L864.3 199.2 L863.5 199.9 L862.7 200.6 L861.8 201.3 L861.0 201.9 L860.2 202.6 L859.4 203.3 L858.5 204.0 L857.7 204.7 L856.9 205.4 L856.0 206.1 L855.2 206.8 L854.4 207.5 L853.6 208.2 L852.7 208.9 L851.9 209.6 L851.1 210.4 L850.3 211.1 L849.5 211.8 L848.6 212.5 L847.8 213.2 L847.0 213.9 L846.2 214.7 L845.3 215.4 L844.5 216.1 L843.7 216.8 L842.9 217.6 L842.1 218.3 L841.2 219.0 L840.4 219.7 L839.6 220.5 L838.8 221.2 L838.0 221.9 L837.2 222.7 L836.4 223.4 L835.5 224.2 L834.7 224.9 L833.9 225.6 L833.1 226.4 L832.3 227.1 L831.5 227.9 L830.7 228.6 L829.9 229.4 L829.1 230.1 L828.3 230.9 L827.5 231.6 L826.7 232.4 L825.9 233.1 L825.1 233.9 L824.3 234.7 L823.5 235.4 L822.7 236.2 L821.9 236.9 L821.1 237.7 L820.3 238.5 L819.5 239.2 L818.7 240.0 L817.9 240.8 L817.1 241.5 L816.3 242.3 L815.5 243.1 L814.7 243.8 L814.0 244.6 L813.2 245.4 L812.4 246.1 L811.6 246.9 L810.8 247.7 L810.1 248.5 L809.3 249.2 L808.5 250.0 L807.7 250.8 L807.0 251.6 L806.2 252.3 L805.4 253.1 L804.6 253.9 L803.9 254.7 L803.1 255.5 L802.4 256.2 L801.6 257.0 L800.8 257.8 L800.1 258.6 L799.3 259.4 L798.6 260.2 L797.8 261.0 L797.1 261.7 L796.3 262.5 L795.6 263.3 L794.8 264.1 L794.1 264.9 L793.3 265.7 L792.6 266.5 L791.9 267.3 L791.1 268.1 L790.4 268.9 L789.6 269.6 L788.9 270.4 L788.2 271.2 L787.5 272.0 L786.7 272.8 L786.0 273.6 L785.3 274.4 L784.6 275.2 L783.9 276.0 L783.1 276.8 L782.4 277.6 L781.7 278.4 L781.0 279.2 L780.3 280.0 L779.6 280.8 L778.9 281.6 L778.2 282.4" fill="none" stroke="#4ec36b" stroke-width="1.39" stroke-dasharray="1.39 2.29"/>
<path d="M1185.3 261.7 L1184.2 261.0 L1183.1 260.4 L1182.0 259.7 L1180.9 259.0 L1179.8 258.3 L1178.6 257.7 L1177.5 257.0 L1176.4 256.4 L1175.3 255.7 L1174.2 255.0 L1173.0 254.4 L1171.9 253.7 L1170.8 253.0 L1169.6 252.4 L1168.5 251.7 L1167.3 251.1 L1166.2 250.4 L1165.0 249.8 L1163.9 249.1 L1162.7 248.5 L1161.6 247.8 L1160.4 247.2 L1159.3 246.5 L1158.1 245.9 L1156.9 245.2 L1155.8 244.6 L1154.6 244.0 L1153.4 243.3 L1152.2 242.7 L1151.1 242.1 L1149.9 241.4 L1148.7 240.8 L1147.5 240.2 L1146.4 239.5 L1145.2 238.9 L1144.0 238.3 L1142.8 237.6 L1141.6 237.0 L1140.4 236.4 L1139.2 235.8 L1138.0 235.2 L1136.8 234.6 L1135.6 233.9 L1134.4 233.3 L1133.2 232.7 L1132.0 232.1 L1130.8 231.5 L1129.6 230.9 L1128.4 230.3 L1127.2 229.7 L1126.0 229.1 L1124.8 228.5 L1123.6 227.9 L1122.4 227.3 L1121.2 226.7 L1119.9 226.1 L1118.7 225.5 L1117.5 225.0 L1116.3 224.4 L1115.1 223.8 L1113.9 223.2 L1112.7 222.6 L1111.4 222.1 L1110.2 221.5 L1109.0 220.9 L1107.8 220.3 L1106.6 219.8 L1105.3 219.2 L1104.1 218.7 L1102.9 218.1 L1101.7 217.5 L1100.5 217.0 L1099.2 216.4 L1098.0 215.9 L1096.8 215.3 L1095.6 214.8 L1094.4 214.3 L1093.1 213.7 L1091.9 213.2 L1090.7 212.7 L1089.5 212.1 L1088.3 211.6 L1087.0 211.1 L1085.8 210.5 L1084.6 210.0 L1083.4 209.5 L1082.2 209.0 L1080.9 208.5 L1079.7 208.0 L1078.5 207.5 L1077.3 207.0 L1076.1 206.5 L1074.9 206.0 L1073.6 205.5 L1072.4 205.0 L1071.2 204.5 L1070.0 204.0 L1068.8 203.5 L1067.6 203.1 L1066.4 202.6 L1065.2 202.1 L1064.0 201.6 L1062.8 201.2 L1061.6 200.7 L1060.4 200.2 L1059.2 199.8 L1058.0 199.3 L1056.8 198.9 L1055.6 198.4 L1054.4 198.0 L1053.2 197.6 L1052.0 197.1 L1050.8 196.7 L1049.6 196.3 L1048.4 195.8 L1047.2 195.4 L1046.0 195.0 L1044.8 194.6 L1043.6 194.2 L1042.5 193.8 L1041.3 193.4 L1040.1 193.0 L1038.9 192.6 L1037.8 192.2 L1036.6 191.8 L1035.4 191.4 L1034.2 191.0 L1033.1 190.7 L1031.9 190.3 L1030.7 189.9 L1029.6 189.6 L1028.4 189.2 L1027.3 188.9 L1026.1 188.5 L1024.9 188.2 L1023.8 187.8 L1022.6 187.5 L1021.5 187.2 L1020.3 186.8 L1019.2 186.5 L1018.1 186.2 L1016.9 185.9 L1015.8 185.6 L1014.6 185.2 L1013.5 184.9 L1012.4 184.6 L1011.2 184.4 L1010.1 184.1 L1009.0 183.8 L1007.9 183.5 L1006.7 183.2 L1005.6 183.0 L1004.5 182.7 L1003.4 182.4 L1002.3 182.2 L1001.2 181.9 L1000.0 181.7 L998.9 181.4 L997.8 181.2 L996.7 181.0 L995.6 180.7 L994.5 180.5 L993.4 180.3 L992.3 180.1 L991.2 179.9 L990.2 179.7 L989.1 179.5 L988.0 179.3 L986.9 179.1 L985.8 178.9 L984.7 178.8 L983.7 178.6 L982.6 178.4 L981.5 178.3 L980.4 178.1 L979.4 178.0 L978.3 177.8 L977.2 177.7 L976.2 177.5 L975.1 177.4 L974.1 177.3 L973.0 177.2 L971.9 177.0 L970.9 176.9 L969.8 176.8 L968.8 176.7 L967.7 176.6 L966.7 176.6 L965.6 176.5 L964.6 176.4 L963.6 176.3 L962.5 176.3 L961.5 176.2 L960.4 176.1 L959.4 176.1 L958.4 176.1 L957.4 176.0 L956.3 176.0 L955.3 176.0 L954.3 175.9 L953.2 175.9 L952.2 175.9 L951.2 175.9 L950.2 175.9 L949.2 175.9 L948.1 175.9 L947.1 175.9 L946.1 176.0 L945.1 176.0 L944.1 176.0 L943.1 176.0 L942.1 176.1 L941.0 176.1 L940.0 176.2 L939.0 176.3 L938.0 176.3 L937.0 176.4 L936.0 176.5 L935.0 176.5 L934.0 176.6 L933.0 176.7 L932.0 176.8 L931.0 176.9 L930.0 177.0 L929.0 177.1 L928.0 177.3 L927.0 177.4 L926.0 177.5 L925.0 177.7 L924.0 177.8 L923.0 177.9 L922.0 178.1 L921.0 178.2 L920.0 178.4 L919.0 178.6 L918.1 178.7 L917.1 178.9 L916.1 179.1 L915.1 179.3 L914.1 179.5 L913.1 179.7 L912.1 179.9 L911.1 180.1 L910.1 180.3 L909.1 180.5 L908.1 180.7 L907.2 181.0 L906.2 181.2 L905.2 181.4 L904.2 181.7 L903.2 181.9 L902.2 182.2 L901.2 182.4 L900.2 182.7 L899.2 182.9 L898.3 183.2 L897.3 183.5 L896.3 183.8 L895.3 184.0 L894.3 184.3 L893.3 184.6 L892.3 184.9 L891.3 185.2 L890.3 185.5 L889.3 185.8 L888.4 186.2 L887.4 186.5 L886.4 186.8 L885.4 187.1 L884.4 187.5 L883.4 187.8 L882.4 188.1 L881.4 188.5 L880.4 188.8 L879.4 189.2 L878.4 189.5 L877.4 189.9 L876.4 190.3 L875.4 190.6 L874.4 191.0 L873.5 191.4 L872.5 191.8 L871.5 192.2 L870.5 192.6 L869.5 192.9 L868.5 193.3 L867.5 193.7 L866.5 194.2 L865.5 194.6 L864.5 195.0 L863.5 195.4 L862.5 195.8 L861.5 196.2 L860.5 196.7 L859.5 197.1 L858.5 197.5 L857.5 198.0 L856.5 198.4 L855.5 198.9 L854.5 199.3 L853.4 199.8 L852.4 200.2 L851.4 200.7 L850.4 201.1 L849.4 201.6 L848.4 202.1 L847.4 202.5 L846.4 203.0 L845.4 203.5 L844.4 204.0 L843.4 204.5 L842.4 204.9 L841.4 205.4 L840.4 205.9 L839.4 206.4 L838.3 206.9 L837.3 207.4 L836.3 207.9 L835.3 208.4 L834.3 209.0 L833.3 209.5 L832.3 210.0 L831.3 210.5 L830.3 211.0 L829.3 211.6 L828.2 212.1 L827.2 212.6 L826.2 213.1 L825.2 213.7 L824.2 214.2 L823.2 214.8 L822.2 215.3 L821.2 215.8 L820.2 216.4 L819.1 216.9 L818.1 217.5 L817.1 218.1 L816.1 218.6 L815.1 219.2 L814.1 219.7 L813.1 220.3 L812.1 220.9 L811.1 221.4 L810.1 222.0 L809.0 222.6 L808.0 223.2 L807.0 223.7 L806.0 224.3 L805.0 224.9 L804.0 225.5 L803.0 226.1 L802.0 226.7 L801.0 227.3 L800.0 227.8 L799.0 228.4 L798.0 229.0 L797.0 229.6 L796.0 230.2 L794.9 230.8 L793.9 231.5 L792.9 232.1 L791.9 232.7 L790.9 233.3 L789.9 233.9 L788.9 234.5 L787.9 235.1 L786.9 235.7 L785.9 236.4 L784.9 237.0 L783.9 237.6 L783.0 238.2 L782.0 238.8 L781.0 239.5 L780.0 240.1 L779.0 240.7 L778.0 241.4 L777.0 242.0 L776.0 242.6 L775.0 243.3 L774.0 243.9 L773.0 244.6 L772.1 245.2 L771.1 245.8 L770.1 246.5 L769.1 247.1 L768.1 247.8 L767.1 248.4 L766.2 249.1 L765.2 249.7 L764.2 250.4 L763.2 251.0 L762.3 251.7 L761.3 252.3 L760.3 253.0 L759.4 253.7 L758.4 254.3 L757.4 255.0 L756.5 255.6 L755.5 256.3" fill="none" stroke="#25848e" stroke-width="1.39" stroke-dasharray="1.39 2.29"/>
<path d="M1061.6 105.1 L1078.9 117.1" stroke="#8c8c8c" stroke-width="1.39"/>
<path d="M1172.2 168.4 L1182.0 176.0" stroke="#8c8c8c" stroke-width="1.39"/>
<path d="M1187.3 191.1 L1208.2 197.8" stroke="#8c8c8c" stroke-width="1.39"/>
<path d="M952.9 128.4 L958.2 124.9" stroke="#8c8c8c" stroke-width="1.39"/>
<path d="M1036.2 98.9 L1068.9 124.0" stroke="#29af7f" stroke-width="1.6"/>
<circle cx="1068.9" cy="124.0" r="1.3" fill="#f4603e"/>
<path d="M1065.1 174.2 L1074.9 182.9" stroke="#29af7f" stroke-width="1.6"/>
<circle cx="1074.9" cy="182.9" r="1.3" fill="#f4603e"/>
<path d="M1180.2 208.0 L1213.1 224.9" stroke="#4ec36b" stroke-width="1.6"/>
<circle cx="1213.1" cy="224.9" r="1.3" fill="#f4603e"/>
<path d="M1185.3 261.7 L1194.0 267.0" stroke="#25848e" stroke-width="1.6"/>
<circle cx="1194.0" cy="267.0" r="1.3" fill="#f4603e"/>
<path d="M626.7 268.8 L626.3 269.6 L625.9 270.5 L625.4 271.3 L625.0 272.2 L624.5 273.0 L624.0 273.8 L623.4 274.7 L622.9 275.5 L622.3 276.3 L621.7 277.1 L621.1 277.9 L620.5 278.7 L619.8 279.4 L619.2 280.2 L618.5 280.9 L617.8 281.6 L617.1 282.3 L616.4 283.0 L615.6 283.7 L614.9 284.3 L614.1 285.0 L613.3 285.6 L612.5 286.2 L611.7 286.7 L610.9 287.3 L610.1 287.8 L609.2 288.3 L608.4 288.8 L607.6 289.2 L606.7 289.6 L605.8 290.0 L605.0 290.4 L604.1 290.8 L603.2 291.1 L602.4 291.4 L601.5 291.6 L600.6 291.9 L599.7 292.1 L598.8 292.3 L597.9 292.4 L597.1 292.5 L596.2 292.6 L595.3 292.7 L594.5 292.7 L593.6 292.8 L592.8 292.7 L591.9 292.7 L591.1 292.6 L590.3 292.5 L589.4 292.4 L588.7 292.2 L587.9 292.0 L587.1 291.8 L586.3 291.5 L585.6 291.2 L584.9 290.9 L584.2 290.6 L583.5 290.2 L582.9 289.8 L582.2 289.4 L581.6 289.0 L581.0 288.5 L580.5 288.0 L580.0 287.5 L579.5 287.0 L579.0 286.4 L578.5 285.9 L578.1 285.3 L577.7 284.6 L577.4 284.0 L577.1 283.3 L576.8 282.7 L576.5 282.0 L576.3 281.3 L576.1 280.5 L576.0 279.8 L575.9 279.0 L575.8 278.3 L575.8 277.5 L575.8 276.7 L575.9 275.9 L575.9 275.1 L576.1 274.2 L576.2 273.4 L576.4 272.6 L576.7 271.7 L576.9 270.9 L577.3 270.0 L577.6 269.2 L578.0 268.3 L578.4 267.5 L578.9 266.6 L579.4 265.8 L579.9 264.9 L580.5 264.1 L581.1 263.2 L581.7 262.4 L582.4 261.6 L583.1 260.7 L583.8 259.9 L584.6 259.1 L585.4 258.3 L586.2 257.5 L587.0 256.8 L587.9 256.0 L588.7 255.3 L589.6 254.5 L590.6 253.8 L591.5 253.1 L592.4 252.5 L593.4 251.8 L594.4 251.2 L595.4 250.6 L596.4 250.0 L597.4 249.4 L598.4 248.9 L599.4 248.4 L600.5 247.9 L601.5 247.4 L602.5 247.0 L603.5 246.6 L604.6 246.2 L605.6 245.8 L606.6 245.5 L607.6 245.2 L608.6 244.9 L609.6 244.7 L610.5 244.5 L611.5 244.3 L612.4 244.1 L613.4 244.0 L614.3 243.9 L615.2 243.9 L616.0 243.8 L616.9 243.9 L617.7 243.9 L618.5 244.0 L619.3 244.1 L620.1 244.2 L620.8 244.4 L621.5 244.6 L622.2 244.8 L622.8 245.0 L623.5 245.3 L624.1 245.6 L624.6 246.0 L625.2 246.4 L625.7 246.8 L626.2 247.2 L626.6 247.6 L627.0 248.1 L627.4 248.6 L627.8 249.2 L628.1 249.7 L628.4 250.3 L628.7 250.9 L628.9 251.5 L629.1 252.1 L629.3 252.8 L629.4 253.5 L629.5 254.2 L629.6 254.9 L629.7 255.6 L629.7 256.4 L629.7 257.1 L629.7 257.9 L629.6 258.7 L629.5 259.5 L629.4 260.3 L629.2 261.1 L629.1 262.0 L628.9 262.8 L628.6 263.6 L628.4 264.5 L628.1 265.3 L627.8 266.2 L627.5 267.0 L627.1 267.9 L626.7 268.8Z" fill="none" stroke="#29af7f" stroke-width="2.2"/>
<path d="M772.8 245.3 L772.5 246.2 L772.2 247.0 L771.8 247.9 L771.4 248.7 L771.0 249.6 L770.6 250.4 L770.1 251.2 L769.6 252.0 L769.1 252.8 L768.6 253.6 L768.0 254.4 L767.5 255.2 L766.9 255.9 L766.2 256.7 L765.6 257.4 L764.9 258.1 L764.3 258.8 L763.6 259.5 L762.9 260.2 L762.1 260.8 L761.4 261.4 L760.6 262.0 L759.9 262.6 L759.1 263.2 L758.3 263.7 L757.5 264.2 L756.7 264.7 L755.8 265.2 L755.0 265.6 L754.2 266.0 L753.3 266.4 L752.4 266.8 L751.6 267.1 L750.7 267.5 L749.8 267.8 L749.0 268.0 L748.1 268.2 L747.2 268.5 L746.3 268.6 L745.4 268.8 L744.6 268.9 L743.7 269.0 L742.8 269.1 L742.0 269.1 L741.1 269.1 L740.2 269.1 L739.4 269.0 L738.6 269.0 L737.8 268.8 L736.9 268.7 L736.1 268.5 L735.4 268.4 L734.6 268.1 L733.8 267.9 L733.1 267.6 L732.4 267.3 L731.7 267.0 L731.0 266.6 L730.3 266.2 L729.7 265.8 L729.1 265.4 L728.5 265.0 L727.9 264.5 L727.4 264.0 L726.8 263.4 L726.3 262.9 L725.9 262.3 L725.4 261.7 L725.0 261.1 L724.7 260.5 L724.3 259.8 L724.0 259.2 L723.7 258.5 L723.5 257.8 L723.2 257.1 L723.0 256.3 L722.9 255.6 L722.8 254.8 L722.7 254.0 L722.6 253.2 L722.6 252.4 L722.6 251.6 L722.7 250.8 L722.8 250.0 L722.9 249.1 L723.1 248.3 L723.3 247.5 L723.5 246.6 L723.8 245.8 L724.1 244.9 L724.4 244.1 L724.8 243.2 L725.2 242.3 L725.6 241.5 L726.1 240.6 L726.6 239.8 L727.1 239.0 L727.6 238.1 L728.2 237.3 L728.8 236.5 L729.5 235.7 L730.2 234.9 L730.8 234.1 L731.6 233.3 L732.3 232.5 L733.1 231.8 L733.9 231.1 L734.7 230.3 L735.5 229.6 L736.3 229.0 L737.2 228.3 L738.1 227.7 L738.9 227.0 L739.8 226.4 L740.8 225.9 L741.7 225.3 L742.6 224.8 L743.5 224.3 L744.5 223.8 L745.4 223.4 L746.4 223.0 L747.3 222.6 L748.3 222.2 L749.2 221.9 L750.2 221.6 L751.1 221.3 L752.0 221.0 L753.0 220.8 L753.9 220.6 L754.8 220.5 L755.7 220.4 L756.6 220.3 L757.5 220.2 L758.3 220.2 L759.2 220.2 L760.0 220.2 L760.9 220.3 L761.7 220.4 L762.4 220.6 L763.2 220.7 L764.0 220.9 L764.7 221.2 L765.4 221.4 L766.1 221.7 L766.7 222.0 L767.4 222.4 L768.0 222.8 L768.5 223.2 L769.1 223.6 L769.6 224.1 L770.1 224.5 L770.6 225.1 L771.1 225.6 L771.5 226.2 L771.9 226.7 L772.3 227.4 L772.6 228.0 L772.9 228.6 L773.2 229.3 L773.5 230.0 L773.7 230.7 L773.9 231.4 L774.1 232.2 L774.2 232.9 L774.3 233.7 L774.4 234.5 L774.5 235.3 L774.5 236.1 L774.5 236.9 L774.4 237.7 L774.4 238.5 L774.3 239.4 L774.2 240.2 L774.0 241.1 L773.8 241.9 L773.6 242.8 L773.4 243.6 L773.1 244.5 L772.8 245.3Z" fill="none" stroke="#25848e" stroke-width="2.2"/>
<path d="M799.2 279.2 L799.1 280.1 L798.9 280.9 L798.7 281.8 L798.5 282.6 L798.2 283.5 L798.0 284.3 L797.6 285.1 L797.3 285.9 L797.0 286.8 L796.6 287.6 L796.2 288.3 L795.7 289.1 L795.3 289.9 L794.8 290.6 L794.3 291.4 L793.8 292.1 L793.2 292.8 L792.7 293.5 L792.1 294.2 L791.5 294.8 L790.9 295.5 L790.2 296.1 L789.5 296.7 L788.9 297.2 L788.2 297.8 L787.4 298.3 L786.7 298.8 L786.0 299.3 L785.2 299.7 L784.4 300.2 L783.7 300.6 L782.9 301.0 L782.1 301.3 L781.3 301.6 L780.4 301.9 L779.6 302.2 L778.8 302.4 L777.9 302.6 L777.1 302.8 L776.2 303.0 L775.4 303.1 L774.5 303.2 L773.6 303.3 L772.8 303.3 L771.9 303.3 L771.1 303.3 L770.2 303.2 L769.4 303.1 L768.5 303.0 L767.7 302.9 L766.9 302.7 L766.1 302.5 L765.2 302.3 L764.5 302.1 L763.7 301.8 L762.9 301.5 L762.1 301.1 L761.4 300.8 L760.7 300.4 L759.9 300.0 L759.2 299.5 L758.6 299.1 L757.9 298.6 L757.3 298.0 L756.7 297.5 L756.1 297.0 L755.5 296.4 L754.9 295.8 L754.4 295.1 L753.9 294.5 L753.5 293.8 L753.0 293.2 L752.6 292.5 L752.2 291.7 L751.9 291.0 L751.6 290.3 L751.3 289.5 L751.0 288.7 L750.8 288.0 L750.6 287.2 L750.4 286.3 L750.3 285.5 L750.2 284.7 L750.1 283.9 L750.1 283.0 L750.1 282.2 L750.1 281.3 L750.2 280.5 L750.3 279.6 L750.4 278.8 L750.5 277.9 L750.7 277.1 L751.0 276.2 L751.2 275.4 L751.5 274.5 L751.9 273.7 L752.2 272.8 L752.6 272.0 L753.0 271.2 L753.5 270.4 L753.9 269.6 L754.4 268.8 L755.0 268.0 L755.5 267.2 L756.1 266.5 L756.7 265.8 L757.3 265.0 L758.0 264.3 L758.7 263.6 L759.4 263.0 L760.1 262.3 L760.8 261.7 L761.6 261.1 L762.3 260.5 L763.1 259.9 L763.9 259.4 L764.7 258.9 L765.6 258.4 L766.4 257.9 L767.3 257.5 L768.1 257.1 L769.0 256.7 L769.8 256.3 L770.7 256.0 L771.6 255.7 L772.5 255.5 L773.4 255.2 L774.2 255.0 L775.1 254.8 L776.0 254.7 L776.9 254.6 L777.7 254.5 L778.6 254.4 L779.5 254.4 L780.3 254.4 L781.2 254.4 L782.0 254.5 L782.8 254.6 L783.7 254.7 L784.5 254.9 L785.2 255.1 L786.0 255.3 L786.8 255.6 L787.5 255.9 L788.3 256.2 L789.0 256.5 L789.7 256.9 L790.3 257.3 L791.0 257.7 L791.6 258.2 L792.2 258.6 L792.8 259.1 L793.4 259.7 L793.9 260.2 L794.5 260.8 L795.0 261.4 L795.4 262.0 L795.9 262.6 L796.3 263.3 L796.7 264.0 L797.1 264.7 L797.5 265.4 L797.8 266.1 L798.1 266.9 L798.3 267.6 L798.6 268.4 L798.8 269.2 L799.0 270.0 L799.2 270.8 L799.3 271.6 L799.4 272.4 L799.5 273.3 L799.5 274.1 L799.5 274.9 L799.5 275.8 L799.5 276.6 L799.4 277.5 L799.3 278.4 L799.2 279.2Z" fill="none" stroke="#4ec36b" stroke-width="2.2"/>
<text x="593.31" y="272.0" font-family='"Liberation Sans", sans-serif' font-size="11.00" fill="#fff" textLength="18.35" lengthAdjust="spacingAndGlyphs" >ORI</text>
<text x="738.70" y="248.3" font-family='"Liberation Sans", sans-serif' font-size="11.00" fill="#fff" textLength="19.83" lengthAdjust="spacingAndGlyphs" >CTA</text>
<text x="765.40" y="282.5" font-family='"Liberation Sans", sans-serif' font-size="11.00" fill="#fff" textLength="19.01" lengthAdjust="spacingAndGlyphs" >STA</text>
<path d="M607.1 270.8 H613.5 M610.3 267.6 V274.0" stroke="#ff0000" stroke-width="1.25"/>
<path d="M752.3 256.3 H758.7 M755.5 253.1 V259.5" stroke="#ff0000" stroke-width="1.25"/>
<path d="M775.0 282.4 H781.4 M778.2 279.2 V285.6" stroke="#ff0000" stroke-width="1.25"/>
<text x="316.0" y="29.9" font-family='"Liberation Mono", monospace' font-size="14.20" fill="#fff" text-anchor="start" textLength="50.2" lengthAdjust="spacingAndGlyphs" >UK003F</text>
<text x="316.0" y="42.8" font-family='"Liberation Mono", monospace' font-size="14.20" fill="#fff" text-anchor="start" textLength="317.8" lengthAdjust="spacingAndGlyphs" >Beg: 20251021 20:42:32 (sol = 208.35°)</text>
<text x="316.0" y="56.8" font-family='"Liberation Mono", monospace' font-size="14.20" fill="#fff" text-anchor="start" textLength="317.8" lengthAdjust="spacingAndGlyphs" >End: 20251022 01:00:02 (sol = 208.53°)</text>
<text x="316.0" y="68.8" font-family='"Liberation Mono", monospace' font-size="14.20" fill="#fff" text-anchor="start" textLength="317.8" lengthAdjust="spacingAndGlyphs" >--------------------------------------</text>
<text x="316.0" y="81.9" font-family='"Liberation Mono", monospace' font-size="14.20" fill="#fff" text-anchor="start" textLength="50.2" lengthAdjust="spacingAndGlyphs" >...: 4</text>
<text x="316.0" y="95.0" font-family='"Liberation Mono", monospace' font-size="14.20" fill="#fff" text-anchor="start" textLength="50.2" lengthAdjust="spacingAndGlyphs" >ORI: 2</text>
<text x="316.0" y="108.2" font-family='"Liberation Mono", monospace' font-size="14.20" fill="#fff" text-anchor="start" textLength="50.2" lengthAdjust="spacingAndGlyphs" >CTA: 1</text>
<text x="316.0" y="121.5" font-family='"Liberation Mono", monospace' font-size="14.20" fill="#fff" text-anchor="start" textLength="50.2" lengthAdjust="spacingAndGlyphs" >STA: 1</text>
<path d="M75.0 842.5 V641.5 M219.3 842.5 V641.5 M365.0 842.5 V641.5 M506.0 842.5 V641.5 M651.1 842.5 V641.5 M796.8 842.5 V641.5 M940.0 842.5 V641.5 M1091.0 842.5 V641.5 M1239.2 842.5 V641.5 M1394.0 842.5 V641.5 M1548.0 842.5 V641.5 M1687.2 842.5 V641.5" stroke="#808080" stroke-width="2.08" stroke-dasharray="2.08 3.44" opacity="0.7"/>
<text transform="translate(148.7,697.69) rotate(-90)" font-family='"Liberation Sans", sans-serif' font-size="29.3" fill="#5a5a5a" textLength="55.35" lengthAdjust="spacingAndGlyphs">APR</text>
<text transform="translate(295.2,700.13) rotate(-90)" font-family='"Liberation Sans", sans-serif' font-size="29.3" fill="#5a5a5a" textLength="58.00" lengthAdjust="spacingAndGlyphs">MAY</text>
<text transform="translate(436.2,691.95) rotate(-90)" font-family='"Liberation Sans", sans-serif' font-size="29.3" fill="#5a5a5a" textLength="50.54" lengthAdjust="spacingAndGlyphs">JUN</text>
<text transform="translate(578.2,686.65) rotate(-90)" font-family='"Liberation Sans", sans-serif' font-size="29.3" fill="#5a5a5a" textLength="46.57" lengthAdjust="spacingAndGlyphs">JUL</text>
<text transform="translate(724.2,703.50) rotate(-90)" font-family='"Liberation Sans", sans-serif' font-size="29.3" fill="#5a5a5a" textLength="60.51" lengthAdjust="spacingAndGlyphs">AUG</text>
<text transform="translate(871.9,694.08) rotate(-90)" font-family='"Liberation Sans", sans-serif' font-size="29.3" fill="#5a5a5a" textLength="51.70" lengthAdjust="spacingAndGlyphs">SEP</text>
<text transform="translate(1016.9,700.79) rotate(-90)" font-family='"Liberation Sans", sans-serif' font-size="29.3" fill="#5a5a5a" textLength="58.71" lengthAdjust="spacingAndGlyphs">OCT</text>
<text transform="translate(1169.7,703.54) rotate(-90)" font-family='"Liberation Sans", sans-serif' font-size="29.3" fill="#5a5a5a" textLength="60.63" lengthAdjust="spacingAndGlyphs">NOV</text>
<text transform="translate(1319.2,700.65) rotate(-90)" font-family='"Liberation Sans", sans-serif' font-size="29.3" fill="#5a5a5a" textLength="57.38" lengthAdjust="spacingAndGlyphs">DEC</text>
<text transform="translate(1469.2,690.13) rotate(-90)" font-family='"Liberation Sans", sans-serif' font-size="29.3" fill="#5a5a5a" textLength="48.71" lengthAdjust="spacingAndGlyphs">JAN</text>
<text transform="translate(1628.0,694.84) rotate(-90)" font-family='"Liberation Sans", sans-serif' font-size="29.3" fill="#5a5a5a" textLength="51.47" lengthAdjust="spacingAndGlyphs">FEB</text>
<text transform="translate(1766.0,704.65) rotate(-90)" font-family='"Liberation Sans", sans-serif' font-size="29.3" fill="#5a5a5a" textLength="62.35" lengthAdjust="spacingAndGlyphs">MAR</text>
<path d="M106.0 834.0 H130.0 M165.0 834.0 H345.1 M366.0 834.0 H624.9 M636.0 834.0 H786.9 M807.1 834.0 H899.9 M919.8 834.0 H973.0 M984.0 834.0 H1066.0 M1082.0 834.0 H1204.0 M1244.0 834.0 H1326.0 M1337.0 834.0 H1356.0 M1381.0 834.0 H1444.0 M1459.1 834.0 H1511.9 M1523.1 834.0 H1547.0 M1724.0 834.0 H1748.0 M1758.0 834.0 H1781.9" stroke="#bddf26" stroke-width="4.2"/>
<path d="M165.0 818.0 H189.0 M224.0 818.0 H287.1 M312.0 818.0 H341.2 M366.0 818.0 H493.1 M508.0 818.0 H653.7 M704.0 818.0 H738.0 M773.0 818.0 H846.0 M870.9 818.0 H987.8 M1003.0 818.0 H1016.8 M1062.0 818.0 H1213.0 M1244.0 818.0 H1267.0 M1293.0 818.0 H1316.0 M1342.0 818.0 H1365.0 M1386.0 818.0 H1429.0 M1459.0 818.0 H1482.8 M1548.0 818.0 H1571.0" stroke="#81d34d" stroke-width="4.2"/>
<path d="M165.0 801.9 H189.0 M257.9 801.9 H488.0 M508.0 801.9 H615.0 M626.2 801.9 H717.8 M729.0 801.9 H826.0 M949.1 801.9 H1150.0 M1160.0 801.9 H1248.0 M1258.0 801.9 H1444.0 M1459.0 801.9 H1482.8 M1553.0 801.9 H1576.0" stroke="#4ec36b" stroke-width="4.2"/>
<path d="M194.0 785.0 H218.1 M322.0 785.0 H507.0 M518.0 785.0 H541.8 M557.2 785.0 H683.9 M807.1 785.0 H830.9 M954.1 785.0 H973.0 M989.1 785.0 H1125.0 M1155.0 785.0 H1218.0 M1244.0 785.0 H1267.0 M1317.0 785.0 H1341.0 M1396.0 785.0 H1419.0 M1464.1 785.0 H1650.0" stroke="#29af7f" stroke-width="4.2"/>
<path d="M341.0 768.9 H370.0 M410.0 768.9 H448.0 M469.0 768.9 H493.0 M528.0 768.9 H545.8 M562.0 768.9 H591.0 M616.0 768.9 H648.9 M959.0 768.9 H988.0 M1062.1 768.9 H1086.0 M1101.2 768.9 H1125.0 M1160.0 768.9 H1193.8 M1249.0 768.9 H1272.0 M1425.0 768.9 H1512.0" stroke="#1f9a8a" stroke-width="4.2"/>
<path d="M419.9 752.0 H444.0 M533.0 752.0 H555.9 M567.1 752.0 H591.0 M621.0 752.0 H742.9 M969.0 752.0 H1135.0 M1185.0 752.0 H1346.0 M1469.0 752.0 H1493.0" stroke="#25848e" stroke-width="4.2"/>
<path d="M430.0 735.9 H453.1 M577.0 735.9 H733.0 M993.9 735.9 H1104.8 M1116.0 735.9 H1222.8 M1263.0 735.9 H1291.8 M1489.0 735.9 H1512.0" stroke="#2e6f8e" stroke-width="4.2"/>
<path d="M592.0 719.9 H615.0 M655.1 719.9 H771.9 M1072.0 719.9 H1243.0 M1263.0 719.9 H1286.8" stroke="#38588c" stroke-width="4.2"/>
<path d="M596.1 703.0 H733.0 M1092.0 703.0 H1120.0 M1200.0 703.0 H1223.0 M1273.0 703.0 H1326.0" stroke="#433e85" stroke-width="4.2"/>
<path d="M1111.2 687.0 H1135.0" stroke="#482173" stroke-width="4.2"/>
<text x="108.07" y="830.9" font-family='"Liberation Sans", sans-serif' font-size="11.00" fill="#fff" textLength="19.56" lengthAdjust="spacingAndGlyphs" >KSE</text>
<text x="245.71" y="830.9" font-family='"Liberation Sans", sans-serif' font-size="11.00" fill="#fff" textLength="19.01" lengthAdjust="spacingAndGlyphs" >ETA</text>
<text x="484.47" y="830.9" font-family='"Liberation Sans", sans-serif' font-size="11.00" fill="#fff" textLength="21.90" lengthAdjust="spacingAndGlyphs" >NZC</text>
<text x="699.93" y="830.9" font-family='"Liberation Sans", sans-serif' font-size="11.00" fill="#fff" textLength="22.55" lengthAdjust="spacingAndGlyphs" >NDA</text>
<text x="843.88" y="830.9" font-family='"Liberation Sans", sans-serif' font-size="11.00" fill="#fff" textLength="18.97" lengthAdjust="spacingAndGlyphs" >SPE</text>
<text x="935.39" y="830.9" font-family='"Liberation Sans", sans-serif' font-size="11.00" fill="#fff" textLength="22.22" lengthAdjust="spacingAndGlyphs" >ARD</text>
<text x="1014.58" y="830.9" font-family='"Liberation Sans", sans-serif' font-size="11.00" fill="#fff" textLength="20.78" lengthAdjust="spacingAndGlyphs" >EGE</text>
<text x="1132.58" y="830.9" font-family='"Liberation Sans", sans-serif' font-size="11.00" fill="#fff" textLength="20.25" lengthAdjust="spacingAndGlyphs" >NTA</text>
<text x="1272.52" y="830.9" font-family='"Liberation Sans", sans-serif' font-size="11.00" fill="#fff" textLength="24.67" lengthAdjust="spacingAndGlyphs" >MON</text>
<text x="1333.09" y="830.9" font-family='"Liberation Sans", sans-serif' font-size="11.00" fill="#fff" textLength="21.23" lengthAdjust="spacingAndGlyphs" >URS</text>
<text x="1401.74" y="830.9" font-family='"Liberation Sans", sans-serif' font-size="11.00" fill="#fff" textLength="21.52" lengthAdjust="spacingAndGlyphs" >AHY</text>
<text x="1473.61" y="830.9" font-family='"Liberation Sans", sans-serif' font-size="11.00" fill="#fff" textLength="24.48" lengthAdjust="spacingAndGlyphs" >GUM</text>
<text x="1523.82" y="830.9" font-family='"Liberation Sans", sans-serif' font-size="11.00" fill="#fff" textLength="22.56" lengthAdjust="spacingAndGlyphs" >QHY</text>
<text x="1725.27" y="830.9" font-family='"Liberation Sans", sans-serif' font-size="11.00" fill="#fff" textLength="21.26" lengthAdjust="spacingAndGlyphs" >XHE</text>
<text x="1762.08" y="830.9" font-family='"Liberation Sans", sans-serif' font-size="11.00" fill="#fff" textLength="16.53" lengthAdjust="spacingAndGlyphs" >EVI</text>
<text x="166.40" y="814.9" font-family='"Liberation Sans", sans-serif' font-size="11.00" fill="#fff" textLength="20.51" lengthAdjust="spacingAndGlyphs" >AVB</text>
<text x="246.71" y="814.9" font-family='"Liberation Sans", sans-serif' font-size="11.00" fill="#fff" textLength="17.37" lengthAdjust="spacingAndGlyphs" >ELY</text>
<text x="312.16" y="814.9" font-family='"Liberation Sans", sans-serif' font-size="11.00" fill="#fff" textLength="23.18" lengthAdjust="spacingAndGlyphs" >CAM</text>
<text x="421.26" y="814.9" font-family='"Liberation Sans", sans-serif' font-size="11.00" fill="#fff" textLength="20.95" lengthAdjust="spacingAndGlyphs" >SSG</text>
<text x="568.64" y="814.9" font-family='"Liberation Sans", sans-serif' font-size="11.00" fill="#fff" textLength="20.41" lengthAdjust="spacingAndGlyphs" >PCA</text>
<text x="709.65" y="814.9" font-family='"Liberation Sans", sans-serif' font-size="11.00" fill="#fff" textLength="22.62" lengthAdjust="spacingAndGlyphs" >AUD</text>
<text x="798.30" y="814.9" font-family='"Liberation Sans", sans-serif' font-size="11.00" fill="#fff" textLength="22.12" lengthAdjust="spacingAndGlyphs" >AUR</text>
<text x="921.10" y="814.9" font-family='"Liberation Sans", sans-serif' font-size="11.00" fill="#fff" textLength="21.51" lengthAdjust="spacingAndGlyphs" >DSX</text>
<text x="998.82" y="814.9" font-family='"Liberation Sans", sans-serif' font-size="11.00" fill="#fff" textLength="22.90" lengthAdjust="spacingAndGlyphs" >OCU</text>
<text x="1126.85" y="814.9" font-family='"Liberation Sans", sans-serif' font-size="11.00" fill="#fff" textLength="22.10" lengthAdjust="spacingAndGlyphs" >OER</text>
<text x="1244.14" y="814.9" font-family='"Liberation Sans", sans-serif' font-size="11.00" fill="#fff" textLength="22.63" lengthAdjust="spacingAndGlyphs" >DKD</text>
<text x="1293.75" y="814.9" font-family='"Liberation Sans", sans-serif' font-size="11.00" fill="#fff" textLength="21.56" lengthAdjust="spacingAndGlyphs" >DSV</text>
<text x="1344.61" y="814.9" font-family='"Liberation Sans", sans-serif' font-size="11.00" fill="#fff" textLength="18.10" lengthAdjust="spacingAndGlyphs" >ALY</text>
<text x="1399.03" y="814.9" font-family='"Liberation Sans", sans-serif' font-size="11.00" fill="#fff" textLength="15.87" lengthAdjust="spacingAndGlyphs" >JLE</text>
<text x="1460.84" y="814.9" font-family='"Liberation Sans", sans-serif' font-size="11.00" fill="#fff" textLength="20.74" lengthAdjust="spacingAndGlyphs" >SCC</text>
<text x="1549.80" y="814.9" font-family='"Liberation Sans", sans-serif' font-size="11.00" fill="#fff" textLength="19.46" lengthAdjust="spacingAndGlyphs" >FEV</text>
<text x="167.93" y="798.8" font-family='"Liberation Sans", sans-serif' font-size="11.00" fill="#fff" textLength="17.94" lengthAdjust="spacingAndGlyphs" >LYR</text>
<text x="362.48" y="798.8" font-family='"Liberation Sans", sans-serif' font-size="11.00" fill="#fff" textLength="19.83" lengthAdjust="spacingAndGlyphs" >JMC</text>
<text x="550.52" y="798.8" font-family='"Liberation Sans", sans-serif' font-size="11.00" fill="#fff" textLength="16.33" lengthAdjust="spacingAndGlyphs" >JPE</text>
<text x="661.95" y="798.8" font-family='"Liberation Sans", sans-serif' font-size="11.00" fill="#fff" textLength="20.06" lengthAdjust="spacingAndGlyphs" >PAU</text>
<text x="766.06" y="798.8" font-family='"Liberation Sans", sans-serif' font-size="11.00" fill="#fff" textLength="17.78" lengthAdjust="spacingAndGlyphs" >NIA</text>
<text x="1040.08" y="798.8" font-family='"Liberation Sans", sans-serif' font-size="11.00" fill="#fff" textLength="19.01" lengthAdjust="spacingAndGlyphs" >STA</text>
<text x="1194.47" y="798.8" font-family='"Liberation Sans", sans-serif' font-size="11.00" fill="#fff" textLength="23.96" lengthAdjust="spacingAndGlyphs" >NOO</text>
<text x="1341.33" y="798.8" font-family='"Liberation Sans", sans-serif' font-size="11.00" fill="#fff" textLength="24.25" lengthAdjust="spacingAndGlyphs" >COM</text>
<text x="1460.20" y="798.8" font-family='"Liberation Sans", sans-serif' font-size="11.00" fill="#fff" textLength="21.98" lengthAdjust="spacingAndGlyphs" >NCC</text>
<text x="1554.24" y="798.8" font-family='"Liberation Sans", sans-serif' font-size="11.00" fill="#fff" textLength="20.28" lengthAdjust="spacingAndGlyphs" >FED</text>
<text x="197.25" y="781.9" font-family='"Liberation Sans", sans-serif' font-size="11.00" fill="#fff" textLength="17.86" lengthAdjust="spacingAndGlyphs" >HVI</text>
<text x="403.41" y="781.9" font-family='"Liberation Sans", sans-serif' font-size="11.00" fill="#fff" textLength="17.32" lengthAdjust="spacingAndGlyphs" >ARI</text>
<text x="519.45" y="781.9" font-family='"Liberation Sans", sans-serif' font-size="11.00" fill="#fff" textLength="20.64" lengthAdjust="spacingAndGlyphs" >SZC</text>
<text x="607.73" y="781.9" font-family='"Liberation Sans", sans-serif' font-size="11.00" fill="#fff" textLength="20.80" lengthAdjust="spacingAndGlyphs" >CAP</text>
<text x="808.22" y="781.9" font-family='"Liberation Sans", sans-serif' font-size="11.00" fill="#fff" textLength="21.59" lengthAdjust="spacingAndGlyphs" >NUE</text>
<text x="950.41" y="781.9" font-family='"Liberation Sans", sans-serif' font-size="11.00" fill="#fff" textLength="22.02" lengthAdjust="spacingAndGlyphs" >OCT</text>
<text x="1050.14" y="781.9" font-family='"Liberation Sans", sans-serif' font-size="11.00" fill="#fff" textLength="18.35" lengthAdjust="spacingAndGlyphs" >ORI</text>
<text x="1174.69" y="781.9" font-family='"Liberation Sans", sans-serif' font-size="11.00" fill="#fff" textLength="24.18" lengthAdjust="spacingAndGlyphs" >AMO</text>
<text x="1244.85" y="781.9" font-family='"Liberation Sans", sans-serif' font-size="11.00" fill="#fff" textLength="21.20" lengthAdjust="spacingAndGlyphs" >DPC</text>
<text x="1320.39" y="781.9" font-family='"Liberation Sans", sans-serif' font-size="11.00" fill="#fff" textLength="17.23" lengthAdjust="spacingAndGlyphs" >XVI</text>
<text x="1396.05" y="781.9" font-family='"Liberation Sans", sans-serif' font-size="11.00" fill="#fff" textLength="22.81" lengthAdjust="spacingAndGlyphs" >QUA</text>
<text x="1548.34" y="781.9" font-family='"Liberation Sans", sans-serif' font-size="11.00" fill="#fff" textLength="22.13" lengthAdjust="spacingAndGlyphs" >AAN</text>
<text x="342.69" y="765.8" font-family='"Liberation Sans", sans-serif' font-size="11.00" fill="#fff" textLength="20.64" lengthAdjust="spacingAndGlyphs" >TAH</text>
<text x="422.60" y="765.8" font-family='"Liberation Sans", sans-serif' font-size="11.00" fill="#fff" textLength="17.41" lengthAdjust="spacingAndGlyphs" >JEA</text>
<text x="473.82" y="765.8" font-family='"Liberation Sans", sans-serif' font-size="11.00" fill="#fff" textLength="13.24" lengthAdjust="spacingAndGlyphs" >JIP</text>
<text x="530.22" y="765.8" font-family='"Liberation Sans", sans-serif' font-size="11.00" fill="#fff" textLength="18.78" lengthAdjust="spacingAndGlyphs" >PPS</text>
<text x="568.40" y="765.8" font-family='"Liberation Sans", sans-serif' font-size="11.00" fill="#fff" textLength="20.79" lengthAdjust="spacingAndGlyphs" >ZCS</text>
<text x="621.10" y="765.8" font-family='"Liberation Sans", sans-serif' font-size="11.00" fill="#fff" textLength="23.48" lengthAdjust="spacingAndGlyphs" >GDR</text>
<text x="960.24" y="765.8" font-family='"Liberation Sans", sans-serif' font-size="11.00" fill="#fff" textLength="21.73" lengthAdjust="spacingAndGlyphs" >DRA</text>
<text x="1063.25" y="765.8" font-family='"Liberation Sans", sans-serif' font-size="11.00" fill="#fff" textLength="21.53" lengthAdjust="spacingAndGlyphs" >LUM</text>
<text x="1102.88" y="765.8" font-family='"Liberation Sans", sans-serif' font-size="11.00" fill="#fff" textLength="20.79" lengthAdjust="spacingAndGlyphs" >RPU</text>
<text x="1166.05" y="765.8" font-family='"Liberation Sans", sans-serif' font-size="11.00" fill="#fff" textLength="21.54" lengthAdjust="spacingAndGlyphs" >THA</text>
<text x="1250.30" y="765.8" font-family='"Liberation Sans", sans-serif' font-size="11.00" fill="#fff" textLength="20.16" lengthAdjust="spacingAndGlyphs" >PSU</text>
<text x="1460.87" y="765.8" font-family='"Liberation Sans", sans-serif' font-size="11.00" fill="#fff" textLength="20.51" lengthAdjust="spacingAndGlyphs" >XCB</text>
<text x="422.47" y="748.9" font-family='"Liberation Sans", sans-serif' font-size="11.00" fill="#fff" textLength="17.53" lengthAdjust="spacingAndGlyphs" >JRC</text>
<text x="533.41" y="748.9" font-family='"Liberation Sans", sans-serif' font-size="11.00" fill="#fff" textLength="21.97" lengthAdjust="spacingAndGlyphs" >CAN</text>
<text x="568.99" y="748.9" font-family='"Liberation Sans", sans-serif' font-size="11.00" fill="#fff" textLength="19.57" lengthAdjust="spacingAndGlyphs" >FAN</text>
<text x="671.92" y="748.9" font-family='"Liberation Sans", sans-serif' font-size="11.00" fill="#fff" textLength="20.04" lengthAdjust="spacingAndGlyphs" >PER</text>
<text x="1039.58" y="748.9" font-family='"Liberation Sans", sans-serif' font-size="11.00" fill="#fff" textLength="19.83" lengthAdjust="spacingAndGlyphs" >CTA</text>
<text x="1254.30" y="748.9" font-family='"Liberation Sans", sans-serif' font-size="11.00" fill="#fff" textLength="21.94" lengthAdjust="spacingAndGlyphs" >HYD</text>
<text x="1469.19" y="748.9" font-family='"Liberation Sans", sans-serif' font-size="11.00" fill="#fff" textLength="23.53" lengthAdjust="spacingAndGlyphs" >XUM</text>
<text x="430.19" y="732.8" font-family='"Liberation Sans", sans-serif' font-size="11.00" fill="#fff" textLength="22.83" lengthAdjust="spacingAndGlyphs" >COR</text>
<text x="646.66" y="732.8" font-family='"Liberation Sans", sans-serif' font-size="11.00" fill="#fff" textLength="21.30" lengthAdjust="spacingAndGlyphs" >SDA</text>
<text x="1040.72" y="732.8" font-family='"Liberation Sans", sans-serif' font-size="11.00" fill="#fff" textLength="17.67" lengthAdjust="spacingAndGlyphs" >LMI</text>
<text x="1157.07" y="732.8" font-family='"Liberation Sans", sans-serif' font-size="11.00" fill="#fff" textLength="20.30" lengthAdjust="spacingAndGlyphs" >LEO</text>
<text x="1264.85" y="732.8" font-family='"Liberation Sans", sans-serif' font-size="11.00" fill="#fff" textLength="20.84" lengthAdjust="spacingAndGlyphs" >EHY</text>
<text x="1490.31" y="732.8" font-family='"Liberation Sans", sans-serif' font-size="11.00" fill="#fff" textLength="20.75" lengthAdjust="spacingAndGlyphs" >ECV</text>
<text x="593.93" y="716.8" font-family='"Liberation Sans", sans-serif' font-size="11.00" fill="#fff" textLength="17.97" lengthAdjust="spacingAndGlyphs" >JXA</text>
<text x="705.49" y="716.8" font-family='"Liberation Sans", sans-serif' font-size="11.00" fill="#fff" textLength="21.27" lengthAdjust="spacingAndGlyphs" >KCG</text>
<text x="1145.96" y="716.8" font-family='"Liberation Sans", sans-serif' font-size="11.00" fill="#fff" textLength="22.79" lengthAdjust="spacingAndGlyphs" >AND</text>
<text x="1263.70" y="716.8" font-family='"Liberation Sans", sans-serif' font-size="11.00" fill="#fff" textLength="22.75" lengthAdjust="spacingAndGlyphs" >DAD</text>
<text x="658.80" y="699.9" font-family='"Liberation Sans", sans-serif' font-size="11.00" fill="#fff" textLength="16.59" lengthAdjust="spacingAndGlyphs" >ERI</text>
<text x="1098.33" y="699.9" font-family='"Liberation Sans", sans-serif' font-size="11.00" fill="#fff" textLength="20.10" lengthAdjust="spacingAndGlyphs" >SLD</text>
<text x="1200.39" y="699.9" font-family='"Liberation Sans", sans-serif' font-size="11.00" fill="#fff" textLength="21.83" lengthAdjust="spacingAndGlyphs" >ORS</text>
<text x="1287.81" y="699.9" font-family='"Liberation Sans", sans-serif' font-size="11.00" fill="#fff" textLength="23.41" lengthAdjust="spacingAndGlyphs" >GEM</text>
<text x="1111.64" y="683.9" font-family='"Liberation Sans", sans-serif' font-size="11.00" fill="#fff" textLength="22.82" lengthAdjust="spacingAndGlyphs" >KUM</text>
<path d="M113.8 834.0 H121.8 M117.8 830.0 V838.0 M241.0 834.0 H249.0 M245.0 830.0 V838.0 M510.8 834.0 H518.8 M514.8 830.0 V838.0 M706.8 834.0 H714.8 M710.8 830.0 V838.0 M833.9 834.0 H841.9 M837.9 830.0 V838.0 M962.0 834.0 H970.0 M966.0 830.0 V838.0 M986.8 834.0 H994.8 M990.8 830.0 V838.0 M1117.0 834.0 H1125.0 M1121.0 830.0 V838.0 M1295.5 834.0 H1303.5 M1299.5 830.0 V838.0 M1341.5 834.0 H1349.5 M1345.5 830.0 V838.0 M1413.0 834.0 H1421.0 M1417.0 830.0 V838.0 M1481.9 834.0 H1489.9 M1485.9 830.0 V838.0 M1530.8 834.0 H1538.8 M1534.8 830.0 V838.0 M1731.5 834.0 H1739.5 M1735.5 830.0 V838.0 M1765.7 834.0 H1773.7 M1769.7 830.0 V838.0" stroke="#fff" stroke-width="2.2"/>
<path d="M172.9 818.0 H180.9 M176.9 814.0 V822.0 M255.8 818.0 H263.8 M259.8 814.0 V822.0 M323.9 818.0 H331.9 M327.9 814.0 V822.0 M438.0 818.0 H446.0 M442.0 814.0 V822.0 M599.0 818.0 H607.0 M603.0 814.0 V822.0 M717.1 818.0 H725.1 M721.1 814.0 V822.0 M793.7 818.0 H801.7 M797.7 814.0 V822.0 M939.6 818.0 H947.6 M943.6 814.0 V822.0 M1006.0 818.0 H1014.0 M1010.0 814.0 V822.0 M1152.5 818.0 H1160.5 M1156.5 814.0 V822.0 M1250.5 818.0 H1258.5 M1254.5 814.0 V822.0 M1299.8 818.0 H1307.8 M1303.8 814.0 V822.0 M1349.2 818.0 H1357.2 M1353.2 814.0 V822.0 M1402.5 818.0 H1410.5 M1406.5 814.0 V822.0 M1466.8 818.0 H1474.8 M1470.8 814.0 V822.0 M1554.7 818.0 H1562.7 M1558.7 814.0 V822.0" stroke="#fff" stroke-width="2.2"/>
<path d="M175.0 801.9 H183.0 M179.0 797.9 V805.9 M378.8 801.9 H386.8 M382.8 797.9 V805.9 M545.0 801.9 H553.0 M549.0 797.9 V805.9 M682.7 801.9 H690.7 M686.7 797.9 V805.9 M741.8 801.9 H749.8 M745.8 797.9 V805.9 M1074.8 801.9 H1082.8 M1078.8 797.9 V805.9 M1216.8 801.9 H1224.8 M1220.8 797.9 V805.9 M1304.8 801.9 H1312.8 M1308.8 797.9 V805.9 M1466.8 801.9 H1474.8 M1470.8 797.9 V805.9 M1559.7 801.9 H1567.7 M1563.7 797.9 V805.9" stroke="#fff" stroke-width="2.2"/>
<path d="M202.0 785.0 H210.0 M206.0 781.0 V789.0 M401.0 785.0 H409.0 M405.0 781.0 V789.0 M525.9 785.0 H533.9 M529.9 781.0 V789.0 M639.0 785.0 H647.0 M643.0 781.0 V789.0 M814.8 785.0 H822.8 M818.8 781.0 V789.0 M959.8 785.0 H967.8 M963.8 781.0 V789.0 M1040.7 785.0 H1048.7 M1044.7 781.0 V789.0 M1187.8 785.0 H1195.8 M1191.8 781.0 V789.0 M1250.5 785.0 H1258.5 M1254.5 781.0 V789.0 M1324.8 785.0 H1332.8 M1328.8 781.0 V789.0 M1402.5 785.0 H1410.5 M1406.5 781.0 V789.0 M1545.6 785.0 H1553.6 M1549.6 781.0 V789.0" stroke="#fff" stroke-width="2.2"/>
<path d="M356.0 768.9 H364.0 M360.0 764.9 V772.9 M426.8 768.9 H434.8 M430.8 764.9 V772.9 M476.8 768.9 H484.8 M480.8 764.9 V772.9 M535.8 768.9 H543.8 M539.8 764.9 V772.9 M570.8 768.9 H578.8 M574.8 764.9 V772.9 M630.8 768.9 H638.8 M634.8 764.9 V772.9 M973.9 768.9 H981.9 M977.9 764.9 V772.9 M1069.8 768.9 H1077.8 M1073.8 764.9 V772.9 M1108.7 768.9 H1116.7 M1112.7 764.9 V772.9 M1178.0 768.9 H1186.0 M1182.0 764.9 V772.9 M1256.0 768.9 H1264.0 M1260.0 764.9 V772.9 M1466.8 768.9 H1474.8 M1470.8 764.9 V772.9" stroke="#fff" stroke-width="2.2"/>
<path d="M427.7 752.0 H435.7 M431.7 748.0 V756.0 M539.6 752.0 H547.6 M543.6 748.0 V756.0 M574.9 752.0 H582.9 M578.9 748.0 V756.0 M703.8 752.0 H711.8 M707.8 748.0 V756.0 M1095.0 752.0 H1103.0 M1099.0 748.0 V756.0 M1270.5 752.0 H1278.5 M1274.5 748.0 V756.0 M1476.6 752.0 H1484.6 M1480.6 748.0 V756.0" stroke="#fff" stroke-width="2.2"/>
<path d="M438.0 735.9 H446.0 M442.0 731.9 V739.9 M630.8 735.9 H638.8 M634.8 731.9 V739.9 M1038.7 735.9 H1046.7 M1042.7 731.9 V739.9 M1168.0 735.9 H1176.0 M1172.0 731.9 V739.9 M1274.8 735.9 H1282.8 M1278.8 731.9 V739.9 M1496.7 735.9 H1504.7 M1500.7 731.9 V739.9" stroke="#fff" stroke-width="2.2"/>
<path d="M599.0 719.9 H607.0 M603.0 715.9 V723.9 M726.8 719.9 H734.8 M730.8 715.9 V723.9 M1187.8 719.9 H1195.8 M1191.8 715.9 V723.9 M1270.5 719.9 H1278.5 M1274.5 715.9 V723.9" stroke="#fff" stroke-width="2.2"/>
<path d="M687.8 703.0 H695.8 M691.8 699.0 V707.0 M1101.7 703.0 H1109.7 M1105.7 699.0 V707.0 M1206.8 703.0 H1214.8 M1210.8 699.0 V707.0 M1299.8 703.0 H1307.8 M1303.8 699.0 V707.0" stroke="#fff" stroke-width="2.2"/>
<path d="M1118.5 687.0 H1126.5 M1122.5 683.0 V691.0" stroke="#fff" stroke-width="2.2"/>
<path d="M1042.0 842.5 V641.5" stroke="#ff0000" stroke-width="2.4" stroke-dasharray="5.1 2.2"/>
<rect x="20.5" y="641.5" width="1765.0" height="201.0" fill="none" stroke="#fff" stroke-width="1.1"/>
<path d="M20.5 842.5 V847.4" stroke="#fff" stroke-width="1.1"/>
<text x="16.23" y="861.8" font-family='"Liberation Sans", sans-serif' font-size="14.60" fill="#fff" textLength="8.14" lengthAdjust="spacingAndGlyphs" >0</text>
<path d="M265.5 842.5 V847.4" stroke="#fff" stroke-width="1.1"/>
<text x="257.09" y="861.8" font-family='"Liberation Sans", sans-serif' font-size="14.60" fill="#fff" textLength="16.88" lengthAdjust="spacingAndGlyphs" >50</text>
<path d="M510.5 842.5 V847.4" stroke="#fff" stroke-width="1.1"/>
<text x="497.72" y="861.8" font-family='"Liberation Sans", sans-serif' font-size="14.60" fill="#fff" textLength="25.85" lengthAdjust="spacingAndGlyphs" >100</text>
<path d="M755.5 842.5 V847.4" stroke="#fff" stroke-width="1.1"/>
<text x="742.89" y="861.8" font-family='"Liberation Sans", sans-serif' font-size="14.60" fill="#fff" textLength="25.85" lengthAdjust="spacingAndGlyphs" >150</text>
<path d="M1000.5 842.5 V847.4" stroke="#fff" stroke-width="1.1"/>
<text x="987.95" y="861.8" font-family='"Liberation Sans", sans-serif' font-size="14.60" fill="#fff" textLength="25.96" lengthAdjust="spacingAndGlyphs" >200</text>
<path d="M1246.5 842.5 V847.4" stroke="#fff" stroke-width="1.1"/>
<text x="1233.11" y="861.8" font-family='"Liberation Sans", sans-serif' font-size="14.60" fill="#fff" textLength="25.96" lengthAdjust="spacingAndGlyphs" >250</text>
<path d="M1491.5 842.5 V847.4" stroke="#fff" stroke-width="1.1"/>
<text x="1478.52" y="861.8" font-family='"Liberation Sans", sans-serif' font-size="14.60" fill="#fff" textLength="25.72" lengthAdjust="spacingAndGlyphs" >300</text>
<path d="M1736.5 842.5 V847.4" stroke="#fff" stroke-width="1.1"/>
<text x="1723.68" y="861.8" font-family='"Liberation Sans", sans-serif' font-size="14.60" fill="#fff" textLength="25.72" lengthAdjust="spacingAndGlyphs" >350</text>
<text x="829.35" y="882.0" font-family='"Liberation Sans", sans-serif' font-size="14.60" fill="#fff" textLength="146.27" lengthAdjust="spacingAndGlyphs" >Solar longitude (deg)</text>
</svg>
</body></html>
